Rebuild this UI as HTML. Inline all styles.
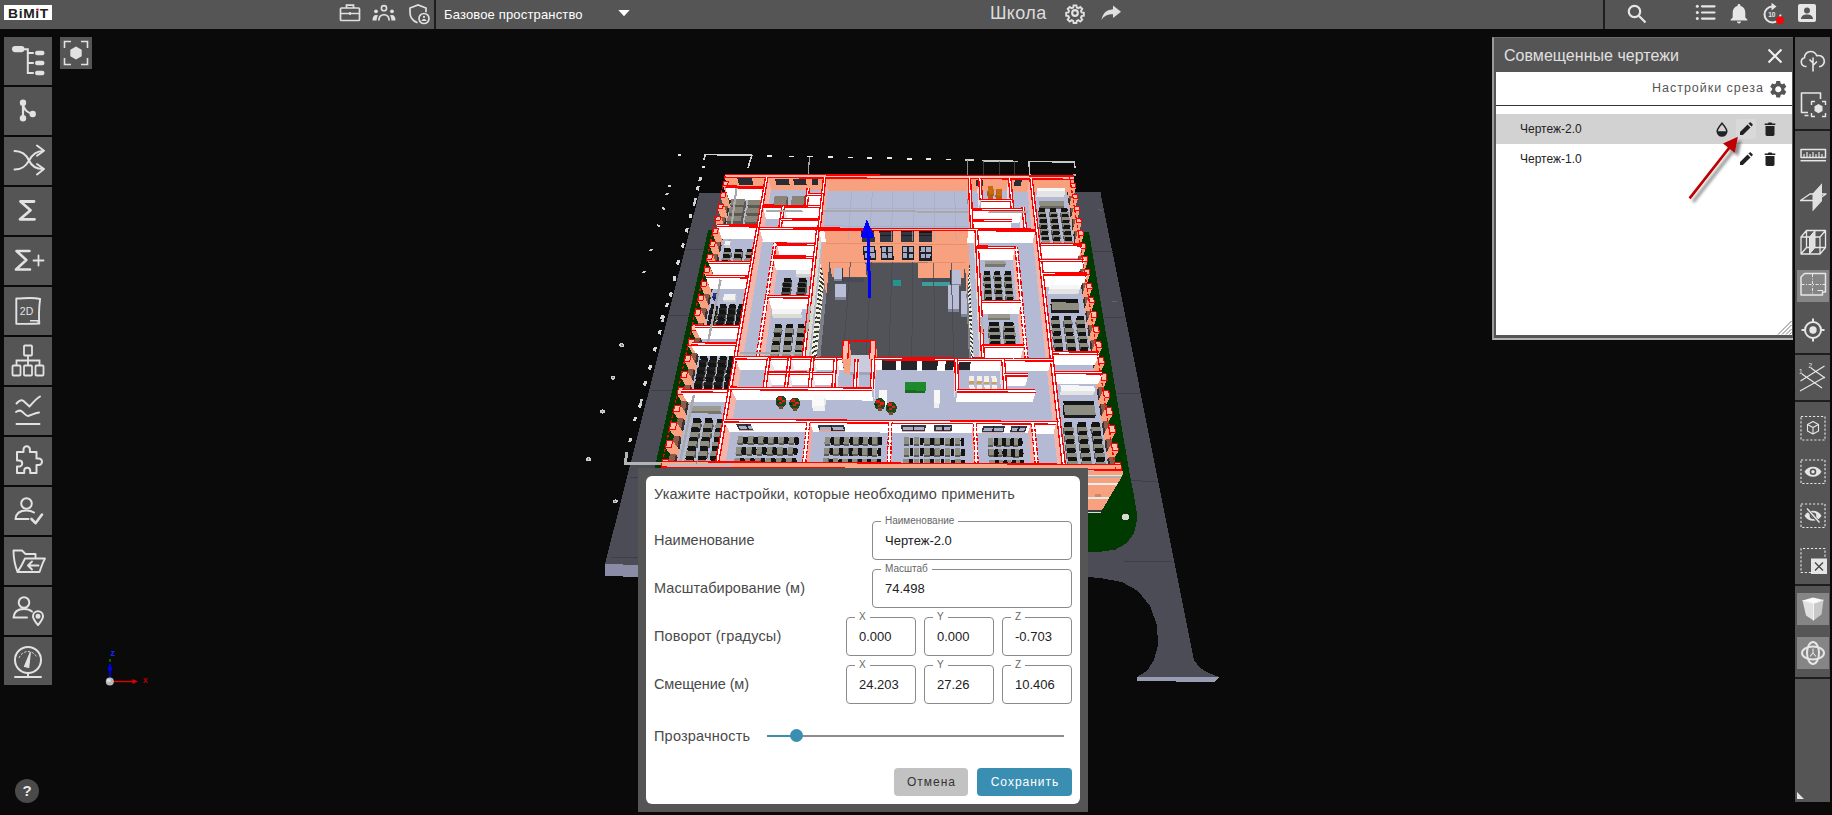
<!DOCTYPE html>
<html lang="ru">
<head>
<meta charset="utf-8">
<title>BIMIT - Школа</title>
<style>
*{box-sizing:border-box;margin:0;padding:0}
html,body{width:1832px;height:815px;overflow:hidden;background:#0a0a0a;font-family:"Liberation Sans",sans-serif;}
.abs{position:absolute}
#topbar{position:absolute;left:0;top:0;width:1832px;height:29px;background:#555555;}
#topbar .sep{position:absolute;top:0;width:2px;height:29px;background:#1e1e1e}
#logo{position:absolute;left:4px;top:5px;width:48px;height:15px;background:#fff;color:#222;font-weight:bold;font-size:12px;line-height:15px;text-align:center;letter-spacing:0.6px}
.lb{position:absolute;left:4px;width:48px;height:48px;background:#555555}
.lb svg{position:absolute;left:0;top:0;width:48px;height:48px}
#fit{position:absolute;left:60px;top:37px;width:32px;height:32px;background:#555555}
#space{position:absolute;left:444px;top:0;height:29px;line-height:29px;color:#fff;font-size:13px;letter-spacing:0.16px;white-space:nowrap}
#title{position:absolute;left:990px;top:0;height:27px;line-height:27px;color:#dcdcdc;font-size:18px;letter-spacing:0.36px;white-space:nowrap}
#rbar{position:absolute;left:1795px;top:37px;width:35px;height:765px;background:#555555}
#rbar .hs{position:absolute;left:0;width:35px;height:2px;background:#1e1e1e}
#rbar .hl{position:absolute;left:2px;width:32px;height:32px;background:#858585}
#panel{position:absolute;left:1492px;top:37px;width:301px;height:303px;background:#555555;border-left:2px solid #9a9a9a;border-top:1px solid #6a6a6a;border-bottom:2px solid #b2b2b2}
#panel .body{position:absolute;left:2px;top:34px;width:296px;height:263px;background:#fff}
#panel .ttl{position:absolute;left:10px;top:0;height:34px;line-height:35px;font-size:16px;letter-spacing:0.03px;color:#e0e0e0;white-space:nowrap}
#panel .set{position:absolute;right:28px;top:0;height:33px;line-height:33px;font-size:12.5px;letter-spacing:0.97px;color:#555;white-space:nowrap}
#panel .line{position:absolute;left:0;top:33px;width:296px;height:1px;background:#333}
.row{position:absolute;left:0;width:296px;height:30px;font-size:12px;line-height:30px;color:#222;padding-left:24px;white-space:nowrap}
.row.sel{background:#d2d2d2}
#dlg{position:absolute;left:638px;top:468px;width:450px;height:344px;background:#555555}
#dlg .in{position:absolute;left:8px;top:8px;width:434px;height:328px;background:#fff;border-radius:6px}
.dl{position:absolute;left:654px;font-size:14.5px;color:#4a4a4a;white-space:nowrap;height:20px;line-height:20px}
.fld{position:absolute;height:39px;border:1px solid #8a8a8a;border-radius:4px;background:#fff}
.fld .lab{position:absolute;left:8px;top:-6px;height:10px;line-height:10px;font-size:10px;color:#666;background:#fff;padding:0 4px;white-space:nowrap}
.fld .val{position:absolute;left:12px;top:0;height:37px;line-height:38px;font-size:13px;color:#222;white-space:nowrap}
.btn{position:absolute;top:768px;height:28px;line-height:28px;border-radius:4px;font-size:12px;letter-spacing:1px;text-indent:1px;text-align:center;white-space:nowrap}
</style>
</head>
<body>
<svg class="abs" style="left:0;top:0" width="1832" height="815" viewBox="0 0 1832 815" shape-rendering="crispEdges">
<polygon points="699.2,193.1 1100.4,191.9 1194,660 1200,668 1209,673 1219,677 1214,682 1137,680 1137,677 1147,671 1154,660 1158,645 1157,625 1150,606 1138,591 1122,582 1100,578 1088,577 1088,577 640,577 605,576 605,564" fill="#4c4c56" />
<polygon points="605,564 640,565 640,577 605,576" fill="#8a8ca6" />
<polygon points="1137,677 1219,677 1214,682 1137,681" fill="#9a9cb4" />
<path d="M685.6 249.1L723.8 249.3" stroke="#3e3e48" stroke-width="1"/>
<path d="M1076.5 251.2L1113.2 251.4" stroke="#3e3e48" stroke-width="1"/>
<path d="M669.5 315.1L710.3 315.3" stroke="#3e3e48" stroke-width="1"/>
<path d="M1086.6 317.5L1125.8 317.7" stroke="#3e3e48" stroke-width="1"/>
<path d="M651.2 390.5L694.9 390.7" stroke="#3e3e48" stroke-width="1"/>
<path d="M1098.1 393.3L1140.1 393.6" stroke="#3e3e48" stroke-width="1"/>
<path d="M630.1 477.5L677.1 477.8" stroke="#3e3e48" stroke-width="1"/>
<path d="M1111.5 480.8L1156.7 481.1" stroke="#3e3e48" stroke-width="1"/>
<path d="M610.6 557.4L660.7 557.8" stroke="#3e3e48" stroke-width="1"/>
<path d="M1123.7 561.1L1171.9 561.5" stroke="#3e3e48" stroke-width="1"/>
<polygon points="708.2,229.8 1088.9,231.8 1136.0,511.8 645.6,508.4" fill="#003a00" />
<polygon points="935.1,498.7 1129.7,473.4 1134,495.5 1137,514 1136.4,523.7 1134,533.5 1126.6,543.3 1115.6,549.5 1098.4,552 1088,552 1000,552" fill="#003a00" />
<ellipse cx="1125.500" cy="517" rx="3.800" ry="3.200" fill="#d8d8d0"/>
<polygon points="690.9,368.1 1099.1,370.6 1070.7,188.7 729.4,186.9" fill="#b4b9d4" />
<polygon points="817.6,386.3 970.0,387.2 965.1,262.7 829.5,262.0" fill="#515359" />
<polygon points="824.1,229.5 968.2,230.3 965.1,262.7 829.5,262.0" fill="#f8a17e" />
<polygon points="824.1,229.5 810.6,358.3 817.6,386.3 829.5,262.0" fill="#c9c6b4" />
<polygon points="968.2,230.3 973.8,359.3 970.0,387.2 965.1,262.7" fill="#c9c6b4" />
<polygon points="824.1,229.5 820.6,263.0 826.4,294.4 829.5,262.0" fill="#f8a17e" />
<polygon points="968.2,230.3 969.7,263.8 966.4,295.2 965.1,262.7" fill="#f8a17e" />
<polygon points="829.5,262.0 865.3,262.2 866.8,277.5 832.1,277.4" fill="#f8a17e" />
<polygon points="918.5,262.5 965.1,262.7 963.7,278.1 918.4,277.8" fill="#f8a17e" />
<polygon points="833,277.5 864,277.5 864,281.5 834,281.5" fill="#484a58" />
<polygon points="922,277.5 959,277.5 958.5,282 922,282" fill="#484a58" />
<polygon points="922,281.5 950,282 950,286 922,285.5" fill="#3f9d98" />
<polygon points="893,279.5 901,279.5 901,285.5 893,285.5" fill="#22968c" />
<polygon points="893.5,263 900.5,263 900.5,280 893.5,280" fill="#50525e" />
<polygon points="833.5,268 842,268 842,279 833.5,279" fill="#b9bdd6" />
<polygon points="833.5,279 842,279 842,281 833.5,281" fill="#7f8398" />
<polygon points="951.2,269.8 960.6,269.8 960.6,283.5 951.2,283.5" fill="#b9bdd6" />
<polygon points="951.2,283.5 960.6,283.5 960.6,285.5 951.2,285.5" fill="#7f8398" />
<polygon points="835.4,283.5 845.8,283.5 845.8,297 835.4,297" fill="#b9bdd6" />
<polygon points="835.4,297 845.8,297 845.8,300 835.4,300" fill="#7f8398" />
<polygon points="947.9,285 959,285 959,309 947.9,309" fill="#b9bdd6" />
<polygon points="947.9,309 959,309 959,312 947.9,312" fill="#7f8398" />
<polygon points="961.4,290.7 970.2,290.7 970.2,314 961.4,314" fill="#b9bdd6" />
<polygon points="961.4,314 970.2,314 970.2,317 961.4,317" fill="#7f8398" />
<polygon points="842,268 843.3,268 843.3,281 842,281" fill="#33343c" />
<polygon points="950,270 951.2,270 951.2,284 950,284" fill="#33343c" />
<polygon points="861.2,231.1 874.1,231.2 874.9,242.2 862.3,242.1" fill="#34363f" />
<polygon points="861.5,234.6 874.3,234.7 874.4,236.1 861.7,236.0" fill="#1c1c22" />
<polygon points="861.2,231.1 874.1,231.2 874.1,232.3 861.3,232.2" fill="#15151a" />
<polygon points="862.6,245.6 875.2,245.7 876.3,260.3 864.1,260.2" fill="#1f2027" />
<polygon points="864.0,247.1 868.3,247.1 868.7,251.5 864.4,251.4" fill="#a4a9c4" />
<polygon points="864.6,253.2 868.8,253.2 869.2,257.7 865.1,257.7" fill="#a4a9c4" />
<polygon points="869.8,247.1 874.0,247.1 874.4,251.5 870.2,251.5" fill="#a4a9c4" />
<polygon points="870.3,253.2 874.5,253.3 874.9,257.8 870.7,257.8" fill="#a4a9c4" />
<polygon points="879.4,231.2 892.5,231.3 893.0,242.3 880.1,242.2" fill="#34363f" />
<polygon points="879.6,234.7 892.6,234.8 892.7,236.2 879.7,236.1" fill="#1c1c22" />
<polygon points="879.4,231.2 892.5,231.3 892.5,232.4 879.5,232.3" fill="#15151a" />
<polygon points="880.4,245.7 893.1,245.8 893.7,260.4 881.3,260.3" fill="#1f2027" />
<polygon points="881.7,247.2 886.1,247.2 886.3,251.6 882.0,251.5" fill="#a4a9c4" />
<polygon points="882.1,253.3 886.4,253.3 886.7,257.8 882.4,257.8" fill="#a4a9c4" />
<polygon points="887.6,247.2 891.9,247.2 892.1,251.6 887.8,251.6" fill="#a4a9c4" />
<polygon points="887.9,253.3 892.2,253.4 892.4,257.9 888.1,257.9" fill="#a4a9c4" />
<polygon points="901.1,231.3 914.2,231.4 914.3,242.4 901.4,242.3" fill="#34363f" />
<polygon points="901.2,234.9 914.2,234.9 914.2,236.3 901.3,236.2" fill="#1c1c22" />
<polygon points="901.1,231.3 914.2,231.4 914.2,232.5 901.2,232.4" fill="#15151a" />
<polygon points="901.5,245.9 914.3,245.9 914.3,260.5 901.9,260.4" fill="#1f2027" />
<polygon points="902.8,247.3 907.2,247.3 907.2,251.7 903.0,251.7" fill="#a4a9c4" />
<polygon points="903.0,253.4 907.3,253.5 907.3,258.0 903.1,257.9" fill="#a4a9c4" />
<polygon points="908.7,247.3 913.0,247.4 913.0,251.7 908.8,251.7" fill="#a4a9c4" />
<polygon points="908.8,253.5 913.0,253.5 913.1,258.0 908.8,258.0" fill="#a4a9c4" />
<polygon points="919.4,231.4 932.5,231.5 932.1,242.5 919.3,242.4" fill="#34363f" />
<polygon points="919.4,235.0 932.4,235.0 932.3,236.4 919.4,236.3" fill="#1c1c22" />
<polygon points="919.4,231.4 932.5,231.5 932.4,232.6 919.4,232.5" fill="#15151a" />
<polygon points="919.3,246.0 932.0,246.0 931.6,260.6 919.2,260.5" fill="#1f2027" />
<polygon points="920.6,247.4 924.9,247.4 924.8,251.8 920.5,251.8" fill="#a4a9c4" />
<polygon points="920.5,253.5 924.8,253.5 924.7,258.1 920.5,258.0" fill="#a4a9c4" />
<polygon points="926.4,247.4 930.7,247.4 930.6,251.8 926.3,251.8" fill="#a4a9c4" />
<polygon points="926.3,253.6 930.6,253.6 930.4,258.1 926.2,258.1" fill="#a4a9c4" />
<path d="M826.4 243.5L966.9 244.3" stroke="#d98a68" stroke-width="0.700"/>
<path d="M829.5 262.0L965.1 262.7" stroke="#d98a68" stroke-width="0.700"/>
<path d="M842.9 360.5L850.4 262.1" stroke="#484a50" stroke-width="0.800"/>
<path d="M865.8 360.7L871.2 262.2" stroke="#484a50" stroke-width="0.800"/>
<path d="M888.8 360.8L892.1 262.3" stroke="#484a50" stroke-width="0.800"/>
<path d="M911.7 360.9L912.9 262.4" stroke="#484a50" stroke-width="0.800"/>
<path d="M934.6 361.1L933.8 262.5" stroke="#484a50" stroke-width="0.800"/>
<path d="M953.7 361.2L951.2 262.6" stroke="#484a50" stroke-width="0.800"/>
<polygon points="810.6,358.3 810.8,356.4 815.1,373.7 814.9,375.5" fill="#f2f2e2" />
<polygon points="811.1,357.9 811.3,356.3 814.9,371.1 814.8,372.6" fill="#3c3c38" />
<polygon points="810.9,354.9 811.1,353.0 815.4,370.3 815.2,372.2" fill="#f2f2e2" />
<polygon points="811.5,354.4 811.7,352.9 815.3,367.7 815.1,369.2" fill="#3c3c38" />
<polygon points="811.3,351.4 811.5,349.5 815.7,367.0 815.5,368.8" fill="#f2f2e2" />
<polygon points="811.8,351.0 812.0,349.4 815.6,364.3 815.5,365.8" fill="#3c3c38" />
<polygon points="811.7,348.0 811.9,346.1 816.1,363.6 815.9,365.5" fill="#f2f2e2" />
<polygon points="812.2,347.6 812.4,346.0 815.9,361.0 815.8,362.5" fill="#3c3c38" />
<polygon points="812.0,344.6 812.2,342.7 816.4,360.3 816.2,362.1" fill="#f2f2e2" />
<polygon points="812.6,344.2 812.7,342.7 816.3,357.7 816.1,359.2" fill="#3c3c38" />
<polygon points="812.4,341.2 812.6,339.3 816.7,357.0 816.5,358.8" fill="#f2f2e2" />
<polygon points="812.9,340.8 813.1,339.3 816.6,354.4 816.5,355.9" fill="#3c3c38" />
<polygon points="812.7,337.8 812.9,336.0 817.0,353.8 816.9,355.6" fill="#f2f2e2" />
<polygon points="813.3,337.5 813.4,336.0 816.9,351.2 816.8,352.6" fill="#3c3c38" />
<polygon points="813.1,334.5 813.3,332.7 817.4,350.5 817.2,352.3" fill="#f2f2e2" />
<polygon points="813.6,334.1 813.8,332.7 817.3,347.9 817.1,349.4" fill="#3c3c38" />
<polygon points="813.4,331.2 813.6,329.4 817.7,347.3 817.5,349.1" fill="#f2f2e2" />
<polygon points="814.0,330.8 814.1,329.4 817.6,344.7 817.4,346.1" fill="#3c3c38" />
<polygon points="813.8,327.9 814.0,326.1 818.0,344.1 817.8,345.8" fill="#f2f2e2" />
<polygon points="814.3,327.6 814.5,326.1 817.9,341.5 817.8,342.9" fill="#3c3c38" />
<polygon points="814.1,324.6 814.3,322.8 818.3,340.9 818.2,342.6" fill="#f2f2e2" />
<polygon points="814.6,324.3 814.8,322.8 818.2,338.3 818.1,339.7" fill="#3c3c38" />
<polygon points="814.5,321.3 814.6,319.5 818.6,337.7 818.5,339.4" fill="#f2f2e2" />
<polygon points="815.0,321.1 815.1,319.6 818.5,335.1 818.4,336.5" fill="#3c3c38" />
<polygon points="814.8,318.1 815.0,316.3 819.0,334.5 818.8,336.3" fill="#f2f2e2" />
<polygon points="815.3,317.8 815.5,316.4 818.8,332.0 818.7,333.4" fill="#3c3c38" />
<polygon points="815.1,314.9 815.3,313.1 819.3,331.4 819.1,333.1" fill="#f2f2e2" />
<polygon points="815.7,314.6 815.8,313.2 819.2,328.8 819.0,330.2" fill="#3c3c38" />
<polygon points="815.5,311.7 815.7,309.9 819.6,328.3 819.4,330.0" fill="#f2f2e2" />
<polygon points="816.0,311.4 816.1,310.0 819.5,325.7 819.3,327.1" fill="#3c3c38" />
<polygon points="815.8,308.5 816.0,306.7 819.9,325.2 819.7,326.9" fill="#f2f2e2" />
<polygon points="816.3,308.3 816.5,306.9 819.8,322.6 819.6,324.0" fill="#3c3c38" />
<polygon points="816.1,305.3 816.3,303.6 820.2,322.1 820.0,323.8" fill="#f2f2e2" />
<polygon points="816.6,305.1 816.8,303.7 820.1,319.5 819.9,320.9" fill="#3c3c38" />
<polygon points="816.5,302.2 816.7,300.5 820.5,319.0 820.3,320.7" fill="#f2f2e2" />
<polygon points="817.0,302.0 817.1,300.6 820.4,316.5 820.3,317.8" fill="#3c3c38" />
<polygon points="816.8,299.1 817.0,297.3 820.8,316.0 820.6,317.7" fill="#f2f2e2" />
<polygon points="817.3,298.9 817.4,297.5 820.7,313.4 820.6,314.8" fill="#3c3c38" />
<polygon points="817.1,296.0 817.3,294.3 821.1,313.0 820.9,314.6" fill="#f2f2e2" />
<polygon points="817.6,295.8 817.8,294.4 821.0,310.4 820.9,311.8" fill="#3c3c38" />
<polygon points="817.4,292.9 817.6,291.2 821.4,310.0 821.2,311.6" fill="#f2f2e2" />
<polygon points="817.9,292.7 818.1,291.4 821.3,307.4 821.2,308.7" fill="#3c3c38" />
<polygon points="817.8,289.8 817.9,288.1 821.7,307.0 821.5,308.6" fill="#f2f2e2" />
<polygon points="818.3,289.7 818.4,288.3 821.6,304.4 821.5,305.7" fill="#3c3c38" />
<polygon points="818.1,286.7 818.3,285.1 822.0,304.0 821.8,305.6" fill="#f2f2e2" />
<polygon points="818.6,286.6 818.7,285.3 821.9,301.4 821.8,302.8" fill="#3c3c38" />
<polygon points="818.4,283.7 818.6,282.0 822.3,301.0 822.1,302.6" fill="#f2f2e2" />
<polygon points="818.9,283.6 819.0,282.3 822.2,298.5 822.1,299.8" fill="#3c3c38" />
<polygon points="818.7,280.7 818.9,279.0 822.6,298.1 822.4,299.7" fill="#f2f2e2" />
<polygon points="819.2,280.6 819.3,279.3 822.5,295.5 822.4,296.8" fill="#3c3c38" />
<polygon points="819.0,277.7 819.2,276.1 822.9,295.1 822.7,296.8" fill="#f2f2e2" />
<polygon points="819.5,277.6 819.7,276.3 822.8,292.6 822.6,293.9" fill="#3c3c38" />
<polygon points="819.4,274.7 819.5,273.1 823.2,292.2 823.0,293.8" fill="#f2f2e2" />
<polygon points="819.8,274.7 820.0,273.3 823.1,289.7 822.9,291.0" fill="#3c3c38" />
<polygon points="819.7,271.8 819.8,270.1 823.5,289.3 823.3,290.9" fill="#f2f2e2" />
<polygon points="820.1,271.7 820.3,270.4 823.4,286.8 823.2,288.1" fill="#3c3c38" />
<polygon points="820.0,268.8 820.1,267.2 823.7,286.5 823.6,288.0" fill="#f2f2e2" />
<polygon points="820.4,268.8 820.6,267.5 823.6,283.9 823.5,285.2" fill="#3c3c38" />
<polygon points="820.3,265.9 820.5,264.3 824.0,283.6 823.9,285.2" fill="#f2f2e2" />
<polygon points="820.7,265.9 820.9,264.6 823.9,281.1 823.8,282.3" fill="#3c3c38" />
<polygon points="814.9,375.5 824.2,282.3 826.4,294.4 817.6,386.3" fill="#7c7e88" />
<polygon points="973.8,359.3 973.7,357.4 971.4,374.7 971.5,376.5" fill="#f2f2e2" />
<polygon points="973.6,358.9 973.5,357.3 971.5,372.0 971.5,373.6" fill="#3c3c38" />
<polygon points="973.7,355.9 973.6,354.0 971.3,371.3 971.3,373.1" fill="#f2f2e2" />
<polygon points="973.4,355.4 973.3,353.9 971.3,368.7 971.4,370.2" fill="#3c3c38" />
<polygon points="973.5,352.4 973.4,350.5 971.1,367.9 971.2,369.8" fill="#f2f2e2" />
<polygon points="973.3,352.0 973.2,350.4 971.2,365.3 971.3,366.8" fill="#3c3c38" />
<polygon points="973.4,349.0 973.3,347.1 971.0,364.6 971.1,366.4" fill="#f2f2e2" />
<polygon points="973.1,348.5 973.0,347.0 971.1,362.0 971.1,363.5" fill="#3c3c38" />
<polygon points="973.2,345.6 973.1,343.7 970.8,361.3 970.9,363.1" fill="#f2f2e2" />
<polygon points="973.0,345.2 972.9,343.6 970.9,358.7 971.0,360.1" fill="#3c3c38" />
<polygon points="973.1,342.2 973.0,340.3 970.7,358.0 970.8,359.8" fill="#f2f2e2" />
<polygon points="972.8,341.8 972.7,340.3 970.8,355.4 970.9,356.8" fill="#3c3c38" />
<polygon points="972.9,338.8 972.9,337.0 970.6,354.7 970.7,356.5" fill="#f2f2e2" />
<polygon points="972.7,338.4 972.6,336.9 970.7,352.1 970.7,353.6" fill="#3c3c38" />
<polygon points="972.8,335.5 972.7,333.6 970.4,351.4 970.5,353.2" fill="#f2f2e2" />
<polygon points="972.5,335.1 972.5,333.6 970.5,348.8 970.6,350.3" fill="#3c3c38" />
<polygon points="972.6,332.1 972.6,330.3 970.3,348.2 970.4,350.0" fill="#f2f2e2" />
<polygon points="972.4,331.8 972.3,330.3 970.4,345.6 970.5,347.1" fill="#3c3c38" />
<polygon points="972.5,328.8 972.4,327.0 970.2,345.0 970.3,346.8" fill="#f2f2e2" />
<polygon points="972.2,328.5 972.2,327.0 970.3,342.4 970.3,343.8" fill="#3c3c38" />
<polygon points="972.4,325.5 972.3,323.7 970.0,341.8 970.1,343.6" fill="#f2f2e2" />
<polygon points="972.1,325.2 972.0,323.8 970.1,339.2 970.2,340.6" fill="#3c3c38" />
<polygon points="972.2,322.3 972.1,320.5 969.9,338.6 970.0,340.4" fill="#f2f2e2" />
<polygon points="972.0,322.0 971.9,320.5 970.0,336.0 970.1,337.5" fill="#3c3c38" />
<polygon points="972.1,319.0 972.0,317.2 969.8,335.5 969.9,337.2" fill="#f2f2e2" />
<polygon points="971.8,318.8 971.7,317.3 969.9,332.9 969.9,334.3" fill="#3c3c38" />
<polygon points="971.9,315.8 971.9,314.0 969.7,332.3 969.7,334.0" fill="#f2f2e2" />
<polygon points="971.7,315.5 971.6,314.1 969.7,329.7 969.8,331.1" fill="#3c3c38" />
<polygon points="971.8,312.6 971.7,310.8 969.5,329.2 969.6,330.9" fill="#f2f2e2" />
<polygon points="971.5,312.4 971.5,310.9 969.6,326.6 969.7,328.0" fill="#3c3c38" />
<polygon points="971.7,309.4 971.6,307.7 969.4,326.1 969.5,327.8" fill="#f2f2e2" />
<polygon points="971.4,309.2 971.3,307.8 969.5,323.5 969.5,324.9" fill="#3c3c38" />
<polygon points="971.5,306.2 971.4,304.5 969.3,323.0 969.4,324.7" fill="#f2f2e2" />
<polygon points="971.3,306.0 971.2,304.6 969.4,320.4 969.4,321.8" fill="#3c3c38" />
<polygon points="971.4,303.1 971.3,301.4 969.2,319.9 969.2,321.6" fill="#f2f2e2" />
<polygon points="971.1,302.9 971.1,301.5 969.2,317.4 969.3,318.7" fill="#3c3c38" />
<polygon points="971.2,300.0 971.2,298.2 969.0,316.9 969.1,318.5" fill="#f2f2e2" />
<polygon points="971.0,299.8 970.9,298.4 969.1,314.3 969.2,315.7" fill="#3c3c38" />
<polygon points="971.1,296.8 971.0,295.1 968.9,313.8 969.0,315.5" fill="#f2f2e2" />
<polygon points="970.9,296.7 970.8,295.3 969.0,311.3 969.0,312.6" fill="#3c3c38" />
<polygon points="971.0,293.7 970.9,292.1 968.8,310.8 968.9,312.5" fill="#f2f2e2" />
<polygon points="970.7,293.6 970.7,292.2 968.9,308.3 968.9,309.6" fill="#3c3c38" />
<polygon points="970.8,290.7 970.8,289.0 968.7,307.8 968.7,309.5" fill="#f2f2e2" />
<polygon points="970.6,290.6 970.5,289.2 968.7,305.3 968.8,306.6" fill="#3c3c38" />
<polygon points="970.7,287.6 970.6,285.9 968.5,304.8 968.6,306.5" fill="#f2f2e2" />
<polygon points="970.5,287.5 970.4,286.1 968.6,302.3 968.7,303.6" fill="#3c3c38" />
<polygon points="970.6,284.6 970.5,282.9 968.4,301.9 968.5,303.5" fill="#f2f2e2" />
<polygon points="970.3,284.5 970.3,283.1 968.5,299.3 968.6,300.6" fill="#3c3c38" />
<polygon points="970.4,281.6 970.4,279.9 968.3,298.9 968.4,300.5" fill="#f2f2e2" />
<polygon points="970.2,281.5 970.1,280.1 968.4,296.4 968.4,297.7" fill="#3c3c38" />
<polygon points="970.3,278.6 970.2,276.9 968.2,296.0 968.2,297.6" fill="#f2f2e2" />
<polygon points="970.1,278.5 970.0,277.2 968.3,293.4 968.3,294.8" fill="#3c3c38" />
<polygon points="970.2,275.6 970.1,273.9 968.1,293.1 968.1,294.7" fill="#f2f2e2" />
<polygon points="969.9,275.5 969.9,274.2 968.1,290.5 968.2,291.8" fill="#3c3c38" />
<polygon points="970.0,272.6 970.0,271.0 967.9,290.2 968.0,291.8" fill="#f2f2e2" />
<polygon points="969.8,272.6 969.7,271.2 968.0,287.6 968.1,288.9" fill="#3c3c38" />
<polygon points="969.9,269.7 969.8,268.0 967.8,287.3 967.9,288.9" fill="#f2f2e2" />
<polygon points="969.7,269.6 969.6,268.3 967.9,284.8 968.0,286.0" fill="#3c3c38" />
<polygon points="969.8,266.7 969.7,265.1 967.7,284.4 967.8,286.0" fill="#f2f2e2" />
<polygon points="969.6,266.7 969.5,265.4 967.8,281.9 967.8,283.2" fill="#3c3c38" />
<polygon points="971.5,376.5 967.7,283.1 966.4,295.2 970.0,387.2" fill="#7c7e88" />
<polygon points="668.2,475.5 1116.0,478.5 1099.0,369.6 691.2,367.1" fill="#b4b9d4" />
<path d="M847.9 240.7L852.0 188.8" stroke="#a6abc6" stroke-width="0.700"/>
<path d="M869.5 240.8L872.5 188.9" stroke="#a6abc6" stroke-width="0.700"/>
<path d="M891.2 240.9L893.0 189.0" stroke="#a6abc6" stroke-width="0.700"/>
<path d="M912.8 241.1L913.5 189.1" stroke="#a6abc6" stroke-width="0.700"/>
<path d="M934.5 241.2L934.0 189.2" stroke="#a6abc6" stroke-width="0.700"/>
<path d="M956.2 241.3L954.6 189.3" stroke="#a6abc6" stroke-width="0.700"/>
<path d="M824.2 225.9L969.9 226.7" stroke="#a6abc6" stroke-width="0.700"/>
<path d="M826.0 208.1L969.1 208.9" stroke="#a6abc6" stroke-width="0.700"/>
<rect x="766.5" y="155.0" width="5" height="1.6" fill="#e8e8e8" transform="rotate(0 769.0 155.8)"/>
<rect x="788.5" y="155.5" width="5" height="1.6" fill="#e8e8e8" transform="rotate(0 791.0 156.3)"/>
<rect x="827.9" y="156.2" width="5" height="1.6" fill="#e8e8e8" transform="rotate(0 830.4 157.0)"/>
<rect x="847.5" y="156.7" width="5" height="1.6" fill="#e8e8e8" transform="rotate(0 850.0 157.5)"/>
<rect x="867.1" y="156.9" width="5" height="1.6" fill="#e8e8e8" transform="rotate(0 869.6 157.7)"/>
<rect x="886.8" y="157.4" width="5" height="1.6" fill="#e8e8e8" transform="rotate(0 889.3 158.2)"/>
<rect x="906.5" y="157.9" width="5" height="1.6" fill="#e8e8e8" transform="rotate(0 909.0 158.7)"/>
<rect x="925.5" y="158.2" width="5" height="1.6" fill="#e8e8e8" transform="rotate(0 928.0 159.0)"/>
<rect x="945.5" y="158.7" width="5" height="1.6" fill="#e8e8e8" transform="rotate(0 948.0 159.5)"/>
<rect x="677.9" y="153.5" width="3" height="2" fill="#e8e8e8" transform="rotate(0 679.4 154.5)"/>
<path d="M704 160L705.2 154.5L751.8 155.3L748 168" stroke="#d0d0d0" stroke-width="1.6" fill="none"/>
<rect x="701.5" y="166.1" width="3" height="1.5" fill="#e8e8e8" transform="rotate(0 703.0 166.8)"/>
<path d="M809.5 156.5L808.3 174" stroke="#a0a0a0" stroke-width="1.2" fill="none"/>
<rect x="806.5" y="155.7" width="6" height="1.6" fill="#e8e8e8" transform="rotate(0 809.5 156.5)"/>
<path d="M965 160.2L973.6 160.3" stroke="#d0d0d0" stroke-width="1.6" fill="none"/>
<path d="M967.5 160L967.8 204" stroke="#8a8a8a" stroke-width="1.1" fill="none"/>
<path d="M982 160.7L1017.8 161.4" stroke="#c8c8c8" stroke-width="1.6" fill="none"/>
<path d="M983.5 161L984.0 176" stroke="#555555" stroke-width="0.7" fill="none"/>
<path d="M999.4 161L999.9 176" stroke="#555555" stroke-width="0.7" fill="none"/>
<path d="M1014 161L1014.5 176" stroke="#555555" stroke-width="0.7" fill="none"/>
<path d="M1030.3 185L1029 161.4L1074.3 162L1075 168" stroke="#c8c8c8" stroke-width="1.6" fill="none"/>
<rect x="1073.3" y="174.4" width="3" height="2" fill="#b0b0b0" transform="rotate(0 1074.8 175.4)"/>
<path d="M1098 209L1102 211" stroke="#6a6a72" stroke-width="0.8" fill="none"/>
<path d="M1112 301L1117 302" stroke="#6a6a72" stroke-width="0.8" fill="none"/>
<rect x="698.8" y="176.8" width="3" height="4.5" fill="#d8d8d8" transform="rotate(14 700.3 179.0)"/>
<rect x="696.3" y="185.8" width="3" height="4.5" fill="#d8d8d8" transform="rotate(14 697.8 188.0)"/>
<rect x="689.0" y="213.8" width="3" height="4.5" fill="#d8d8d8" transform="rotate(14 690.5 216.0)"/>
<rect x="685.3" y="227.8" width="3" height="4.5" fill="#d8d8d8" transform="rotate(14 686.8 230.0)"/>
<rect x="681.5" y="243.2" width="3" height="4.5" fill="#d8d8d8" transform="rotate(14 683.0 245.4)"/>
<rect x="676.5" y="260.2" width="3" height="4.5" fill="#d8d8d8" transform="rotate(14 678.0 262.5)"/>
<rect x="673.0" y="276.2" width="3" height="4.5" fill="#d8d8d8" transform="rotate(14 674.5 278.5)"/>
<rect x="669.3" y="292.2" width="3" height="4.5" fill="#d8d8d8" transform="rotate(14 670.8 294.5)"/>
<rect x="665.5" y="302.8" width="3" height="4.5" fill="#d8d8d8" transform="rotate(14 667.0 305.0)"/>
<rect x="660.5" y="314.8" width="3" height="4.5" fill="#d8d8d8" transform="rotate(14 662.0 317.0)"/>
<rect x="658.3" y="329.8" width="3" height="4.5" fill="#d8d8d8" transform="rotate(14 659.8 332.0)"/>
<rect x="653.4" y="346.8" width="3" height="4.5" fill="#d8d8d8" transform="rotate(14 654.9 349.0)"/>
<rect x="648.5" y="365.2" width="3" height="4.5" fill="#d8d8d8" transform="rotate(14 650.0 367.5)"/>
<rect x="643.5" y="381.2" width="3" height="4.5" fill="#d8d8d8" transform="rotate(14 645.0 383.5)"/>
<rect x="638.5" y="403.2" width="3" height="4.5" fill="#d8d8d8" transform="rotate(14 640.0 405.5)"/>
<rect x="633.5" y="416.8" width="3" height="4.5" fill="#d8d8d8" transform="rotate(14 635.0 419.0)"/>
<rect x="628.8" y="437.8" width="3" height="4.5" fill="#d8d8d8" transform="rotate(14 630.3 440.0)"/>
<rect x="693.5" y="198.0" width="2.5" height="8" fill="#d0d0d0" transform="rotate(14 694.7 202.0)"/>
<rect x="661.8" y="315.5" width="2.5" height="7" fill="#d0d0d0" transform="rotate(14 663.0 319.0)"/>
<rect x="639.8" y="398.5" width="2.5" height="7" fill="#d0d0d0" transform="rotate(14 641.0 402.0)"/>
<rect x="668.1" y="185.0" width="3" height="2" fill="#d0d0d0" transform="rotate(14 669.6 186.0)"/>
<rect x="665.5" y="193.0" width="3" height="2" fill="#d0d0d0" transform="rotate(14 667.0 194.0)"/>
<rect x="662.0" y="207.5" width="3" height="2" fill="#d0d0d0" transform="rotate(14 663.5 208.5)"/>
<rect x="657.0" y="224.7" width="3" height="2" fill="#d0d0d0" transform="rotate(14 658.5 225.7)"/>
<rect x="649.5" y="249.0" width="3" height="2" fill="#d0d0d0" transform="rotate(14 651.0 250.0)"/>
<rect x="642.5" y="271.0" width="3" height="2" fill="#d0d0d0" transform="rotate(14 644.0 272.0)"/>
<ellipse cx="621.7" cy="345.2" rx="2.600" ry="2.100" fill="#cfcfcf"/><ellipse cx="621.7" cy="345.2" rx="1" ry="0.800" fill="#777"/>
<ellipse cx="613" cy="377.8" rx="2.600" ry="2.100" fill="#cfcfcf"/><ellipse cx="613" cy="377.8" rx="1" ry="0.800" fill="#777"/>
<ellipse cx="602.5" cy="411.5" rx="2.600" ry="2.100" fill="#cfcfcf"/><ellipse cx="602.5" cy="411.5" rx="1" ry="0.800" fill="#777"/>
<ellipse cx="588.5" cy="459.2" rx="2.600" ry="2.100" fill="#cfcfcf"/><ellipse cx="588.5" cy="459.2" rx="1" ry="0.800" fill="#777"/>
<ellipse cx="615.3" cy="501.4" rx="2.600" ry="2.100" fill="#cfcfcf"/><ellipse cx="615.3" cy="501.4" rx="1" ry="0.800" fill="#777"/>
<path d="M626.5 452L625.5 463.5L740 464.5" stroke="#b4b4b4" stroke-width="3" fill="none"/>
<polygon points="731.2,190.0 732.6,183.1 733.8,187.0 732.4,193.8" fill="#3a3030"/>
<polygon points="726.7,190.0 731.2,190.0 732.6,183.1 728.1,183.1" fill="#8b5a48"/>
<polygon points="724.7,177.5 751.6,177.6 755.0,190.2 728.7,190.0" fill="#f8a17e"/>
<polygon points="724.7,177.5 751.6,177.6 752.2,174.5 725.4,174.3" fill="#f7c0b0"/>
<path d="M724.7 177.5L751.6 177.6" stroke="#ff0000" stroke-width="1.3" fill="none"/>
<path d="M725.4 174.3L752.2 174.5" stroke="#ff0000" stroke-width="1.3" fill="none"/>
<polygon points="737.2,178.4 754.6,178.5 756.4,184.9 739.1,184.9" fill="#2a2b33"/>
<polygon points="727.5,185.6 728.4,181.3 732.4,193.8 731.5,198.1" fill="#f8a17e"/>
<polygon points="722.9,185.5 727.5,185.6 731.5,198.1 727.0,198.1" fill="#f8a17e"/>
<polygon points="722.9,185.5 727.5,185.6 728.4,181.3 723.9,181.3" fill="#f7c0b0"/>
<polygon points="722.9,185.5 727.5,185.6 728.4,181.3 723.9,181.3" fill="none" stroke="#ff0000" stroke-width="1"/>
<polygon points="751.6,177.6 778.4,177.7 781.3,190.3 755.0,190.2" fill="#f8a17e"/>
<polygon points="751.6,177.6 778.4,177.7 778.9,174.6 752.2,174.5" fill="#f7c0b0"/>
<path d="M751.6 177.6L778.4 177.7" stroke="#ff0000" stroke-width="1.3" fill="none"/>
<path d="M752.2 174.5L778.9 174.6" stroke="#ff0000" stroke-width="1.3" fill="none"/>
<polygon points="1068.3,191.7 1067.3,184.8 1066.3,188.7 1067.3,195.6" fill="#3a3030"/>
<polygon points="1068.3,191.7 1072.8,191.8 1071.7,184.8 1067.3,184.8" fill="#8b5a48"/>
<polygon points="1047.6,179.1 1074.5,179.2 1071.2,191.8 1044.8,191.7" fill="#f8a17e"/>
<polygon points="1047.6,179.1 1074.5,179.2 1074.0,176.1 1047.2,176.0" fill="#f7c0b0"/>
<path d="M1047.6 179.1L1074.5 179.2" stroke="#ff0000" stroke-width="1.3" fill="none"/>
<path d="M1047.2 176.0L1074.0 176.1" stroke="#ff0000" stroke-width="1.3" fill="none"/>
<polygon points="728.8,201.3 730.3,194.3 731.5,198.1 730.0,205.1" fill="#3a3030"/>
<polygon points="724.2,201.3 728.8,201.3 730.3,194.3 725.8,194.2" fill="#8b5a48"/>
<polygon points="725.3,187.8 745.0,187.9 748.6,200.4 729.3,200.3" fill="#ffffff"/>
<polygon points="725.3,187.8 745.0,187.9 745.4,186.2 725.6,186.1" fill="#ffffff"/>
<path d="M725.3 187.8L745.0 187.9" stroke="#ff0000" stroke-width="1.3" fill="none"/>
<path d="M725.6 186.1L745.4 186.2" stroke="#ff0000" stroke-width="1.3" fill="none"/>
<polygon points="778.4,177.7 805.3,177.9 807.6,190.4 781.3,190.3" fill="#f8a17e"/>
<polygon points="778.4,177.7 805.3,177.9 805.7,174.7 778.9,174.6" fill="#f7c0b0"/>
<path d="M778.4 177.7L805.3 177.9" stroke="#ff0000" stroke-width="1.3" fill="none"/>
<path d="M778.9 174.6L805.7 174.7" stroke="#ff0000" stroke-width="1.3" fill="none"/>
<polygon points="766.3,186.6 768.0,177.0 771.1,189.5 769.5,199.2" fill="#f3b5aa"/>
<polygon points="763.8,186.6 766.3,186.6 768.0,177.0 765.5,176.9" fill="#ffffff"/>
<path d="M763.8 186.6L765.5 176.9" stroke="#ff0000" stroke-width="1.3" fill="none"/>
<path d="M766.3 186.6L768.0 177.0" stroke="#ff0000" stroke-width="1.3" fill="none"/>
<polygon points="774.9,178.6 788.5,178.6 789.8,185.1 776.4,185.0" fill="#2a2b33"/>
<polygon points="1020.6,179.0 1047.6,179.1 1044.8,191.7 1018.4,191.5" fill="#f8a17e"/>
<polygon points="1020.6,179.0 1047.6,179.1 1047.2,176.0 1020.3,175.8" fill="#f7c0b0"/>
<path d="M1020.6 179.0L1047.6 179.1" stroke="#ff0000" stroke-width="1.3" fill="none"/>
<path d="M1020.3 175.8L1047.2 176.0" stroke="#ff0000" stroke-width="1.3" fill="none"/>
<polygon points="1071.3,187.3 1070.6,183.0 1067.3,195.6 1068.0,199.9" fill="#f8a17e"/>
<polygon points="1071.3,187.3 1075.9,187.4 1072.5,199.9 1068.0,199.9" fill="#f8a17e"/>
<polygon points="1071.3,187.3 1075.9,187.4 1075.2,183.1 1070.6,183.0" fill="#f7c0b0"/>
<polygon points="1071.3,187.3 1075.9,187.4 1075.2,183.1 1070.6,183.0" fill="none" stroke="#ff0000" stroke-width="1"/>
<polygon points="793.0,178.7 806.3,178.7 807.4,185.2 794.3,185.1" fill="#2a2b33"/>
<polygon points="805.3,177.9 832.2,178.0 834.0,190.6 807.6,190.4" fill="#f8a17e"/>
<polygon points="805.3,177.9 832.2,178.0 832.5,174.9 805.7,174.7" fill="#f7c0b0"/>
<path d="M805.3 177.9L832.2 178.0" stroke="#ff0000" stroke-width="1.3" fill="none"/>
<path d="M805.7 174.7L832.5 174.9" stroke="#ff0000" stroke-width="1.3" fill="none"/>
<polygon points="745.0,187.9 764.8,188.0 768.0,200.5 748.6,200.4" fill="#ffffff"/>
<polygon points="745.0,187.9 764.8,188.0 765.1,186.3 745.4,186.2" fill="#ffffff"/>
<path d="M745.0 187.9L764.8 188.0" stroke="#ff0000" stroke-width="1.3" fill="none"/>
<path d="M745.4 186.2L765.1 186.3" stroke="#ff0000" stroke-width="1.3" fill="none"/>
<polygon points="725.0,197.1 726.0,192.7 730.0,205.1 729.1,209.5" fill="#f8a17e"/>
<polygon points="720.4,197.0 725.0,197.1 729.1,209.5 724.6,209.5" fill="#f8a17e"/>
<polygon points="720.4,197.0 725.0,197.1 726.0,192.7 721.4,192.6" fill="#f7c0b0"/>
<polygon points="720.4,197.0 725.0,197.1 726.0,192.7 721.4,192.6" fill="none" stroke="#ff0000" stroke-width="1"/>
<polygon points="1037.4,191.3 1065.4,191.4 1063.9,196.9 1036.2,196.8" fill="#e4e4e4"/>
<polygon points="1037.4,191.3 1065.4,191.4 1064.8,187.8 1036.9,187.6" fill="#f6f6f6"/>
<polygon points="993.7,178.8 1020.6,179.0 1018.4,191.5 992.1,191.4" fill="#f8a17e"/>
<polygon points="993.7,178.8 1020.6,179.0 1020.3,175.8 993.5,175.7" fill="#f7c0b0"/>
<path d="M993.7 178.8L1020.6 179.0" stroke="#ff0000" stroke-width="1.3" fill="none"/>
<path d="M993.5 175.7L1020.3 175.8" stroke="#ff0000" stroke-width="1.3" fill="none"/>
<polygon points="811.5,178.8 817.4,178.8 818.5,185.3 812.6,185.2" fill="#2a2b33"/>
<polygon points="743.9,205.2 745.0,199.5 746.3,203.9 745.2,209.6" fill="#5a5a52"/>
<polygon points="730.2,205.2 743.9,205.2 745.2,209.6 731.6,209.5" fill="#5a5a52"/>
<polygon points="730.2,205.2 743.9,205.2 745.0,199.5 731.3,199.4" fill="#8a8378"/>
<polygon points="832.2,178.0 859.1,178.1 860.3,190.7 834.0,190.6" fill="#f8a17e"/>
<polygon points="832.2,178.0 859.1,178.1 859.3,175.0 832.5,174.9" fill="#f7c0b0"/>
<path d="M832.2 178.0L859.1 178.1" stroke="#ff0000" stroke-width="1.3" fill="none"/>
<path d="M832.5 174.9L859.3 175.0" stroke="#ff0000" stroke-width="1.3" fill="none"/>
<polygon points="1014.8,179.8 1021.8,179.8 1020.7,186.3 1013.8,186.3" fill="#2a2b33"/>
<polygon points="1030.9,188.0 1029.8,178.3 1027.4,190.9 1028.5,200.5" fill="#f3b5aa"/>
<polygon points="1030.9,188.0 1033.4,188.0 1032.2,178.3 1029.8,178.3" fill="#ffffff"/>
<path d="M1030.9 188.0L1029.8 178.3" stroke="#ff0000" stroke-width="1.3" fill="none"/>
<path d="M1033.4 188.0L1032.2 178.3" stroke="#ff0000" stroke-width="1.3" fill="none"/>
<polygon points="966.8,178.7 993.7,178.8 992.1,191.4 965.7,191.3" fill="#f8a17e"/>
<polygon points="966.8,178.7 993.7,178.8 993.5,175.7 966.6,175.6" fill="#f7c0b0"/>
<path d="M966.8 178.7L993.7 178.8" stroke="#ff0000" stroke-width="1.3" fill="none"/>
<path d="M966.6 175.6L993.5 175.7" stroke="#ff0000" stroke-width="1.3" fill="none"/>
<polygon points="1070.1,203.1 1069.0,196.0 1068.0,199.9 1069.0,206.9" fill="#3a3030"/>
<polygon points="1070.1,203.1 1074.6,203.1 1073.5,196.0 1069.0,196.0" fill="#8b5a48"/>
<polygon points="859.1,178.1 886.0,178.3 886.6,190.9 860.3,190.7" fill="#f8a17e"/>
<polygon points="859.1,178.1 886.0,178.3 886.1,175.2 859.3,175.0" fill="#f7c0b0"/>
<path d="M859.1 178.1L886.0 178.3" stroke="#ff0000" stroke-width="1.3" fill="none"/>
<path d="M859.3 175.0L886.1 175.2" stroke="#ff0000" stroke-width="1.3" fill="none"/>
<polygon points="825.0,185.4 825.9,177.2 827.8,189.8 826.9,197.9" fill="#e8b0a4"/>
<polygon points="822.6,185.4 825.0,185.4 825.9,177.2 823.5,177.2" fill="#ffffff"/>
<path d="M822.6 185.4L823.5 177.2" stroke="#ff0000" stroke-width="1.3" fill="none"/>
<path d="M825.0 185.4L825.9 177.2" stroke="#ff0000" stroke-width="1.3" fill="none"/>
<polygon points="726.4,212.9 727.9,205.7 729.1,209.5 727.6,216.7" fill="#3a3030"/>
<polygon points="721.8,212.9 726.4,212.9 727.9,205.7 723.3,205.7" fill="#8b5a48"/>
<polygon points="939.8,178.6 966.8,178.7 965.7,191.3 939.3,191.1" fill="#f8a17e"/>
<polygon points="939.8,178.6 966.8,178.7 966.6,175.6 939.8,175.4" fill="#f7c0b0"/>
<path d="M939.8 178.6L966.8 178.7" stroke="#ff0000" stroke-width="1.3" fill="none"/>
<path d="M939.8 175.4L966.6 175.6" stroke="#ff0000" stroke-width="1.3" fill="none"/>
<polygon points="1009.1,185.8 1008.4,178.2 1006.5,190.8 1007.1,198.3" fill="#e0e0e8"/>
<polygon points="1009.1,185.8 1011.6,185.8 1010.9,178.2 1008.4,178.2" fill="#ffffff"/>
<path d="M1009.1 185.8L1008.4 178.2" stroke="#ff0000" stroke-width="1.3" fill="none"/>
<path d="M1011.6 185.8L1010.9 178.2" stroke="#ff0000" stroke-width="1.3" fill="none"/>
<polygon points="764.6,196.5 766.3,186.6 769.5,199.2 767.8,209.0" fill="#f3b5aa"/>
<polygon points="762.1,196.5 764.6,196.5 766.3,186.6 763.8,186.6" fill="#ffffff"/>
<path d="M762.1 196.5L763.8 186.6" stroke="#ff0000" stroke-width="1.3" fill="none"/>
<path d="M764.6 196.5L766.3 186.6" stroke="#ff0000" stroke-width="1.3" fill="none"/>
<polygon points="886.0,178.3 912.9,178.4 913.0,191.0 886.6,190.9" fill="#f8a17e"/>
<polygon points="886.0,178.3 912.9,178.4 913.0,175.3 886.1,175.2" fill="#f7c0b0"/>
<path d="M886.0 178.3L912.9 178.4" stroke="#ff0000" stroke-width="1.3" fill="none"/>
<path d="M886.1 175.2L913.0 175.3" stroke="#ff0000" stroke-width="1.3" fill="none"/>
<polygon points="761.1,205.3 762.1,199.6 763.3,204.0 762.3,209.7" fill="#5a5a52"/>
<polygon points="747.4,205.2 761.1,205.3 762.3,209.7 748.7,209.6" fill="#5a5a52"/>
<polygon points="747.4,205.2 761.1,205.3 762.1,199.6 748.5,199.5" fill="#8a8378"/>
<polygon points="912.9,178.4 939.8,178.6 939.3,191.1 913.0,191.0" fill="#f8a17e"/>
<polygon points="912.9,178.4 939.8,178.6 939.8,175.4 913.0,175.3" fill="#f7c0b0"/>
<path d="M912.9 178.4L939.8 178.6" stroke="#ff0000" stroke-width="1.3" fill="none"/>
<path d="M913.0 175.3L939.8 175.4" stroke="#ff0000" stroke-width="1.3" fill="none"/>
<polygon points="976.4,179.6 983.4,179.6 982.6,186.1 975.7,186.1" fill="#2a2b33"/>
<polygon points="979.1,185.3 978.7,178.0 977.4,190.6 977.8,197.9" fill="#e0e0e8"/>
<polygon points="979.1,185.3 981.6,185.3 981.1,178.0 978.7,178.0" fill="#ffffff"/>
<path d="M979.1 185.3L978.7 178.0" stroke="#ff0000" stroke-width="1.3" fill="none"/>
<path d="M981.6 185.3L981.1 178.0" stroke="#ff0000" stroke-width="1.3" fill="none"/>
<polygon points="1073.1,198.9 1072.4,194.5 1069.0,206.9 1069.7,211.3" fill="#f8a17e"/>
<polygon points="1073.1,198.9 1077.7,198.9 1074.3,211.3 1069.7,211.3" fill="#f8a17e"/>
<polygon points="1073.1,198.9 1077.7,198.9 1077.0,194.5 1072.4,194.5" fill="#f7c0b0"/>
<polygon points="1073.1,198.9 1077.7,198.9 1077.0,194.5 1072.4,194.5" fill="none" stroke="#ff0000" stroke-width="1"/>
<polygon points="968.6,186.1 968.2,178.0 967.1,190.6 967.5,198.7" fill="#e8b0a4"/>
<polygon points="968.6,186.1 971.0,186.2 970.6,178.0 968.2,178.0" fill="#ffffff"/>
<polygon points="742.3,213.3 743.4,207.5 744.7,211.8 743.6,217.6" fill="#5a5a52"/>
<polygon points="728.5,213.2 742.3,213.3 743.6,217.6 729.9,217.6" fill="#5a5a52"/>
<polygon points="728.5,213.2 742.3,213.3 743.4,207.5 729.7,207.4" fill="#8a8378"/>
<path d="M968.6 186.1L968.2 178.0" stroke="#ff0000" stroke-width="1.3" fill="none"/>
<path d="M971.0 186.2L970.6 178.0" stroke="#ff0000" stroke-width="1.3" fill="none"/>
<polygon points="988.6,193.5 988.1,186.2 987.3,193.1 987.8,200.4" fill="#b45c0a"/>
<polygon points="988.6,193.5 993.9,193.5 993.0,200.4 987.8,200.4" fill="#b45c0a"/>
<polygon points="988.6,193.5 993.9,193.5 993.3,186.2 988.1,186.2" fill="#c96a10"/>
<polygon points="785.4,208.0 787.2,195.5 788.2,199.9 786.4,212.3" fill="#5a5a52"/>
<polygon points="772.7,207.9 785.4,208.0 786.4,212.3 773.8,212.2" fill="#5a5a52"/>
<polygon points="772.7,207.9 785.4,208.0 787.2,195.5 774.7,195.5" fill="#8a8378"/>
<polygon points="722.5,208.9 723.5,204.3 727.6,216.7 726.7,221.2" fill="#f8a17e"/>
<polygon points="717.8,208.8 722.5,208.9 726.7,221.2 722.1,221.2" fill="#f8a17e"/>
<polygon points="717.8,208.8 722.5,208.9 723.5,204.3 718.8,204.3" fill="#f7c0b0"/>
<polygon points="717.8,208.8 722.5,208.9 723.5,204.3 718.8,204.3" fill="none" stroke="#ff0000" stroke-width="1"/>
<polygon points="1039.7,206.0 1064.3,206.1 1063.5,209.4 1039.0,209.3" fill="#66665e"/>
<polygon points="1039.7,206.0 1064.3,206.1 1063.6,201.2 1039.1,201.0" fill="#8d8d82"/>
<polygon points="996.9,196.0 996.3,188.6 995.4,195.5 995.9,202.8" fill="#b45c0a"/>
<polygon points="996.9,196.0 1002.1,196.0 1001.1,202.9 995.9,202.8" fill="#b45c0a"/>
<polygon points="996.9,196.0 1002.1,196.0 1001.5,188.6 996.3,188.6" fill="#c96a10"/>
<polygon points="1009.8,193.5 1009.1,185.8 1007.1,198.3 1007.8,206.0" fill="#e0e0e8"/>
<polygon points="1009.8,193.5 1012.3,193.6 1011.6,185.8 1009.1,185.8" fill="#ffffff"/>
<path d="M1009.8 193.5L1009.1 185.8" stroke="#ff0000" stroke-width="1.3" fill="none"/>
<path d="M1012.3 193.6L1011.6 185.8" stroke="#ff0000" stroke-width="1.3" fill="none"/>
<polygon points="824.1,193.7 825.0,185.4 826.9,197.9 826.1,206.2" fill="#e8b0a4"/>
<polygon points="821.6,193.7 824.1,193.7 825.0,185.4 822.6,185.4" fill="#ffffff"/>
<path d="M821.6 193.7L822.6 185.4" stroke="#ff0000" stroke-width="1.3" fill="none"/>
<path d="M824.1 193.7L825.0 185.4" stroke="#ff0000" stroke-width="1.3" fill="none"/>
<polygon points="1032.0,197.9 1030.9,188.0 1028.5,200.5 1029.5,210.4" fill="#f3b5aa"/>
<polygon points="1032.0,197.9 1034.5,197.9 1033.4,188.0 1030.9,188.0" fill="#ffffff"/>
<path d="M1032.0 197.9L1030.9 188.0" stroke="#ff0000" stroke-width="1.3" fill="none"/>
<path d="M1034.5 197.9L1033.4 188.0" stroke="#ff0000" stroke-width="1.3" fill="none"/>
<polygon points="803.0,208.0 804.6,195.6 805.5,200.0 803.9,212.4" fill="#5a5a52"/>
<polygon points="790.3,208.0 803.0,208.0 803.9,212.4 791.3,212.3" fill="#5a5a52"/>
<polygon points="790.3,208.0 803.0,208.0 804.6,195.6 792.1,195.6" fill="#8a8378"/>
<polygon points="759.7,213.4 760.7,207.6 761.9,211.9 760.9,217.7" fill="#5a5a52"/>
<polygon points="745.9,213.3 759.7,213.4 760.9,217.7 747.2,217.7" fill="#5a5a52"/>
<polygon points="745.9,213.3 759.7,213.4 760.7,207.6 747.0,207.5" fill="#8a8378"/>
<polygon points="808.4,197.1 809.5,188.2 811.8,200.7 810.7,209.6" fill="#e0e0e8"/>
<polygon points="805.9,197.1 808.4,197.1 809.5,188.2 807.1,188.1" fill="#ffffff"/>
<path d="M805.9 197.1L807.1 188.1" stroke="#ff0000" stroke-width="1.3" fill="none"/>
<path d="M808.4 197.1L809.5 188.2" stroke="#ff0000" stroke-width="1.3" fill="none"/>
<polygon points="1061.8,210.5 1061.5,208.2 1060.6,211.8 1060.9,214.0" fill="#141414"/>
<polygon points="1061.8,210.5 1067.7,210.5 1066.8,214.1 1060.9,214.0" fill="#141414"/>
<polygon points="1061.8,210.5 1067.7,210.5 1067.4,208.3 1061.5,208.2" fill="#141414"/>
<polygon points="1071.9,214.8 1070.7,207.5 1069.7,211.3 1070.8,218.5" fill="#3a3030"/>
<polygon points="1071.9,214.8 1076.5,214.8 1075.3,207.5 1070.7,207.5" fill="#8b5a48"/>
<polygon points="762.8,206.6 764.6,196.5 767.8,209.0 766.1,219.0" fill="#f3b5aa"/>
<polygon points="760.3,206.6 762.8,206.6 764.6,196.5 762.1,196.5" fill="#ffffff"/>
<path d="M760.3 206.6L762.1 196.5" stroke="#ff0000" stroke-width="1.3" fill="none"/>
<path d="M762.8 206.6L764.6 196.5" stroke="#ff0000" stroke-width="1.3" fill="none"/>
<polygon points="979.5,192.8 979.1,185.3 977.8,197.9 978.2,205.2" fill="#e0e0e8"/>
<polygon points="979.5,192.8 982.0,192.8 981.6,185.3 979.1,185.3" fill="#ffffff"/>
<path d="M979.5 192.8L979.1 185.3" stroke="#ff0000" stroke-width="1.3" fill="none"/>
<path d="M982.0 192.8L981.6 185.3" stroke="#ff0000" stroke-width="1.3" fill="none"/>
<polygon points="723.9,224.8 725.4,217.4 726.7,221.2 725.2,228.6" fill="#3a3030"/>
<polygon points="719.2,224.8 723.9,224.8 725.4,217.4 720.8,217.4" fill="#8b5a48"/>
<polygon points="1050.6,210.5 1050.3,208.2 1049.5,211.7 1049.8,214.0" fill="#141414"/>
<polygon points="1050.6,210.5 1056.5,210.5 1055.7,214.0 1049.8,214.0" fill="#141414"/>
<polygon points="1050.6,210.5 1056.5,210.5 1056.2,208.2 1050.3,208.2" fill="#141414"/>
<polygon points="740.7,221.5 741.9,215.6 743.2,219.9 742.1,225.8" fill="#5a5a52"/>
<polygon points="726.8,221.4 740.7,221.5 742.1,225.8 728.2,225.8" fill="#5a5a52"/>
<polygon points="726.8,221.4 740.7,221.5 741.9,215.6 728.0,215.5" fill="#8a8378"/>
<polygon points="807.4,195.2 822.7,195.3 824.7,207.8 809.7,207.7" fill="#ffffff"/>
<polygon points="807.4,195.2 822.7,195.3 822.9,193.6 807.6,193.5" fill="#ffffff"/>
<path d="M807.4 195.2L822.7 195.3" stroke="#ff0000" stroke-width="1.3" fill="none"/>
<path d="M807.6 193.5L822.9 193.6" stroke="#ff0000" stroke-width="1.3" fill="none"/>
<polygon points="1061.2,214.7 1060.7,211.7 1060.1,214.4 1060.5,217.4" fill="#5a5a52"/>
<polygon points="1061.2,214.7 1069.0,214.8 1068.2,217.5 1060.5,217.4" fill="#5a5a52"/>
<polygon points="1061.2,214.7 1069.0,214.8 1068.5,211.7 1060.7,211.7" fill="#8d8d82"/>
<polygon points="968.9,194.5 968.6,186.1 967.5,198.7 967.8,206.9" fill="#e8b0a4"/>
<polygon points="968.9,194.5 971.4,194.5 971.0,186.2 968.6,186.1" fill="#ffffff"/>
<path d="M968.9 194.5L968.6 186.1" stroke="#ff0000" stroke-width="1.3" fill="none"/>
<path d="M971.4 194.5L971.0 186.2" stroke="#ff0000" stroke-width="1.3" fill="none"/>
<polygon points="1039.4,210.4 1039.2,208.1 1038.4,211.7 1038.7,213.9" fill="#141414"/>
<polygon points="1039.4,210.4 1045.4,210.4 1044.6,213.9 1038.7,213.9" fill="#141414"/>
<polygon points="1039.4,210.4 1045.4,210.4 1045.1,208.2 1039.2,208.1" fill="#141414"/>
<polygon points="1050.0,214.7 1049.6,211.6 1048.9,214.4 1049.3,217.4" fill="#5a5a52"/>
<polygon points="1050.0,214.7 1057.8,214.7 1057.1,217.4 1049.3,217.4" fill="#5a5a52"/>
<polygon points="1050.0,214.7 1057.8,214.7 1057.3,211.7 1049.6,211.6" fill="#8d8d82"/>
<polygon points="1062.6,216.1 1062.3,213.8 1061.4,217.4 1061.7,219.6" fill="#141414"/>
<polygon points="1062.6,216.1 1068.6,216.2 1067.6,219.7 1061.7,219.6" fill="#141414"/>
<polygon points="1062.6,216.1 1068.6,216.2 1068.2,213.9 1062.3,213.8" fill="#141414"/>
<polygon points="1074.9,210.7 1074.2,206.2 1070.8,218.5 1071.5,223.0" fill="#f8a17e"/>
<polygon points="1074.9,210.7 1079.6,210.7 1076.1,223.1 1071.5,223.0" fill="#f8a17e"/>
<polygon points="1074.9,210.7 1079.6,210.7 1078.9,206.2 1074.2,206.2" fill="#f7c0b0"/>
<polygon points="1074.9,210.7 1079.6,210.7 1078.9,206.2 1074.2,206.2" fill="none" stroke="#ff0000" stroke-width="1"/>
<polygon points="1010.5,201.4 1009.8,193.5 1007.8,206.0 1008.5,213.8" fill="#e0e0e8"/>
<polygon points="1010.5,201.4 1013.0,201.4 1012.3,193.6 1009.8,193.5" fill="#ffffff"/>
<path d="M1010.5 201.4L1009.8 193.5" stroke="#ff0000" stroke-width="1.3" fill="none"/>
<path d="M1013.0 201.4L1012.3 193.6" stroke="#ff0000" stroke-width="1.3" fill="none"/>
<polygon points="758.3,221.6 759.3,215.7 760.5,220.0 759.5,225.9" fill="#5a5a52"/>
<polygon points="744.3,221.5 758.3,221.6 759.5,225.9 745.6,225.8" fill="#5a5a52"/>
<polygon points="744.3,221.5 758.3,221.6 759.3,215.7 745.4,215.6" fill="#8a8378"/>
<polygon points="719.9,220.9 720.9,216.3 725.2,228.6 724.2,233.2" fill="#f8a17e"/>
<polygon points="715.2,220.9 719.9,220.9 724.2,233.2 719.6,233.1" fill="#f8a17e"/>
<polygon points="715.2,220.9 719.9,220.9 720.9,216.3 716.2,216.3" fill="#f7c0b0"/>
<polygon points="715.2,220.9 719.9,220.9 720.9,216.3 716.2,216.3" fill="none" stroke="#ff0000" stroke-width="1"/>
<polygon points="823.2,202.1 824.1,193.7 826.1,206.2 825.2,214.5" fill="#e8b0a4"/>
<polygon points="820.7,202.1 823.2,202.1 824.1,193.7 821.6,193.7" fill="#ffffff"/>
<path d="M820.7 202.1L821.6 193.7" stroke="#ff0000" stroke-width="1.3" fill="none"/>
<path d="M823.2 202.1L824.1 193.7" stroke="#ff0000" stroke-width="1.3" fill="none"/>
<polygon points="762.6,206.9 782.2,207.0 785.1,219.4 765.9,219.3" fill="#ffffff"/>
<polygon points="762.6,206.9 782.2,207.0 782.5,205.2 762.9,205.1" fill="#ffffff"/>
<path d="M762.6 206.9L782.2 207.0" stroke="#ff0000" stroke-width="1.3" fill="none"/>
<path d="M762.9 205.1L782.5 205.2" stroke="#ff0000" stroke-width="1.3" fill="none"/>
<polygon points="1038.7,214.6 1038.4,211.6 1037.8,214.3 1038.2,217.3" fill="#5a5a52"/>
<polygon points="1038.7,214.6 1046.5,214.7 1045.9,217.4 1038.2,217.3" fill="#5a5a52"/>
<polygon points="1038.7,214.6 1046.5,214.7 1046.1,211.6 1038.4,211.6" fill="#8d8d82"/>
<polygon points="1051.4,216.1 1051.1,213.8 1050.2,217.3 1050.5,219.6" fill="#141414"/>
<polygon points="1051.4,216.1 1057.3,216.1 1056.4,219.6 1050.5,219.6" fill="#141414"/>
<polygon points="1051.4,216.1 1057.3,216.1 1057.0,213.8 1051.1,213.8" fill="#141414"/>
<polygon points="1062.0,220.4 1061.5,217.3 1060.8,220.0 1061.3,223.1" fill="#5a5a52"/>
<polygon points="1062.0,220.4 1069.8,220.5 1069.1,223.1 1061.3,223.1" fill="#5a5a52"/>
<polygon points="1062.0,220.4 1069.8,220.5 1069.4,217.4 1061.5,217.3" fill="#8d8d82"/>
<polygon points="1033.1,208.1 1032.0,197.9 1029.5,210.4 1030.6,220.4" fill="#f3b5aa"/>
<polygon points="807.3,206.3 808.4,197.1 810.7,209.6 809.6,218.6" fill="#e0e0e8"/>
<polygon points="1033.1,208.1 1035.7,208.1 1034.5,197.9 1032.0,197.9" fill="#ffffff"/>
<polygon points="804.7,206.3 807.3,206.3 808.4,197.1 805.9,197.1" fill="#ffffff"/>
<path d="M1033.1 208.1L1032.0 197.9" stroke="#ff0000" stroke-width="1.3" fill="none"/>
<path d="M1035.7 208.1L1034.5 197.9" stroke="#ff0000" stroke-width="1.3" fill="none"/>
<path d="M804.7 206.3L805.9 197.1" stroke="#ff0000" stroke-width="1.3" fill="none"/>
<path d="M807.3 206.3L808.4 197.1" stroke="#ff0000" stroke-width="1.3" fill="none"/>
<polygon points="980.0,200.3 979.5,192.8 978.2,205.2 978.6,212.7" fill="#e0e0e8"/>
<polygon points="980.0,200.3 982.5,200.3 982.0,192.8 979.5,192.8" fill="#ffffff"/>
<path d="M980.0 200.3L979.5 192.8" stroke="#ff0000" stroke-width="1.3" fill="none"/>
<path d="M982.5 200.3L982.0 192.8" stroke="#ff0000" stroke-width="1.3" fill="none"/>
<polygon points="1040.1,216.0 1039.8,213.7 1039.1,217.2 1039.3,219.5" fill="#141414"/>
<polygon points="1040.1,216.0 1046.1,216.1 1045.3,219.6 1039.3,219.5" fill="#141414"/>
<polygon points="1040.1,216.0 1046.1,216.1 1045.8,213.8 1039.8,213.7" fill="#141414"/>
<polygon points="739.1,229.9 740.3,223.9 741.6,228.2 740.5,234.2" fill="#5a5a52"/>
<polygon points="725.0,229.8 739.1,229.9 740.5,234.2 726.5,234.1" fill="#5a5a52"/>
<polygon points="725.0,229.8 739.1,229.9 740.3,223.9 726.3,223.8" fill="#8a8378"/>
<polygon points="996.5,201.3 1011.8,201.4 1009.7,213.7 994.8,213.7" fill="#ffffff"/>
<polygon points="996.5,201.3 1011.8,201.4 1011.6,199.6 996.4,199.5" fill="#ffffff"/>
<polygon points="761.1,217.0 762.8,206.6 766.1,219.0 764.4,229.2" fill="#f3b5aa"/>
<polygon points="758.5,217.0 761.1,217.0 762.8,206.6 760.3,206.6" fill="#ffffff"/>
<path d="M996.5 201.3L1011.8 201.4" stroke="#ff0000" stroke-width="1.3" fill="none"/>
<path d="M996.4 199.5L1011.6 199.6" stroke="#ff0000" stroke-width="1.3" fill="none"/>
<path d="M758.5 217.0L760.3 206.6" stroke="#ff0000" stroke-width="1.3" fill="none"/>
<path d="M761.1 217.0L762.8 206.6" stroke="#ff0000" stroke-width="1.3" fill="none"/>
<polygon points="1050.7,220.3 1050.3,217.3 1049.7,220.0 1050.0,223.0" fill="#5a5a52"/>
<polygon points="1050.7,220.3 1058.5,220.4 1057.8,223.1 1050.0,223.0" fill="#5a5a52"/>
<polygon points="1050.7,220.3 1058.5,220.4 1058.1,217.3 1050.3,217.3" fill="#8d8d82"/>
<polygon points="782.2,207.0 801.8,207.1 804.3,219.5 785.1,219.4" fill="#ffffff"/>
<polygon points="782.2,207.0 801.8,207.1 802.0,205.4 782.5,205.2" fill="#ffffff"/>
<path d="M782.2 207.0L801.8 207.1" stroke="#ff0000" stroke-width="1.3" fill="none"/>
<path d="M782.5 205.2L802.0 205.4" stroke="#ff0000" stroke-width="1.3" fill="none"/>
<polygon points="1063.5,221.8 1063.1,219.5 1062.2,223.0 1062.5,225.3" fill="#141414"/>
<polygon points="1063.5,221.8 1069.4,221.9 1068.5,225.4 1062.5,225.3" fill="#141414"/>
<polygon points="1063.5,221.8 1069.4,221.9 1069.1,219.5 1063.1,219.5" fill="#141414"/>
<polygon points="1073.7,226.7 1072.5,219.3 1071.5,223.0 1072.6,230.5" fill="#3a3030"/>
<polygon points="1073.7,226.7 1078.4,226.7 1077.2,219.3 1072.5,219.3" fill="#8b5a48"/>
<polygon points="969.3,202.9 968.9,194.5 967.8,206.9 968.2,215.3" fill="#e8b0a4"/>
<polygon points="969.3,202.9 971.9,202.9 971.4,194.5 968.9,194.5" fill="#ffffff"/>
<path d="M969.3 202.9L968.9 194.5" stroke="#ff0000" stroke-width="1.3" fill="none"/>
<path d="M971.9 202.9L971.4 194.5" stroke="#ff0000" stroke-width="1.3" fill="none"/>
<polygon points="981.3,201.2 996.5,201.3 994.8,213.7 979.9,213.6" fill="#ffffff"/>
<polygon points="981.3,201.2 996.5,201.3 996.4,199.5 981.2,199.4" fill="#ffffff"/>
<path d="M981.3 201.2L996.5 201.3" stroke="#ff0000" stroke-width="1.3" fill="none"/>
<path d="M981.2 199.4L996.4 199.5" stroke="#ff0000" stroke-width="1.3" fill="none"/>
<polygon points="721.3,237.0 722.9,229.4 724.2,233.2 722.6,240.7" fill="#3a3030"/>
<polygon points="716.6,237.0 721.3,237.0 722.9,229.4 718.2,229.4" fill="#8b5a48"/>
<polygon points="783.5,213.4 784.6,206.2 787.4,218.5 786.4,225.7" fill="#e0e0e8"/>
<polygon points="780.9,213.4 783.5,213.4 784.6,206.2 782.0,206.1" fill="#ffffff"/>
<path d="M780.9 213.4L782.0 206.1" stroke="#ff0000" stroke-width="1.3" fill="none"/>
<path d="M783.5 213.4L784.6 206.2" stroke="#ff0000" stroke-width="1.3" fill="none"/>
<polygon points="1039.4,220.3 1039.0,217.2 1038.5,219.9 1038.8,223.0" fill="#5a5a52"/>
<polygon points="1039.4,220.3 1047.2,220.3 1046.6,223.0 1038.8,223.0" fill="#5a5a52"/>
<polygon points="1039.4,220.3 1047.2,220.3 1046.9,217.3 1039.0,217.2" fill="#8d8d82"/>
<polygon points="1052.1,221.8 1051.8,219.4 1051.0,223.0 1051.3,225.3" fill="#141414"/>
<polygon points="1052.1,221.8 1058.1,221.8 1057.2,225.3 1051.3,225.3" fill="#141414"/>
<polygon points="1052.1,221.8 1058.1,221.8 1057.8,219.5 1051.8,219.4" fill="#141414"/>
<path d="M726.7 262.2L736.5 188.1" stroke="#a9a9a9" stroke-width="2.2" fill="none"/>
<path d="M766.0 210.7L823.3 211.0" stroke="#a9a9a9" stroke-width="2.2" fill="none"/>
<polygon points="1062.8,226.1 1062.4,223.0 1061.6,225.7 1062.1,228.8" fill="#5a5a52"/>
<polygon points="1062.8,226.1 1070.7,226.2 1069.9,228.9 1062.1,228.8" fill="#5a5a52"/>
<polygon points="1062.8,226.1 1070.7,226.2 1070.2,223.1 1062.4,223.0" fill="#8d8d82"/>
<polygon points="801.8,207.1 821.4,207.3 823.4,219.6 804.3,219.5" fill="#ffffff"/>
<polygon points="801.8,207.1 821.4,207.3 821.6,205.5 802.0,205.4" fill="#ffffff"/>
<path d="M801.8 207.1L821.4 207.3" stroke="#ff0000" stroke-width="1.3" fill="none"/>
<path d="M802.0 205.4L821.6 205.5" stroke="#ff0000" stroke-width="1.3" fill="none"/>
<polygon points="1011.2,209.4 1010.5,201.4 1008.5,213.8 1009.2,221.7" fill="#e0e0e8"/>
<polygon points="1011.2,209.4 1013.8,209.4 1013.0,201.4 1010.5,201.4" fill="#ffffff"/>
<path d="M1011.2 209.4L1010.5 201.4" stroke="#ff0000" stroke-width="1.3" fill="none"/>
<path d="M1013.8 209.4L1013.0 201.4" stroke="#ff0000" stroke-width="1.3" fill="none"/>
<polygon points="756.8,230.0 757.9,224.0 759.1,228.3 758.0,234.3" fill="#5a5a52"/>
<polygon points="742.7,229.9 756.8,230.0 758.0,234.3 744.1,234.2" fill="#5a5a52"/>
<polygon points="742.7,229.9 756.8,230.0 757.9,224.0 743.9,223.9" fill="#8a8378"/>
<polygon points="1040.8,221.7 1040.5,219.4 1039.7,222.9 1040.0,225.2" fill="#141414"/>
<polygon points="1040.8,221.7 1046.8,221.7 1046.0,225.2 1040.0,225.2" fill="#141414"/>
<polygon points="1040.8,221.7 1046.8,221.7 1046.5,219.4 1040.5,219.4" fill="#141414"/>
<polygon points="822.3,210.7 823.2,202.1 825.2,214.5 824.3,223.1" fill="#e8b0a4"/>
<polygon points="819.7,210.7 822.3,210.7 823.2,202.1 820.7,202.1" fill="#ffffff"/>
<path d="M819.7 210.7L820.7 202.1" stroke="#ff0000" stroke-width="1.3" fill="none"/>
<path d="M822.3 210.7L823.2 202.1" stroke="#ff0000" stroke-width="1.3" fill="none"/>
<polygon points="716.9,226.7 737.5,226.8 741.4,238.9 721.2,238.8" fill="#ffffff"/>
<polygon points="716.9,226.7 737.5,226.8 737.8,224.9 717.3,224.8" fill="#ffffff"/>
<path d="M716.9 226.7L737.5 226.8" stroke="#ff0000" stroke-width="1.3" fill="none"/>
<path d="M717.3 224.8L737.8 224.9" stroke="#ff0000" stroke-width="1.3" fill="none"/>
<polygon points="1051.4,226.1 1051.0,223.0 1050.4,225.6 1050.8,228.8" fill="#5a5a52"/>
<polygon points="1051.4,226.1 1059.3,226.1 1058.6,228.8 1050.8,228.8" fill="#5a5a52"/>
<polygon points="1051.4,226.1 1059.3,226.1 1058.9,223.0 1051.0,223.0" fill="#8d8d82"/>
<polygon points="1064.3,227.6 1063.9,225.2 1063.0,228.7 1063.3,231.1" fill="#141414"/>
<polygon points="1064.3,227.6 1070.3,227.6 1069.3,231.1 1063.3,231.1" fill="#141414"/>
<polygon points="1064.3,227.6 1070.3,227.6 1069.9,225.3 1063.9,225.2" fill="#141414"/>
<polygon points="1076.8,222.9 1076.1,218.2 1072.6,230.5 1073.3,235.1" fill="#f8a17e"/>
<polygon points="1076.8,222.9 1081.6,222.9 1078.0,235.1 1073.3,235.1" fill="#f8a17e"/>
<polygon points="1076.8,222.9 1081.6,222.9 1080.8,218.2 1076.1,218.2" fill="#f7c0b0"/>
<polygon points="1076.8,222.9 1081.6,222.9 1080.8,218.2 1076.1,218.2" fill="none" stroke="#ff0000" stroke-width="1"/>
<polygon points="717.3,233.3 718.3,228.6 722.6,240.7 721.7,245.4" fill="#f8a17e"/>
<polygon points="712.5,233.3 717.3,233.3 721.7,245.4 717.0,245.4" fill="#f8a17e"/>
<polygon points="712.5,233.3 717.3,233.3 718.3,228.6 713.5,228.6" fill="#f7c0b0"/>
<polygon points="712.5,233.3 717.3,233.3 718.3,228.6 713.5,228.6" fill="none" stroke="#ff0000" stroke-width="1"/>
<polygon points="1022.6,214.3 1021.8,206.9 1019.6,219.2 1020.3,226.6" fill="#e0e0e8"/>
<polygon points="1022.6,214.3 1025.1,214.3 1024.4,206.9 1021.8,206.9" fill="#ffffff"/>
<path d="M1022.6 214.3L1021.8 206.9" stroke="#ff0000" stroke-width="1.3" fill="none"/>
<path d="M1025.1 214.3L1024.4 206.9" stroke="#ff0000" stroke-width="1.3" fill="none"/>
<polygon points="1005.2,210.3 1021.6,210.4 1019.4,222.7 1003.3,222.6" fill="#ffffff"/>
<polygon points="1005.2,210.3 1021.6,210.4 1021.5,208.6 1005.1,208.5" fill="#ffffff"/>
<path d="M1005.2 210.3L1021.6 210.4" stroke="#ff0000" stroke-width="1.3" fill="none"/>
<path d="M1005.1 208.5L1021.5 208.6" stroke="#ff0000" stroke-width="1.3" fill="none"/>
<polygon points="1040.1,226.0 1039.7,222.9 1039.1,225.6 1039.5,228.7" fill="#5a5a52"/>
<polygon points="1040.1,226.0 1048.0,226.1 1047.3,228.7 1039.5,228.7" fill="#5a5a52"/>
<polygon points="1040.1,226.0 1048.0,226.1 1047.6,222.9 1039.7,222.9" fill="#8d8d82"/>
<polygon points="1034.3,218.4 1033.1,208.1 1030.6,220.4 1031.7,230.7" fill="#f3b5aa"/>
<polygon points="1034.3,218.4 1036.9,218.5 1035.7,208.1 1033.1,208.1" fill="#ffffff"/>
<path d="M1034.3 218.4L1033.1 208.1" stroke="#ff0000" stroke-width="1.3" fill="none"/>
<path d="M1036.9 218.5L1035.7 208.1" stroke="#ff0000" stroke-width="1.3" fill="none"/>
<polygon points="1052.9,227.5 1052.6,225.2 1051.7,228.7 1052.0,231.0" fill="#141414"/>
<polygon points="1052.9,227.5 1058.9,227.6 1058.0,231.0 1052.0,231.0" fill="#141414"/>
<polygon points="1052.9,227.5 1058.9,227.6 1058.6,225.2 1052.6,225.2" fill="#141414"/>
<polygon points="1063.6,231.9 1063.2,228.8 1062.5,231.5 1062.9,234.6" fill="#5a5a52"/>
<polygon points="1063.6,231.9 1071.5,232.0 1070.8,234.6 1062.9,234.6" fill="#5a5a52"/>
<polygon points="1063.6,231.9 1071.5,232.0 1071.1,228.8 1063.2,228.8" fill="#8d8d82"/>
<polygon points="782.4,220.7 783.5,213.4 786.4,225.7 785.3,233.0" fill="#e0e0e8"/>
<polygon points="779.8,220.7 782.4,220.7 783.5,213.4 780.9,213.4" fill="#ffffff"/>
<path d="M779.8 220.7L780.9 213.4" stroke="#ff0000" stroke-width="1.3" fill="none"/>
<path d="M782.4 220.7L783.5 213.4" stroke="#ff0000" stroke-width="1.3" fill="none"/>
<polygon points="759.2,227.5 761.1,217.0 764.4,229.2 762.7,239.7" fill="#f3b5aa"/>
<polygon points="756.7,227.5 759.2,227.5 761.1,217.0 758.5,217.0" fill="#ffffff"/>
<path d="M756.7 227.5L758.5 217.0" stroke="#ff0000" stroke-width="1.3" fill="none"/>
<path d="M759.2 227.5L761.1 217.0" stroke="#ff0000" stroke-width="1.3" fill="none"/>
<polygon points="988.8,210.2 1005.2,210.3 1003.3,222.6 987.2,222.5" fill="#ffffff"/>
<polygon points="988.8,210.2 1005.2,210.3 1005.1,208.5 988.7,208.4" fill="#ffffff"/>
<path d="M988.8 210.2L1005.2 210.3" stroke="#ff0000" stroke-width="1.3" fill="none"/>
<path d="M988.7 208.4L1005.1 208.5" stroke="#ff0000" stroke-width="1.3" fill="none"/>
<path d="M970.5 211.8L1028.0 212.1" stroke="#a9a9a9" stroke-width="2.2" fill="none"/>
<polygon points="969.7,211.5 969.3,202.9 968.2,215.3 968.6,223.8" fill="#e8b0a4"/>
<polygon points="969.7,211.5 972.3,211.5 971.9,202.9 969.3,202.9" fill="#ffffff"/>
<path d="M969.7 211.5L969.3 202.9" stroke="#ff0000" stroke-width="1.3" fill="none"/>
<path d="M972.3 211.5L971.9 202.9" stroke="#ff0000" stroke-width="1.3" fill="none"/>
<polygon points="1041.5,227.5 1041.2,225.1 1040.4,228.6 1040.7,231.0" fill="#141414"/>
<polygon points="1041.5,227.5 1047.5,227.5 1046.7,231.0 1040.7,231.0" fill="#141414"/>
<polygon points="1041.5,227.5 1047.5,227.5 1047.2,225.2 1041.2,225.1" fill="#141414"/>
<polygon points="737.5,226.8 758.1,226.9 761.5,239.0 741.4,238.9" fill="#ffffff"/>
<polygon points="737.5,226.8 758.1,226.9 758.4,225.0 737.8,224.9" fill="#ffffff"/>
<path d="M737.5 226.8L758.1 226.9" stroke="#ff0000" stroke-width="1.3" fill="none"/>
<path d="M737.8 224.9L758.4 225.0" stroke="#ff0000" stroke-width="1.3" fill="none"/>
<polygon points="972.4,210.1 988.8,210.2 987.2,222.5 971.2,222.4" fill="#ffffff"/>
<polygon points="972.4,210.1 988.8,210.2 988.7,208.4 972.3,208.3" fill="#ffffff"/>
<polygon points="1052.2,231.9 1051.8,228.7 1051.1,231.4 1051.5,234.5" fill="#5a5a52"/>
<polygon points="1052.2,231.9 1060.1,231.9 1059.4,234.6 1051.5,234.5" fill="#5a5a52"/>
<polygon points="1052.2,231.9 1060.1,231.9 1059.7,228.8 1051.8,228.7" fill="#8d8d82"/>
<path d="M972.4 210.1L988.8 210.2" stroke="#ff0000" stroke-width="1.3" fill="none"/>
<path d="M972.3 208.3L988.7 208.4" stroke="#ff0000" stroke-width="1.3" fill="none"/>
<polygon points="1065.1,233.4 1064.8,231.0 1063.8,234.5 1064.2,236.9" fill="#141414"/>
<polygon points="1065.1,233.4 1071.2,233.5 1070.2,236.9 1064.2,236.9" fill="#141414"/>
<polygon points="1065.1,233.4 1071.2,233.5 1070.8,231.1 1064.8,231.0" fill="#141414"/>
<polygon points="724.4,244.7 729.9,244.7 731.0,247.8 725.5,247.8" fill="#ccc"/>
<polygon points="724.4,244.7 729.9,244.7 730.7,240.6 725.2,240.6" fill="#f4f4f4"/>
<polygon points="1075.6,238.9 1074.4,231.3 1073.3,235.1 1074.5,242.7" fill="#3a3030"/>
<polygon points="1075.6,238.9 1080.3,239.0 1079.1,231.3 1074.4,231.3" fill="#8b5a48"/>
<polygon points="718.7,249.5 720.3,241.7 721.7,245.4 720.1,253.2" fill="#3a3030"/>
<polygon points="713.9,249.5 718.7,249.5 720.3,241.7 715.6,241.7" fill="#8b5a48"/>
<polygon points="1040.8,231.8 1040.4,228.7 1039.8,231.3 1040.2,234.5" fill="#5a5a52"/>
<polygon points="1040.8,231.8 1048.7,231.9 1048.1,234.5 1040.2,234.5" fill="#5a5a52"/>
<polygon points="1040.8,231.8 1048.7,231.9 1048.3,228.7 1040.4,228.7" fill="#8d8d82"/>
<polygon points="781.1,220.6 800.5,220.7 803.0,232.9 784.1,232.8" fill="#ffffff"/>
<polygon points="781.1,220.6 800.5,220.7 800.7,218.9 781.4,218.8" fill="#ffffff"/>
<path d="M781.1 220.6L800.5 220.7" stroke="#ff0000" stroke-width="1.3" fill="none"/>
<path d="M781.4 218.8L800.7 218.9" stroke="#ff0000" stroke-width="1.3" fill="none"/>
<polygon points="821.3,219.5 822.3,210.7 824.3,223.1 823.4,231.7" fill="#e8b0a4"/>
<polygon points="818.8,219.5 821.3,219.5 822.3,210.7 819.7,210.7" fill="#ffffff"/>
<path d="M818.8 219.5L819.7 210.7" stroke="#ff0000" stroke-width="1.3" fill="none"/>
<path d="M821.3 219.5L822.3 210.7" stroke="#ff0000" stroke-width="1.3" fill="none"/>
<polygon points="1053.6,233.4 1053.3,231.0 1052.5,234.5 1052.8,236.8" fill="#141414"/>
<polygon points="1053.6,233.4 1059.7,233.4 1058.8,236.9 1052.8,236.8" fill="#141414"/>
<polygon points="1053.6,233.4 1059.7,233.4 1059.4,231.0 1053.3,231.0" fill="#141414"/>
<path d="M823.3 211.0L970.5 211.8" stroke="#a9a9a9" stroke-width="2" fill="none"/>
<polygon points="1064.4,237.8 1064.0,234.6 1063.3,237.3 1063.7,240.5" fill="#5a5a52"/>
<polygon points="1064.4,237.8 1072.4,237.9 1071.7,240.5 1063.7,240.5" fill="#5a5a52"/>
<polygon points="1064.4,237.8 1072.4,237.9 1072.0,234.7 1064.0,234.6" fill="#8d8d82"/>
<polygon points="1023.4,221.9 1022.6,214.3 1020.3,226.6 1021.0,234.1" fill="#e0e0e8"/>
<polygon points="1023.4,221.9 1025.9,221.9 1025.1,214.3 1022.6,214.3" fill="#ffffff"/>
<path d="M1023.4 221.9L1022.6 214.3" stroke="#ff0000" stroke-width="1.3" fill="none"/>
<path d="M1025.9 221.9L1025.1 214.3" stroke="#ff0000" stroke-width="1.3" fill="none"/>
<polygon points="1042.2,233.3 1041.9,230.9 1041.1,234.4 1041.4,236.8" fill="#141414"/>
<polygon points="1042.2,233.3 1048.2,233.3 1047.4,236.8 1041.4,236.8" fill="#141414"/>
<polygon points="1042.2,233.3 1048.2,233.3 1047.9,231.0 1041.9,230.9" fill="#141414"/>
<polygon points="781.3,228.2 782.4,220.7 785.3,233.0 784.2,240.4" fill="#e0e0e8"/>
<polygon points="778.7,228.2 781.3,228.2 782.4,220.7 779.8,220.7" fill="#ffffff"/>
<path d="M778.7 228.2L779.8 220.7" stroke="#ff0000" stroke-width="1.3" fill="none"/>
<path d="M781.3 228.2L782.4 220.7" stroke="#ff0000" stroke-width="1.3" fill="none"/>
<polygon points="800.5,220.7 819.9,220.8 822.0,233.0 803.0,232.9" fill="#ffffff"/>
<polygon points="800.5,220.7 819.9,220.8 820.1,219.0 800.7,218.9" fill="#ffffff"/>
<path d="M800.5 220.7L819.9 220.8" stroke="#ff0000" stroke-width="1.3" fill="none"/>
<path d="M800.7 218.9L820.1 219.0" stroke="#ff0000" stroke-width="1.3" fill="none"/>
<polygon points="1053.0,237.7 1052.5,234.6 1051.9,237.2 1052.3,240.4" fill="#5a5a52"/>
<polygon points="1053.0,237.7 1060.9,237.8 1060.2,240.4 1052.3,240.4" fill="#5a5a52"/>
<polygon points="1053.0,237.7 1060.9,237.8 1060.5,234.6 1052.5,234.6" fill="#8d8d82"/>
<polygon points="1066.0,239.3 1065.6,236.9 1064.7,240.4 1065.0,242.8" fill="#141414"/>
<polygon points="1066.0,239.3 1072.0,239.4 1071.1,242.8 1065.0,242.8" fill="#141414"/>
<polygon points="1066.0,239.3 1072.0,239.4 1071.7,237.0 1065.6,236.9" fill="#141414"/>
<polygon points="757.6,229.6 779.7,229.7 782.8,241.8 761.1,241.7" fill="#ffffff"/>
<polygon points="757.6,229.6 779.7,229.7 780.0,227.8 757.9,227.7" fill="#ffffff"/>
<path d="M757.6 229.6L779.7 229.7" stroke="#ff0000" stroke-width="1.3" fill="none"/>
<path d="M757.9 227.7L780.0 227.8" stroke="#ff0000" stroke-width="1.3" fill="none"/>
<polygon points="1078.8,235.3 1078.0,230.5 1074.5,242.7 1075.2,247.4" fill="#f8a17e"/>
<polygon points="1078.8,235.3 1083.6,235.3 1079.9,247.4 1075.2,247.4" fill="#f8a17e"/>
<polygon points="1078.8,235.3 1083.6,235.3 1082.8,230.6 1078.0,230.5" fill="#f7c0b0"/>
<polygon points="1078.8,235.3 1083.6,235.3 1082.8,230.6 1078.0,230.5" fill="none" stroke="#ff0000" stroke-width="1"/>
<polygon points="1035.5,229.0 1034.3,218.4 1031.7,230.7 1032.9,241.2" fill="#f3b5aa"/>
<polygon points="1035.5,229.0 1038.1,229.0 1036.9,218.5 1034.3,218.4" fill="#ffffff"/>
<path d="M1035.5 229.0L1034.3 218.4" stroke="#ff0000" stroke-width="1.3" fill="none"/>
<path d="M1038.1 229.0L1036.9 218.5" stroke="#ff0000" stroke-width="1.3" fill="none"/>
<polygon points="714.5,246.1 715.6,241.2 720.1,253.2 719.1,258.0" fill="#f8a17e"/>
<polygon points="709.7,246.0 714.5,246.1 719.1,258.0 714.3,258.0" fill="#f8a17e"/>
<polygon points="709.7,246.0 714.5,246.1 715.6,241.2 710.7,241.2" fill="#f7c0b0"/>
<polygon points="709.7,246.0 714.5,246.1 715.6,241.2 710.7,241.2" fill="none" stroke="#ff0000" stroke-width="1"/>
<polygon points="970.1,220.3 969.7,211.5 968.6,223.8 969.0,232.5" fill="#e8b0a4"/>
<polygon points="970.1,220.3 972.7,220.3 972.3,211.5 969.7,211.5" fill="#ffffff"/>
<path d="M970.1 220.3L969.7 211.5" stroke="#ff0000" stroke-width="1.3" fill="none"/>
<path d="M972.7 220.3L972.3 211.5" stroke="#ff0000" stroke-width="1.3" fill="none"/>
<polygon points="1041.5,237.7 1041.1,234.5 1040.5,237.2 1040.9,240.3" fill="#5a5a52"/>
<polygon points="1041.5,237.7 1049.5,237.7 1048.8,240.4 1040.9,240.3" fill="#5a5a52"/>
<polygon points="1041.5,237.7 1049.5,237.7 1049.0,234.5 1041.1,234.5" fill="#8d8d82"/>
<polygon points="729.9,250.9 730.4,248.5 731.6,251.9 731.1,254.3" fill="#141414"/>
<polygon points="723.8,250.9 729.9,250.9 731.1,254.3 725.0,254.3" fill="#141414"/>
<polygon points="723.8,250.9 729.9,250.9 730.4,248.5 724.3,248.4" fill="#141414"/>
<polygon points="1054.4,239.3 1054.1,236.9 1053.2,240.3 1053.5,242.7" fill="#141414"/>
<polygon points="1054.4,239.3 1060.5,239.3 1059.6,242.7 1053.5,242.7" fill="#141414"/>
<polygon points="1054.4,239.3 1060.5,239.3 1060.2,236.9 1054.1,236.9" fill="#141414"/>
<polygon points="757.4,238.3 759.2,227.5 762.7,239.7 760.9,250.4" fill="#f3b5aa"/>
<polygon points="754.8,238.3 757.4,238.3 759.2,227.5 756.7,227.5" fill="#ffffff"/>
<path d="M754.8 238.3L756.7 227.5" stroke="#ff0000" stroke-width="1.3" fill="none"/>
<path d="M757.4 238.3L759.2 227.5" stroke="#ff0000" stroke-width="1.3" fill="none"/>
<polygon points="1065.3,243.8 1064.8,240.5 1064.1,243.2 1064.6,246.4" fill="#5a5a52"/>
<polygon points="1065.3,243.8 1073.3,243.8 1072.5,246.4 1064.6,246.4" fill="#5a5a52"/>
<polygon points="1065.3,243.8 1073.3,243.8 1072.8,240.6 1064.8,240.5" fill="#8d8d82"/>
<polygon points="992.3,221.2 1011.8,221.3 1009.7,233.5 990.7,233.4" fill="#ffffff"/>
<polygon points="992.3,221.2 1011.8,221.3 1011.6,219.5 992.2,219.4" fill="#ffffff"/>
<path d="M992.3 221.2L1011.8 221.3" stroke="#ff0000" stroke-width="1.3" fill="none"/>
<path d="M992.2 219.4L1011.6 219.5" stroke="#ff0000" stroke-width="1.3" fill="none"/>
<polygon points="1042.9,239.2 1042.6,236.8 1041.8,240.2 1042.1,242.6" fill="#141414"/>
<polygon points="1042.9,239.2 1049.0,239.2 1048.1,242.7 1042.1,242.6" fill="#141414"/>
<polygon points="1042.9,239.2 1049.0,239.2 1048.7,236.8 1042.6,236.8" fill="#141414"/>
<polygon points="730.5,255.2 731.1,252.1 732.0,254.8 731.4,257.8" fill="#5a5a52"/>
<polygon points="722.4,255.1 730.5,255.2 731.4,257.8 723.3,257.7" fill="#5a5a52"/>
<polygon points="722.4,255.1 730.5,255.2 731.1,252.1 723.0,252.1" fill="#8d8d82"/>
<polygon points="1024.1,229.5 1023.4,221.9 1021.0,234.1 1021.7,241.7" fill="#e0e0e8"/>
<polygon points="1024.1,229.5 1026.7,229.5 1025.9,221.9 1023.4,221.9" fill="#ffffff"/>
<polygon points="972.9,221.1 992.3,221.2 990.7,233.4 971.7,233.3" fill="#ffffff"/>
<path d="M1024.1 229.5L1023.4 221.9" stroke="#ff0000" stroke-width="1.3" fill="none"/>
<path d="M1026.7 229.5L1025.9 221.9" stroke="#ff0000" stroke-width="1.3" fill="none"/>
<polygon points="972.9,221.1 992.3,221.2 992.2,219.4 972.8,219.3" fill="#ffffff"/>
<path d="M972.9 221.1L992.3 221.2" stroke="#ff0000" stroke-width="1.3" fill="none"/>
<path d="M972.8 219.3L992.2 219.4" stroke="#ff0000" stroke-width="1.3" fill="none"/>
<polygon points="741.3,251.0 741.8,248.5 742.9,251.9 742.4,254.4" fill="#141414"/>
<polygon points="820.3,228.4 821.3,219.5 823.4,231.7 822.4,240.6" fill="#e8b0a4"/>
<polygon points="735.2,251.0 741.3,251.0 742.4,254.4 736.3,254.4" fill="#141414"/>
<polygon points="735.2,251.0 741.3,251.0 741.8,248.5 735.6,248.5" fill="#141414"/>
<polygon points="817.8,228.4 820.3,228.4 821.3,219.5 818.8,219.5" fill="#ffffff"/>
<path d="M817.8 228.4L818.8 219.5" stroke="#ff0000" stroke-width="1.3" fill="none"/>
<path d="M820.3 228.4L821.3 219.5" stroke="#ff0000" stroke-width="1.3" fill="none"/>
<polygon points="779.7,229.7 801.9,229.8 804.4,241.9 782.8,241.8" fill="#ffffff"/>
<polygon points="779.7,229.7 801.9,229.8 802.1,227.9 780.0,227.8" fill="#ffffff"/>
<path d="M779.7 229.7L801.9 229.8" stroke="#ff0000" stroke-width="1.3" fill="none"/>
<path d="M780.0 227.8L802.1 227.9" stroke="#ff0000" stroke-width="1.3" fill="none"/>
<polygon points="1053.7,243.7 1053.3,240.5 1052.6,243.1 1053.1,246.3" fill="#5a5a52"/>
<polygon points="1053.7,243.7 1061.8,243.7 1061.0,246.4 1053.1,246.3" fill="#5a5a52"/>
<polygon points="1053.7,243.7 1061.8,243.7 1061.3,240.5 1053.3,240.5" fill="#8d8d82"/>
<polygon points="1066.8,245.3 1066.5,242.9 1065.5,246.3 1065.8,248.7" fill="#141414"/>
<polygon points="1066.8,245.3 1072.9,245.3 1071.9,248.8 1065.8,248.7" fill="#141414"/>
<polygon points="1066.8,245.3 1072.9,245.3 1072.6,242.9 1066.5,242.9" fill="#141414"/>
<polygon points="716.0,262.4 717.7,254.4 719.1,258.0 717.4,266.0" fill="#3a3030"/>
<polygon points="1077.5,251.5 1076.3,243.7 1075.2,247.4 1076.4,255.2" fill="#3a3030"/>
<polygon points="711.2,262.3 716.0,262.4 717.7,254.4 712.9,254.3" fill="#8b5a48"/>
<polygon points="1077.5,251.5 1082.3,251.5 1081.0,243.7 1076.3,243.7" fill="#8b5a48"/>
<polygon points="728.7,256.9 729.2,254.4 730.4,257.8 729.9,260.3" fill="#141414"/>
<polygon points="722.5,256.9 728.7,256.9 729.9,260.3 723.8,260.3" fill="#141414"/>
<polygon points="722.5,256.9 728.7,256.9 729.2,254.4 723.0,254.4" fill="#141414"/>
<polygon points="1042.2,243.6 1041.8,240.4 1041.2,243.0 1041.6,246.3" fill="#5a5a52"/>
<polygon points="1042.2,243.6 1050.2,243.7 1049.5,246.3 1041.6,246.3" fill="#5a5a52"/>
<polygon points="1042.2,243.6 1050.2,243.7 1049.8,240.4 1041.8,240.4" fill="#8d8d82"/>
<polygon points="1055.2,245.2 1054.9,242.8 1054.0,246.2 1054.3,248.7" fill="#141414"/>
<polygon points="1055.2,245.2 1061.3,245.3 1060.4,248.7 1054.3,248.7" fill="#141414"/>
<polygon points="741.9,255.2 742.5,252.2 743.3,254.8 742.8,257.8" fill="#5a5a52"/>
<polygon points="1055.2,245.2 1061.3,245.3 1061.0,242.8 1054.9,242.8" fill="#141414"/>
<polygon points="733.8,255.2 741.9,255.2 742.8,257.8 734.7,257.8" fill="#5a5a52"/>
<polygon points="733.8,255.2 741.9,255.2 742.5,252.2 734.4,252.2" fill="#8d8d82"/>
<polygon points="752.7,251.1 753.2,248.6 754.2,252.0 753.8,254.5" fill="#141414"/>
<polygon points="746.6,251.0 752.7,251.1 753.8,254.5 747.7,254.4" fill="#141414"/>
<polygon points="746.6,251.0 752.7,251.1 753.2,248.6 747.0,248.6" fill="#141414"/>
<polygon points="1066.1,249.8 1065.7,246.5 1064.9,249.1 1065.4,252.4" fill="#5a5a52"/>
<polygon points="1066.1,249.8 1074.2,249.8 1073.4,252.4 1065.4,252.4" fill="#5a5a52"/>
<polygon points="1066.1,249.8 1074.2,249.8 1073.7,246.5 1065.7,246.5" fill="#8d8d82"/>
<polygon points="1020.9,231.0 1038.5,231.1 1035.8,243.2 1018.6,243.1" fill="#ffffff"/>
<polygon points="1020.9,231.0 1038.5,231.1 1038.3,229.2 1020.8,229.1" fill="#ffffff"/>
<path d="M1020.9 231.0L1038.5 231.1" stroke="#ff0000" stroke-width="1.3" fill="none"/>
<path d="M1020.8 229.1L1038.3 229.2" stroke="#ff0000" stroke-width="1.3" fill="none"/>
<polygon points="801.9,229.8 824.1,229.9 826.1,242.1 804.4,241.9" fill="#ffffff"/>
<polygon points="801.9,229.8 824.1,229.9 824.3,228.0 802.1,227.9" fill="#ffffff"/>
<path d="M801.9 229.8L824.1 229.9" stroke="#ff0000" stroke-width="1.3" fill="none"/>
<path d="M802.1 227.9L824.3 228.0" stroke="#ff0000" stroke-width="1.3" fill="none"/>
<polygon points="729.3,261.2 729.9,258.1 730.8,260.7 730.2,263.8" fill="#5a5a52"/>
<polygon points="721.1,261.1 729.3,261.2 730.2,263.8 722.1,263.7" fill="#5a5a52"/>
<polygon points="721.1,261.1 729.3,261.2 729.9,258.1 721.8,258.1" fill="#8d8d82"/>
<polygon points="1043.6,245.2 1043.3,242.7 1042.5,246.2 1042.8,248.6" fill="#141414"/>
<polygon points="1043.6,245.2 1049.7,245.2 1048.9,248.6 1042.8,248.6" fill="#141414"/>
<polygon points="1043.6,245.2 1049.7,245.2 1049.4,242.8 1043.3,242.7" fill="#141414"/>
<polygon points="740.2,257.0 740.7,254.5 741.8,257.9 741.3,260.4" fill="#141414"/>
<polygon points="734.0,256.9 740.2,257.0 741.3,260.4 735.2,260.3" fill="#141414"/>
<polygon points="734.0,256.9 740.2,257.0 740.7,254.5 734.5,254.4" fill="#141414"/>
<polygon points="970.6,229.2 970.1,220.3 969.0,232.5 969.3,241.4" fill="#e8b0a4"/>
<polygon points="970.6,229.2 973.1,229.3 972.7,220.3 970.1,220.3" fill="#ffffff"/>
<path d="M970.6 229.2L970.1 220.3" stroke="#ff0000" stroke-width="1.3" fill="none"/>
<path d="M973.1 229.3L972.7 220.3" stroke="#ff0000" stroke-width="1.3" fill="none"/>
<polygon points="753.3,255.3 753.9,252.3 754.7,254.9 754.2,257.9" fill="#5a5a52"/>
<polygon points="745.2,255.2 753.3,255.3 754.2,257.9 746.1,257.9" fill="#5a5a52"/>
<polygon points="745.2,255.2 753.3,255.3 753.9,252.3 745.8,252.2" fill="#8d8d82"/>
<polygon points="1054.5,249.7 1054.1,246.4 1053.4,249.1 1053.8,252.3" fill="#5a5a52"/>
<polygon points="1054.5,249.7 1062.6,249.7 1061.9,252.4 1053.8,252.3" fill="#5a5a52"/>
<polygon points="1054.5,249.7 1062.6,249.7 1062.1,246.5 1054.1,246.4" fill="#8d8d82"/>
<polygon points="1003.4,230.9 1020.9,231.0 1018.6,243.1 1001.4,243.0" fill="#ffffff"/>
<polygon points="1003.4,230.9 1020.9,231.0 1020.8,229.1 1003.2,229.0" fill="#ffffff"/>
<path d="M1003.4 230.9L1020.9 231.0" stroke="#ff0000" stroke-width="1.3" fill="none"/>
<path d="M1003.2 229.0L1020.8 229.1" stroke="#ff0000" stroke-width="1.3" fill="none"/>
<polygon points="1036.7,239.9 1035.5,229.0 1032.9,241.2 1034.1,251.9" fill="#f3b5aa"/>
<polygon points="1036.7,239.9 1039.4,239.9 1038.1,229.0 1035.5,229.0" fill="#ffffff"/>
<path d="M1036.7 239.9L1035.5 229.0" stroke="#ff0000" stroke-width="1.3" fill="none"/>
<path d="M1039.4 239.9L1038.1 229.0" stroke="#ff0000" stroke-width="1.3" fill="none"/>
<polygon points="824.1,229.9 844.6,230.0 844.8,228.2 824.3,228.0" fill="#f7c0b0"/>
<path d="M824.1 229.9L844.6 230.0" stroke="#ff0000" stroke-width="1.3" fill="none"/>
<path d="M824.3 228.0L844.8 228.2" stroke="#ff0000" stroke-width="1.3" fill="none"/>
<polygon points="755.5,249.4 757.4,238.3 760.9,250.4 759.1,261.3" fill="#f3b5aa"/>
<polygon points="752.8,249.4 755.5,249.4 757.4,238.3 754.8,238.3" fill="#ffffff"/>
<path d="M752.8 249.4L754.8 238.3" stroke="#ff0000" stroke-width="1.3" fill="none"/>
<path d="M755.5 249.4L757.4 238.3" stroke="#ff0000" stroke-width="1.3" fill="none"/>
<polygon points="711.7,259.1 712.8,254.1 717.4,266.0 716.4,270.9" fill="#f8a17e"/>
<polygon points="706.8,259.1 711.7,259.1 716.4,270.9 711.5,270.9" fill="#f8a17e"/>
<polygon points="706.8,259.1 711.7,259.1 712.8,254.1 707.9,254.1" fill="#f7c0b0"/>
<polygon points="706.8,259.1 711.7,259.1 712.8,254.1 707.9,254.1" fill="none" stroke="#ff0000" stroke-width="1"/>
<polygon points="727.5,263.0 728.0,260.4 729.3,263.8 728.8,266.3" fill="#141414"/>
<polygon points="721.3,262.9 727.5,263.0 728.8,266.3 722.6,266.3" fill="#141414"/>
<polygon points="721.3,262.9 727.5,263.0 728.0,260.4 721.8,260.4" fill="#141414"/>
<polygon points="1080.8,248.1 1080.0,243.2 1076.4,255.2 1077.1,260.0" fill="#f8a17e"/>
<polygon points="1080.8,248.1 1085.7,248.1 1081.9,260.1 1077.1,260.0" fill="#f8a17e"/>
<polygon points="1080.8,248.1 1085.7,248.1 1084.9,243.2 1080.0,243.2" fill="#f7c0b0"/>
<polygon points="1080.8,248.1 1085.7,248.1 1084.9,243.2 1080.0,243.2" fill="none" stroke="#ff0000" stroke-width="1"/>
<polygon points="740.8,261.3 741.4,258.2 742.2,260.8 741.7,263.8" fill="#5a5a52"/>
<polygon points="732.6,261.2 740.8,261.3 741.7,263.8 733.6,263.8" fill="#5a5a52"/>
<polygon points="732.6,261.2 740.8,261.3 741.4,258.2 733.2,258.1" fill="#8d8d82"/>
<polygon points="985.8,230.8 1003.4,230.9 1001.4,243.0 984.2,242.9" fill="#ffffff"/>
<polygon points="985.8,230.8 1003.4,230.9 1003.2,229.0 985.7,228.9" fill="#ffffff"/>
<polygon points="1042.9,249.6 1042.5,246.4 1041.9,249.0 1042.3,252.3" fill="#5a5a52"/>
<polygon points="1042.9,249.6 1051.0,249.7 1050.3,252.3 1042.3,252.3" fill="#5a5a52"/>
<polygon points="1042.9,249.6 1051.0,249.7 1050.5,246.4 1042.5,246.4" fill="#8d8d82"/>
<path d="M985.8 230.8L1003.4 230.9" stroke="#ff0000" stroke-width="1.3" fill="none"/>
<path d="M985.7 228.9L1003.2 229.0" stroke="#ff0000" stroke-width="1.3" fill="none"/>
<polygon points="751.7,257.0 752.1,254.5 753.2,257.9 752.7,260.4" fill="#141414"/>
<polygon points="745.5,257.0 751.7,257.0 752.7,260.4 746.6,260.4" fill="#141414"/>
<polygon points="745.5,257.0 751.7,257.0 752.1,254.5 745.9,254.5" fill="#141414"/>
<polygon points="844.6,230.0 865.2,230.1 865.3,228.3 844.8,228.2" fill="#f7c0b0"/>
<path d="M844.6 230.0L865.2 230.1" stroke="#ff0000" stroke-width="1.3" fill="none"/>
<path d="M844.8 228.2L865.3 228.3" stroke="#ff0000" stroke-width="1.3" fill="none"/>
<polygon points="1060.5,245.7 1082.3,245.9 1078.6,257.8 1057.3,257.7" fill="#ffffff"/>
<polygon points="1060.5,245.7 1082.3,245.9 1082.0,243.9 1060.2,243.8" fill="#ffffff"/>
<path d="M1060.5 245.7L1082.3 245.9" stroke="#ff0000" stroke-width="1.3" fill="none"/>
<path d="M1060.2 243.8L1082.0 243.9" stroke="#ff0000" stroke-width="1.3" fill="none"/>
<polygon points="968.2,230.7 985.8,230.8 984.2,242.9 967.1,242.8" fill="#ffffff"/>
<polygon points="968.2,230.7 985.8,230.8 985.7,228.9 968.1,228.8" fill="#ffffff"/>
<path d="M968.2 230.7L985.8 230.8" stroke="#ff0000" stroke-width="1.3" fill="none"/>
<path d="M968.1 228.8L985.7 228.9" stroke="#ff0000" stroke-width="1.3" fill="none"/>
<polygon points="818.0,239.9 819.1,229.5 821.3,241.6 820.2,251.9" fill="#d9d9cc"/>
<polygon points="815.4,239.9 818.0,239.9 819.1,229.5 816.5,229.5" fill="#ffffff"/>
<path d="M815.4 239.9L816.5 229.5" stroke="#ff0000" stroke-width="1.3" fill="none"/>
<path d="M818.0 239.9L819.1 229.5" stroke="#ff0000" stroke-width="1.3" fill="none"/>
<polygon points="728.1,267.3 728.7,264.2 729.7,266.8 729.1,269.9" fill="#5a5a52"/>
<polygon points="719.9,267.2 728.1,267.3 729.1,269.9 720.9,269.8" fill="#5a5a52"/>
<polygon points="719.9,267.2 728.1,267.3 728.7,264.2 720.5,264.1" fill="#8d8d82"/>
<polygon points="739.1,263.0 739.5,260.5 740.7,263.9 740.2,266.4" fill="#141414"/>
<polygon points="732.8,263.0 739.1,263.0 740.2,266.4 734.0,266.4" fill="#141414"/>
<polygon points="732.8,263.0 739.1,263.0 739.5,260.5 733.3,260.5" fill="#141414"/>
<polygon points="865.2,230.1 885.8,230.3 885.9,228.4 865.3,228.3" fill="#f7c0b0"/>
<path d="M865.2 230.1L885.8 230.3" stroke="#ff0000" stroke-width="1.3" fill="none"/>
<path d="M865.3 228.3L885.9 228.4" stroke="#ff0000" stroke-width="1.3" fill="none"/>
<polygon points="752.3,261.3 752.8,258.2 753.6,260.9 753.1,263.9" fill="#5a5a52"/>
<polygon points="744.1,261.3 752.3,261.3 753.1,263.9 745.0,263.9" fill="#5a5a52"/>
<polygon points="744.1,261.3 752.3,261.3 752.8,258.2 744.7,258.2" fill="#8d8d82"/>
<polygon points="947.6,230.6 968.2,230.7 968.1,228.8 947.6,228.7" fill="#f7c0b0"/>
<path d="M947.6 230.6L968.2 230.7" stroke="#ff0000" stroke-width="1.3" fill="none"/>
<path d="M947.6 228.7L968.1 228.8" stroke="#ff0000" stroke-width="1.3" fill="none"/>
<polygon points="885.8,230.3 906.4,230.4 906.4,228.5 885.9,228.4" fill="#f7c0b0"/>
<path d="M885.8 230.3L906.4 230.4" stroke="#ff0000" stroke-width="1.3" fill="none"/>
<path d="M885.9 228.4L906.4 228.5" stroke="#ff0000" stroke-width="1.3" fill="none"/>
<polygon points="927.0,230.5 947.6,230.6 947.6,228.7 927.0,228.6" fill="#f7c0b0"/>
<path d="M927.0 230.5L947.6 230.6" stroke="#ff0000" stroke-width="1.3" fill="none"/>
<path d="M927.0 228.6L947.6 228.7" stroke="#ff0000" stroke-width="1.3" fill="none"/>
<polygon points="906.4,230.4 927.0,230.5 927.0,228.6 906.4,228.5" fill="#f7c0b0"/>
<path d="M906.4 230.4L927.0 230.5" stroke="#ff0000" stroke-width="1.3" fill="none"/>
<path d="M906.4 228.5L927.0 228.6" stroke="#ff0000" stroke-width="1.3" fill="none"/>
<polygon points="713.2,275.5 715.0,267.3 716.4,270.9 714.7,279.1" fill="#3a3030"/>
<polygon points="708.3,275.5 713.2,275.5 715.0,267.3 710.1,267.3" fill="#8b5a48"/>
<polygon points="1079.4,264.4 1078.2,256.4 1077.1,260.0 1078.3,268.0" fill="#3a3030"/>
<polygon points="1079.4,264.4 1084.3,264.4 1083.0,256.4 1078.2,256.4" fill="#8b5a48"/>
<polygon points="739.7,267.3 740.2,264.2 741.1,266.8 740.6,269.9" fill="#5a5a52"/>
<polygon points="731.5,267.3 739.7,267.3 740.6,269.9 732.4,269.9" fill="#5a5a52"/>
<polygon points="731.5,267.3 739.7,267.3 740.2,264.2 732.1,264.2" fill="#8d8d82"/>
<polygon points="750.6,263.1 751.1,260.6 752.1,264.0 751.7,266.5" fill="#141414"/>
<polygon points="744.4,263.1 750.6,263.1 751.7,266.5 745.5,266.4" fill="#141414"/>
<polygon points="744.4,263.1 750.6,263.1 751.1,260.6 744.8,260.5" fill="#141414"/>
<polygon points="774.8,245.0 795.4,245.1 798.1,257.1 778.0,257.0" fill="#ffffff"/>
<polygon points="774.8,245.0 795.4,245.1 795.7,243.2 775.1,243.1" fill="#ffffff"/>
<path d="M774.8 245.0L795.4 245.1" stroke="#ff0000" stroke-width="1.3" fill="none"/>
<path d="M775.1 243.1L795.7 243.2" stroke="#ff0000" stroke-width="1.3" fill="none"/>
<polygon points="1038.7,245.6 1060.5,245.7 1057.3,257.7 1036.0,257.6" fill="#ffffff"/>
<polygon points="1038.7,245.6 1060.5,245.7 1060.2,243.8 1038.5,243.7" fill="#ffffff"/>
<path d="M1038.7 245.6L1060.5 245.7" stroke="#ff0000" stroke-width="1.3" fill="none"/>
<path d="M1038.5 243.7L1060.2 243.8" stroke="#ff0000" stroke-width="1.3" fill="none"/>
<polygon points="708.9,263.4 730.3,263.5 734.5,275.2 713.6,275.1" fill="#ffffff"/>
<polygon points="708.9,263.4 730.3,263.5 730.7,261.5 709.4,261.3" fill="#ffffff"/>
<polygon points="774.9,253.3 776.4,242.9 779.6,254.9 778.1,265.2" fill="#f3b5aa"/>
<polygon points="772.2,253.3 774.9,253.3 776.4,242.9 773.8,242.9" fill="#ffffff"/>
<path d="M708.9 263.4L730.3 263.5" stroke="#ff0000" stroke-width="1.3" fill="none"/>
<path d="M709.4 261.3L730.7 261.5" stroke="#ff0000" stroke-width="1.3" fill="none"/>
<path d="M772.2 253.3L773.8 242.9" stroke="#ff0000" stroke-width="1.3" fill="none" stroke-dasharray="3 1.5"/>
<path d="M774.9 253.3L776.4 242.9" stroke="#ff0000" stroke-width="1.3" fill="none" stroke-dasharray="3 1.5"/>
<polygon points="975.6,240.8 975.0,230.3 973.7,242.5 974.2,252.8" fill="#d9d9cc"/>
<polygon points="975.6,240.8 978.2,240.8 977.6,230.4 975.0,230.3" fill="#ffffff"/>
<path d="M975.6 240.8L975.0 230.3" stroke="#ff0000" stroke-width="1.3" fill="none"/>
<path d="M978.2 240.8L977.6 230.4" stroke="#ff0000" stroke-width="1.3" fill="none"/>
<polygon points="751.2,267.4 751.8,264.3 752.6,266.9 752.1,270.0" fill="#5a5a52"/>
<polygon points="1038.0,250.9 1036.7,239.9 1034.1,251.9 1035.3,262.8" fill="#f3b5aa"/>
<polygon points="743.0,267.4 751.2,267.4 752.1,270.0 743.9,269.9" fill="#5a5a52"/>
<polygon points="743.0,267.4 751.2,267.4 751.8,264.3 743.6,264.3" fill="#8d8d82"/>
<polygon points="1038.0,250.9 1040.6,250.9 1039.4,239.9 1036.7,239.9" fill="#ffffff"/>
<path d="M1038.0 250.9L1036.7 239.9" stroke="#ff0000" stroke-width="1.3" fill="none"/>
<path d="M1040.6 250.9L1039.4 239.9" stroke="#ff0000" stroke-width="1.3" fill="none"/>
<polygon points="753.5,260.7 755.5,249.4 759.1,261.3 757.2,272.5" fill="#f3b5aa"/>
<polygon points="750.9,260.6 753.5,260.7 755.5,249.4 752.8,249.4" fill="#ffffff"/>
<path d="M750.9 260.6L752.8 249.4" stroke="#ff0000" stroke-width="1.3" fill="none"/>
<path d="M753.5 260.7L755.5 249.4" stroke="#ff0000" stroke-width="1.3" fill="none"/>
<polygon points="795.4,245.1 816.1,245.2 818.3,257.2 798.1,257.1" fill="#ffffff"/>
<polygon points="795.4,245.1 816.1,245.2 816.3,243.3 795.7,243.2" fill="#ffffff"/>
<path d="M795.4 245.1L816.1 245.2" stroke="#ff0000" stroke-width="1.3" fill="none"/>
<path d="M795.7 243.2L816.3 243.3" stroke="#ff0000" stroke-width="1.3" fill="none"/>
<polygon points="708.9,272.5 710.0,267.4 714.7,279.1 713.6,284.2" fill="#f8a17e"/>
<polygon points="703.9,272.5 708.9,272.5 713.6,284.2 708.7,284.2" fill="#f8a17e"/>
<polygon points="703.9,272.5 708.9,272.5 710.0,267.4 705.0,267.4" fill="#f7c0b0"/>
<polygon points="703.9,272.5 708.9,272.5 710.0,267.4 705.0,267.4" fill="none" stroke="#ff0000" stroke-width="1"/>
<polygon points="1082.8,261.2 1082.1,256.2 1078.3,268.0 1079.0,273.0" fill="#f8a17e"/>
<polygon points="1082.8,261.2 1087.8,261.2 1083.9,273.0 1079.0,273.0" fill="#f8a17e"/>
<polygon points="1082.8,261.2 1087.8,261.2 1087.0,256.2 1082.1,256.2" fill="#f7c0b0"/>
<polygon points="1082.8,261.2 1087.8,261.2 1087.0,256.2 1082.1,256.2" fill="none" stroke="#ff0000" stroke-width="1"/>
<polygon points="816.8,250.5 818.0,239.9 820.2,251.9 819.0,262.4" fill="#d9d9cc"/>
<polygon points="814.2,250.5 816.8,250.5 818.0,239.9 815.4,239.9" fill="#ffffff"/>
<path d="M814.2 250.5L815.4 239.9" stroke="#ff0000" stroke-width="1.3" fill="none"/>
<path d="M816.8 250.5L818.0 239.9" stroke="#ff0000" stroke-width="1.3" fill="none"/>
<polygon points="730.3,263.5 751.7,263.6 755.4,275.4 734.5,275.2" fill="#ffffff"/>
<polygon points="730.3,263.5 751.7,263.6 752.0,261.6 730.7,261.5" fill="#ffffff"/>
<path d="M730.3 263.5L751.7 263.6" stroke="#ff0000" stroke-width="1.3" fill="none"/>
<path d="M730.7 261.5L752.0 261.6" stroke="#ff0000" stroke-width="1.3" fill="none"/>
<polygon points="1062.6,261.3 1084.8,261.4 1080.9,273.2 1059.3,273.1" fill="#ffffff"/>
<polygon points="1062.6,261.3 1084.8,261.4 1084.5,259.4 1062.4,259.3" fill="#ffffff"/>
<path d="M1062.6 261.3L1084.8 261.4" stroke="#ff0000" stroke-width="1.3" fill="none"/>
<path d="M1062.4 259.3L1084.5 259.4" stroke="#ff0000" stroke-width="1.3" fill="none"/>
<polygon points="996.8,248.2 1016.4,248.3 1014.2,260.2 995.0,260.1" fill="#ffffff"/>
<polygon points="996.8,248.2 1016.4,248.3 1016.2,246.3 996.7,246.2" fill="#ffffff"/>
<path d="M996.8 248.2L1016.4 248.3" stroke="#ff0000" stroke-width="1.3" fill="none"/>
<path d="M996.7 246.2L1016.2 246.3" stroke="#ff0000" stroke-width="1.3" fill="none"/>
<polygon points="710.4,289.1 712.2,280.6 713.6,284.2 711.9,292.6" fill="#3a3030"/>
<polygon points="705.4,289.0 710.4,289.1 712.2,280.6 707.2,280.6" fill="#8b5a48"/>
<polygon points="773.3,263.9 774.9,253.3 778.1,265.2 776.5,275.6" fill="#f3b5aa"/>
<polygon points="770.6,263.8 773.3,263.9 774.9,253.3 772.2,253.3" fill="#ffffff"/>
<path d="M770.6 263.8L772.2 253.3" stroke="#ff0000" stroke-width="1.3" fill="none" stroke-dasharray="3 1.5"/>
<path d="M773.3 263.9L774.9 253.3" stroke="#ff0000" stroke-width="1.3" fill="none" stroke-dasharray="3 1.5"/>
<polygon points="1081.5,277.6 1080.2,269.4 1079.0,273.0 1080.3,281.2" fill="#3a3030"/>
<polygon points="1081.5,277.6 1086.4,277.7 1085.1,269.4 1080.2,269.4" fill="#8b5a48"/>
<polygon points="772.8,258.0 793.7,258.1 796.5,269.9 776.1,269.8" fill="#ffffff"/>
<polygon points="772.8,258.0 793.7,258.1 794.0,256.1 773.1,256.0" fill="#ffffff"/>
<polygon points="976.1,251.4 975.6,240.8 974.2,252.8 974.8,263.3" fill="#d9d9cc"/>
<polygon points="976.1,251.4 978.8,251.4 978.2,240.8 975.6,240.8" fill="#ffffff"/>
<path d="M772.8 258.0L793.7 258.1" stroke="#ff0000" stroke-width="1.3" fill="none"/>
<path d="M773.1 256.0L794.0 256.1" stroke="#ff0000" stroke-width="1.3" fill="none"/>
<path d="M976.1 251.4L975.6 240.8" stroke="#ff0000" stroke-width="1.3" fill="none"/>
<path d="M978.8 251.4L978.2 240.8" stroke="#ff0000" stroke-width="1.3" fill="none"/>
<polygon points="977.3,248.1 996.8,248.2 995.0,260.1 975.9,260.0" fill="#ffffff"/>
<polygon points="977.3,248.1 996.8,248.2 996.7,246.2 977.2,246.1" fill="#ffffff"/>
<path d="M977.3 248.1L996.8 248.2" stroke="#ff0000" stroke-width="1.3" fill="none"/>
<path d="M977.2 246.1L996.7 246.2" stroke="#ff0000" stroke-width="1.3" fill="none"/>
<polygon points="1039.3,262.3 1038.0,250.9 1035.3,262.8 1036.5,274.0" fill="#f3b5aa"/>
<polygon points="1039.3,262.3 1042.0,262.3 1040.6,250.9 1038.0,250.9" fill="#ffffff"/>
<path d="M1039.3 262.3L1038.0 250.9" stroke="#ff0000" stroke-width="1.3" fill="none"/>
<path d="M1042.0 262.3L1040.6 250.9" stroke="#ff0000" stroke-width="1.3" fill="none"/>
<polygon points="1016.0,258.3 1015.0,247.0 1012.8,259.0 1013.7,270.2" fill="#f3b5aa"/>
<polygon points="1016.0,258.3 1018.7,258.3 1017.6,247.0 1015.0,247.0" fill="#ffffff"/>
<path d="M1016.0 258.3L1015.0 247.0" stroke="#ff0000" stroke-width="1.3" fill="none" stroke-dasharray="3 1.5"/>
<path d="M1018.7 258.3L1017.6 247.0" stroke="#ff0000" stroke-width="1.3" fill="none" stroke-dasharray="3 1.5"/>
<polygon points="751.5,272.2 753.5,260.7 757.2,272.5 755.3,283.9" fill="#f3b5aa"/>
<polygon points="748.9,272.2 751.5,272.2 753.5,260.7 750.9,260.6" fill="#ffffff"/>
<path d="M748.9 272.2L750.9 260.6" stroke="#ff0000" stroke-width="1.3" fill="none"/>
<path d="M751.5 272.2L753.5 260.7" stroke="#ff0000" stroke-width="1.3" fill="none"/>
<polygon points="705.8,277.7 727.5,277.8 731.9,289.4 710.7,289.3" fill="#ffffff"/>
<polygon points="705.8,277.7 727.5,277.8 727.9,275.7 706.3,275.6" fill="#ffffff"/>
<path d="M705.8 277.7L727.5 277.8" stroke="#ff0000" stroke-width="1.3" fill="none"/>
<path d="M706.3 275.6L727.9 275.7" stroke="#ff0000" stroke-width="1.3" fill="none"/>
<polygon points="1040.5,261.2 1062.6,261.3 1059.3,273.1 1037.7,273.0" fill="#ffffff"/>
<polygon points="1040.5,261.2 1062.6,261.3 1062.4,259.3 1040.3,259.2" fill="#ffffff"/>
<path d="M1040.5 261.2L1062.6 261.3" stroke="#ff0000" stroke-width="1.3" fill="none"/>
<path d="M1040.3 259.2L1062.4 259.3" stroke="#ff0000" stroke-width="1.3" fill="none"/>
<polygon points="793.7,258.1 814.6,258.2 816.9,270.0 796.5,269.9" fill="#ffffff"/>
<polygon points="793.7,258.1 814.6,258.2 814.8,256.2 794.0,256.1" fill="#ffffff"/>
<path d="M793.7 258.1L814.6 258.2" stroke="#ff0000" stroke-width="1.3" fill="none"/>
<path d="M794.0 256.1L814.8 256.2" stroke="#ff0000" stroke-width="1.3" fill="none"/>
<polygon points="705.9,286.3 707.0,281.0 711.9,292.6 710.8,297.8" fill="#f8a17e"/>
<polygon points="700.8,286.3 705.9,286.3 710.8,297.8 705.8,297.8" fill="#f8a17e"/>
<polygon points="700.8,286.3 705.9,286.3 707.0,281.0 702.0,281.0" fill="#f7c0b0"/>
<polygon points="700.8,286.3 705.9,286.3 707.0,281.0 702.0,281.0" fill="none" stroke="#ff0000" stroke-width="1"/>
<polygon points="815.6,261.4 816.8,250.5 819.0,262.4 817.9,273.2" fill="#d9d9cc"/>
<polygon points="812.9,261.4 815.6,261.4 816.8,250.5 814.2,250.5" fill="#ffffff"/>
<path d="M812.9 261.4L814.2 250.5" stroke="#ff0000" stroke-width="1.3" fill="none"/>
<path d="M815.6 261.4L816.8 250.5" stroke="#ff0000" stroke-width="1.3" fill="none"/>
<polygon points="1085.0,274.7 1084.1,269.5 1080.3,281.2 1081.1,286.3" fill="#f8a17e"/>
<polygon points="1085.0,274.7 1090.0,274.7 1086.0,286.3 1081.1,286.3" fill="#f8a17e"/>
<polygon points="1085.0,274.7 1090.0,274.7 1089.2,269.5 1084.1,269.5" fill="#f7c0b0"/>
<polygon points="985.2,264.1 1005.7,264.2 1005.2,267.3 984.8,267.2" fill="#77776e"/>
<polygon points="985.2,264.1 1005.7,264.2 1005.4,260.8 985.0,260.7" fill="#9a9a90"/>
<polygon points="1085.0,274.7 1090.0,274.7 1089.2,269.5 1084.1,269.5" fill="none" stroke="#ff0000" stroke-width="1"/>
<polygon points="727.5,277.8 749.2,277.9 753.1,289.5 731.9,289.4" fill="#ffffff"/>
<polygon points="727.5,277.8 749.2,277.9 749.6,275.9 727.9,275.7" fill="#ffffff"/>
<path d="M727.5 277.8L749.2 277.9" stroke="#ff0000" stroke-width="1.3" fill="none"/>
<path d="M727.9 275.7L749.6 275.9" stroke="#ff0000" stroke-width="1.3" fill="none"/>
<polygon points="771.6,274.7 773.3,263.9 776.5,275.6 774.9,286.3" fill="#f3b5aa"/>
<polygon points="768.9,274.6 771.6,274.7 773.3,263.9 770.6,263.8" fill="#ffffff"/>
<path d="M768.9 274.6L770.6 263.8" stroke="#ff0000" stroke-width="1.3" fill="none" stroke-dasharray="3 1.5"/>
<path d="M771.6 274.7L773.3 263.9" stroke="#ff0000" stroke-width="1.3" fill="none" stroke-dasharray="3 1.5"/>
<polygon points="795.8,274.0 810.8,274.1 811.3,276.7 796.4,276.6" fill="#d0d0d0"/>
<polygon points="795.8,274.0 810.8,274.1 811.2,270.4 796.3,270.3" fill="#f0f0f0"/>
<polygon points="716.5,297.0 717.2,293.4 718.6,296.9 717.9,300.5" fill="#1b2466"/>
<polygon points="712.2,296.9 716.5,297.0 717.9,300.5 713.7,300.5" fill="#1b2466"/>
<polygon points="712.2,296.9 716.5,297.0 717.2,293.4 713.0,293.3" fill="#27348a"/>
<polygon points="707.5,303.0 709.3,294.3 710.8,297.8 709.0,306.4" fill="#3a3030"/>
<polygon points="702.5,302.9 707.5,303.0 709.3,294.3 704.3,294.3" fill="#8b5a48"/>
<polygon points="1064.5,275.0 1087.0,275.1 1083.0,286.8 1061.1,286.6" fill="#ffffff"/>
<polygon points="1064.5,275.0 1087.0,275.1 1086.6,273.1 1064.2,272.9" fill="#ffffff"/>
<path d="M1064.5 275.0L1087.0 275.1" stroke="#ff0000" stroke-width="1.3" fill="none"/>
<path d="M1064.2 272.9L1086.6 273.1" stroke="#ff0000" stroke-width="1.3" fill="none"/>
<polygon points="976.7,262.3 976.1,251.4 974.8,263.3 975.3,274.1" fill="#d9d9cc"/>
<polygon points="976.7,262.3 979.3,262.3 978.8,251.4 976.1,251.4" fill="#ffffff"/>
<path d="M976.7 262.3L976.1 251.4" stroke="#ff0000" stroke-width="1.3" fill="none"/>
<path d="M979.3 262.3L978.8 251.4" stroke="#ff0000" stroke-width="1.3" fill="none"/>
<polygon points="1083.5,291.2 1082.3,282.7 1081.1,286.3 1082.3,294.7" fill="#3a3030"/>
<polygon points="1083.5,291.2 1088.5,291.2 1087.2,282.8 1082.3,282.7" fill="#8b5a48"/>
<polygon points="749.5,284.0 751.5,272.2 755.3,283.9 753.4,295.6" fill="#f3b5aa"/>
<polygon points="746.8,284.0 749.5,284.0 751.5,272.2 748.9,272.2" fill="#ffffff"/>
<polygon points="1040.6,273.8 1039.3,262.3 1036.5,274.0 1037.7,285.5" fill="#f3b5aa"/>
<polygon points="1040.6,273.8 1043.3,273.9 1042.0,262.3 1039.3,262.3" fill="#ffffff"/>
<path d="M746.8 284.0L748.9 272.2" stroke="#ff0000" stroke-width="1.3" fill="none"/>
<path d="M749.5 284.0L751.5 272.2" stroke="#ff0000" stroke-width="1.3" fill="none"/>
<path d="M1040.6 273.8L1039.3 262.3" stroke="#ff0000" stroke-width="1.3" fill="none"/>
<path d="M1043.3 273.9L1042.0 262.3" stroke="#ff0000" stroke-width="1.3" fill="none"/>
<polygon points="1017.1,269.9 1016.0,258.3 1013.7,270.2 1014.7,281.6" fill="#f3b5aa"/>
<polygon points="1017.1,269.9 1019.8,269.9 1018.7,258.3 1016.0,258.3" fill="#ffffff"/>
<path d="M1017.1 269.9L1016.0 258.3" stroke="#ff0000" stroke-width="1.3" fill="none" stroke-dasharray="3 1.5"/>
<path d="M1019.8 269.9L1018.7 258.3" stroke="#ff0000" stroke-width="1.3" fill="none" stroke-dasharray="3 1.5"/>
<polygon points="1005.2,273.5 1005.0,270.9 1004.4,274.3 1004.6,276.8" fill="#141414"/>
<polygon points="1005.2,273.5 1010.9,273.5 1010.3,276.9 1004.6,276.8" fill="#141414"/>
<polygon points="1005.2,273.5 1010.9,273.5 1010.7,271.0 1005.0,270.9" fill="#141414"/>
<polygon points="790.5,280.5 790.9,277.9 791.7,281.2 791.4,283.8" fill="#141414"/>
<polygon points="783.6,280.4 790.5,280.5 791.4,283.8 784.5,283.7" fill="#141414"/>
<polygon points="783.6,280.4 790.5,280.5 790.9,277.9 784.0,277.8" fill="#141414"/>
<polygon points="734.7,299.6 735.8,293.6 736.7,296.1 735.6,302.1" fill="#cfcfcf"/>
<polygon points="723.1,299.5 734.7,299.6 735.6,302.1 724.1,302.0" fill="#cfcfcf"/>
<polygon points="723.1,299.5 734.7,299.6 735.8,293.6 724.3,293.5" fill="#f2f2f2"/>
<polygon points="994.8,273.4 994.6,270.9 994.1,274.2 994.3,276.8" fill="#141414"/>
<polygon points="994.8,273.4 1000.5,273.5 1000.0,276.8 994.3,276.8" fill="#141414"/>
<polygon points="994.8,273.4 1000.5,273.5 1000.3,270.9 994.6,270.9" fill="#141414"/>
<polygon points="814.4,272.5 815.6,261.4 817.9,273.2 816.7,284.1" fill="#d9d9cc"/>
<polygon points="811.7,272.5 814.4,272.5 815.6,261.4 812.9,261.4" fill="#ffffff"/>
<path d="M811.7 272.5L812.9 261.4" stroke="#ff0000" stroke-width="1.3" fill="none"/>
<path d="M814.4 272.5L815.6 261.4" stroke="#ff0000" stroke-width="1.3" fill="none"/>
<polygon points="1042.1,274.9 1064.5,275.0 1061.1,286.6 1039.2,286.5" fill="#ffffff"/>
<polygon points="1042.1,274.9 1064.5,275.0 1064.2,272.9 1041.8,272.8" fill="#ffffff"/>
<path d="M1042.1 274.9L1064.5 275.0" stroke="#ff0000" stroke-width="1.3" fill="none"/>
<path d="M1041.8 272.8L1064.2 272.9" stroke="#ff0000" stroke-width="1.3" fill="none"/>
<polygon points="702.9,300.5 704.0,295.0 709.0,306.4 707.9,311.8" fill="#f8a17e"/>
<polygon points="697.7,300.4 702.9,300.5 707.9,311.8 702.9,311.8" fill="#f8a17e"/>
<polygon points="697.7,300.4 702.9,300.5 704.0,295.0 698.9,295.0" fill="#f7c0b0"/>
<polygon points="697.7,300.4 702.9,300.5 704.0,295.0 698.9,295.0" fill="none" stroke="#ff0000" stroke-width="1"/>
<polygon points="984.4,273.4 984.2,270.8 983.8,274.2 983.9,276.7" fill="#141414"/>
<polygon points="984.4,273.4 990.1,273.4 989.6,276.8 983.9,276.7" fill="#141414"/>
<polygon points="984.4,273.4 990.1,273.4 989.9,270.8 984.2,270.8" fill="#141414"/>
<polygon points="805.7,280.6 806.0,277.9 806.7,281.3 806.4,283.9" fill="#141414"/>
<polygon points="798.8,280.5 805.7,280.6 806.4,283.9 799.6,283.8" fill="#141414"/>
<polygon points="798.8,280.5 805.7,280.6 806.0,277.9 799.1,277.9" fill="#141414"/>
<polygon points="791.3,284.9 791.8,281.7 792.4,284.2 792.0,287.4" fill="#5a5a52"/>
<polygon points="782.2,284.8 791.3,284.9 792.0,287.4 782.9,287.4" fill="#5a5a52"/>
<polygon points="782.2,284.8 791.3,284.9 791.8,281.7 782.7,281.6" fill="#55554e"/>
<polygon points="1004.5,278.2 1004.2,274.7 1003.8,277.3 1004.0,280.7" fill="#5a5a52"/>
<polygon points="1004.5,278.2 1012.0,278.2 1011.5,280.8 1004.0,280.7" fill="#5a5a52"/>
<polygon points="1004.5,278.2 1012.0,278.2 1011.7,274.7 1004.2,274.7" fill="#8d8d82"/>
<polygon points="1087.1,288.5 1086.3,283.2 1082.3,294.7 1083.1,300.0" fill="#f8a17e"/>
<polygon points="1087.1,288.5 1092.2,288.5 1088.1,300.0 1083.1,300.0" fill="#f8a17e"/>
<polygon points="1087.1,288.5 1092.2,288.5 1091.4,283.2 1086.3,283.2" fill="#f7c0b0"/>
<polygon points="1087.1,288.5 1092.2,288.5 1091.4,283.2 1086.3,283.2" fill="none" stroke="#ff0000" stroke-width="1"/>
<polygon points="994.0,278.1 993.8,274.6 993.4,277.2 993.6,280.7" fill="#5a5a52"/>
<polygon points="994.0,278.1 1001.6,278.1 1001.1,280.7 993.6,280.7" fill="#5a5a52"/>
<polygon points="994.0,278.1 1001.6,278.1 1001.3,274.7 993.8,274.6" fill="#8d8d82"/>
<polygon points="789.8,285.7 790.2,283.1 791.0,286.4 790.7,289.0" fill="#141414"/>
<polygon points="782.9,285.7 789.8,285.7 790.7,289.0 783.8,289.0" fill="#141414"/>
<polygon points="782.9,285.7 789.8,285.7 790.2,283.1 783.3,283.1" fill="#141414"/>
<polygon points="716.2,306.9 716.7,304.2 718.1,307.4 717.6,310.2" fill="#141414"/>
<polygon points="710.6,306.9 716.2,306.9 717.6,310.2 712.0,310.1" fill="#141414"/>
<polygon points="710.6,306.9 716.2,306.9 716.7,304.2 711.1,304.2" fill="#141414"/>
<polygon points="769.9,285.7 771.6,274.7 774.9,286.3 773.3,297.2" fill="#f3b5aa"/>
<polygon points="767.2,285.7 769.9,285.7 771.6,274.7 768.9,274.6" fill="#ffffff"/>
<path d="M767.2 285.7L768.9 274.6" stroke="#ff0000" stroke-width="1.3" fill="none" stroke-dasharray="3 1.5"/>
<path d="M769.9 285.7L771.6 274.7" stroke="#ff0000" stroke-width="1.3" fill="none" stroke-dasharray="3 1.5"/>
<polygon points="1048.9,289.1 1079.8,289.3 1078.2,293.9 1047.7,293.7" fill="#e4e4e4"/>
<polygon points="1048.9,289.1 1079.8,289.3 1079.2,285.4 1048.4,285.2" fill="#f6f6f6"/>
<polygon points="983.6,278.0 983.4,274.6 983.0,277.1 983.2,280.6" fill="#5a5a52"/>
<polygon points="983.6,278.0 991.1,278.1 990.7,280.6 983.2,280.6" fill="#5a5a52"/>
<polygon points="983.6,278.0 991.1,278.1 990.9,274.6 983.4,274.6" fill="#8d8d82"/>
<polygon points="1005.7,280.0 1005.5,277.4 1004.9,280.7 1005.1,283.3" fill="#141414"/>
<polygon points="1005.7,280.0 1011.5,280.0 1010.9,283.3 1005.1,283.3" fill="#141414"/>
<polygon points="1005.7,280.0 1011.5,280.0 1011.3,277.4 1005.5,277.4" fill="#141414"/>
<polygon points="806.5,285.0 806.9,281.8 807.5,284.3 807.1,287.5" fill="#5a5a52"/>
<polygon points="797.4,284.9 806.5,285.0 807.1,287.5 798.0,287.5" fill="#5a5a52"/>
<polygon points="797.4,284.9 806.5,285.0 806.9,281.8 797.8,281.7" fill="#55554e"/>
<polygon points="995.2,279.9 995.1,277.3 994.5,280.6 994.7,283.2" fill="#141414"/>
<polygon points="995.2,279.9 1001.0,279.9 1000.4,283.3 994.7,283.2" fill="#141414"/>
<polygon points="995.2,279.9 1001.0,279.9 1000.8,277.3 995.1,277.3" fill="#141414"/>
<polygon points="977.2,273.4 976.7,262.3 975.3,274.1 975.8,285.0" fill="#d9d9cc"/>
<polygon points="977.2,273.4 979.9,273.4 979.3,262.3 976.7,262.3" fill="#ffffff"/>
<path d="M977.2 273.4L976.7 262.3" stroke="#ff0000" stroke-width="1.3" fill="none"/>
<path d="M979.9 273.4L979.3 262.3" stroke="#ff0000" stroke-width="1.3" fill="none"/>
<polygon points="725.4,307.0 726.0,304.3 727.2,307.5 726.7,310.2" fill="#141414"/>
<polygon points="719.8,307.0 725.4,307.0 726.7,310.2 721.1,310.2" fill="#141414"/>
<polygon points="719.8,307.0 725.4,307.0 726.0,304.3 720.4,304.2" fill="#141414"/>
<polygon points="790.6,290.2 791.1,286.9 791.7,289.5 791.3,292.7" fill="#5a5a52"/>
<polygon points="781.5,290.1 790.6,290.2 791.3,292.7 782.2,292.7" fill="#5a5a52"/>
<polygon points="781.5,290.1 790.6,290.2 791.1,286.9 781.9,286.9" fill="#55554e"/>
<polygon points="704.5,317.2 706.4,308.3 707.9,311.8 706.1,320.7" fill="#3a3030"/>
<polygon points="699.4,317.2 704.5,317.2 706.4,308.3 701.3,308.3" fill="#8b5a48"/>
<polygon points="805.1,285.8 805.4,283.2 806.1,286.5 805.8,289.1" fill="#141414"/>
<polygon points="798.1,285.8 805.1,285.8 805.8,289.1 798.9,289.1" fill="#141414"/>
<polygon points="798.1,285.8 805.1,285.8 805.4,283.2 798.5,283.1" fill="#141414"/>
<polygon points="716.5,312.2 717.3,308.2 718.3,310.6 717.6,314.6" fill="#5a5a52"/>
<polygon points="709.1,312.1 716.5,312.2 717.6,314.6 710.2,314.6" fill="#5a5a52"/>
<polygon points="709.1,312.1 716.5,312.2 717.3,308.2 709.9,308.1" fill="#222222"/>
<polygon points="984.7,279.9 984.6,277.2 984.1,280.6 984.3,283.2" fill="#141414"/>
<polygon points="984.7,279.9 990.5,279.9 990.0,283.2 984.3,283.2" fill="#141414"/>
<polygon points="984.7,279.9 990.5,279.9 990.3,277.3 984.6,277.2" fill="#141414"/>
<polygon points="747.4,296.1 749.5,284.0 753.4,295.6 751.4,307.5" fill="#f3b5aa"/>
<polygon points="744.7,296.1 747.4,296.1 749.5,284.0 746.8,284.0" fill="#ffffff"/>
<path d="M744.7 296.1L746.8 284.0" stroke="#ff0000" stroke-width="1.3" fill="none"/>
<path d="M747.4 296.1L749.5 284.0" stroke="#ff0000" stroke-width="1.3" fill="none"/>
<polygon points="1041.9,285.7 1040.6,273.8 1037.7,285.5 1039.0,297.2" fill="#f3b5aa"/>
<polygon points="1041.9,285.7 1044.7,285.7 1043.3,273.9 1040.6,273.8" fill="#ffffff"/>
<path d="M1041.9 285.7L1040.6 273.8" stroke="#ff0000" stroke-width="1.3" fill="none"/>
<path d="M1044.7 285.7L1043.3 273.9" stroke="#ff0000" stroke-width="1.3" fill="none"/>
<polygon points="1005.0,284.7 1004.7,281.2 1004.3,283.7 1004.5,287.2" fill="#5a5a52"/>
<polygon points="1005.0,284.7 1012.6,284.7 1012.1,287.3 1004.5,287.2" fill="#5a5a52"/>
<polygon points="1005.0,284.7 1012.6,284.7 1012.3,281.2 1004.7,281.2" fill="#8d8d82"/>
<polygon points="789.1,291.1 789.5,288.4 790.3,291.7 790.0,294.3" fill="#141414"/>
<polygon points="782.1,291.0 789.1,291.1 790.0,294.3 783.0,294.3" fill="#141414"/>
<polygon points="782.1,291.0 789.1,291.1 789.5,288.4 782.5,288.3" fill="#141414"/>
<polygon points="715.0,313.1 715.5,310.3 716.9,313.5 716.3,316.3" fill="#141414"/>
<polygon points="709.3,313.1 715.0,313.1 716.3,316.3 710.7,316.3" fill="#141414"/>
<polygon points="709.3,313.1 715.0,313.1 715.5,310.3 709.9,310.3" fill="#141414"/>
<polygon points="1018.1,281.7 1017.1,269.9 1014.7,281.6 1015.8,293.3" fill="#f3b5aa"/>
<polygon points="1018.1,281.7 1020.9,281.7 1019.8,269.9 1017.1,269.9" fill="#ffffff"/>
<path d="M1018.1 281.7L1017.1 269.9" stroke="#ff0000" stroke-width="1.3" fill="none" stroke-dasharray="3 1.5"/>
<path d="M1020.9 281.7L1019.8 269.9" stroke="#ff0000" stroke-width="1.3" fill="none" stroke-dasharray="3 1.5"/>
<polygon points="1085.7,305.2 1084.4,296.5 1083.1,300.0 1084.4,308.6" fill="#3a3030"/>
<polygon points="1085.7,305.2 1090.7,305.2 1089.4,296.5 1084.4,296.5" fill="#8b5a48"/>
<polygon points="734.7,307.1 735.2,304.3 736.4,307.5 735.9,310.3" fill="#141414"/>
<polygon points="729.0,307.0 734.7,307.1 735.9,310.3 730.3,310.2" fill="#141414"/>
<polygon points="729.0,307.0 734.7,307.1 735.2,304.3 729.6,304.3" fill="#141414"/>
<polygon points="994.5,284.6 994.2,281.1 993.8,283.7 994.1,287.2" fill="#5a5a52"/>
<polygon points="994.5,284.6 1002.1,284.7 1001.6,287.2 994.1,287.2" fill="#5a5a52"/>
<polygon points="994.5,284.6 1002.1,284.7 1001.8,281.2 994.2,281.1" fill="#8d8d82"/>
<polygon points="725.8,312.2 726.5,308.2 727.5,310.7 726.8,314.7" fill="#5a5a52"/>
<polygon points="718.4,312.2 725.8,312.2 726.8,314.7 719.4,314.6" fill="#5a5a52"/>
<polygon points="718.4,312.2 725.8,312.2 726.5,308.2 719.1,308.2" fill="#222222"/>
<polygon points="805.9,290.3 806.3,287.0 806.9,289.6 806.5,292.8" fill="#5a5a52"/>
<polygon points="796.8,290.2 805.9,290.3 806.5,292.8 797.4,292.8" fill="#5a5a52"/>
<polygon points="796.8,290.2 805.9,290.3 806.3,287.0 797.2,287.0" fill="#55554e"/>
<polygon points="813.1,283.8 814.4,272.5 816.7,284.1 815.5,295.3" fill="#d9d9cc"/>
<polygon points="810.4,283.8 813.1,283.8 814.4,272.5 811.7,272.5" fill="#ffffff"/>
<path d="M810.4 283.8L811.7 272.5" stroke="#ff0000" stroke-width="1.3" fill="none"/>
<path d="M813.1 283.8L814.4 272.5" stroke="#ff0000" stroke-width="1.3" fill="none"/>
<polygon points="983.9,284.6 983.7,281.1 983.4,283.6 983.6,287.1" fill="#5a5a52"/>
<polygon points="983.9,284.6 991.5,284.6 991.2,287.1 983.6,287.1" fill="#5a5a52"/>
<polygon points="983.9,284.6 991.5,284.6 991.3,281.1 983.7,281.1" fill="#8d8d82"/>
<polygon points="1006.2,286.5 1006.0,283.9 1005.4,287.2 1005.6,289.8" fill="#141414"/>
<polygon points="1006.2,286.5 1012.0,286.6 1011.4,289.9 1005.6,289.8" fill="#141414"/>
<polygon points="1006.2,286.5 1012.0,286.6 1011.8,283.9 1006.0,283.9" fill="#141414"/>
<polygon points="789.9,295.5 790.4,292.3 791.0,294.8 790.6,298.1" fill="#5a5a52"/>
<polygon points="780.7,295.5 789.9,295.5 790.6,298.1 781.4,298.0" fill="#5a5a52"/>
<polygon points="780.7,295.5 789.9,295.5 790.4,292.3 781.2,292.2" fill="#55554e"/>
<polygon points="804.5,291.1 804.8,288.5 805.5,291.8 805.2,294.4" fill="#141414"/>
<polygon points="797.5,291.1 804.5,291.1 805.2,294.4 798.3,294.4" fill="#141414"/>
<polygon points="797.5,291.1 804.5,291.1 804.8,288.5 797.8,288.4" fill="#141414"/>
<polygon points="724.2,313.2 724.8,310.4 726.1,313.6 725.6,316.4" fill="#141414"/>
<polygon points="718.6,313.1 724.2,313.2 725.6,316.4 720.0,316.3" fill="#141414"/>
<polygon points="718.6,313.1 724.2,313.2 724.8,310.4 719.1,310.4" fill="#141414"/>
<polygon points="715.3,318.4 716.1,314.3 717.1,316.8 716.3,320.8" fill="#5a5a52"/>
<polygon points="707.8,318.3 715.3,318.4 716.3,320.8 708.9,320.8" fill="#5a5a52"/>
<polygon points="707.8,318.3 715.3,318.4 716.1,314.3 708.7,314.3" fill="#222222"/>
<polygon points="743.9,307.1 744.4,304.4 745.5,307.6 745.1,310.3" fill="#141414"/>
<polygon points="738.3,307.1 743.9,307.1 745.1,310.3 739.5,310.3" fill="#141414"/>
<polygon points="738.3,307.1 743.9,307.1 744.4,304.4 738.8,304.3" fill="#141414"/>
<polygon points="699.8,315.0 700.9,309.4 706.1,320.7 704.9,326.2" fill="#f8a17e"/>
<polygon points="694.5,315.0 699.8,315.0 704.9,326.2 699.8,326.1" fill="#f8a17e"/>
<polygon points="694.5,315.0 699.8,315.0 700.9,309.4 695.8,309.4" fill="#f7c0b0"/>
<polygon points="694.5,315.0 699.8,315.0 700.9,309.4 695.8,309.4" fill="none" stroke="#ff0000" stroke-width="1"/>
<polygon points="735.0,312.3 735.7,308.3 736.7,310.7 736.0,314.7" fill="#5a5a52"/>
<polygon points="727.6,312.2 735.0,312.3 736.0,314.7 728.6,314.7" fill="#5a5a52"/>
<polygon points="995.7,286.5 995.5,283.8 995.0,287.1 995.1,289.8" fill="#141414"/>
<polygon points="727.6,312.2 735.0,312.3 735.7,308.3 728.4,308.2" fill="#222222"/>
<polygon points="995.7,286.5 1001.5,286.5 1000.9,289.8 995.1,289.8" fill="#141414"/>
<polygon points="995.7,286.5 1001.5,286.5 1001.3,283.9 995.5,283.8" fill="#141414"/>
<polygon points="788.4,296.4 788.8,293.7 789.6,297.0 789.3,299.7" fill="#141414"/>
<polygon points="781.4,296.4 788.4,296.4 789.3,299.7 782.3,299.7" fill="#141414"/>
<polygon points="781.4,296.4 788.4,296.4 788.8,293.7 781.8,293.7" fill="#141414"/>
<polygon points="713.7,319.4 714.3,316.5 715.7,319.7 715.1,322.5" fill="#141414"/>
<polygon points="708.0,319.3 713.7,319.4 715.1,322.5 709.5,322.5" fill="#141414"/>
<polygon points="708.0,319.3 713.7,319.4 714.3,316.5 708.6,316.5" fill="#141414"/>
<polygon points="985.1,286.4 985.0,283.8 984.5,287.1 984.7,289.7" fill="#141414"/>
<polygon points="985.1,286.4 990.9,286.4 990.4,289.7 984.7,289.7" fill="#141414"/>
<polygon points="985.1,286.4 990.9,286.4 990.7,283.8 985.0,283.8" fill="#141414"/>
<polygon points="768.2,297.0 769.9,285.7 773.3,297.2 771.7,308.4" fill="#f3b5aa"/>
<polygon points="765.5,297.0 768.2,297.0 769.9,285.7 767.2,285.7" fill="#ffffff"/>
<path d="M765.5 297.0L767.2 285.7" stroke="#ff0000" stroke-width="1.3" fill="none" stroke-dasharray="3 1.5"/>
<path d="M768.2 297.0L769.9 285.7" stroke="#ff0000" stroke-width="1.3" fill="none" stroke-dasharray="3 1.5"/>
<polygon points="1051.3,301.6 1078.5,301.7 1077.3,305.0 1050.4,304.8" fill="#141414"/>
<polygon points="1051.3,301.6 1078.5,301.7 1078.1,299.3 1051.0,299.2" fill="#141414"/>
<polygon points="1005.5,291.3 1005.2,287.7 1004.8,290.3 1005.0,293.8" fill="#5a5a52"/>
<polygon points="1005.5,291.3 1013.1,291.3 1012.6,293.8 1005.0,293.8" fill="#5a5a52"/>
<polygon points="1005.5,291.3 1013.1,291.3 1012.8,287.8 1005.2,287.7" fill="#8d8d82"/>
<polygon points="733.5,313.2 734.0,310.4 735.3,313.6 734.8,316.4" fill="#141414"/>
<polygon points="727.9,313.2 733.5,313.2 734.8,316.4 729.2,316.4" fill="#141414"/>
<polygon points="727.9,313.2 733.5,313.2 734.0,310.4 728.4,310.4" fill="#141414"/>
<polygon points="805.3,295.6 805.7,292.4 806.2,294.9 805.9,298.1" fill="#5a5a52"/>
<polygon points="796.1,295.6 805.3,295.6 805.9,298.1 796.7,298.1" fill="#5a5a52"/>
<polygon points="796.1,295.6 805.3,295.6 805.7,292.4 796.5,292.3" fill="#55554e"/>
<polygon points="724.6,318.4 725.4,314.4 726.4,316.8 725.6,320.9" fill="#5a5a52"/>
<polygon points="717.1,318.4 724.6,318.4 725.6,320.9 718.2,320.8" fill="#5a5a52"/>
<polygon points="717.1,318.4 724.6,318.4 725.4,314.4 717.9,314.3" fill="#222222"/>
<polygon points="1089.4,302.7 1088.5,297.3 1084.4,308.6 1085.3,314.0" fill="#f8a17e"/>
<polygon points="1089.4,302.7 1094.5,302.8 1090.3,314.0 1085.3,314.0" fill="#f8a17e"/>
<polygon points="1089.4,302.7 1094.5,302.8 1093.6,297.3 1088.5,297.3" fill="#f7c0b0"/>
<polygon points="1089.4,302.7 1094.5,302.8 1093.6,297.3 1088.5,297.3" fill="none" stroke="#ff0000" stroke-width="1"/>
<polygon points="744.3,312.3 745.0,308.3 745.9,310.8 745.2,314.8" fill="#5a5a52"/>
<polygon points="736.9,312.3 744.3,312.3 745.2,314.8 737.8,314.7" fill="#5a5a52"/>
<polygon points="736.9,312.3 744.3,312.3 745.0,308.3 737.6,308.3" fill="#222222"/>
<polygon points="994.9,291.2 994.7,287.7 994.3,290.2 994.5,293.7" fill="#5a5a52"/>
<polygon points="994.9,291.2 1002.6,291.3 1002.1,293.8 994.5,293.7" fill="#5a5a52"/>
<polygon points="994.9,291.2 1002.6,291.3 1002.3,287.7 994.7,287.7" fill="#8d8d82"/>
<polygon points="789.2,301.0 789.7,297.6 790.3,300.2 789.9,303.5" fill="#5a5a52"/>
<polygon points="780.0,300.9 789.2,301.0 789.9,303.5 780.7,303.4" fill="#5a5a52"/>
<polygon points="780.0,300.9 789.2,301.0 789.7,297.6 780.4,297.6" fill="#55554e"/>
<polygon points="803.8,296.5 804.1,293.8 804.9,297.1 804.6,299.8" fill="#141414"/>
<polygon points="796.8,296.5 803.8,296.5 804.6,299.8 797.6,299.7" fill="#141414"/>
<polygon points="796.8,296.5 803.8,296.5 804.1,293.8 797.1,293.8" fill="#141414"/>
<polygon points="723.0,319.4 723.6,316.6 724.9,319.8 724.4,322.6" fill="#141414"/>
<polygon points="717.4,319.4 723.0,319.4 724.4,322.6 718.7,322.5" fill="#141414"/>
<polygon points="717.4,319.4 723.0,319.4 723.6,316.6 717.9,316.6" fill="#141414"/>
<polygon points="714.0,324.7 714.8,320.6 715.9,323.0 715.1,327.1" fill="#5a5a52"/>
<polygon points="706.5,324.6 714.0,324.7 715.1,327.1 707.6,327.0" fill="#5a5a52"/>
<polygon points="706.5,324.6 714.0,324.7 714.8,320.6 707.4,320.5" fill="#222222"/>
<polygon points="977.8,284.8 977.2,273.4 975.8,285.0 976.4,296.3" fill="#d9d9cc"/>
<polygon points="977.8,284.8 980.5,284.8 979.9,273.4 977.2,273.4" fill="#ffffff"/>
<path d="M977.8 284.8L977.2 273.4" stroke="#ff0000" stroke-width="1.3" fill="none"/>
<path d="M980.5 284.8L979.9 273.4" stroke="#ff0000" stroke-width="1.3" fill="none"/>
<polygon points="984.3,291.2 984.1,287.6 983.8,290.1 984.0,293.7" fill="#5a5a52"/>
<polygon points="984.3,291.2 992.0,291.2 991.6,293.7 984.0,293.7" fill="#5a5a52"/>
<polygon points="984.3,291.2 992.0,291.2 991.7,287.7 984.1,287.6" fill="#8d8d82"/>
<polygon points="742.8,313.3 743.3,310.5 744.5,313.7 744.0,316.5" fill="#141414"/>
<polygon points="737.2,313.2 742.8,313.3 744.0,316.5 738.4,316.4" fill="#141414"/>
<polygon points="737.2,313.2 742.8,313.3 743.3,310.5 737.7,310.5" fill="#141414"/>
<polygon points="1006.8,293.2 1006.5,290.5 1005.9,293.8 1006.1,296.4" fill="#141414"/>
<polygon points="1006.8,293.2 1012.6,293.2 1011.9,296.5 1006.1,296.4" fill="#141414"/>
<polygon points="1006.8,293.2 1012.6,293.2 1012.4,290.5 1006.5,290.5" fill="#141414"/>
<polygon points="733.9,318.5 734.6,314.4 735.6,316.9 734.9,320.9" fill="#5a5a52"/>
<polygon points="726.4,318.4 733.9,318.5 734.9,320.9 727.4,320.9" fill="#5a5a52"/>
<polygon points="726.4,318.4 733.9,318.5 734.6,314.4 727.2,314.4" fill="#222222"/>
<polygon points="745.3,308.5 747.4,296.1 751.4,307.5 749.4,319.7" fill="#f3b5aa"/>
<polygon points="742.5,308.5 745.3,308.5 747.4,296.1 744.7,296.1" fill="#ffffff"/>
<path d="M742.5 308.5L744.7 296.1" stroke="#ff0000" stroke-width="1.3" fill="none"/>
<path d="M745.3 308.5L747.4 296.1" stroke="#ff0000" stroke-width="1.3" fill="none"/>
<polygon points="701.4,331.9 703.3,322.8 704.9,326.2 703.0,335.3" fill="#3a3030"/>
<polygon points="696.3,331.9 701.4,331.9 703.3,322.8 698.2,322.7" fill="#8b5a48"/>
<polygon points="712.4,325.7 713.0,322.8 714.4,326.0 713.9,328.8" fill="#141414"/>
<polygon points="706.7,325.6 712.4,325.7 713.9,328.8 708.2,328.8" fill="#141414"/>
<polygon points="706.7,325.6 712.4,325.7 713.0,322.8 707.3,322.8" fill="#141414"/>
<polygon points="996.1,293.1 995.9,290.4 995.4,293.7 995.6,296.4" fill="#141414"/>
<polygon points="996.1,293.1 1002.0,293.1 1001.4,296.4 995.6,296.4" fill="#141414"/>
<polygon points="996.1,293.1 1002.0,293.1 1001.8,290.5 995.9,290.4" fill="#141414"/>
<polygon points="1043.3,297.8 1041.9,285.7 1039.0,297.2 1040.3,309.2" fill="#f3b5aa"/>
<polygon points="1043.3,297.8 1046.1,297.9 1044.7,285.7 1041.9,285.7" fill="#ffffff"/>
<path d="M1043.3 297.8L1041.9 285.7" stroke="#ff0000" stroke-width="1.3" fill="none"/>
<path d="M1046.1 297.9L1044.7 285.7" stroke="#ff0000" stroke-width="1.3" fill="none"/>
<polygon points="1052.3,310.1 1051.3,302.4 1050.5,305.4 1051.4,313.0" fill="#1a1a1a"/>
<polygon points="1052.3,310.1 1079.6,310.2 1078.5,313.2 1051.4,313.0" fill="#1a1a1a"/>
<polygon points="1052.3,310.1 1079.6,310.2 1078.5,302.6 1051.3,302.4" fill="#8d8d82"/>
<polygon points="732.4,319.5 732.9,316.6 734.2,319.8 733.7,322.6" fill="#141414"/>
<polygon points="726.7,319.4 732.4,319.5 733.7,322.6 728.0,322.6" fill="#141414"/>
<polygon points="726.7,319.4 732.4,319.5 732.9,316.6 727.2,316.6" fill="#141414"/>
<polygon points="804.7,301.1 805.0,297.7 805.6,300.2 805.2,303.5" fill="#5a5a52"/>
<polygon points="795.4,301.0 804.7,301.1 805.2,303.5 796.0,303.5" fill="#5a5a52"/>
<polygon points="795.4,301.0 804.7,301.1 805.0,297.7 795.8,297.7" fill="#55554e"/>
<polygon points="1019.2,293.8 1018.1,281.7 1015.8,293.3 1016.8,305.2" fill="#f3b5aa"/>
<polygon points="1019.2,293.8 1022.0,293.8 1020.9,281.7 1018.1,281.7" fill="#ffffff"/>
<path d="M1019.2 293.8L1018.1 281.7" stroke="#ff0000" stroke-width="1.3" fill="none" stroke-dasharray="3 1.5"/>
<path d="M1022.0 293.8L1020.9 281.7" stroke="#ff0000" stroke-width="1.3" fill="none" stroke-dasharray="3 1.5"/>
<polygon points="723.4,324.7 724.2,320.6 725.2,323.1 724.4,327.1" fill="#5a5a52"/>
<polygon points="715.9,324.7 723.4,324.7 724.4,327.1 717.0,327.1" fill="#5a5a52"/>
<polygon points="715.9,324.7 723.4,324.7 724.2,320.6 716.7,320.6" fill="#222222"/>
<polygon points="985.5,293.1 985.3,290.4 984.9,293.7 985.0,296.3" fill="#141414"/>
<polygon points="985.5,293.1 991.3,293.1 990.8,296.4 985.0,296.3" fill="#141414"/>
<polygon points="985.5,293.1 991.3,293.1 991.2,290.4 985.3,290.4" fill="#141414"/>
<polygon points="743.2,318.5 743.9,314.5 744.8,316.9 744.1,321.0" fill="#5a5a52"/>
<polygon points="735.8,318.5 743.2,318.5 744.1,321.0 736.7,320.9" fill="#5a5a52"/>
<polygon points="735.8,318.5 743.2,318.5 743.9,314.5 736.5,314.4" fill="#222222"/>
<polygon points="1006.0,298.0 1005.7,294.4 1005.3,296.9 1005.5,300.5" fill="#5a5a52"/>
<polygon points="1006.0,298.0 1013.7,298.0 1013.2,300.5 1005.5,300.5" fill="#5a5a52"/>
<polygon points="1006.0,298.0 1013.7,298.0 1013.4,294.4 1005.7,294.4" fill="#8d8d82"/>
<polygon points="1087.9,319.5 1086.5,310.6 1085.3,314.0 1086.6,322.9" fill="#3a3030"/>
<polygon points="1087.9,319.5 1093.0,319.5 1091.6,310.6 1086.5,310.6" fill="#8b5a48"/>
<polygon points="766.7,297.7 788.5,297.9 791.5,309.2 770.2,309.1" fill="#ffffff"/>
<polygon points="766.7,297.7 788.5,297.9 788.7,295.7 767.1,295.6" fill="#ffffff"/>
<path d="M766.7 297.7L788.5 297.9" stroke="#ff0000" stroke-width="1.3" fill="none"/>
<path d="M767.1 295.6L788.7 295.7" stroke="#ff0000" stroke-width="1.3" fill="none"/>
<polygon points="811.9,295.4 813.1,283.8 815.5,295.3 814.3,306.8" fill="#d9d9cc"/>
<polygon points="809.1,295.4 811.9,295.4 813.1,283.8 810.4,283.8" fill="#ffffff"/>
<path d="M809.1 295.4L810.4 283.8" stroke="#ff0000" stroke-width="1.3" fill="none"/>
<path d="M811.9 295.4L813.1 283.8" stroke="#ff0000" stroke-width="1.3" fill="none"/>
<polygon points="721.8,325.7 722.4,322.9 723.7,326.0 723.2,328.9" fill="#141414"/>
<polygon points="716.1,325.7 721.8,325.7 723.2,328.9 717.5,328.8" fill="#141414"/>
<polygon points="716.1,325.7 721.8,325.7 722.4,322.9 716.7,322.8" fill="#141414"/>
<polygon points="712.8,331.0 713.6,326.9 714.7,329.3 713.8,333.4" fill="#5a5a52"/>
<polygon points="705.2,331.0 712.8,331.0 713.8,333.4 706.3,333.4" fill="#5a5a52"/>
<polygon points="705.2,331.0 712.8,331.0 713.6,326.9 706.1,326.8" fill="#222222"/>
<polygon points="995.4,297.9 995.1,294.3 994.7,296.8 994.9,300.4" fill="#5a5a52"/>
<polygon points="995.4,297.9 1003.1,298.0 1002.6,300.5 994.9,300.4" fill="#5a5a52"/>
<polygon points="995.4,297.9 1003.1,298.0 1002.8,294.4 995.1,294.3" fill="#8d8d82"/>
<polygon points="741.7,319.5 742.2,316.7 743.4,319.9 742.9,322.7" fill="#141414"/>
<polygon points="736.1,319.5 741.7,319.5 742.9,322.7 737.3,322.7" fill="#141414"/>
<polygon points="736.1,319.5 741.7,319.5 742.2,316.7 736.6,316.7" fill="#141414"/>
<polygon points="732.8,324.8 733.5,320.7 734.5,323.1 733.7,327.2" fill="#5a5a52"/>
<polygon points="725.3,324.7 732.8,324.8 733.7,327.2 726.3,327.2" fill="#5a5a52"/>
<polygon points="725.3,324.7 732.8,324.8 733.5,320.7 726.0,320.6" fill="#222222"/>
<polygon points="1007.3,299.9 1007.1,297.2 1006.5,300.4 1006.7,303.2" fill="#141414"/>
<polygon points="1007.3,299.9 1013.2,299.9 1012.5,303.2 1006.7,303.2" fill="#141414"/>
<polygon points="1007.3,299.9 1013.2,299.9 1012.9,297.2 1007.1,297.2" fill="#141414"/>
<polygon points="984.7,297.8 984.5,294.3 984.1,296.8 984.3,300.3" fill="#5a5a52"/>
<polygon points="984.7,297.8 992.4,297.9 992.0,300.4 984.3,300.3" fill="#5a5a52"/>
<polygon points="984.7,297.8 992.4,297.9 992.2,294.3 984.5,294.3" fill="#8d8d82"/>
<polygon points="766.5,308.5 768.2,297.0 771.7,308.4 770.0,319.7" fill="#f3b5aa"/>
<polygon points="763.7,308.5 766.5,308.5 768.2,297.0 765.5,297.0" fill="#ffffff"/>
<path d="M763.7 308.5L765.5 297.0" stroke="#ff0000" stroke-width="1.3" fill="none" stroke-dasharray="3 1.5"/>
<path d="M766.5 308.5L768.2 297.0" stroke="#ff0000" stroke-width="1.3" fill="none" stroke-dasharray="3 1.5"/>
<polygon points="696.5,330.0 697.8,324.3 703.0,335.3 701.9,340.9" fill="#f8a17e"/>
<polygon points="691.2,330.0 696.5,330.0 701.9,340.9 696.7,340.9" fill="#f8a17e"/>
<polygon points="691.2,330.0 696.5,330.0 697.8,324.3 692.5,324.2" fill="#f7c0b0"/>
<polygon points="691.2,330.0 696.5,330.0 697.8,324.3 692.5,324.2" fill="none" stroke="#ff0000" stroke-width="1"/>
<polygon points="731.2,325.8 731.8,322.9 733.0,326.1 732.5,328.9" fill="#141414"/>
<polygon points="725.5,325.7 731.2,325.8 732.5,328.9 726.8,328.9" fill="#141414"/>
<polygon points="725.5,325.7 731.2,325.8 731.8,322.9 726.1,322.9" fill="#141414"/>
<polygon points="722.2,331.1 723.0,326.9 724.0,329.4 723.2,333.5" fill="#5a5a52"/>
<polygon points="714.6,331.0 722.2,331.1 723.2,333.5 715.7,333.4" fill="#5a5a52"/>
<polygon points="714.6,331.0 722.2,331.1 723.0,326.9 715.5,326.9" fill="#222222"/>
<polygon points="996.6,299.8 996.4,297.1 995.9,300.4 996.0,303.1" fill="#141414"/>
<polygon points="996.6,299.8 1002.5,299.9 1001.9,303.1 996.0,303.1" fill="#141414"/>
<polygon points="996.6,299.8 1002.5,299.9 1002.3,297.2 996.4,297.1" fill="#141414"/>
<polygon points="1077.4,319.2 1077.0,316.3 1075.9,319.5 1076.3,322.3" fill="#141414"/>
<polygon points="1077.4,319.2 1084.0,319.2 1082.8,322.4 1076.3,322.3" fill="#141414"/>
<polygon points="1077.4,319.2 1084.0,319.2 1083.6,316.4 1077.0,316.3" fill="#141414"/>
<polygon points="742.1,324.8 742.8,320.7 743.7,323.2 743.0,327.3" fill="#5a5a52"/>
<polygon points="734.6,324.8 742.1,324.8 743.0,327.3 735.6,327.2" fill="#5a5a52"/>
<polygon points="734.6,324.8 742.1,324.8 742.8,320.7 735.4,320.7" fill="#222222"/>
<polygon points="788.5,297.9 810.2,298.0 812.7,309.4 791.5,309.2" fill="#ffffff"/>
<polygon points="788.5,297.9 810.2,298.0 810.4,295.8 788.7,295.7" fill="#ffffff"/>
<path d="M788.5 297.9L810.2 298.0" stroke="#ff0000" stroke-width="1.3" fill="none"/>
<path d="M788.7 295.7L810.4 295.8" stroke="#ff0000" stroke-width="1.3" fill="none"/>
<polygon points="985.9,299.8 985.7,297.1 985.3,300.3 985.4,303.0" fill="#141414"/>
<polygon points="985.9,299.8 991.8,299.8 991.3,303.1 985.4,303.0" fill="#141414"/>
<polygon points="985.9,299.8 991.8,299.8 991.6,297.1 985.7,297.1" fill="#141414"/>
<polygon points="1006.5,304.7 1006.2,301.1 1005.8,303.6 1006.1,307.2" fill="#5a5a52"/>
<polygon points="1006.5,304.7 1014.3,304.8 1013.8,307.3 1006.1,307.2" fill="#5a5a52"/>
<polygon points="1006.5,304.7 1014.3,304.8 1014.0,301.2 1006.2,301.1" fill="#8d8d82"/>
<polygon points="1091.7,317.3 1090.8,311.7 1086.6,322.9 1087.4,328.4" fill="#f8a17e"/>
<polygon points="1091.7,317.3 1096.9,317.4 1092.6,328.5 1087.4,328.4" fill="#f8a17e"/>
<polygon points="1091.7,317.3 1096.9,317.4 1096.0,311.8 1090.8,311.7" fill="#f7c0b0"/>
<polygon points="1091.7,317.3 1096.9,317.4 1096.0,311.8 1090.8,311.7" fill="none" stroke="#ff0000" stroke-width="1"/>
<polygon points="695.0,327.5 717.8,327.7 722.6,338.6 700.4,338.5" fill="#ffffff"/>
<polygon points="695.0,327.5 717.8,327.7 718.2,325.4 695.5,325.2" fill="#ffffff"/>
<path d="M695.0 327.5L717.8 327.7" stroke="#ff0000" stroke-width="1.3" fill="none"/>
<path d="M695.5 325.2L718.2 325.4" stroke="#ff0000" stroke-width="1.3" fill="none"/>
<polygon points="740.6,325.8 741.1,323.0 742.3,326.1 741.9,329.0" fill="#141414"/>
<polygon points="734.9,325.8 740.6,325.8 741.9,329.0 736.2,329.0" fill="#141414"/>
<polygon points="734.9,325.8 740.6,325.8 741.1,323.0 735.4,322.9" fill="#141414"/>
<polygon points="978.4,296.4 977.8,284.8 976.4,296.3 976.9,307.8" fill="#d9d9cc"/>
<polygon points="978.4,296.4 981.2,296.4 980.5,284.8 977.8,284.8" fill="#ffffff"/>
<path d="M978.4 296.4L977.8 284.8" stroke="#ff0000" stroke-width="1.3" fill="none"/>
<path d="M981.2 296.4L980.5 284.8" stroke="#ff0000" stroke-width="1.3" fill="none"/>
<polygon points="731.6,331.1 732.3,327.0 733.3,329.4 732.6,333.5" fill="#5a5a52"/>
<polygon points="724.1,331.1 731.6,331.1 732.6,333.5 725.1,333.5" fill="#5a5a52"/>
<polygon points="724.1,331.1 731.6,331.1 732.3,327.0 724.8,326.9" fill="#222222"/>
<polygon points="995.8,304.7 995.6,301.0 995.1,303.5 995.4,307.2" fill="#5a5a52"/>
<polygon points="995.8,304.7 1003.6,304.7 1003.1,307.2 995.4,307.2" fill="#5a5a52"/>
<polygon points="995.8,304.7 1003.6,304.7 1003.3,301.1 995.6,301.0" fill="#8d8d82"/>
<polygon points="743.1,321.2 745.3,308.5 749.4,319.7 747.3,332.2" fill="#f3b5aa"/>
<polygon points="740.3,321.2 743.1,321.2 745.3,308.5 742.5,308.5" fill="#ffffff"/>
<path d="M740.3 321.2L742.5 308.5" stroke="#ff0000" stroke-width="1.3" fill="none"/>
<path d="M743.1 321.2L745.3 308.5" stroke="#ff0000" stroke-width="1.3" fill="none"/>
<polygon points="1076.7,324.1 1076.2,320.4 1075.3,322.8 1075.8,326.6" fill="#5a5a52"/>
<polygon points="1076.7,324.1 1085.4,324.2 1084.5,326.6 1075.8,326.6" fill="#5a5a52"/>
<polygon points="1076.7,324.1 1085.4,324.2 1084.8,320.4 1076.2,320.4" fill="#8d8d82"/>
<polygon points="1064.9,319.1 1064.5,316.3 1063.5,319.4 1063.9,322.3" fill="#141414"/>
<polygon points="1064.9,319.1 1071.5,319.1 1070.4,322.3 1063.9,322.3" fill="#141414"/>
<polygon points="1064.9,319.1 1071.5,319.1 1071.1,316.3 1064.5,316.3" fill="#141414"/>
<polygon points="698.3,347.0 700.2,337.6 701.9,340.9 699.9,350.3" fill="#3a3030"/>
<polygon points="693.0,346.9 698.3,347.0 700.2,337.6 695.0,337.5" fill="#8b5a48"/>
<polygon points="1044.7,310.3 1043.3,297.8 1040.3,309.2 1041.7,321.5" fill="#f3b5aa"/>
<polygon points="1044.7,310.3 1047.5,310.3 1046.1,297.9 1043.3,297.8" fill="#ffffff"/>
<path d="M1044.7 310.3L1043.3 297.8" stroke="#ff0000" stroke-width="1.3" fill="none"/>
<path d="M1047.5 310.3L1046.1 297.9" stroke="#ff0000" stroke-width="1.3" fill="none"/>
<polygon points="985.1,304.6 984.9,301.0 984.5,303.5 984.7,307.1" fill="#5a5a52"/>
<polygon points="985.1,304.6 992.8,304.7 992.4,307.2 984.7,307.1" fill="#5a5a52"/>
<polygon points="985.1,304.6 992.8,304.7 992.6,301.0 984.9,301.0" fill="#8d8d82"/>
<polygon points="1020.3,306.2 1019.2,293.8 1016.8,305.2 1017.9,317.5" fill="#f3b5aa"/>
<polygon points="1020.3,306.2 1023.1,306.2 1022.0,293.8 1019.2,293.8" fill="#ffffff"/>
<path d="M1020.3 306.2L1019.2 293.8" stroke="#ff0000" stroke-width="1.3" fill="none" stroke-dasharray="3 1.5"/>
<path d="M1023.1 306.2L1022.0 293.8" stroke="#ff0000" stroke-width="1.3" fill="none" stroke-dasharray="3 1.5"/>
<polygon points="771.7,313.7 801.3,313.9 802.3,318.1 773.0,317.9" fill="#dcdcd2"/>
<polygon points="771.7,313.7 801.3,313.9 801.9,309.2 772.4,309.0" fill="#f4f4f4"/>
<polygon points="741.0,331.2 741.7,327.0 742.7,329.5 742.0,333.6" fill="#5a5a52"/>
<polygon points="733.5,331.1 741.0,331.2 742.0,333.6 734.5,333.6" fill="#5a5a52"/>
<polygon points="733.5,331.1 741.0,331.2 741.7,327.0 734.2,327.0" fill="#222222"/>
<polygon points="810.5,307.3 811.9,295.4 814.3,306.8 813.1,318.5" fill="#d9d9cc"/>
<polygon points="807.8,307.3 810.5,307.3 811.9,295.4 809.1,295.4" fill="#ffffff"/>
<path d="M807.8 307.3L809.1 295.4" stroke="#ff0000" stroke-width="1.3" fill="none"/>
<path d="M810.5 307.3L811.9 295.4" stroke="#ff0000" stroke-width="1.3" fill="none"/>
<polygon points="1052.4,319.0 1052.1,316.2 1051.2,319.4 1051.5,322.2" fill="#141414"/>
<polygon points="1052.4,319.0 1059.0,319.0 1058.0,322.2 1051.5,322.2" fill="#141414"/>
<polygon points="1052.4,319.0 1059.0,319.0 1058.7,316.2 1052.1,316.2" fill="#141414"/>
<polygon points="1078.5,326.7 1078.1,323.9 1076.9,327.0 1077.3,329.9" fill="#141414"/>
<polygon points="1078.5,326.7 1085.1,326.8 1083.9,329.9 1077.3,329.9" fill="#141414"/>
<polygon points="1078.5,326.7 1085.1,326.8 1084.7,323.9 1078.1,323.9" fill="#141414"/>
<polygon points="1064.2,324.1 1063.7,320.3 1062.9,322.7 1063.4,326.5" fill="#5a5a52"/>
<polygon points="1064.2,324.1 1072.9,324.1 1072.0,326.5 1063.4,326.5" fill="#5a5a52"/>
<polygon points="1064.2,324.1 1072.9,324.1 1072.3,320.3 1063.7,320.3" fill="#8d8d82"/>
<path d="M698.1 391.2L720.6 279.7" stroke="#a9a9a9" stroke-width="2.4" fill="none"/>
<polygon points="1090.1,334.2 1088.7,325.0 1087.4,328.4 1088.8,337.6" fill="#3a3030"/>
<polygon points="1090.1,334.2 1095.3,334.3 1093.9,325.1 1088.7,325.0" fill="#8b5a48"/>
<polygon points="764.7,320.3 766.5,308.5 770.0,319.7 768.3,331.4" fill="#f3b5aa"/>
<polygon points="761.8,320.3 764.7,320.3 766.5,308.5 763.7,308.5" fill="#ffffff"/>
<path d="M761.8 320.3L763.7 308.5" stroke="#ff0000" stroke-width="1.3" fill="none" stroke-dasharray="3 1.5"/>
<path d="M764.7 320.3L766.5 308.5" stroke="#ff0000" stroke-width="1.3" fill="none" stroke-dasharray="3 1.5"/>
<polygon points="1000.7,302.5 1021.4,302.6 1018.9,313.9 998.7,313.8" fill="#ffffff"/>
<polygon points="1000.7,302.5 1021.4,302.6 1021.2,300.5 1000.6,300.3" fill="#ffffff"/>
<path d="M1000.7 302.5L1021.4 302.6" stroke="#ff0000" stroke-width="1.3" fill="none"/>
<path d="M1000.6 300.3L1021.2 300.5" stroke="#ff0000" stroke-width="1.3" fill="none"/>
<polygon points="717.8,327.7 740.5,327.8 744.8,338.7 722.6,338.6" fill="#ffffff"/>
<polygon points="717.8,327.7 740.5,327.8 740.9,325.5 718.2,325.4" fill="#ffffff"/>
<path d="M717.8 327.7L740.5 327.8" stroke="#ff0000" stroke-width="1.3" fill="none"/>
<path d="M718.2 325.4L740.9 325.5" stroke="#ff0000" stroke-width="1.3" fill="none"/>
<polygon points="1051.7,324.0 1051.2,320.2 1050.5,322.6 1051.0,326.4" fill="#5a5a52"/>
<polygon points="1051.7,324.0 1060.4,324.0 1059.6,326.5 1051.0,326.4" fill="#5a5a52"/>
<polygon points="1051.7,324.0 1060.4,324.0 1059.9,320.3 1051.2,320.2" fill="#8d8d82"/>
<polygon points="1077.8,331.8 1077.2,327.9 1076.4,330.3 1076.9,334.2" fill="#5a5a52"/>
<polygon points="1077.8,331.8 1086.5,331.8 1085.6,334.2 1076.9,334.2" fill="#5a5a52"/>
<polygon points="1077.8,331.8 1086.5,331.8 1085.9,328.0 1077.2,327.9" fill="#8d8d82"/>
<polygon points="1065.9,326.7 1065.5,323.8 1064.5,327.0 1064.9,329.8" fill="#141414"/>
<polygon points="1065.9,326.7 1072.5,326.7 1071.5,329.8 1064.9,329.8" fill="#141414"/>
<polygon points="1065.9,326.7 1072.5,326.7 1072.1,323.8 1065.5,323.8" fill="#141414"/>
<polygon points="693.2,345.4 694.5,339.5 699.9,350.3 698.7,356.1" fill="#f8a17e"/>
<polygon points="687.9,345.4 693.2,345.4 698.7,356.1 693.5,356.1" fill="#f8a17e"/>
<polygon points="687.9,345.4 693.2,345.4 694.5,339.5 689.2,339.5" fill="#f7c0b0"/>
<polygon points="687.9,345.4 693.2,345.4 694.5,339.5 689.2,339.5" fill="none" stroke="#ff0000" stroke-width="1"/>
<polygon points="980.1,302.4 1000.7,302.5 998.7,313.8 978.6,313.7" fill="#ffffff"/>
<polygon points="980.1,302.4 1000.7,302.5 1000.6,300.3 980.0,300.2" fill="#ffffff"/>
<path d="M980.1 302.4L1000.7 302.5" stroke="#ff0000" stroke-width="1.3" fill="none"/>
<path d="M980.0 300.2L1000.6 300.3" stroke="#ff0000" stroke-width="1.3" fill="none"/>
<polygon points="1079.6,334.4 1079.2,331.5 1078.0,334.7 1078.4,337.5" fill="#141414"/>
<polygon points="1079.6,334.4 1086.3,334.5 1085.1,337.6 1078.4,337.5" fill="#141414"/>
<polygon points="1079.6,334.4 1086.3,334.5 1085.8,331.6 1079.2,331.5" fill="#141414"/>
<polygon points="1053.3,326.6 1053.0,323.7 1052.1,326.9 1052.4,329.7" fill="#141414"/>
<polygon points="1053.3,326.6 1060.0,326.6 1059.0,329.8 1052.4,329.7" fill="#141414"/>
<polygon points="1053.3,326.6 1060.0,326.6 1059.6,323.8 1053.0,323.7" fill="#141414"/>
<polygon points="1065.2,331.7 1064.7,327.9 1063.9,330.3 1064.4,334.1" fill="#5a5a52"/>
<polygon points="1065.2,331.7 1073.9,331.7 1073.1,334.1 1064.4,334.1" fill="#5a5a52"/>
<polygon points="1065.2,331.7 1073.9,331.7 1073.4,327.9 1064.7,327.9" fill="#8d8d82"/>
<polygon points="979.0,308.3 978.4,296.4 976.9,307.8 977.5,319.5" fill="#d9d9cc"/>
<polygon points="979.0,308.3 981.8,308.3 981.2,296.4 978.4,296.4" fill="#ffffff"/>
<path d="M979.0 308.3L978.4 296.4" stroke="#ff0000" stroke-width="1.3" fill="none"/>
<path d="M981.8 308.3L981.2 296.4" stroke="#ff0000" stroke-width="1.3" fill="none"/>
<polygon points="740.9,334.2 743.1,321.2 747.3,332.2 745.1,345.1" fill="#f3b5aa"/>
<polygon points="738.0,334.2 740.9,334.2 743.1,321.2 740.3,321.2" fill="#ffffff"/>
<path d="M738.0 334.2L740.3 321.2" stroke="#ff0000" stroke-width="1.3" fill="none"/>
<path d="M740.9 334.2L743.1 321.2" stroke="#ff0000" stroke-width="1.3" fill="none"/>
<polygon points="1094.0,332.4 1093.1,326.6 1088.8,337.6 1089.7,343.3" fill="#f8a17e"/>
<polygon points="1094.0,332.4 1099.3,332.4 1094.9,343.3 1089.7,343.3" fill="#f8a17e"/>
<polygon points="1094.0,332.4 1099.3,332.4 1098.4,326.6 1093.1,326.6" fill="#f7c0b0"/>
<polygon points="1094.0,332.4 1099.3,332.4 1098.4,326.6 1093.1,326.6" fill="none" stroke="#ff0000" stroke-width="1"/>
<polygon points="780.8,327.1 781.2,324.2 782.1,327.4 781.7,330.2" fill="#141414"/>
<polygon points="774.8,327.0 780.8,327.1 781.7,330.2 775.7,330.2" fill="#141414"/>
<polygon points="774.8,327.0 780.8,327.1 781.2,324.2 775.2,324.2" fill="#141414"/>
<polygon points="1046.2,323.0 1044.7,310.3 1041.7,321.5 1043.0,334.0" fill="#f3b5aa"/>
<polygon points="1046.2,323.0 1049.0,323.0 1047.5,310.3 1044.7,310.3" fill="#ffffff"/>
<path d="M1046.2 323.0L1044.7 310.3" stroke="#ff0000" stroke-width="1.3" fill="none"/>
<path d="M1049.0 323.0L1047.5 310.3" stroke="#ff0000" stroke-width="1.3" fill="none"/>
<polygon points="691.2,345.1 714.4,345.3 719.3,356.0 696.8,355.8" fill="#ffffff"/>
<polygon points="691.2,345.1 714.4,345.3 714.8,342.9 691.7,342.8" fill="#ffffff"/>
<path d="M691.2 345.1L714.4 345.3" stroke="#ff0000" stroke-width="1.3" fill="none"/>
<path d="M691.7 342.8L714.8 342.9" stroke="#ff0000" stroke-width="1.3" fill="none"/>
<polygon points="988.3,317.5 1009.9,317.6 1009.4,320.5 987.9,320.4" fill="#77776e"/>
<polygon points="988.3,317.5 1009.9,317.6 1009.7,313.9 988.1,313.7" fill="#9a9a90"/>
<polygon points="695.0,362.5 697.0,352.8 698.7,356.1 696.7,365.7" fill="#3a3030"/>
<polygon points="689.7,362.5 695.0,362.5 697.0,352.8 691.8,352.8" fill="#8b5a48"/>
<polygon points="1078.9,339.5 1078.3,335.6 1077.4,338.0 1078.0,341.9" fill="#5a5a52"/>
<polygon points="1078.9,339.5 1087.7,339.6 1086.8,341.9 1078.0,341.9" fill="#5a5a52"/>
<polygon points="1078.9,339.5 1087.7,339.6 1087.1,335.7 1078.3,335.6" fill="#8d8d82"/>
<polygon points="1052.6,331.6 1052.1,327.8 1051.4,330.2 1051.9,334.0" fill="#5a5a52"/>
<polygon points="1052.6,331.6 1061.3,331.7 1060.6,334.1 1051.9,334.0" fill="#5a5a52"/>
<polygon points="1052.6,331.6 1061.3,331.7 1060.8,327.8 1052.1,327.8" fill="#8d8d82"/>
<polygon points="1066.9,334.3 1066.5,331.5 1065.5,334.6 1065.9,337.5" fill="#141414"/>
<polygon points="1066.9,334.3 1073.6,334.4 1072.5,337.5 1065.9,337.5" fill="#141414"/>
<polygon points="1066.9,334.3 1073.6,334.4 1073.2,331.5 1066.5,331.5" fill="#141414"/>
<polygon points="1021.5,318.9 1020.3,306.2 1017.9,317.5 1019.0,330.0" fill="#f3b5aa"/>
<polygon points="1021.5,318.9 1024.3,318.9 1023.1,306.2 1020.3,306.2" fill="#ffffff"/>
<path d="M1021.5 318.9L1020.3 306.2" stroke="#ff0000" stroke-width="1.3" fill="none" stroke-dasharray="3 1.5"/>
<path d="M1024.3 318.9L1023.1 306.2" stroke="#ff0000" stroke-width="1.3" fill="none" stroke-dasharray="3 1.5"/>
<polygon points="792.3,327.1 792.6,324.3 793.5,327.4 793.1,330.3" fill="#141414"/>
<polygon points="786.2,327.1 792.3,327.1 793.1,330.3 787.1,330.2" fill="#141414"/>
<polygon points="786.2,327.1 792.3,327.1 792.6,324.3 786.6,324.2" fill="#141414"/>
<polygon points="809.2,319.4 810.5,307.3 813.1,318.5 811.8,330.5" fill="#d9d9cc"/>
<polygon points="806.4,319.4 809.2,319.4 810.5,307.3 807.8,307.3" fill="#ffffff"/>
<path d="M806.4 319.4L807.8 307.3" stroke="#ff0000" stroke-width="1.3" fill="none"/>
<path d="M809.2 319.4L810.5 307.3" stroke="#ff0000" stroke-width="1.3" fill="none"/>
<polygon points="781.3,332.4 781.9,328.3 782.6,330.7 782.0,334.8" fill="#5a5a52"/>
<polygon points="773.4,332.4 781.3,332.4 782.0,334.8 774.1,334.8" fill="#5a5a52"/>
<polygon points="773.4,332.4 781.3,332.4 781.9,328.3 774.0,328.2" fill="#8d8d82"/>
<polygon points="762.8,332.4 764.7,320.3 768.3,331.4 766.6,343.3" fill="#f3b5aa"/>
<polygon points="760.0,332.3 762.8,332.4 764.7,320.3 761.8,320.3" fill="#ffffff"/>
<path d="M760.0 332.3L761.8 320.3" stroke="#ff0000" stroke-width="1.3" fill="none" stroke-dasharray="3 1.5"/>
<path d="M762.8 332.4L764.7 320.3" stroke="#ff0000" stroke-width="1.3" fill="none" stroke-dasharray="3 1.5"/>
<polygon points="705.9,358.6 706.5,355.5 708.0,358.6 707.4,361.6" fill="#141414"/>
<polygon points="700.0,358.5 705.9,358.6 707.4,361.6 701.5,361.5" fill="#141414"/>
<polygon points="700.0,358.5 705.9,358.6 706.5,355.5 700.6,355.5" fill="#141414"/>
<polygon points="803.8,327.2 804.1,324.3 804.9,327.5 804.5,330.3" fill="#141414"/>
<polygon points="797.7,327.2 803.8,327.2 804.5,330.3 798.6,330.3" fill="#141414"/>
<polygon points="797.7,327.2 803.8,327.2 804.1,324.3 798.1,324.3" fill="#141414"/>
<polygon points="1080.7,342.2 1080.3,339.3 1079.1,342.4 1079.5,345.3" fill="#141414"/>
<polygon points="1080.7,342.2 1087.4,342.3 1086.2,345.4 1079.5,345.3" fill="#141414"/>
<polygon points="1080.7,342.2 1087.4,342.3 1087.0,339.3 1080.3,339.3" fill="#141414"/>
<polygon points="1054.3,334.3 1053.9,331.4 1053.0,334.5 1053.3,337.4" fill="#141414"/>
<polygon points="1054.3,334.3 1060.9,334.3 1059.9,337.4 1053.3,337.4" fill="#141414"/>
<polygon points="1054.3,334.3 1060.9,334.3 1060.6,331.4 1053.9,331.4" fill="#141414"/>
<polygon points="1066.2,339.4 1065.7,335.6 1064.9,337.9 1065.4,341.8" fill="#5a5a52"/>
<polygon points="1066.2,339.4 1075.0,339.5 1074.1,341.9 1065.4,341.8" fill="#5a5a52"/>
<polygon points="1066.2,339.4 1075.0,339.5 1074.5,335.6 1065.7,335.6" fill="#8d8d82"/>
<polygon points="1092.4,349.4 1091.0,339.9 1089.7,343.3 1091.1,352.7" fill="#3a3030"/>
<polygon points="1092.4,349.4 1097.7,349.4 1096.2,340.0 1091.0,339.9" fill="#8b5a48"/>
<polygon points="792.8,332.5 793.4,328.4 794.0,330.8 793.5,334.9" fill="#5a5a52"/>
<polygon points="784.9,332.5 792.8,332.5 793.5,334.9 785.6,334.9" fill="#5a5a52"/>
<polygon points="784.9,332.5 792.8,332.5 793.4,328.4 785.4,328.3" fill="#8d8d82"/>
<polygon points="1004.6,324.5 1004.4,321.6 1003.8,324.8 1004.0,327.6" fill="#141414"/>
<polygon points="1004.6,324.5 1013.6,324.5 1012.9,327.7 1004.0,327.6" fill="#141414"/>
<polygon points="1004.6,324.5 1013.6,324.5 1013.4,321.7 1004.4,321.6" fill="#141414"/>
<polygon points="779.6,335.5 780.0,332.6 781.0,335.7 780.6,338.6" fill="#141414"/>
<polygon points="773.6,335.5 779.6,335.5 780.6,338.6 774.6,338.6" fill="#141414"/>
<polygon points="773.6,335.5 779.6,335.5 780.0,332.6 774.0,332.6" fill="#141414"/>
<polygon points="689.8,361.2 691.1,355.2 696.7,365.7 695.5,371.7" fill="#f8a17e"/>
<polygon points="684.4,361.2 689.8,361.2 695.5,371.7 690.2,371.7" fill="#f8a17e"/>
<polygon points="684.4,361.2 689.8,361.2 691.1,355.2 685.7,355.1" fill="#f7c0b0"/>
<polygon points="684.4,361.2 689.8,361.2 691.1,355.2 685.7,355.1" fill="none" stroke="#ff0000" stroke-width="1"/>
<polygon points="706.1,364.2 707.0,359.8 708.2,362.1 707.3,366.5" fill="#5a5a52"/>
<polygon points="698.4,364.1 706.1,364.2 707.3,366.5 699.6,366.4" fill="#5a5a52"/>
<polygon points="698.4,364.1 706.1,364.2 707.0,359.8 699.3,359.7" fill="#202020"/>
<polygon points="715.5,358.6 716.1,355.6 717.5,358.6 717.0,361.6" fill="#141414"/>
<polygon points="709.6,358.6 715.5,358.6 717.0,361.6 711.1,361.6" fill="#141414"/>
<polygon points="709.6,358.6 715.5,358.6 716.1,355.6 710.2,355.6" fill="#141414"/>
<polygon points="1080.0,347.4 1079.4,343.4 1078.5,345.8 1079.1,349.7" fill="#5a5a52"/>
<polygon points="1080.0,347.4 1088.9,347.4 1087.9,349.8 1079.1,349.7" fill="#5a5a52"/>
<polygon points="1080.0,347.4 1088.9,347.4 1088.3,343.5 1079.4,343.4" fill="#8d8d82"/>
<polygon points="804.4,332.6 804.8,328.4 805.4,330.8 805.0,335.0" fill="#5a5a52"/>
<polygon points="796.4,332.5 804.4,332.6 805.0,335.0 797.1,334.9" fill="#5a5a52"/>
<polygon points="796.4,332.5 804.4,332.6 804.8,328.4 796.9,328.4" fill="#8d8d82"/>
<polygon points="1053.5,339.4 1053.0,335.5 1052.3,337.9 1052.8,341.7" fill="#5a5a52"/>
<polygon points="1053.5,339.4 1062.3,339.4 1061.5,341.8 1052.8,341.7" fill="#5a5a52"/>
<polygon points="1053.5,339.4 1062.3,339.4 1061.8,335.5 1053.0,335.5" fill="#8d8d82"/>
<polygon points="1067.9,342.2 1067.6,339.2 1066.5,342.3 1066.9,345.2" fill="#141414"/>
<polygon points="1067.9,342.2 1074.7,342.2 1073.6,345.3 1066.9,345.2" fill="#141414"/>
<polygon points="1067.9,342.2 1074.7,342.2 1074.3,339.3 1067.6,339.2" fill="#141414"/>
<polygon points="714.4,345.3 737.5,345.4 741.9,356.1 719.3,356.0" fill="#ffffff"/>
<polygon points="714.4,345.3 737.5,345.4 737.9,343.0 714.8,342.9" fill="#ffffff"/>
<path d="M714.4 345.3L737.5 345.4" stroke="#ff0000" stroke-width="1.3" fill="none"/>
<path d="M714.8 342.9L737.9 343.0" stroke="#ff0000" stroke-width="1.3" fill="none"/>
<polygon points="989.7,324.4 989.6,321.5 989.1,324.7 989.2,327.5" fill="#141414"/>
<polygon points="989.7,324.4 998.8,324.4 998.2,327.6 989.2,327.5" fill="#141414"/>
<polygon points="989.7,324.4 998.8,324.4 998.6,321.6 989.6,321.5" fill="#141414"/>
<polygon points="704.4,365.7 705.0,362.6 706.5,365.6 705.9,368.7" fill="#141414"/>
<polygon points="698.5,365.7 704.4,365.7 705.9,368.7 700.1,368.6" fill="#141414"/>
<polygon points="698.5,365.7 704.4,365.7 705.0,362.6 699.1,362.6" fill="#141414"/>
<polygon points="791.2,335.6 791.6,332.7 792.4,335.8 792.1,338.7" fill="#141414"/>
<polygon points="785.1,335.5 791.2,335.6 792.1,338.7 786.1,338.6" fill="#141414"/>
<polygon points="785.1,335.5 791.2,335.6 791.6,332.7 785.5,332.6" fill="#141414"/>
<polygon points="738.6,347.5 740.9,334.2 745.1,345.1 742.9,358.2" fill="#f3b5aa"/>
<polygon points="735.7,347.5 738.6,347.5 740.9,334.2 738.0,334.2" fill="#ffffff"/>
<path d="M735.7 347.5L738.0 334.2" stroke="#ff0000" stroke-width="1.3" fill="none"/>
<path d="M738.6 347.5L740.9 334.2" stroke="#ff0000" stroke-width="1.3" fill="none"/>
<polygon points="1003.3,329.5 1003.0,325.7 1002.6,328.1 1002.9,331.9" fill="#5a5a52"/>
<polygon points="1003.3,329.5 1015.2,329.6 1014.7,332.0 1002.9,331.9" fill="#5a5a52"/>
<polygon points="1003.3,329.5 1015.2,329.6 1014.9,325.7 1003.0,325.7" fill="#8d8d82"/>
<polygon points="979.6,320.4 979.0,308.3 977.5,319.5 978.1,331.5" fill="#d9d9cc"/>
<polygon points="979.6,320.4 982.4,320.5 981.8,308.3 979.0,308.3" fill="#ffffff"/>
<path d="M979.6 320.4L979.0 308.3" stroke="#ff0000" stroke-width="1.3" fill="none"/>
<path d="M982.4 320.5L981.8 308.3" stroke="#ff0000" stroke-width="1.3" fill="none"/>
<polygon points="780.2,340.9 780.7,336.7 781.5,339.1 780.9,343.3" fill="#5a5a52"/>
<polygon points="772.2,340.9 780.2,340.9 780.9,343.3 772.9,343.3" fill="#5a5a52"/>
<polygon points="772.2,340.9 780.2,340.9 780.7,336.7 772.8,336.7" fill="#8d8d82"/>
<polygon points="715.9,364.2 716.7,359.8 717.8,362.1 717.0,366.5" fill="#5a5a52"/>
<polygon points="708.1,364.2 715.9,364.2 717.0,366.5 709.2,366.5" fill="#5a5a52"/>
<polygon points="708.1,364.2 715.9,364.2 716.7,359.8 709.0,359.8" fill="#202020"/>
<polygon points="725.2,358.7 725.8,355.7 727.1,358.7 726.6,361.7" fill="#141414"/>
<polygon points="719.3,358.7 725.2,358.7 726.6,361.7 720.7,361.7" fill="#141414"/>
<polygon points="719.3,358.7 725.2,358.7 725.8,355.7 719.9,355.6" fill="#141414"/>
<polygon points="1081.8,350.1 1081.4,347.2 1080.2,350.2 1080.6,353.2" fill="#141414"/>
<polygon points="1081.8,350.1 1088.6,350.2 1087.4,353.2 1080.6,353.2" fill="#141414"/>
<polygon points="1081.8,350.1 1088.6,350.2 1088.2,347.2 1081.4,347.2" fill="#141414"/>
<polygon points="1096.4,347.8 1095.5,341.9 1091.1,352.7 1092.0,358.5" fill="#f8a17e"/>
<polygon points="1096.4,347.8 1101.8,347.9 1097.2,358.5 1092.0,358.5" fill="#f8a17e"/>
<polygon points="1096.4,347.8 1101.8,347.9 1100.9,341.9 1095.5,341.9" fill="#f7c0b0"/>
<polygon points="1096.4,347.8 1101.8,347.9 1100.9,341.9 1095.5,341.9" fill="none" stroke="#ff0000" stroke-width="1"/>
<polygon points="1067.2,347.3 1066.7,343.4 1065.9,345.7 1066.4,349.6" fill="#5a5a52"/>
<polygon points="1067.2,347.3 1076.1,347.3 1075.2,349.7 1066.4,349.6" fill="#5a5a52"/>
<polygon points="1067.2,347.3 1076.1,347.3 1075.5,343.4 1066.7,343.4" fill="#8d8d82"/>
<polygon points="1055.2,342.1 1054.8,339.1 1053.9,342.2 1054.2,345.2" fill="#141414"/>
<polygon points="1055.2,342.1 1061.9,342.1 1060.9,345.2 1054.2,345.2" fill="#141414"/>
<polygon points="1055.2,342.1 1061.9,342.1 1061.6,339.2 1054.8,339.1" fill="#141414"/>
<polygon points="1047.6,336.0 1046.2,323.0 1043.0,334.0 1044.4,346.9" fill="#f3b5aa"/>
<polygon points="1047.6,336.0 1050.5,336.1 1049.0,323.0 1046.2,323.0" fill="#ffffff"/>
<path d="M1047.6 336.0L1046.2 323.0" stroke="#ff0000" stroke-width="1.3" fill="none"/>
<path d="M1050.5 336.1L1049.0 323.0" stroke="#ff0000" stroke-width="1.3" fill="none"/>
<polygon points="988.4,329.4 988.2,325.6 987.8,328.0 988.1,331.8" fill="#5a5a52"/>
<polygon points="802.8,335.6 803.1,332.7 803.9,335.8 803.6,338.7" fill="#141414"/>
<polygon points="988.4,329.4 1000.3,329.5 999.9,331.9 988.1,331.8" fill="#5a5a52"/>
<polygon points="796.7,335.6 802.8,335.6 803.6,338.7 797.6,338.7" fill="#141414"/>
<polygon points="988.4,329.4 1000.3,329.5 1000.1,325.7 988.2,325.6" fill="#8d8d82"/>
<polygon points="796.7,335.6 802.8,335.6 803.1,332.7 797.1,332.7" fill="#141414"/>
<polygon points="1005.1,331.0 1004.8,328.1 1004.2,331.3 1004.4,334.1" fill="#141414"/>
<polygon points="1005.1,331.0 1014.1,331.1 1013.5,334.2 1004.4,334.1" fill="#141414"/>
<polygon points="1005.1,331.0 1014.1,331.1 1013.9,328.2 1004.8,328.1" fill="#141414"/>
<polygon points="704.7,371.4 705.6,366.9 706.8,369.2 705.9,373.6" fill="#5a5a52"/>
<polygon points="696.9,371.3 704.7,371.4 705.9,373.6 698.1,373.6" fill="#5a5a52"/>
<polygon points="696.9,371.3 704.7,371.4 705.6,366.9 697.8,366.9" fill="#202020"/>
<polygon points="691.7,378.4 693.8,368.5 695.5,371.7 693.4,381.6" fill="#3a3030"/>
<polygon points="686.3,378.4 691.7,378.4 693.8,368.5 688.4,368.5" fill="#8b5a48"/>
<polygon points="714.2,365.8 714.8,362.7 716.2,365.7 715.6,368.7" fill="#141414"/>
<polygon points="708.2,365.7 714.2,365.8 715.6,368.7 709.7,368.7" fill="#141414"/>
<polygon points="708.2,365.7 714.2,365.8 714.8,362.7 708.8,362.7" fill="#141414"/>
<polygon points="791.8,341.0 792.3,336.8 793.0,339.2 792.5,343.4" fill="#5a5a52"/>
<polygon points="783.8,340.9 791.8,341.0 792.5,343.4 784.5,343.3" fill="#5a5a52"/>
<polygon points="783.8,340.9 791.8,341.0 792.3,336.8 784.3,336.7" fill="#8d8d82"/>
<polygon points="807.8,331.9 809.2,319.4 811.8,330.5 810.5,342.8" fill="#d9d9cc"/>
<polygon points="805.0,331.8 807.8,331.9 809.2,319.4 806.4,319.4" fill="#ffffff"/>
<path d="M805.0 331.8L806.4 319.4" stroke="#ff0000" stroke-width="1.3" fill="none"/>
<path d="M807.8 331.9L809.2 319.4" stroke="#ff0000" stroke-width="1.3" fill="none"/>
<polygon points="1022.7,331.9 1021.5,318.9 1019.0,330.0 1020.1,342.8" fill="#f3b5aa"/>
<polygon points="1022.7,331.9 1025.5,332.0 1024.3,318.9 1021.5,318.9" fill="#ffffff"/>
<path d="M1022.7 331.9L1021.5 318.9" stroke="#ff0000" stroke-width="1.3" fill="none" stroke-dasharray="3 1.5"/>
<path d="M1025.5 332.0L1024.3 318.9" stroke="#ff0000" stroke-width="1.3" fill="none" stroke-dasharray="3 1.5"/>
<polygon points="761.0,344.7 762.8,332.4 766.6,343.3 764.8,355.4" fill="#f3b5aa"/>
<polygon points="758.1,344.7 761.0,344.7 762.8,332.4 760.0,332.3" fill="#ffffff"/>
<path d="M758.1 344.7L760.0 332.3" stroke="#ff0000" stroke-width="1.3" fill="none" stroke-dasharray="3 1.5"/>
<path d="M761.0 344.7L762.8 332.4" stroke="#ff0000" stroke-width="1.3" fill="none" stroke-dasharray="3 1.5"/>
<polygon points="778.5,344.1 778.9,341.1 779.8,344.2 779.4,347.1" fill="#141414"/>
<polygon points="772.3,344.0 778.5,344.1 779.4,347.1 773.4,347.1" fill="#141414"/>
<polygon points="772.3,344.0 778.5,344.1 778.9,341.1 772.8,341.1" fill="#141414"/>
<polygon points="734.9,358.7 735.4,355.7 736.7,358.7 736.2,361.8" fill="#141414"/>
<polygon points="729.0,358.7 734.9,358.7 736.2,361.8 730.4,361.7" fill="#141414"/>
<polygon points="729.0,358.7 734.9,358.7 735.4,355.7 729.6,355.7" fill="#141414"/>
<polygon points="725.6,364.3 726.4,359.9 727.4,362.2 726.6,366.6" fill="#5a5a52"/>
<polygon points="717.8,364.3 725.6,364.3 726.6,366.6 718.9,366.6" fill="#5a5a52"/>
<polygon points="717.8,364.3 725.6,364.3 726.4,359.9 718.6,359.9" fill="#202020"/>
<polygon points="703.0,372.9 703.6,369.8 705.1,372.8 704.5,375.9" fill="#141414"/>
<polygon points="990.1,330.9 989.9,328.0 989.4,331.2 989.6,334.0" fill="#141414"/>
<polygon points="697.0,372.9 703.0,372.9 704.5,375.9 698.6,375.8" fill="#141414"/>
<polygon points="990.1,330.9 999.2,331.0 998.6,334.1 989.6,334.0" fill="#141414"/>
<polygon points="697.0,372.9 703.0,372.9 703.6,369.8 697.6,369.8" fill="#141414"/>
<polygon points="990.1,330.9 999.2,331.0 999.0,328.1 989.9,328.0" fill="#141414"/>
<polygon points="1081.1,355.3 1080.5,351.3 1079.7,353.7 1080.2,357.7" fill="#5a5a52"/>
<polygon points="1081.1,355.3 1090.1,355.4 1089.1,357.7 1080.2,357.7" fill="#5a5a52"/>
<polygon points="1081.1,355.3 1090.1,355.4 1089.5,351.4 1080.5,351.3" fill="#8d8d82"/>
<polygon points="1069.0,350.1 1068.6,347.1 1067.5,350.1 1067.9,353.1" fill="#141414"/>
<polygon points="1069.0,350.1 1075.8,350.1 1074.6,353.2 1067.9,353.1" fill="#141414"/>
<polygon points="1069.0,350.1 1075.8,350.1 1075.3,347.1 1068.6,347.1" fill="#141414"/>
<polygon points="1054.4,347.2 1054.0,343.3 1053.2,345.6 1053.7,349.6" fill="#5a5a52"/>
<polygon points="1054.4,347.2 1063.3,347.3 1062.5,349.6 1053.7,349.6" fill="#5a5a52"/>
<polygon points="1054.4,347.2 1063.3,347.3 1062.8,343.3 1054.0,343.3" fill="#8d8d82"/>
<polygon points="803.4,341.1 803.9,336.8 804.5,339.2 804.0,343.4" fill="#5a5a52"/>
<polygon points="795.4,341.0 803.4,341.1 804.0,343.4 796.0,343.4" fill="#5a5a52"/>
<polygon points="795.4,341.0 803.4,341.1 803.9,336.8 795.9,336.8" fill="#8d8d82"/>
<polygon points="1003.8,336.1 1003.5,332.2 1003.0,334.6 1003.3,338.5" fill="#5a5a52"/>
<polygon points="1003.8,336.1 1015.8,336.1 1015.2,338.5 1003.3,338.5" fill="#5a5a52"/>
<polygon points="1003.8,336.1 1015.8,336.1 1015.4,332.3 1003.5,332.2" fill="#8d8d82"/>
<polygon points="714.5,371.4 715.3,367.0 716.5,369.3 715.6,373.7" fill="#5a5a52"/>
<polygon points="706.7,371.4 714.5,371.4 715.6,373.7 707.8,373.7" fill="#5a5a52"/>
<polygon points="706.7,371.4 714.5,371.4 715.3,367.0 707.6,366.9" fill="#202020"/>
<polygon points="723.9,365.8 724.5,362.8 725.9,365.7 725.3,368.8" fill="#141414"/>
<polygon points="718.0,365.8 723.9,365.8 725.3,368.8 719.4,368.8" fill="#141414"/>
<polygon points="718.0,365.8 723.9,365.8 724.5,362.8 718.6,362.7" fill="#141414"/>
<polygon points="790.1,344.1 790.5,341.2 791.4,344.3 791.0,347.2" fill="#141414"/>
<polygon points="784.0,344.1 790.1,344.1 791.0,347.2 785.0,347.2" fill="#141414"/>
<polygon points="784.0,344.1 790.1,344.1 790.5,341.2 784.4,341.1" fill="#141414"/>
<polygon points="735.3,364.4 736.1,360.0 737.0,362.3 736.3,366.7" fill="#5a5a52"/>
<polygon points="727.5,364.3 735.3,364.4 736.3,366.7 728.6,366.6" fill="#5a5a52"/>
<polygon points="727.5,364.3 735.3,364.4 736.1,360.0 728.3,359.9" fill="#202020"/>
<polygon points="779.0,349.6 779.6,345.3 780.3,347.6 779.8,351.9" fill="#5a5a52"/>
<polygon points="770.9,349.5 779.0,349.6 779.8,351.9 771.7,351.8" fill="#5a5a52"/>
<polygon points="770.9,349.5 779.0,349.6 779.6,345.3 771.5,345.2" fill="#8d8d82"/>
<polygon points="1094.8,364.9 1093.3,355.2 1092.0,358.5 1093.4,368.2" fill="#3a3030"/>
<polygon points="1094.8,364.9 1100.2,365.0 1098.6,355.3 1093.3,355.2" fill="#8b5a48"/>
<polygon points="703.3,378.7 704.2,374.1 705.3,376.4 704.5,380.9" fill="#5a5a52"/>
<polygon points="695.4,378.6 703.3,378.7 704.5,380.9 696.6,380.9" fill="#5a5a52"/>
<polygon points="695.4,378.6 703.3,378.7 704.2,374.1 696.3,374.1" fill="#202020"/>
<polygon points="988.8,336.0 988.6,332.1 988.2,334.5 988.4,338.4" fill="#5a5a52"/>
<polygon points="988.8,336.0 1000.8,336.0 1000.3,338.4 988.4,338.4" fill="#5a5a52"/>
<polygon points="988.8,336.0 1000.8,336.0 1000.5,332.2 988.6,332.1" fill="#8d8d82"/>
<polygon points="712.8,373.0 713.4,369.9 714.8,372.8 714.3,375.9" fill="#141414"/>
<polygon points="706.8,373.0 712.8,373.0 714.3,375.9 708.3,375.9" fill="#141414"/>
<polygon points="1005.5,337.6 1005.3,334.7 1004.7,337.8 1004.9,340.7" fill="#141414"/>
<polygon points="706.8,373.0 712.8,373.0 713.4,369.9 707.4,369.8" fill="#141414"/>
<polygon points="1005.5,337.6 1014.7,337.7 1014.0,340.8 1004.9,340.7" fill="#141414"/>
<polygon points="1005.5,337.6 1014.7,337.7 1014.4,334.8 1005.3,334.7" fill="#141414"/>
<polygon points="1068.2,355.3 1067.7,351.3 1066.9,353.6 1067.4,357.6" fill="#5a5a52"/>
<polygon points="1068.2,355.3 1077.2,355.3 1076.3,357.7 1067.4,357.6" fill="#5a5a52"/>
<polygon points="1068.2,355.3 1077.2,355.3 1076.6,351.3 1067.7,351.3" fill="#8d8d82"/>
<polygon points="686.3,377.6 687.7,371.3 693.4,381.6 692.2,387.7" fill="#f8a17e"/>
<polygon points="680.8,377.5 686.3,377.6 692.2,387.7 686.8,387.7" fill="#f8a17e"/>
<polygon points="680.8,377.5 686.3,377.6 687.7,371.3 682.2,371.3" fill="#f7c0b0"/>
<polygon points="680.8,377.5 686.3,377.6 687.7,371.3 682.2,371.3" fill="none" stroke="#ff0000" stroke-width="1"/>
<polygon points="1056.1,350.0 1055.8,347.0 1054.8,350.1 1055.1,353.0" fill="#141414"/>
<polygon points="1056.1,350.0 1062.9,350.0 1061.9,353.1 1055.1,353.0" fill="#141414"/>
<polygon points="1056.1,350.0 1062.9,350.0 1062.5,347.1 1055.8,347.0" fill="#141414"/>
<path d="M803.9 358.8L809.7 306.3" stroke="#b5b5b5" stroke-width="2.6" fill="none"/>
<polygon points="724.3,371.5 725.1,367.0 726.1,369.3 725.3,373.8" fill="#5a5a52"/>
<polygon points="716.5,371.4 724.3,371.5 725.3,373.8 717.6,373.7" fill="#5a5a52"/>
<polygon points="716.5,371.4 724.3,371.5 725.1,367.0 717.3,367.0" fill="#202020"/>
<polygon points="801.8,344.2 802.2,341.2 803.0,344.3 802.6,347.3" fill="#141414"/>
<polygon points="795.7,344.2 801.8,344.2 802.6,347.3 796.5,347.2" fill="#141414"/>
<polygon points="795.7,344.2 801.8,344.2 802.2,341.2 796.1,341.2" fill="#141414"/>
<polygon points="733.7,365.9 734.2,362.8 735.5,365.8 735.0,368.9" fill="#141414"/>
<polygon points="727.7,365.8 733.7,365.9 735.0,368.9 729.1,368.8" fill="#141414"/>
<polygon points="727.7,365.8 733.7,365.9 734.2,362.8 728.3,362.8" fill="#141414"/>
<polygon points="701.5,380.3 702.1,377.1 703.7,380.0 703.1,383.2" fill="#141414"/>
<polygon points="695.5,380.2 701.5,380.3 703.1,383.2 697.1,383.1" fill="#141414"/>
<polygon points="695.5,380.2 701.5,380.3 702.1,377.1 696.1,377.1" fill="#141414"/>
<polygon points="736.2,361.2 738.6,347.5 742.9,358.2 740.7,371.6" fill="#f3b5aa"/>
<polygon points="733.3,361.2 736.2,361.2 738.6,347.5 735.7,347.5" fill="#ffffff"/>
<path d="M733.3 361.2L735.7 347.5" stroke="#ff0000" stroke-width="1.3" fill="none"/>
<path d="M736.2 361.2L738.6 347.5" stroke="#ff0000" stroke-width="1.3" fill="none"/>
<polygon points="790.7,349.6 791.3,345.3 791.9,347.7 791.4,352.0" fill="#5a5a52"/>
<polygon points="782.6,349.6 790.7,349.6 791.4,352.0 783.4,351.9" fill="#5a5a52"/>
<polygon points="782.6,349.6 790.7,349.6 791.3,345.3 783.2,345.3" fill="#8d8d82"/>
<polygon points="990.5,337.5 990.3,334.6 989.8,337.7 990.0,340.6" fill="#141414"/>
<polygon points="990.5,337.5 999.7,337.6 999.1,340.7 990.0,340.6" fill="#141414"/>
<polygon points="990.5,337.5 999.7,337.6 999.5,334.7 990.3,334.6" fill="#141414"/>
<polygon points="980.2,332.9 979.6,320.4 978.1,331.5 978.7,343.8" fill="#d9d9cc"/>
<polygon points="980.2,332.9 983.1,332.9 982.4,320.5 979.6,320.4" fill="#ffffff"/>
<path d="M980.2 332.9L979.6 320.4" stroke="#ff0000" stroke-width="1.3" fill="none"/>
<path d="M983.1 332.9L982.4 320.5" stroke="#ff0000" stroke-width="1.3" fill="none"/>
<polygon points="777.3,352.7 777.7,349.8 778.7,352.8 778.3,355.8" fill="#141414"/>
<polygon points="771.1,352.7 777.3,352.7 778.3,355.8 772.1,355.7" fill="#141414"/>
<polygon points="771.1,352.7 777.3,352.7 777.7,349.8 771.5,349.7" fill="#141414"/>
<polygon points="713.1,378.7 714.0,374.2 715.1,376.5 714.2,381.0" fill="#5a5a52"/>
<polygon points="705.2,378.7 713.1,378.7 714.2,381.0 706.4,380.9" fill="#5a5a52"/>
<polygon points="705.2,378.7 713.1,378.7 714.0,374.2 706.1,374.1" fill="#202020"/>
<polygon points="1004.3,342.7 1004.0,338.8 1003.5,341.2 1003.8,345.1" fill="#5a5a52"/>
<polygon points="1004.3,342.7 1016.3,342.8 1015.8,345.2 1003.8,345.1" fill="#5a5a52"/>
<polygon points="1004.3,342.7 1016.3,342.8 1016.0,338.9 1004.0,338.8" fill="#8d8d82"/>
<polygon points="722.6,373.1 723.2,369.9 724.6,372.9 724.0,376.0" fill="#141414"/>
<polygon points="716.6,373.0 722.6,373.1 724.0,376.0 718.1,376.0" fill="#141414"/>
<polygon points="716.6,373.0 722.6,373.1 723.2,369.9 717.2,369.9" fill="#141414"/>
<polygon points="1055.4,355.2 1054.9,351.2 1054.1,353.5 1054.6,357.5" fill="#5a5a52"/>
<polygon points="1055.4,355.2 1064.3,355.2 1063.5,357.6 1054.6,357.5" fill="#5a5a52"/>
<polygon points="1055.4,355.2 1064.3,355.2 1063.8,351.2 1054.9,351.2" fill="#8d8d82"/>
<polygon points="1075.3,354.3 1099.6,354.4 1095.0,365.0 1071.4,364.8" fill="#ffffff"/>
<polygon points="1075.3,354.3 1099.6,354.4 1099.2,352.0 1075.0,351.9" fill="#ffffff"/>
<path d="M1075.3 354.3L1099.6 354.4" stroke="#ff0000" stroke-width="1.3" fill="none"/>
<path d="M1075.0 351.9L1099.2 352.0" stroke="#ff0000" stroke-width="1.3" fill="none"/>
<polygon points="734.1,371.6 734.8,367.1 735.8,369.4 735.1,373.8" fill="#5a5a52"/>
<polygon points="726.2,371.5 734.1,371.6 735.1,373.8 727.3,373.8" fill="#5a5a52"/>
<polygon points="726.2,371.5 734.1,371.6 734.8,367.1 727.0,367.0" fill="#202020"/>
<polygon points="701.8,386.0 702.7,381.5 703.9,383.7 703.0,388.3" fill="#5a5a52"/>
<polygon points="693.9,386.0 701.8,386.0 703.0,388.3 695.1,388.2" fill="#5a5a52"/>
<polygon points="1049.2,349.4 1047.6,336.0 1044.4,346.9 1045.9,360.0" fill="#f3b5aa"/>
<polygon points="693.9,386.0 701.8,386.0 702.7,381.5 694.8,381.4" fill="#202020"/>
<polygon points="1049.2,349.4 1052.1,349.4 1050.5,336.1 1047.6,336.0" fill="#ffffff"/>
<path d="M1049.2 349.4L1047.6 336.0" stroke="#ff0000" stroke-width="1.3" fill="none"/>
<path d="M1052.1 349.4L1050.5 336.1" stroke="#ff0000" stroke-width="1.3" fill="none"/>
<polygon points="802.4,349.7 802.9,345.4 803.5,347.8 803.1,352.0" fill="#5a5a52"/>
<polygon points="794.4,349.6 802.4,349.7 803.1,352.0 795.0,352.0" fill="#5a5a52"/>
<polygon points="794.4,349.6 802.4,349.7 802.9,345.4 794.9,345.4" fill="#8d8d82"/>
<polygon points="711.4,380.3 712.0,377.2 713.5,380.1 712.9,383.2" fill="#141414"/>
<polygon points="705.4,380.3 711.4,380.3 712.9,383.2 706.9,383.2" fill="#141414"/>
<polygon points="705.4,380.3 711.4,380.3 712.0,377.2 706.0,377.1" fill="#141414"/>
<polygon points="1098.9,363.8 1098.0,357.7 1093.4,368.2 1094.4,374.2" fill="#f8a17e"/>
<polygon points="1098.9,363.8 1104.4,363.8 1099.7,374.2 1094.4,374.2" fill="#f8a17e"/>
<polygon points="1098.9,363.8 1104.4,363.8 1103.4,357.7 1098.0,357.7" fill="#f7c0b0"/>
<polygon points="1098.9,363.8 1104.4,363.8 1103.4,357.7 1098.0,357.7" fill="none" stroke="#ff0000" stroke-width="1"/>
<polygon points="759.0,357.3 761.0,344.7 764.8,355.4 762.9,367.8" fill="#f3b5aa"/>
<polygon points="756.1,357.3 759.0,357.3 761.0,344.7 758.1,344.7" fill="#ffffff"/>
<path d="M756.1 357.3L758.1 344.7" stroke="#ff0000" stroke-width="1.3" fill="none" stroke-dasharray="3 1.5"/>
<path d="M759.0 357.3L761.0 344.7" stroke="#ff0000" stroke-width="1.3" fill="none" stroke-dasharray="3 1.5"/>
<polygon points="688.2,394.9 690.4,384.6 692.2,387.7 690.0,397.9" fill="#3a3030"/>
<polygon points="682.8,394.8 688.2,394.9 690.4,384.6 684.9,384.6" fill="#8b5a48"/>
<polygon points="989.2,342.6 989.0,338.7 988.6,341.1 988.8,345.0" fill="#5a5a52"/>
<polygon points="989.2,342.6 1001.3,342.7 1000.8,345.1 988.8,345.0" fill="#5a5a52"/>
<polygon points="989.2,342.6 1001.3,342.7 1001.0,338.8 989.0,338.7" fill="#8d8d82"/>
<polygon points="1006.0,344.3 1005.8,341.4 1005.2,344.5 1005.4,347.4" fill="#141414"/>
<polygon points="1006.0,344.3 1015.2,344.4 1014.5,347.4 1005.4,347.4" fill="#141414"/>
<polygon points="1006.0,344.3 1015.2,344.4 1015.0,341.4 1005.8,341.4" fill="#141414"/>
<polygon points="789.1,352.8 789.4,349.8 790.3,352.9 790.0,355.9" fill="#141414"/>
<polygon points="782.9,352.8 789.1,352.8 790.0,355.9 783.8,355.8" fill="#141414"/>
<polygon points="782.9,352.8 789.1,352.8 789.4,349.8 783.3,349.8" fill="#141414"/>
<polygon points="806.4,344.6 807.8,331.9 810.5,342.8 809.1,355.3" fill="#d9d9cc"/>
<polygon points="803.5,344.6 806.4,344.6 807.8,331.9 805.0,331.8" fill="#ffffff"/>
<path d="M803.5 344.6L805.0 331.8" stroke="#ff0000" stroke-width="1.3" fill="none"/>
<path d="M806.4 344.6L807.8 331.9" stroke="#ff0000" stroke-width="1.3" fill="none"/>
<polygon points="777.8,358.3 778.4,354.0 779.2,356.3 778.6,360.6" fill="#5a5a52"/>
<polygon points="769.7,358.3 777.8,358.3 778.6,360.6 770.5,360.6" fill="#5a5a52"/>
<polygon points="769.7,358.3 777.8,358.3 778.4,354.0 770.3,353.9" fill="#8d8d82"/>
<polygon points="1023.9,345.3 1022.7,331.9 1020.1,342.8 1021.2,356.0" fill="#f3b5aa"/>
<polygon points="1023.9,345.3 1026.8,345.3 1025.5,332.0 1022.7,331.9" fill="#ffffff"/>
<path d="M1023.9 345.3L1022.7 331.9" stroke="#ff0000" stroke-width="1.3" fill="none" stroke-dasharray="3 1.5"/>
<path d="M1026.8 345.3L1025.5 332.0" stroke="#ff0000" stroke-width="1.3" fill="none" stroke-dasharray="3 1.5"/>
<polygon points="723.0,378.8 723.8,374.3 724.8,376.5 724.0,381.0" fill="#5a5a52"/>
<polygon points="715.1,378.7 723.0,378.8 724.0,381.0 716.2,381.0" fill="#5a5a52"/>
<polygon points="715.1,378.7 723.0,378.8 723.8,374.3 715.9,374.2" fill="#202020"/>
<polygon points="732.4,373.1 733.0,370.0 734.3,373.0 733.7,376.1" fill="#141414"/>
<polygon points="726.4,373.1 732.4,373.1 733.7,376.1 727.8,376.0" fill="#141414"/>
<polygon points="726.4,373.1 732.4,373.1 733.0,370.0 727.0,370.0" fill="#141414"/>
<polygon points="700.0,387.7 700.7,384.5 702.2,387.4 701.6,390.5" fill="#141414"/>
<polygon points="694.0,387.6 700.0,387.7 701.6,390.5 695.6,390.5" fill="#141414"/>
<polygon points="694.0,387.6 700.0,387.7 700.7,384.5 694.6,384.4" fill="#141414"/>
<polygon points="735.1,359.1 756.5,359.2 760.4,369.7 739.6,369.6" fill="#ffffff"/>
<polygon points="735.1,359.1 756.5,359.2 756.8,356.8 735.5,356.7" fill="#ffffff"/>
<path d="M735.1 359.1L756.5 359.2" stroke="#ff0000" stroke-width="1.3" fill="none"/>
<path d="M735.5 356.7L756.8 356.8" stroke="#ff0000" stroke-width="1.3" fill="none"/>
<polygon points="990.9,344.2 990.7,341.3 990.2,344.4 990.4,347.3" fill="#141414"/>
<polygon points="990.9,344.2 1000.1,344.3 999.5,347.4 990.4,347.3" fill="#141414"/>
<polygon points="990.9,344.2 1000.1,344.3 999.9,341.3 990.7,341.3" fill="#141414"/>
<polygon points="711.7,386.1 712.6,381.5 713.7,383.8 712.9,388.3" fill="#5a5a52"/>
<polygon points="703.8,386.1 711.7,386.1 712.9,388.3 705.0,388.3" fill="#5a5a52"/>
<polygon points="703.8,386.1 711.7,386.1 712.6,381.5 704.7,381.5" fill="#202020"/>
<polygon points="800.8,352.9 801.2,349.9 802.0,352.9 801.6,355.9" fill="#141414"/>
<polygon points="794.7,352.9 800.8,352.9 801.6,355.9 795.5,355.9" fill="#141414"/>
<polygon points="794.7,352.9 800.8,352.9 801.2,349.9 795.0,349.9" fill="#141414"/>
<polygon points="721.3,380.4 721.8,377.2 723.2,380.2 722.7,383.3" fill="#141414"/>
<polygon points="715.3,380.3 721.3,380.4 722.7,383.3 716.7,383.2" fill="#141414"/>
<polygon points="715.3,380.3 721.3,380.4 721.8,377.2 715.8,377.2" fill="#141414"/>
<polygon points="1004.8,349.5 1004.5,345.5 1004.0,347.9 1004.3,351.8" fill="#5a5a52"/>
<polygon points="1004.8,349.5 1016.9,349.6 1016.3,351.9 1004.3,351.8" fill="#5a5a52"/>
<polygon points="1004.8,349.5 1016.9,349.6 1016.6,345.6 1004.5,345.5" fill="#8d8d82"/>
<polygon points="789.6,358.4 790.2,354.0 790.9,356.4 790.3,360.7" fill="#5a5a52"/>
<polygon points="781.5,358.3 789.6,358.4 790.3,360.7 782.2,360.7" fill="#5a5a52"/>
<polygon points="781.5,358.3 789.6,358.4 790.2,354.0 782.1,354.0" fill="#8d8d82"/>
<polygon points="700.3,393.5 701.2,388.9 702.4,391.1 701.5,395.7" fill="#5a5a52"/>
<polygon points="692.3,393.5 700.3,393.5 701.5,395.7 693.6,395.7" fill="#5a5a52"/>
<polygon points="692.3,393.5 700.3,393.5 701.2,388.9 693.3,388.8" fill="#202020"/>
<polygon points="732.8,378.8 733.6,374.3 734.6,376.6 733.8,381.1" fill="#5a5a52"/>
<polygon points="724.9,378.8 732.8,378.8 733.8,381.1 726.0,381.0" fill="#5a5a52"/>
<polygon points="724.9,378.8 732.8,378.8 733.6,374.3 725.7,374.3" fill="#202020"/>
<path d="M739.7 352.7L803.7 353.1" stroke="#a9a9a9" stroke-width="2.2" fill="none"/>
<polygon points="1051.1,354.1 1075.3,354.3 1071.4,364.8 1047.8,364.7" fill="#ffffff"/>
<polygon points="1051.1,354.1 1075.3,354.3 1075.0,351.9 1050.9,351.7" fill="#ffffff"/>
<path d="M1051.1 354.1L1075.3 354.3" stroke="#ff0000" stroke-width="1.3" fill="none"/>
<path d="M1050.9 351.7L1075.0 351.9" stroke="#ff0000" stroke-width="1.3" fill="none"/>
<polygon points="710.0,387.7 710.6,384.5 712.1,387.4 711.5,390.6" fill="#141414"/>
<polygon points="703.9,387.7 710.0,387.7 711.5,390.6 705.5,390.6" fill="#141414"/>
<polygon points="703.9,387.7 710.0,387.7 710.6,384.5 704.5,384.5" fill="#141414"/>
<polygon points="682.7,394.4 684.1,387.9 690.0,397.9 688.7,404.3" fill="#f8a17e"/>
<polygon points="677.1,394.3 682.7,394.4 688.7,404.3 683.3,404.2" fill="#f8a17e"/>
<polygon points="677.1,394.3 682.7,394.4 684.1,387.9 678.5,387.9" fill="#f7c0b0"/>
<polygon points="677.1,394.3 682.7,394.4 684.1,387.9 678.5,387.9" fill="none" stroke="#ff0000" stroke-width="1"/>
<polygon points="1097.3,381.0 1095.8,371.0 1094.4,374.2 1095.9,384.1" fill="#3a3030"/>
<polygon points="1097.3,381.0 1102.7,381.0 1101.1,371.0 1095.8,371.0" fill="#8b5a48"/>
<polygon points="989.6,349.4 989.4,345.4 989.0,347.8 989.2,351.7" fill="#5a5a52"/>
<polygon points="989.6,349.4 1001.7,349.5 1001.3,351.8 989.2,351.7" fill="#5a5a52"/>
<polygon points="989.6,349.4 1001.7,349.5 1001.5,345.5 989.4,345.4" fill="#8d8d82"/>
<polygon points="721.6,386.2 722.4,381.6 723.5,383.8 722.7,388.4" fill="#5a5a52"/>
<polygon points="713.7,386.1 721.6,386.2 722.7,388.4 714.8,388.3" fill="#5a5a52"/>
<polygon points="713.7,386.1 721.6,386.2 722.4,381.6 714.5,381.5" fill="#202020"/>
<polygon points="801.4,358.5 801.9,354.1 802.6,356.4 802.1,360.8" fill="#5a5a52"/>
<polygon points="793.3,358.4 801.4,358.5 802.1,360.8 794.0,360.7" fill="#5a5a52"/>
<polygon points="793.3,358.4 801.4,358.5 801.9,354.1 793.8,354.1" fill="#8d8d82"/>
<polygon points="731.1,380.4 731.7,377.3 733.0,380.2 732.5,383.3" fill="#141414"/>
<polygon points="725.1,380.4 731.1,380.4 732.5,383.3 726.5,383.3" fill="#141414"/>
<polygon points="725.1,380.4 731.1,380.4 731.7,377.3 725.7,377.2" fill="#141414"/>
<polygon points="733.8,375.2 736.2,361.2 740.7,371.6 738.4,385.4" fill="#f3b5aa"/>
<polygon points="730.8,375.2 733.8,375.2 736.2,361.2 733.3,361.2" fill="#ffffff"/>
<path d="M730.8 375.2L733.3 361.2" stroke="#ff0000" stroke-width="1.3" fill="none"/>
<path d="M733.8 375.2L736.2 361.2" stroke="#ff0000" stroke-width="1.3" fill="none"/>
<path d="M983.7 359.9L981.4 316.8" stroke="#b5b5b5" stroke-width="2.6" fill="none"/>
<polygon points="710.3,393.6 711.2,388.9 712.3,391.1 711.4,395.8" fill="#5a5a52"/>
<polygon points="702.3,393.5 710.3,393.6 711.4,395.8 703.5,395.7" fill="#5a5a52"/>
<polygon points="702.3,393.5 710.3,393.6 711.2,388.9 703.2,388.9" fill="#202020"/>
<polygon points="980.9,345.6 980.2,332.9 978.7,343.8 979.3,356.3" fill="#d9d9cc"/>
<polygon points="980.9,345.6 983.8,345.7 983.1,332.9 980.2,332.9" fill="#ffffff"/>
<path d="M980.9 345.6L980.2 332.9" stroke="#ff0000" stroke-width="1.3" fill="none"/>
<path d="M983.8 345.7L983.1 332.9" stroke="#ff0000" stroke-width="1.3" fill="none"/>
<polygon points="756.5,359.2 777.8,359.3 781.2,369.8 760.4,369.7" fill="#ffffff"/>
<polygon points="756.5,359.2 777.8,359.3 778.1,356.9 756.8,356.8" fill="#ffffff"/>
<path d="M756.5 359.2L777.8 359.3" stroke="#ff0000" stroke-width="1.3" fill="none"/>
<path d="M756.8 356.8L778.1 356.9" stroke="#ff0000" stroke-width="1.3" fill="none"/>
<polygon points="719.9,387.8 720.5,384.6 721.9,387.5 721.3,390.7" fill="#141414"/>
<polygon points="713.9,387.8 719.9,387.8 721.3,390.7 715.3,390.6" fill="#141414"/>
<polygon points="713.9,387.8 719.9,387.8 720.5,384.6 714.5,384.6" fill="#141414"/>
<polygon points="1004.0,347.4 1025.5,347.5 1022.8,358.2 1001.8,358.0" fill="#ffffff"/>
<polygon points="1004.0,347.4 1025.5,347.5 1025.3,345.1 1003.8,345.0" fill="#ffffff"/>
<path d="M1004.0 347.4L1025.5 347.5" stroke="#ff0000" stroke-width="1.3" fill="none"/>
<path d="M1003.8 345.0L1025.3 345.1" stroke="#ff0000" stroke-width="1.3" fill="none"/>
<polygon points="731.5,386.2 732.3,381.6 733.3,383.9 732.6,388.4" fill="#5a5a52"/>
<polygon points="723.6,386.2 731.5,386.2 732.6,388.4 724.7,388.4" fill="#5a5a52"/>
<polygon points="723.6,386.2 731.5,386.2 732.3,381.6 724.4,381.6" fill="#202020"/>
<polygon points="1050.7,363.1 1049.2,349.4 1045.9,360.0 1047.3,373.5" fill="#f3b5aa"/>
<polygon points="1050.7,363.1 1053.7,363.1 1052.1,349.4 1049.2,349.4" fill="#ffffff"/>
<path d="M1050.7 363.1L1049.2 349.4" stroke="#ff0000" stroke-width="1.3" fill="none"/>
<path d="M1053.7 363.1L1052.1 349.4" stroke="#ff0000" stroke-width="1.3" fill="none"/>
<polygon points="681.1,392.0 705.2,392.1 710.6,402.1 687.1,401.9" fill="#ffffff"/>
<polygon points="681.1,392.0 705.2,392.1 705.7,389.5 681.7,389.4" fill="#ffffff"/>
<path d="M681.1 392.0L705.2 392.1" stroke="#ff0000" stroke-width="1.3" fill="none"/>
<path d="M681.7 389.4L705.7 389.5" stroke="#ff0000" stroke-width="1.3" fill="none"/>
<path d="M843.3 340.8L875.8 341.0" stroke="#ff0000" stroke-width="1.3" fill="none"/>
<polygon points="805.0,357.6 806.4,344.6 809.1,355.3 807.8,368.1" fill="#d9d9cc"/>
<polygon points="802.1,357.6 805.0,357.6 806.4,344.6 803.5,344.6" fill="#ffffff"/>
<path d="M802.1 357.6L803.5 344.6" stroke="#ff0000" stroke-width="1.3" fill="none"/>
<path d="M805.0 357.6L806.4 344.6" stroke="#ff0000" stroke-width="1.3" fill="none"/>
<polygon points="684.7,411.8 686.9,401.2 688.7,404.3 686.6,414.8" fill="#3a3030"/>
<polygon points="679.1,411.8 684.7,411.8 686.9,401.2 681.4,401.2" fill="#8b5a48"/>
<polygon points="720.3,393.6 721.1,389.0 722.2,391.2 721.4,395.8" fill="#5a5a52"/>
<polygon points="712.3,393.6 720.3,393.6 721.4,395.8 713.4,395.8" fill="#5a5a52"/>
<polygon points="712.3,393.6 720.3,393.6 721.1,389.0 713.2,389.0" fill="#202020"/>
<polygon points="729.9,387.9 730.4,384.7 731.8,387.6 731.2,390.7" fill="#141414"/>
<polygon points="723.8,387.8 729.9,387.9 731.2,390.7 725.2,390.7" fill="#141414"/>
<polygon points="1101.5,380.2 1100.5,373.9 1095.9,384.1 1096.8,390.3" fill="#f8a17e"/>
<polygon points="723.8,387.8 729.9,387.9 730.4,384.7 724.4,384.6" fill="#141414"/>
<polygon points="1101.5,380.2 1107.1,380.2 1102.2,390.3 1096.8,390.3" fill="#f8a17e"/>
<polygon points="1101.5,380.2 1107.1,380.2 1106.0,373.9 1100.5,373.9" fill="#f7c0b0"/>
<polygon points="1101.5,380.2 1107.1,380.2 1106.0,373.9 1100.5,373.9" fill="none" stroke="#ff0000" stroke-width="1"/>
<polygon points="1025.1,359.0 1023.9,345.3 1021.2,356.0 1022.4,369.4" fill="#f3b5aa"/>
<polygon points="1025.1,359.0 1028.0,359.0 1026.8,345.3 1023.9,345.3" fill="#ffffff"/>
<path d="M1025.1 359.0L1023.9 345.3" stroke="#ff0000" stroke-width="1.3" fill="none" stroke-dasharray="3 1.5"/>
<path d="M1028.0 359.0L1026.8 345.3" stroke="#ff0000" stroke-width="1.3" fill="none" stroke-dasharray="3 1.5"/>
<polygon points="982.4,347.2 1004.0,347.4 1001.8,358.0 980.8,357.9" fill="#ffffff"/>
<polygon points="982.4,347.2 1004.0,347.4 1003.8,345.0 982.3,344.9" fill="#ffffff"/>
<path d="M982.4 347.2L1004.0 347.4" stroke="#ff0000" stroke-width="1.3" fill="none"/>
<path d="M982.3 344.9L1003.8 345.0" stroke="#ff0000" stroke-width="1.3" fill="none"/>
<polygon points="1078.0,373.8 1102.7,374.0 1097.9,384.2 1073.9,384.1" fill="#ffffff"/>
<polygon points="1078.0,373.8 1102.7,374.0 1102.3,371.5 1077.7,371.4" fill="#ffffff"/>
<path d="M1078.0 373.8L1102.7 374.0" stroke="#ff0000" stroke-width="1.3" fill="none"/>
<path d="M1077.7 371.4L1102.3 371.5" stroke="#ff0000" stroke-width="1.3" fill="none"/>
<polygon points="777.8,359.3 799.1,359.5 802.1,370.0 781.2,369.8" fill="#ffffff"/>
<polygon points="777.8,359.3 799.1,359.5 799.4,357.1 778.1,356.9" fill="#ffffff"/>
<path d="M777.8 359.3L799.1 359.5" stroke="#ff0000" stroke-width="1.3" fill="none"/>
<path d="M778.1 356.9L799.4 357.1" stroke="#ff0000" stroke-width="1.3" fill="none"/>
<polygon points="768.1,373.2 770.2,358.1 773.9,368.6 771.8,383.4" fill="#e4e4ec"/>
<polygon points="765.1,373.1 768.1,373.2 770.2,358.1 767.3,358.1" fill="#ffffff"/>
<path d="M765.1 373.1L767.3 358.1" stroke="#ff0000" stroke-width="1.3" fill="none"/>
<path d="M768.1 373.2L770.2 358.1" stroke="#ff0000" stroke-width="1.3" fill="none"/>
<polygon points="1033.7,360.9 1053.6,361.0 1050.2,371.5 1030.7,371.4" fill="#ffffff"/>
<polygon points="1033.7,360.9 1053.6,361.0 1053.3,358.6 1033.4,358.5" fill="#ffffff"/>
<path d="M1033.7 360.9L1053.6 361.0" stroke="#ff0000" stroke-width="1.3" fill="none"/>
<path d="M1033.4 358.5L1053.3 358.6" stroke="#ff0000" stroke-width="1.3" fill="none"/>
<polygon points="730.2,393.7 731.0,389.1 732.1,391.3 731.3,395.9" fill="#5a5a52"/>
<polygon points="722.2,393.7 730.2,393.7 731.3,395.9 723.3,395.8" fill="#5a5a52"/>
<polygon points="722.2,393.7 730.2,393.7 731.0,389.1 723.1,389.0" fill="#202020"/>
<polygon points="679.0,411.7 680.4,405.0 686.6,414.8 685.2,421.3" fill="#f8a17e"/>
<polygon points="847.8,358.6 849.1,340.9 851.4,356.2 850.2,373.6" fill="#f8a17e"/>
<polygon points="673.3,411.7 679.0,411.7 685.2,421.3 679.7,421.3" fill="#f8a17e"/>
<polygon points="841.9,358.5 847.8,358.6 850.2,373.6 844.6,373.5" fill="#f8a17e"/>
<polygon points="673.3,411.7 679.0,411.7 680.4,405.0 674.8,405.0" fill="#f7c0b0"/>
<polygon points="841.9,358.5 847.8,358.6 849.1,340.9 843.3,340.8" fill="#f7c0b0"/>
<polygon points="673.3,411.7 679.0,411.7 680.4,405.0 674.8,405.0" fill="none" stroke="#ff0000" stroke-width="1"/>
<polygon points="731.3,389.6 733.8,375.2 738.4,385.4 736.1,399.5" fill="#f3b5aa"/>
<polygon points="728.3,389.5 731.3,389.6 733.8,375.2 730.8,375.2" fill="#ffffff"/>
<path d="M728.3 389.5L730.8 375.2" stroke="#ff0000" stroke-width="1.3" fill="none"/>
<path d="M731.3 389.6L733.8 375.2" stroke="#ff0000" stroke-width="1.3" fill="none"/>
<path d="M841.9 358.5L843.3 340.8" stroke="#ff0000" stroke-width="1.3" fill="none"/>
<polygon points="1099.8,397.5 1098.2,387.2 1096.8,390.3 1098.3,400.5" fill="#3a3030"/>
<polygon points="1099.8,397.5 1105.3,397.5 1103.7,387.2 1098.2,387.2" fill="#8b5a48"/>
<polygon points="850.1,371.8 871.1,371.9 871.5,375.2 850.6,375.1" fill="#a0a4b8"/>
<polygon points="850.1,371.8 871.1,371.9 871.9,355.2 851.2,355.1" fill="#c9ccdc"/>
<polygon points="799.1,359.5 820.5,359.6 822.9,370.1 802.1,370.0" fill="#ffffff"/>
<polygon points="799.1,359.5 820.5,359.6 820.7,357.2 799.4,357.1" fill="#ffffff"/>
<path d="M799.1 359.5L820.5 359.6" stroke="#ff0000" stroke-width="1.3" fill="none"/>
<path d="M799.4 357.1L820.7 357.2" stroke="#ff0000" stroke-width="1.3" fill="none"/>
<path d="M847.8 358.6L849.1 340.9" stroke="#ff0000" stroke-width="1.3" fill="none"/>
<polygon points="705.2,392.1 729.4,392.3 734.1,402.2 710.6,402.1" fill="#ffffff"/>
<polygon points="705.2,392.1 729.4,392.3 729.8,389.7 705.7,389.5" fill="#ffffff"/>
<polygon points="1013.7,360.8 1033.7,360.9 1030.7,371.4 1011.3,371.3" fill="#ffffff"/>
<polygon points="1013.7,360.8 1033.7,360.9 1033.4,358.5 1013.5,358.4" fill="#ffffff"/>
<path d="M705.2 392.1L729.4 392.3" stroke="#ff0000" stroke-width="1.3" fill="none"/>
<path d="M705.7 389.5L729.8 389.7" stroke="#ff0000" stroke-width="1.3" fill="none"/>
<path d="M1013.7 360.8L1033.7 360.9" stroke="#ff0000" stroke-width="1.3" fill="none"/>
<path d="M1013.5 358.4L1033.4 358.5" stroke="#ff0000" stroke-width="1.3" fill="none"/>
<polygon points="981.5,358.7 980.9,345.6 979.3,356.3 979.9,369.2" fill="#d9d9cc"/>
<polygon points="981.5,358.7 984.5,358.7 983.8,345.7 980.9,345.6" fill="#ffffff"/>
<path d="M981.5 358.7L980.9 345.6" stroke="#ff0000" stroke-width="1.3" fill="none"/>
<path d="M984.5 358.7L983.8 345.7" stroke="#ff0000" stroke-width="1.3" fill="none"/>
<polygon points="875.0,358.7 875.8,341.0 877.2,356.4 876.5,373.7" fill="#f8a17e"/>
<polygon points="869.6,358.7 875.0,358.7 876.5,373.7 871.2,373.7" fill="#f8a17e"/>
<polygon points="869.6,358.7 875.0,358.7 875.8,341.0 870.5,341.0" fill="#f7c0b0"/>
<polygon points="1053.4,373.7 1078.0,373.8 1073.9,384.1 1049.9,383.9" fill="#ffffff"/>
<polygon points="1053.4,373.7 1078.0,373.8 1077.7,371.4 1053.1,371.2" fill="#ffffff"/>
<path d="M1053.4 373.7L1078.0 373.8" stroke="#ff0000" stroke-width="1.3" fill="none"/>
<path d="M1053.1 371.2L1077.7 371.4" stroke="#ff0000" stroke-width="1.3" fill="none"/>
<polygon points="789.3,373.3 791.1,358.2 794.2,368.7 792.5,383.5" fill="#e4e4ec"/>
<polygon points="786.3,373.3 789.3,373.3 791.1,358.2 788.2,358.2" fill="#ffffff"/>
<path d="M786.3 373.3L788.2 358.2" stroke="#ff0000" stroke-width="1.3" fill="none"/>
<path d="M789.3 373.3L791.1 358.2" stroke="#ff0000" stroke-width="1.3" fill="none"/>
<path d="M869.6 358.7L870.5 341.0" stroke="#ff0000" stroke-width="1.3" fill="none"/>
<polygon points="1052.3,377.2 1050.7,363.1 1047.3,373.5 1048.8,387.4" fill="#f3b5aa"/>
<polygon points="1052.3,377.2 1055.3,377.2 1053.7,363.1 1050.7,363.1" fill="#ffffff"/>
<path d="M1052.3 377.2L1050.7 363.1" stroke="#ff0000" stroke-width="1.3" fill="none"/>
<path d="M1055.3 377.2L1053.7 363.1" stroke="#ff0000" stroke-width="1.3" fill="none"/>
<polygon points="690.4,410.9 720.3,411.1 721.6,413.6 691.9,413.4" fill="#77776e"/>
<polygon points="690.4,410.9 720.3,411.1 721.1,406.3 691.3,406.1" fill="#9a9a90"/>
<path d="M875.0 358.7L875.8 341.0" stroke="#ff0000" stroke-width="1.3" fill="none"/>
<polygon points="681.0,429.2 683.3,418.4 685.2,421.3 683.0,432.1" fill="#3a3030"/>
<polygon points="675.4,429.2 681.0,429.2 683.3,418.4 677.7,418.3" fill="#8b5a48"/>
<polygon points="820.5,359.6 841.9,359.7 843.7,370.2 822.9,370.1" fill="#ffffff"/>
<polygon points="820.5,359.6 841.9,359.7 842.0,357.3 820.7,357.2" fill="#ffffff"/>
<path d="M820.5 359.6L841.9 359.7" stroke="#ff0000" stroke-width="1.3" fill="none"/>
<path d="M820.7 357.2L842.0 357.3" stroke="#ff0000" stroke-width="1.3" fill="none"/>
<polygon points="993.8,360.7 1013.7,360.8 1011.3,371.3 991.9,371.1" fill="#ffffff"/>
<polygon points="993.8,360.7 1013.7,360.8 1013.5,358.4 993.7,358.2" fill="#ffffff"/>
<path d="M993.8 360.7L1013.7 360.8" stroke="#ff0000" stroke-width="1.3" fill="none"/>
<path d="M993.7 358.2L1013.5 358.4" stroke="#ff0000" stroke-width="1.3" fill="none"/>
<polygon points="766.4,374.4 789.1,374.5 792.3,384.8 770.2,384.6" fill="#ffffff"/>
<polygon points="766.4,374.4 789.1,374.5 789.4,372.0 766.8,371.9" fill="#ffffff"/>
<path d="M766.4 374.4L789.1 374.5" stroke="#ff0000" stroke-width="1.3" fill="none"/>
<path d="M766.8 371.9L789.4 372.0" stroke="#ff0000" stroke-width="1.3" fill="none"/>
<polygon points="1104.2,397.0 1103.1,390.6 1098.3,400.5 1099.3,406.9" fill="#f8a17e"/>
<polygon points="1104.2,397.0 1109.8,397.1 1104.8,406.9 1099.3,406.9" fill="#f8a17e"/>
<polygon points="1104.2,397.0 1109.8,397.1 1108.7,390.6 1103.1,390.6" fill="#f7c0b0"/>
<polygon points="1104.2,397.0 1109.8,397.1 1108.7,390.6 1103.1,390.6" fill="none" stroke="#ff0000" stroke-width="1"/>
<polygon points="1061.1,390.8 1095.0,391.0 1093.2,395.0 1059.6,394.7" fill="#e4e4e4"/>
<polygon points="1061.1,390.8 1095.0,391.0 1094.2,385.6 1060.4,385.4" fill="#f6f6f6"/>
<polygon points="812.6,373.4 814.1,358.4 816.7,368.9 815.2,383.7" fill="#e4e4ec"/>
<polygon points="809.6,373.4 812.6,373.4 814.1,358.4 811.2,358.3" fill="#ffffff"/>
<path d="M809.6 373.4L811.2 358.3" stroke="#ff0000" stroke-width="1.3" fill="none"/>
<path d="M812.6 373.4L814.1 358.4" stroke="#ff0000" stroke-width="1.3" fill="none"/>
<polygon points="729.8,389.7 753.4,389.8 757.6,399.8 734.6,399.7" fill="#ffffff"/>
<polygon points="729.8,389.7 753.4,389.8 753.8,387.3 730.2,387.1" fill="#ffffff"/>
<path d="M729.8 389.7L753.4 389.8" stroke="#ff0000" stroke-width="1.3" fill="none"/>
<path d="M730.2 387.1L753.8 387.3" stroke="#ff0000" stroke-width="1.3" fill="none"/>
<polygon points="973.9,360.6 993.8,360.7 991.9,371.1 972.4,371.0" fill="#ffffff"/>
<polygon points="973.9,360.6 993.8,360.7 993.7,358.2 973.8,358.1" fill="#ffffff"/>
<path d="M973.9 360.6L993.8 360.7" stroke="#ff0000" stroke-width="1.3" fill="none"/>
<path d="M973.8 358.1L993.7 358.2" stroke="#ff0000" stroke-width="1.3" fill="none"/>
<polygon points="699.4,421.8 700.0,418.4 701.7,421.1 701.0,424.5" fill="#141414"/>
<polygon points="692.8,421.7 699.4,421.8 701.0,424.5 694.5,424.4" fill="#141414"/>
<polygon points="692.8,421.7 699.4,421.8 700.0,418.4 693.5,418.4" fill="#141414"/>
<polygon points="765.9,388.6 768.1,373.2 771.8,383.4 769.7,398.7" fill="#e4e4ec"/>
<polygon points="762.9,388.6 765.9,388.6 768.1,373.2 765.1,373.1" fill="#ffffff"/>
<path d="M762.9 388.6L765.1 373.1" stroke="#ff0000" stroke-width="1.3" fill="none"/>
<path d="M765.9 388.6L768.1 373.2" stroke="#ff0000" stroke-width="1.3" fill="none"/>
<polygon points="970.9,360.4 977.2,360.4 975.7,370.9 969.6,370.8" fill="#ffffff"/>
<polygon points="970.9,360.4 977.2,360.4 977.1,358.3 970.9,358.3" fill="#ffffff"/>
<polygon points="728.8,404.3 731.3,389.6 736.1,399.5 733.6,414.0" fill="#f3b5aa"/>
<polygon points="725.7,404.3 728.8,404.3 731.3,389.6 728.3,389.5" fill="#ffffff"/>
<path d="M725.7 404.3L728.3 389.5" stroke="#ff0000" stroke-width="1.3" fill="none"/>
<path d="M728.8 404.3L731.3 389.6" stroke="#ff0000" stroke-width="1.3" fill="none"/>
<polygon points="959.5,361.1 970.8,361.2 969.6,370.5 958.5,370.4" fill="#25262c"/>
<polygon points="959.6,360.3 970.9,360.4 970.8,361.6 959.5,361.5" fill="#ffffff"/>
<polygon points="959.5,361.1 970.8,361.2 970.7,359.8 959.4,359.8" fill="#33343c"/>
<polygon points="959.6,360.3 970.9,360.4 970.9,358.3 959.6,358.2" fill="#ffffff"/>
<polygon points="675.2,429.5 676.7,422.7 683.0,432.1 681.6,438.8" fill="#f8a17e"/>
<polygon points="669.4,429.5 675.2,429.5 681.6,438.8 675.9,438.8" fill="#f8a17e"/>
<polygon points="669.4,429.5 675.2,429.5 676.7,422.7 670.9,422.7" fill="#f7c0b0"/>
<polygon points="669.4,429.5 675.2,429.5 676.7,422.7 670.9,422.7" fill="none" stroke="#ff0000" stroke-width="1"/>
<polygon points="875.0,359.8 881.7,359.8 882.5,370.3 876.0,370.2" fill="#ffffff"/>
<polygon points="875.0,359.8 881.7,359.8 881.7,357.7 875.1,357.7" fill="#ffffff"/>
<polygon points="954.2,360.3 959.6,360.3 958.5,370.8 953.2,370.7" fill="#ffffff"/>
<polygon points="954.2,360.3 959.6,360.3 959.6,358.2 954.1,358.2" fill="#ffffff"/>
<polygon points="945.7,361.1 954.1,361.1 953.2,370.4 945.0,370.3" fill="#25262c"/>
<polygon points="945.8,360.2 954.2,360.3 954.1,361.4 945.7,361.4" fill="#ffffff"/>
<polygon points="945.7,361.1 954.1,361.1 954.0,359.7 945.7,359.7" fill="#33343c"/>
<polygon points="945.8,360.2 954.2,360.3 954.1,358.2 945.7,358.1" fill="#ffffff"/>
<polygon points="881.8,360.7 896.0,360.7 896.4,370.0 882.5,369.9" fill="#25262c"/>
<polygon points="881.7,359.8 895.9,359.9 896.0,361.1 881.8,361.0" fill="#ffffff"/>
<polygon points="881.8,360.7 896.0,360.7 896.0,359.4 881.8,359.3" fill="#33343c"/>
<polygon points="881.7,359.8 895.9,359.9 896.0,357.8 881.7,357.7" fill="#ffffff"/>
<polygon points="789.1,374.5 811.7,374.7 814.3,384.9 792.3,384.8" fill="#ffffff"/>
<polygon points="789.1,374.5 811.7,374.7 811.9,372.2 789.4,372.0" fill="#ffffff"/>
<path d="M789.1 374.5L811.7 374.7" stroke="#ff0000" stroke-width="1.3" fill="none"/>
<path d="M789.4 372.0L811.9 372.2" stroke="#ff0000" stroke-width="1.3" fill="none"/>
<polygon points="937.8,360.2 945.8,360.2 945.0,370.7 937.3,370.6" fill="#ffffff"/>
<polygon points="937.8,360.2 945.8,360.2 945.7,358.1 937.8,358.1" fill="#ffffff"/>
<polygon points="1002.8,375.0 1001.7,359.5 999.6,370.0 1000.6,385.2" fill="#dfe0ea"/>
<polygon points="1002.8,375.0 1005.7,375.0 1004.6,359.5 1001.7,359.5" fill="#ffffff"/>
<polygon points="895.9,359.9 900.9,359.9 901.3,370.4 896.4,370.4" fill="#ffffff"/>
<polygon points="895.9,359.9 900.9,359.9 901.0,357.9 896.0,357.8" fill="#ffffff"/>
<path d="M1002.8 375.0L1001.7 359.5" stroke="#ff0000" stroke-width="1.3" fill="none"/>
<path d="M1005.7 375.0L1004.6 359.5" stroke="#ff0000" stroke-width="1.3" fill="none"/>
<polygon points="699.8,427.5 700.7,423.0 701.9,425.1 701.1,429.6" fill="#5a5a52"/>
<polygon points="835.9,373.6 837.1,358.5 839.1,369.0 837.9,383.8" fill="#e4e4ec"/>
<polygon points="691.2,427.5 699.8,427.5 701.1,429.6 692.5,429.5" fill="#5a5a52"/>
<polygon points="691.2,427.5 699.8,427.5 700.7,423.0 692.1,422.9" fill="#8d8d82"/>
<polygon points="832.9,373.6 835.9,373.6 837.1,358.5 834.2,358.5" fill="#ffffff"/>
<path d="M832.9 373.6L834.2 358.5" stroke="#ff0000" stroke-width="1.3" fill="none"/>
<path d="M835.9 373.6L837.1 358.5" stroke="#ff0000" stroke-width="1.3" fill="none"/>
<polygon points="921.9,360.9 937.8,361.0 937.3,370.3 921.7,370.2" fill="#25262c"/>
<polygon points="921.9,360.1 937.8,360.2 937.8,361.3 921.9,361.2" fill="#ffffff"/>
<polygon points="921.9,360.9 937.8,361.0 937.7,359.6 921.9,359.5" fill="#33343c"/>
<polygon points="921.9,360.1 937.8,360.2 937.8,358.1 921.9,358.0" fill="#ffffff"/>
<polygon points="901.0,360.8 916.9,360.9 916.8,370.2 901.3,370.1" fill="#25262c"/>
<polygon points="900.9,359.9 916.9,360.0 916.9,361.2 901.0,361.1" fill="#ffffff"/>
<polygon points="901.0,360.8 916.9,360.9 916.9,359.5 901.0,359.4" fill="#33343c"/>
<polygon points="900.9,359.9 916.9,360.0 916.9,358.0 901.0,357.9" fill="#ffffff"/>
<polygon points="916.9,360.0 921.9,360.1 921.7,370.5 916.8,370.5" fill="#ffffff"/>
<polygon points="916.9,360.0 921.9,360.1 921.9,358.0 916.9,358.0" fill="#ffffff"/>
<path d="M875.0 359.8L977.2 360.4" stroke="#ff0000" stroke-width="1.3" fill="none"/>
<path d="M875.1 357.7L977.1 358.3" stroke="#ff0000" stroke-width="1.3" fill="none"/>
<polygon points="1102.4,414.5 1100.8,403.9 1099.3,406.9 1100.9,417.4" fill="#3a3030"/>
<polygon points="1102.4,414.5 1108.0,414.5 1106.3,403.9 1100.8,403.9" fill="#8b5a48"/>
<polygon points="711.3,421.9 711.9,418.5 713.5,421.2 712.9,424.6" fill="#141414"/>
<polygon points="704.8,421.8 711.3,421.9 712.9,424.6 706.3,424.5" fill="#141414"/>
<polygon points="704.8,421.8 711.3,421.9 711.9,418.5 705.4,418.4" fill="#141414"/>
<polygon points="787.4,388.8 789.3,373.3 792.5,383.5 790.7,398.8" fill="#e4e4ec"/>
<polygon points="784.4,388.8 787.4,388.8 789.3,373.3 786.3,373.3" fill="#ffffff"/>
<path d="M784.4 388.8L786.3 373.3" stroke="#ff0000" stroke-width="1.3" fill="none"/>
<path d="M787.4 388.8L789.3 373.3" stroke="#ff0000" stroke-width="1.3" fill="none"/>
<polygon points="697.6,430.9 698.3,427.5 699.9,430.1 699.3,433.6" fill="#141414"/>
<polygon points="691.0,430.9 697.6,430.9 699.3,433.6 692.7,433.5" fill="#141414"/>
<polygon points="691.0,430.9 697.6,430.9 698.3,427.5 691.7,427.4" fill="#141414"/>
<polygon points="857.1,373.7 858.1,358.6 859.5,369.1 858.6,384.0" fill="#e4e4ec"/>
<polygon points="854.2,373.7 857.1,373.7 858.1,358.6 855.1,358.6" fill="#ffffff"/>
<path d="M854.2 373.7L855.1 358.6" stroke="#ff0000" stroke-width="1.3" fill="none"/>
<path d="M857.1 373.7L858.1 358.6" stroke="#ff0000" stroke-width="1.3" fill="none"/>
<polygon points="1053.9,391.6 1052.3,377.2 1048.8,387.4 1050.4,401.5" fill="#f3b5aa"/>
<polygon points="1053.9,391.6 1057.0,391.6 1055.3,377.2 1052.3,377.2" fill="#ffffff"/>
<path d="M1053.9 391.6L1052.3 377.2" stroke="#ff0000" stroke-width="1.3" fill="none"/>
<path d="M1057.0 391.6L1055.3 377.2" stroke="#ff0000" stroke-width="1.3" fill="none"/>
<polygon points="753.4,389.8 777.1,390.0 780.7,400.0 757.6,399.8" fill="#ffffff"/>
<polygon points="753.4,389.8 777.1,390.0 777.4,387.4 753.8,387.3" fill="#ffffff"/>
<path d="M753.4 389.8L777.1 390.0" stroke="#ff0000" stroke-width="1.3" fill="none"/>
<path d="M753.8 387.3L777.4 387.4" stroke="#ff0000" stroke-width="1.3" fill="none"/>
<polygon points="677.3,447.2 679.6,436.0 681.6,438.8 679.3,450.0" fill="#3a3030"/>
<polygon points="671.5,447.2 677.3,447.2 679.6,436.0 673.9,436.0" fill="#8b5a48"/>
<polygon points="1004.3,375.9 1028.1,376.0 1025.3,386.2 1002.1,386.1" fill="#ffffff"/>
<polygon points="1004.3,375.9 1028.1,376.0 1027.9,373.5 1004.1,373.4" fill="#ffffff"/>
<path d="M1004.3 375.9L1028.1 376.0" stroke="#ff0000" stroke-width="1.3" fill="none"/>
<path d="M1004.1 373.4L1027.9 373.5" stroke="#ff0000" stroke-width="1.3" fill="none"/>
<polygon points="811.7,374.7 834.3,374.8 836.4,385.1 814.3,384.9" fill="#ffffff"/>
<polygon points="811.7,374.7 834.3,374.8 834.5,372.3 811.9,372.2" fill="#ffffff"/>
<path d="M811.7 374.7L834.3 374.8" stroke="#ff0000" stroke-width="1.3" fill="none"/>
<path d="M811.9 372.2L834.5 372.3" stroke="#ff0000" stroke-width="1.3" fill="none"/>
<polygon points="1063.7,404.2 1094.4,404.4 1093.0,407.2 1062.6,407.0" fill="#141414"/>
<polygon points="1063.7,404.2 1094.4,404.4 1093.9,401.5 1063.3,401.3" fill="#141414"/>
<polygon points="874.1,373.8 874.8,358.7 875.8,369.2 875.2,384.1" fill="#e4e4ec"/>
<polygon points="871.1,373.8 874.1,373.8 874.8,358.7 871.9,358.7" fill="#ffffff"/>
<polygon points="711.8,427.6 712.6,423.1 713.8,425.1 713.0,429.7" fill="#5a5a52"/>
<polygon points="991.8,381.5 996.8,381.6 996.2,384.5 991.2,384.4" fill="#c9a060"/>
<polygon points="703.1,427.6 711.8,427.6 713.0,429.7 704.4,429.6" fill="#5a5a52"/>
<polygon points="991.8,381.5 996.8,381.6 996.4,376.0 991.4,375.9" fill="#f2f0e8"/>
<polygon points="703.1,427.6 711.8,427.6 712.6,423.1 704.0,423.0" fill="#8d8d82"/>
<path d="M871.1 373.8L871.9 358.7" stroke="#ff0000" stroke-width="1.3" fill="none"/>
<path d="M874.1 373.8L874.8 358.7" stroke="#ff0000" stroke-width="1.3" fill="none"/>
<path d="M679.6 464.8L693.9 394.8" stroke="#a9a9a9" stroke-width="2.4" fill="none"/>
<polygon points="955.2,374.7 954.8,359.2 953.8,369.7 954.2,384.9" fill="#dfe0ea"/>
<polygon points="955.2,374.7 958.2,374.7 957.7,359.2 954.8,359.2" fill="#ffffff"/>
<path d="M955.2 374.7L954.8 359.2" stroke="#ff0000" stroke-width="1.3" fill="none"/>
<path d="M958.2 374.7L957.7 359.2" stroke="#ff0000" stroke-width="1.3" fill="none"/>
<polygon points="698.0,436.7 698.9,432.1 700.2,434.1 699.3,438.7" fill="#5a5a52"/>
<polygon points="689.3,436.7 698.0,436.7 699.3,438.7 690.6,438.7" fill="#5a5a52"/>
<polygon points="689.3,436.7 698.0,436.7 698.9,432.1 690.2,432.1" fill="#8d8d82"/>
<polygon points="984.3,381.5 989.3,381.5 988.7,384.4 983.8,384.4" fill="#c9a060"/>
<polygon points="984.3,381.5 989.3,381.5 988.9,375.9 984.0,375.9" fill="#f2f0e8"/>
<polygon points="723.2,421.9 723.8,418.5 725.3,421.3 724.7,424.6" fill="#141414"/>
<polygon points="716.7,421.9 723.2,421.9 724.7,424.6 718.2,424.6" fill="#141414"/>
<polygon points="716.7,421.9 723.2,421.9 723.8,418.5 717.3,418.5" fill="#141414"/>
<polygon points="976.8,381.4 981.8,381.5 981.3,384.4 976.3,384.4" fill="#c9a060"/>
<polygon points="976.8,381.4 981.8,381.5 981.5,375.9 976.5,375.8" fill="#f2f0e8"/>
<polygon points="1106.9,414.4 1105.8,407.8 1100.9,417.4 1101.9,424.0" fill="#f8a17e"/>
<polygon points="1106.9,414.4 1112.6,414.5 1107.5,424.0 1101.9,424.0" fill="#f8a17e"/>
<polygon points="1106.9,414.4 1112.6,414.5 1111.5,407.8 1105.8,407.8" fill="#f7c0b0"/>
<polygon points="1106.9,414.4 1112.6,414.5 1111.5,407.8 1105.8,407.8" fill="none" stroke="#ff0000" stroke-width="1"/>
<polygon points="969.2,381.4 974.3,381.4 973.8,384.3 968.9,384.3" fill="#c9a060"/>
<polygon points="969.2,381.4 974.3,381.4 974.0,375.8 969.0,375.8" fill="#f2f0e8"/>
<polygon points="709.6,431.0 710.3,427.6 711.8,430.2 711.2,433.6" fill="#141414"/>
<polygon points="703.0,430.9 709.6,431.0 711.2,433.6 704.6,433.6" fill="#141414"/>
<polygon points="703.0,430.9 709.6,431.0 710.3,427.6 703.7,427.5" fill="#141414"/>
<polygon points="811.0,388.9 812.6,373.4 815.2,383.7 813.7,398.9" fill="#e4e4ec"/>
<polygon points="808.0,388.9 811.0,388.9 812.6,373.4 809.6,373.4" fill="#ffffff"/>
<path d="M808.0 388.9L809.6 373.4" stroke="#ff0000" stroke-width="1.3" fill="none"/>
<path d="M811.0 388.9L812.6 373.4" stroke="#ff0000" stroke-width="1.3" fill="none"/>
<polygon points="726.2,419.4 728.8,404.3 733.6,414.0 731.2,428.9" fill="#f3b5aa"/>
<polygon points="723.1,419.4 726.2,419.4 728.8,404.3 725.7,404.3" fill="#ffffff"/>
<path d="M723.1 419.4L725.7 404.3" stroke="#ff0000" stroke-width="1.3" fill="none"/>
<path d="M726.2 419.4L728.8 404.3" stroke="#ff0000" stroke-width="1.3" fill="none"/>
<polygon points="695.8,440.2 696.5,436.7 698.1,439.3 697.5,442.8" fill="#141414"/>
<polygon points="689.1,440.1 695.8,440.2 697.5,442.8 690.9,442.8" fill="#141414"/>
<polygon points="689.1,440.1 695.8,440.2 696.5,436.7 689.8,436.6" fill="#141414"/>
<polygon points="671.2,448.0 672.8,440.9 679.3,450.0 677.8,456.9" fill="#f8a17e"/>
<polygon points="665.4,447.9 671.2,448.0 677.8,456.9 672.1,456.9" fill="#f8a17e"/>
<polygon points="665.4,447.9 671.2,448.0 672.8,440.9 666.9,440.9" fill="#f7c0b0"/>
<polygon points="665.4,447.9 671.2,448.0 672.8,440.9 666.9,440.9" fill="none" stroke="#ff0000" stroke-width="1"/>
<polygon points="723.7,427.7 724.5,423.1 725.6,425.2 724.9,429.7" fill="#5a5a52"/>
<polygon points="715.1,427.6 723.7,427.7 724.9,429.7 716.3,429.7" fill="#5a5a52"/>
<polygon points="715.1,427.6 723.7,427.7 724.5,423.1 715.9,423.1" fill="#8d8d82"/>
<polygon points="777.1,390.0 800.8,390.1 803.7,400.1 780.7,400.0" fill="#ffffff"/>
<polygon points="1064.9,415.2 1063.7,405.2 1062.7,407.8 1063.9,417.7" fill="#1a1a1a"/>
<polygon points="777.1,390.0 800.8,390.1 801.1,387.6 777.4,387.4" fill="#ffffff"/>
<polygon points="1064.9,415.2 1095.8,415.4 1094.6,417.9 1063.9,417.7" fill="#1a1a1a"/>
<polygon points="1064.9,415.2 1095.8,415.4 1094.4,405.4 1063.7,405.2" fill="#8d8d82"/>
<path d="M777.1 390.0L800.8 390.1" stroke="#ff0000" stroke-width="1.3" fill="none"/>
<path d="M777.4 387.4L801.1 387.6" stroke="#ff0000" stroke-width="1.3" fill="none"/>
<polygon points="710.1,436.8 710.9,432.2 712.1,434.2 711.3,438.8" fill="#5a5a52"/>
<polygon points="701.4,436.8 710.1,436.8 711.3,438.8 702.6,438.8" fill="#5a5a52"/>
<polygon points="701.4,436.8 710.1,436.8 710.9,432.2 702.2,432.1" fill="#8d8d82"/>
<polygon points="696.2,446.1 697.1,441.4 698.4,443.4 697.5,448.1" fill="#5a5a52"/>
<polygon points="687.4,446.0 696.2,446.1 697.5,448.1 688.8,448.0" fill="#5a5a52"/>
<polygon points="687.4,446.0 696.2,446.1 697.1,441.4 688.4,441.3" fill="#8d8d82"/>
<ellipse cx="781.0" cy="401.6" rx="5.500" ry="6" fill="#1c4a1c"/><rect x="779.0" y="405.6" width="4" height="3" fill="#7a4a2a"/>
<rect x="777.5" y="397.1" width="4" height="3" fill="#f01010"/><rect x="781.5" y="399.6" width="3.500" height="2.500" fill="#e82010"/><rect x="779.0" y="402.1" width="3" height="2" fill="#d02010"/><rect x="776.5" y="401.1" width="2" height="2" fill="#0a300a"/>
<polygon points="721.6,431.1 722.3,427.6 723.7,430.3 723.1,433.7" fill="#141414"/>
<polygon points="715.0,431.0 721.6,431.1 723.1,433.7 716.6,433.7" fill="#141414"/>
<polygon points="715.0,431.0 721.6,431.1 722.3,427.6 715.7,427.6" fill="#141414"/>
<polygon points="992.3,390.8 997.4,390.8 996.8,393.7 991.7,393.6" fill="#c9a060"/>
<polygon points="992.3,390.8 997.4,390.8 997.0,385.1 992.0,385.1" fill="#f2f0e8"/>
<polygon points="834.7,389.1 835.9,373.6 837.9,383.8 836.7,399.1" fill="#e4e4ec"/>
<polygon points="831.7,389.1 834.7,389.1 835.9,373.6 832.9,373.6" fill="#ffffff"/>
<path d="M831.7 389.1L832.9 373.6" stroke="#ff0000" stroke-width="1.3" fill="none"/>
<path d="M834.7 389.1L835.9 373.6" stroke="#ff0000" stroke-width="1.3" fill="none"/>
<polygon points="1003.9,390.9 1002.8,375.0 1000.6,385.2 1001.6,400.8" fill="#dfe0ea"/>
<polygon points="1003.9,390.9 1006.9,390.9 1005.7,375.0 1002.8,375.0" fill="#ffffff"/>
<path d="M1003.9 390.9L1002.8 375.0" stroke="#ff0000" stroke-width="1.3" fill="none"/>
<path d="M1006.9 390.9L1005.7 375.0" stroke="#ff0000" stroke-width="1.3" fill="none"/>
<polygon points="1105.1,432.0 1103.4,421.1 1101.9,424.0 1103.5,434.9" fill="#3a3030"/>
<polygon points="1105.1,432.0 1110.8,432.0 1109.0,421.1 1103.4,421.1" fill="#8b5a48"/>
<polygon points="984.7,390.7 989.8,390.7 989.2,393.6 984.2,393.6" fill="#c9a060"/>
<polygon points="984.7,390.7 989.8,390.7 989.5,385.1 984.4,385.0" fill="#f2f0e8"/>
<polygon points="707.9,440.3 708.6,436.8 710.1,439.4 709.5,442.9" fill="#141414"/>
<polygon points="701.2,440.2 707.9,440.3 709.5,442.9 702.9,442.8" fill="#141414"/>
<polygon points="701.2,440.2 707.9,440.3 708.6,436.8 701.9,436.7" fill="#141414"/>
<polygon points="1055.6,406.4 1053.9,391.6 1050.4,401.5 1052.0,416.1" fill="#f3b5aa"/>
<polygon points="1055.6,406.4 1058.7,406.4 1057.0,391.6 1053.9,391.6" fill="#ffffff"/>
<path d="M1055.6 406.4L1053.9 391.6" stroke="#ff0000" stroke-width="1.3" fill="none"/>
<path d="M1058.7 406.4L1057.0 391.6" stroke="#ff0000" stroke-width="1.3" fill="none"/>
<polygon points="673.4,465.7 675.8,454.2 677.8,456.9 675.4,468.4" fill="#3a3030"/>
<polygon points="667.6,465.7 673.4,465.7 675.8,454.2 670.0,454.1" fill="#8b5a48"/>
<polygon points="693.9,449.6 694.6,446.1 696.3,448.6 695.7,452.2" fill="#141414"/>
<polygon points="687.2,449.6 693.9,449.6 695.7,452.2 689.0,452.1" fill="#141414"/>
<polygon points="687.2,449.6 693.9,449.6 694.6,446.1 687.9,446.0" fill="#141414"/>
<polygon points="977.2,390.7 982.2,390.7 981.7,393.6 976.7,393.5" fill="#c9a060"/>
<polygon points="977.2,390.7 982.2,390.7 981.9,385.0 976.9,385.0" fill="#f2f0e8"/>
<polygon points="1092.7,425.9 1092.2,422.4 1090.8,425.1 1091.3,428.5" fill="#141414"/>
<polygon points="1092.7,425.9 1099.9,425.9 1098.5,428.6 1091.3,428.5" fill="#141414"/>
<polygon points="1092.7,425.9 1099.9,425.9 1099.4,422.5 1092.2,422.4" fill="#141414"/>
<polygon points="800.8,390.1 824.4,390.3 826.8,400.3 803.7,400.1" fill="#ffffff"/>
<polygon points="800.8,390.1 824.4,390.3 824.7,387.7 801.1,387.6" fill="#ffffff"/>
<path d="M800.8 390.1L824.4 390.3" stroke="#ff0000" stroke-width="1.3" fill="none"/>
<path d="M801.1 387.6L824.7 387.7" stroke="#ff0000" stroke-width="1.3" fill="none"/>
<polygon points="1016.0,392.2 1035.7,392.4 1032.6,402.3 1013.5,402.2" fill="#ffffff"/>
<polygon points="1016.0,392.2 1035.7,392.4 1035.4,389.8 1015.8,389.7" fill="#ffffff"/>
<path d="M1016.0 392.2L1035.7 392.4" stroke="#ff0000" stroke-width="1.3" fill="none"/>
<path d="M1015.8 389.7L1035.4 389.8" stroke="#ff0000" stroke-width="1.3" fill="none"/>
<polygon points="722.1,436.9 722.9,432.3 724.1,434.3 723.3,438.9" fill="#5a5a52"/>
<polygon points="713.4,436.8 722.1,436.9 723.3,438.9 714.6,438.8" fill="#5a5a52"/>
<polygon points="713.4,436.8 722.1,436.9 722.9,432.3 714.3,432.2" fill="#8d8d82"/>
<polygon points="969.6,390.6 974.7,390.7 974.2,393.5 969.2,393.5" fill="#c9a060"/>
<polygon points="969.6,390.6 974.7,390.7 974.4,385.0 969.4,384.9" fill="#f2f0e8"/>
<polygon points="856.2,389.2 857.1,373.7 858.6,384.0 857.7,399.2" fill="#e4e4ec"/>
<polygon points="853.2,389.2 856.2,389.2 857.1,373.7 854.2,373.7" fill="#ffffff"/>
<path d="M853.2 389.2L854.2 373.7" stroke="#ff0000" stroke-width="1.3" fill="none"/>
<path d="M856.2 389.2L857.1 373.7" stroke="#ff0000" stroke-width="1.3" fill="none"/>
<polygon points="708.4,446.2 709.2,441.5 710.4,443.5 709.6,448.1" fill="#5a5a52"/>
<polygon points="699.6,446.1 708.4,446.2 709.6,448.1 700.9,448.1" fill="#5a5a52"/>
<polygon points="699.6,446.1 708.4,446.2 709.2,441.5 700.5,441.4" fill="#8d8d82"/>
<ellipse cx="794.8" cy="403.5" rx="5.500" ry="6" fill="#1c4a1c"/><rect x="792.8" y="407.5" width="4" height="3" fill="#7a4a2a"/>
<rect x="791.3" y="399.0" width="4" height="3" fill="#f01010"/><rect x="795.3" y="401.5" width="3.500" height="2.500" fill="#e82010"/><rect x="792.8" y="404.0" width="3" height="2" fill="#d02010"/><rect x="790.3" y="403.0" width="2" height="2" fill="#0a300a"/>
<polygon points="904.5,390.4 925.5,390.6 925.4,393.2 904.6,393.1" fill="#166a20"/>
<polygon points="904.5,390.4 925.5,390.6 925.5,381.7 904.6,381.6" fill="#1f8a2c"/>
<polygon points="694.4,455.6 695.3,450.8 696.6,452.8 695.7,457.5" fill="#5a5a52"/>
<polygon points="685.5,455.5 694.4,455.6 695.7,457.5 686.9,457.5" fill="#5a5a52"/>
<polygon points="685.5,455.5 694.4,455.6 695.3,450.8 686.5,450.7" fill="#8d8d82"/>
<polygon points="873.4,389.3 874.1,373.8 875.2,384.1 874.5,399.3" fill="#e4e4ec"/>
<polygon points="870.4,389.3 873.4,389.3 874.1,373.8 871.1,373.8" fill="#ffffff"/>
<path d="M870.4 389.3L871.1 373.8" stroke="#ff0000" stroke-width="1.3" fill="none"/>
<path d="M873.4 389.3L874.1 373.8" stroke="#ff0000" stroke-width="1.3" fill="none"/>
<polygon points="1091.9,431.6 1091.3,427.0 1090.3,429.1 1090.9,433.7" fill="#5a5a52"/>
<polygon points="1091.9,431.6 1101.5,431.7 1100.4,433.7 1090.9,433.7" fill="#5a5a52"/>
<polygon points="1091.9,431.6 1101.5,431.7 1100.8,427.1 1091.3,427.0" fill="#8d8d82"/>
<polygon points="720.0,440.3 720.6,436.9 722.1,439.5 721.5,443.0" fill="#141414"/>
<polygon points="713.4,440.3 720.0,440.3 721.5,443.0 714.9,442.9" fill="#141414"/>
<polygon points="713.4,440.3 720.0,440.3 720.6,436.9 714.0,436.8" fill="#141414"/>
<polygon points="723.5,435.0 726.2,419.4 731.2,428.9 728.6,444.1" fill="#f3b5aa"/>
<polygon points="720.4,434.9 723.5,435.0 726.2,419.4 723.1,419.4" fill="#ffffff"/>
<polygon points="955.6,390.6 955.2,374.7 954.2,384.9 954.6,400.5" fill="#dfe0ea"/>
<polygon points="955.6,390.6 958.6,390.6 958.2,374.7 955.2,374.7" fill="#ffffff"/>
<path d="M720.4 434.9L723.1 419.4" stroke="#ff0000" stroke-width="1.3" fill="none"/>
<path d="M723.5 435.0L726.2 419.4" stroke="#ff0000" stroke-width="1.3" fill="none"/>
<path d="M955.6 390.6L955.2 374.7" stroke="#ff0000" stroke-width="1.3" fill="none"/>
<path d="M958.6 390.6L958.2 374.7" stroke="#ff0000" stroke-width="1.3" fill="none"/>
<polygon points="1109.7,432.4 1108.6,425.5 1103.5,434.9 1104.6,441.6" fill="#f8a17e"/>
<polygon points="1109.7,432.4 1115.5,432.4 1110.2,441.6 1104.6,441.6" fill="#f8a17e"/>
<polygon points="1109.7,432.4 1115.5,432.4 1114.4,425.5 1108.6,425.5" fill="#f7c0b0"/>
<polygon points="1109.7,432.4 1115.5,432.4 1114.4,425.5 1108.6,425.5" fill="none" stroke="#ff0000" stroke-width="1"/>
<polygon points="724.2,422.1 749.9,422.2 754.3,431.6 729.2,431.5" fill="#ffffff"/>
<polygon points="724.2,422.1 749.9,422.2 750.3,419.5 724.6,419.4" fill="#ffffff"/>
<path d="M724.2 422.1L749.9 422.2" stroke="#ff0000" stroke-width="1.3" fill="none"/>
<path d="M724.6 419.4L750.3 419.5" stroke="#ff0000" stroke-width="1.3" fill="none"/>
<polygon points="996.4,392.1 1016.0,392.2 1013.5,402.2 994.3,402.1" fill="#ffffff"/>
<polygon points="996.4,392.1 1016.0,392.2 1015.8,389.7 996.2,389.5" fill="#ffffff"/>
<path d="M996.4 392.1L1016.0 392.2" stroke="#ff0000" stroke-width="1.3" fill="none"/>
<path d="M996.2 389.5L1015.8 389.7" stroke="#ff0000" stroke-width="1.3" fill="none"/>
<polygon points="824.4,390.3 848.1,390.4 849.9,400.4 826.8,400.3" fill="#ffffff"/>
<polygon points="824.4,390.3 848.1,390.4 848.3,387.9 824.7,387.7" fill="#ffffff"/>
<path d="M824.4 390.3L848.1 390.4" stroke="#ff0000" stroke-width="1.3" fill="none"/>
<path d="M824.7 387.7L848.3 387.9" stroke="#ff0000" stroke-width="1.3" fill="none"/>
<polygon points="1078.9,425.8 1078.5,422.4 1077.2,425.1 1077.7,428.4" fill="#141414"/>
<polygon points="1078.9,425.8 1086.2,425.8 1084.9,428.5 1077.7,428.4" fill="#141414"/>
<polygon points="1078.9,425.8 1086.2,425.8 1085.7,422.4 1078.5,422.4" fill="#141414"/>
<polygon points="706.2,449.7 706.8,446.1 708.4,448.7 707.8,452.2" fill="#141414"/>
<polygon points="699.5,449.6 706.2,449.7 707.8,452.2 701.1,452.2" fill="#141414"/>
<polygon points="699.5,449.6 706.2,449.7 706.8,446.1 700.1,446.1" fill="#141414"/>
<polygon points="667.2,467.0 668.7,459.7 675.4,468.4 674.0,475.5" fill="#f8a17e"/>
<polygon points="661.2,466.9 667.2,467.0 674.0,475.5 668.2,475.5" fill="#f8a17e"/>
<polygon points="661.2,466.9 667.2,467.0 668.7,459.7 662.8,459.6" fill="#f7c0b0"/>
<polygon points="661.2,466.9 667.2,467.0 668.7,459.7 662.8,459.6" fill="none" stroke="#ff0000" stroke-width="1"/>
<polygon points="692.1,459.2 692.8,455.6 694.5,458.1 693.8,461.7" fill="#141414"/>
<polygon points="685.3,459.1 692.1,459.2 693.8,461.7 687.1,461.6" fill="#141414"/>
<polygon points="685.3,459.1 692.1,459.2 692.8,455.6 686.0,455.5" fill="#141414"/>
<polygon points="1093.9,434.3 1093.4,430.8 1092.0,433.5 1092.5,436.9" fill="#141414"/>
<polygon points="1093.9,434.3 1101.2,434.3 1099.8,437.0 1092.5,436.9" fill="#141414"/>
<polygon points="1093.9,434.3 1101.2,434.3 1100.7,430.9 1093.4,430.8" fill="#141414"/>
<polygon points="823.9,405.9 824.9,394.9 826.0,399.7 825.0,410.6" fill="#e8e8e8"/>
<polygon points="811.9,405.8 823.9,405.9 825.0,410.6 813.2,410.5" fill="#f2f2f2"/>
<polygon points="811.9,405.8 823.9,405.9 824.9,394.9 813.0,394.8" fill="#fafafa"/>
<polygon points="720.5,446.2 721.3,441.5 722.5,443.5 721.7,448.2" fill="#5a5a52"/>
<polygon points="711.7,446.2 720.5,446.2 721.7,448.2 712.9,448.2" fill="#5a5a52"/>
<polygon points="711.7,446.2 720.5,446.2 721.3,441.5 712.6,441.5" fill="#8d8d82"/>
<polygon points="976.8,392.0 996.4,392.1 994.3,402.1 975.2,401.9" fill="#ffffff"/>
<polygon points="976.8,392.0 996.4,392.1 996.2,389.5 976.7,389.4" fill="#ffffff"/>
<path d="M976.8 392.0L996.4 392.1" stroke="#ff0000" stroke-width="1.3" fill="none"/>
<path d="M976.7 389.4L996.2 389.5" stroke="#ff0000" stroke-width="1.3" fill="none"/>
<polygon points="706.6,455.7 707.5,450.9 708.7,452.8 707.9,457.6" fill="#5a5a52"/>
<polygon points="697.8,455.6 706.6,455.7 707.9,457.6 699.1,457.5" fill="#5a5a52"/>
<polygon points="697.8,455.6 706.6,455.7 707.5,450.9 698.7,450.8" fill="#8d8d82"/>
<polygon points="1078.2,431.5 1077.6,427.0 1076.6,429.0 1077.2,433.6" fill="#5a5a52"/>
<polygon points="1078.2,431.5 1087.7,431.6 1086.7,433.6 1077.2,433.6" fill="#5a5a52"/>
<polygon points="1078.2,431.5 1087.7,431.6 1087.1,427.0 1077.6,427.0" fill="#8d8d82"/>
<polygon points="848.1,390.4 871.8,390.6 872.9,400.6 849.9,400.4" fill="#ffffff"/>
<polygon points="848.1,390.4 871.8,390.6 871.9,388.0 848.3,387.9" fill="#ffffff"/>
<path d="M848.1 390.4L871.8 390.6" stroke="#ff0000" stroke-width="1.3" fill="none"/>
<path d="M848.3 387.9L871.9 388.0" stroke="#ff0000" stroke-width="1.3" fill="none"/>
<polygon points="692.5,465.2 693.4,460.4 694.8,462.3 693.8,467.1" fill="#5a5a52"/>
<polygon points="683.6,465.2 692.5,465.2 693.8,467.1 685.0,467.1" fill="#5a5a52"/>
<polygon points="683.6,465.2 692.5,465.2 693.4,460.4 684.5,460.3" fill="#8d8d82"/>
<polygon points="736.1,424.0 755.9,424.2 758.5,430.0 739.0,429.9" fill="#34353f"/>
<polygon points="738.3,426.0 755.4,426.1 756.8,429.2 739.9,429.1" fill="#a9aec8"/>
<polygon points="739.0,429.9 758.5,430.0 759.1,431.3 739.7,431.1" fill="#e0a79c"/>
<polygon points="1093.1,440.1 1092.5,435.5 1091.4,437.5 1092.1,442.1" fill="#5a5a52"/>
<polygon points="1093.1,440.1 1102.8,440.2 1101.7,442.2 1092.1,442.1" fill="#5a5a52"/>
<polygon points="1093.1,440.1 1102.8,440.2 1102.1,435.5 1092.5,435.5" fill="#8d8d82"/>
<polygon points="1065.2,425.7 1064.8,422.3 1063.7,425.0 1064.1,428.4" fill="#141414"/>
<polygon points="1065.2,425.7 1072.4,425.7 1071.3,428.4 1064.1,428.4" fill="#141414"/>
<polygon points="1065.2,425.7 1072.4,425.7 1072.0,422.3 1064.8,422.3" fill="#141414"/>
<polygon points="745.1,424.1 746.9,424.1 749.6,430.0 747.9,430.0" fill="#22232a"/>
<polygon points="718.4,449.8 719.0,446.2 720.5,448.8 719.9,452.3" fill="#141414"/>
<polygon points="711.7,449.7 718.4,449.8 719.9,452.3 713.3,452.3" fill="#141414"/>
<polygon points="711.7,449.7 718.4,449.8 719.0,446.2 712.3,446.2" fill="#141414"/>
<polygon points="957.1,391.9 976.8,392.0 975.2,401.9 956.1,401.8" fill="#ffffff"/>
<polygon points="957.1,391.9 976.8,392.0 976.7,389.4 957.1,389.3" fill="#ffffff"/>
<path d="M957.1 391.9L976.8 392.0" stroke="#ff0000" stroke-width="1.3" fill="none"/>
<path d="M957.1 389.3L976.7 389.4" stroke="#ff0000" stroke-width="1.3" fill="none"/>
<polygon points="1107.9,450.1 1106.1,438.8 1104.6,441.6 1106.3,452.8" fill="#3a3030"/>
<polygon points="1107.9,450.1 1113.6,450.1 1111.8,438.8 1106.1,438.8" fill="#8b5a48"/>
<polygon points="1057.3,421.6 1055.6,406.4 1052.0,416.1 1053.6,431.0" fill="#f3b5aa"/>
<polygon points="704.4,459.3 705.1,455.7 706.7,458.2 706.0,461.8" fill="#141414"/>
<polygon points="1057.3,421.6 1060.4,421.6 1058.7,406.4 1055.6,406.4" fill="#ffffff"/>
<polygon points="697.6,459.2 704.4,459.3 706.0,461.8 699.3,461.7" fill="#141414"/>
<polygon points="697.6,459.2 704.4,459.3 705.1,455.7 698.3,455.6" fill="#141414"/>
<path d="M1057.3 421.6L1055.6 406.4" stroke="#ff0000" stroke-width="1.3" fill="none"/>
<path d="M1060.4 421.6L1058.7 406.4" stroke="#ff0000" stroke-width="1.3" fill="none"/>
<polygon points="1080.0,434.2 1079.6,430.7 1078.3,433.4 1078.8,436.8" fill="#141414"/>
<polygon points="1080.0,434.2 1087.3,434.2 1086.0,436.9 1078.8,436.8" fill="#141414"/>
<polygon points="1080.0,434.2 1087.3,434.2 1086.9,430.8 1079.6,430.7" fill="#141414"/>
<polygon points="878.5,402.6 887.0,402.6 887.4,407.4 879.0,407.3" fill="#f0f0f0"/>
<polygon points="878.5,402.6 887.0,402.6 887.5,389.9 879.0,389.8" fill="#f8f8f8"/>
<polygon points="1095.1,442.8 1094.6,439.3 1093.2,441.9 1093.7,445.4" fill="#141414"/>
<polygon points="1095.1,442.8 1102.4,442.9 1101.0,445.5 1093.7,445.4" fill="#141414"/>
<polygon points="1095.1,442.8 1102.4,442.9 1101.9,439.4 1094.6,439.3" fill="#141414"/>
<polygon points="661.2,466.9 696.5,467.2 697.6,461.8 662.4,461.5" fill="#f9a88a"/>
<path d="M661.2 466.9L696.5 467.2" stroke="#ff0000" stroke-width="1.3" fill="none"/>
<path d="M662.4 461.5L697.6 461.8" stroke="#ff0000" stroke-width="1.3" fill="none"/>
<polygon points="1064.4,431.4 1063.9,426.9 1063.0,428.9 1063.5,433.5" fill="#5a5a52"/>
<polygon points="1064.4,431.4 1074.0,431.5 1073.0,433.5 1063.5,433.5" fill="#5a5a52"/>
<polygon points="1064.4,431.4 1074.0,431.5 1073.4,426.9 1063.9,426.9" fill="#8d8d82"/>
<polygon points="742.4,442.9 743.4,436.3 744.4,438.3 743.4,444.9" fill="#5a5a52"/>
<polygon points="737.1,442.9 742.4,442.9 743.4,444.9 738.2,444.9" fill="#5a5a52"/>
<polygon points="737.1,442.9 742.4,442.9 743.4,436.3 738.2,436.3" fill="#8d8d82"/>
<polygon points="934.1,402.9 939.6,402.9 939.3,407.7 933.9,407.7" fill="#f0f0f0"/>
<polygon points="934.1,402.9 939.6,402.9 939.5,390.2 934.0,390.2" fill="#f8f8f8"/>
<polygon points="749.9,422.2 775.6,422.4 779.3,431.8 754.3,431.6" fill="#ffffff"/>
<polygon points="749.9,422.2 775.6,422.4 776.0,419.7 750.3,419.5" fill="#ffffff"/>
<polygon points="718.9,455.7 719.7,451.0 720.9,452.9 720.0,457.7" fill="#5a5a52"/>
<polygon points="710.0,455.7 718.9,455.7 720.0,457.7 711.2,457.6" fill="#5a5a52"/>
<polygon points="710.0,455.7 718.9,455.7 719.7,451.0 710.9,450.9" fill="#8d8d82"/>
<path d="M749.9 422.2L775.6 422.4" stroke="#ff0000" stroke-width="1.3" fill="none"/>
<path d="M750.3 419.5L776.0 419.7" stroke="#ff0000" stroke-width="1.3" fill="none"/>
<polygon points="704.8,465.3 705.7,460.5 707.0,462.4 706.1,467.2" fill="#5a5a52"/>
<polygon points="695.9,465.2 704.8,465.3 706.1,467.2 697.2,467.1" fill="#5a5a52"/>
<polygon points="695.9,465.2 704.8,465.3 705.7,460.5 696.8,460.4" fill="#8d8d82"/>
<polygon points="1079.3,440.0 1078.7,435.4 1077.7,437.4 1078.3,442.0" fill="#5a5a52"/>
<polygon points="1079.3,440.0 1088.9,440.1 1087.9,442.1 1078.3,442.0" fill="#5a5a52"/>
<polygon points="1079.3,440.0 1088.9,440.1 1088.3,435.4 1078.7,435.4" fill="#8d8d82"/>
<polygon points="720.8,450.9 723.5,435.0 728.6,444.1 726.0,459.8" fill="#f3b5aa"/>
<polygon points="717.6,450.9 720.8,450.9 723.5,435.0 720.4,434.9" fill="#ffffff"/>
<path d="M717.6 450.9L720.4 434.9" stroke="#ff0000" stroke-width="1.3" fill="none"/>
<path d="M720.8 450.9L723.5 435.0" stroke="#ff0000" stroke-width="1.3" fill="none"/>
<polygon points="746.3,441.5 747.1,436.5 748.4,439.2 747.7,444.1" fill="#141414"/>
<polygon points="742.8,441.5 746.3,441.5 747.7,444.1 744.2,444.1" fill="#141414"/>
<polygon points="742.8,441.5 746.3,441.5 747.1,436.5 743.6,436.5" fill="#141414"/>
<polygon points="1094.4,448.7 1093.7,444.0 1092.6,446.0 1093.3,450.7" fill="#5a5a52"/>
<polygon points="1094.4,448.7 1104.1,448.8 1102.9,450.7 1093.3,450.7" fill="#5a5a52"/>
<polygon points="1094.4,448.7 1104.1,448.8 1103.4,444.1 1093.7,444.0" fill="#8d8d82"/>
<polygon points="1066.2,434.1 1065.8,430.6 1064.6,433.3 1065.1,436.7" fill="#141414"/>
<polygon points="1066.2,434.1 1073.5,434.1 1072.3,436.8 1065.1,436.7" fill="#141414"/>
<polygon points="1066.2,434.1 1073.5,434.1 1073.1,430.7 1065.8,430.6" fill="#141414"/>
<polygon points="716.7,459.4 717.3,455.7 718.9,458.3 718.3,461.9" fill="#141414"/>
<polygon points="709.9,459.3 716.7,459.4 718.3,461.9 711.6,461.8" fill="#141414"/>
<polygon points="709.9,459.3 716.7,459.4 717.3,455.7 710.6,455.7" fill="#141414"/>
<polygon points="1112.6,450.9 1111.5,443.8 1106.3,452.8 1107.3,459.8" fill="#f8a17e"/>
<polygon points="1112.6,450.9 1118.5,450.9 1113.1,459.8 1107.3,459.8" fill="#f8a17e"/>
<polygon points="1112.6,450.9 1118.5,450.9 1117.4,443.8 1111.5,443.8" fill="#f7c0b0"/>
<polygon points="1112.6,450.9 1118.5,450.9 1117.4,443.8 1111.5,443.8" fill="none" stroke="#ff0000" stroke-width="1"/>
<polygon points="752.6,443.0 753.6,436.4 754.5,438.4 753.6,445.0" fill="#5a5a52"/>
<polygon points="747.3,443.0 752.6,443.0 753.6,445.0 748.3,444.9" fill="#5a5a52"/>
<polygon points="747.3,443.0 752.6,443.0 753.6,436.4 748.3,436.4" fill="#8d8d82"/>
<polygon points="1081.2,442.7 1080.7,439.2 1079.4,441.8 1079.9,445.3" fill="#141414"/>
<polygon points="1081.2,442.7 1088.5,442.8 1087.2,445.4 1079.9,445.3" fill="#141414"/>
<polygon points="1081.2,442.7 1088.5,442.8 1088.0,439.3 1080.7,439.2" fill="#141414"/>
<ellipse cx="879.9" cy="404.1" rx="5.500" ry="6" fill="#1c4a1c"/><rect x="877.9" y="408.1" width="4" height="3" fill="#7a4a2a"/>
<rect x="876.4" y="399.6" width="4" height="3" fill="#f01010"/><rect x="880.4" y="402.1" width="3.500" height="2.500" fill="#e82010"/><rect x="877.9" y="404.6" width="3" height="2" fill="#d02010"/><rect x="875.4" y="403.6" width="2" height="2" fill="#0a300a"/>
<polygon points="1096.3,451.5 1095.8,447.9 1094.4,450.5 1094.9,454.0" fill="#141414"/>
<polygon points="1096.3,451.5 1103.7,451.5 1102.3,454.1 1094.9,454.0" fill="#141414"/>
<polygon points="1096.3,451.5 1103.7,451.5 1103.2,448.0 1095.8,447.9" fill="#141414"/>
<polygon points="756.6,441.6 757.3,436.6 758.5,439.2 757.8,444.2" fill="#141414"/>
<polygon points="753.1,441.6 756.6,441.6 757.8,444.2 754.3,444.2" fill="#141414"/>
<polygon points="753.1,441.6 756.6,441.6 757.3,436.6 753.8,436.6" fill="#141414"/>
<polygon points="1065.4,439.9 1064.8,435.3 1064.0,437.3 1064.5,441.9" fill="#5a5a52"/>
<polygon points="1065.4,439.9 1075.0,440.0 1074.1,442.0 1064.5,441.9" fill="#5a5a52"/>
<polygon points="1065.4,439.9 1075.0,440.0 1074.4,435.3 1064.8,435.3" fill="#8d8d82"/>
<polygon points="717.2,465.4 718.0,460.5 719.2,462.5 718.4,467.3" fill="#5a5a52"/>
<polygon points="708.3,465.3 717.2,465.4 718.4,467.3 709.5,467.2" fill="#5a5a52"/>
<polygon points="708.3,465.3 717.2,465.4 718.0,460.5 709.1,460.5" fill="#8d8d82"/>
<polygon points="762.8,443.1 763.7,436.5 764.6,438.5 763.7,445.0" fill="#5a5a52"/>
<polygon points="757.6,443.0 762.8,443.1 763.7,445.0 758.5,445.0" fill="#5a5a52"/>
<polygon points="757.6,443.0 762.8,443.1 763.7,436.5 758.5,436.4" fill="#8d8d82"/>
<polygon points="740.7,453.7 741.7,447.0 742.8,448.9 741.7,455.6" fill="#5a5a52"/>
<polygon points="735.4,453.7 740.7,453.7 741.7,455.6 736.5,455.6" fill="#5a5a52"/>
<polygon points="735.4,453.7 740.7,453.7 741.7,447.0 736.5,446.9" fill="#8d8d82"/>
<polygon points="1080.4,448.6 1079.8,443.9 1078.8,445.9 1079.4,450.6" fill="#5a5a52"/>
<polygon points="1080.4,448.6 1090.1,448.7 1089.1,450.7 1079.4,450.6" fill="#5a5a52"/>
<polygon points="1080.4,448.6 1090.1,448.7 1089.4,444.0 1079.8,443.9" fill="#8d8d82"/>
<polygon points="775.6,422.4 801.4,422.6 804.4,432.0 779.3,431.8" fill="#ffffff"/>
<polygon points="775.6,422.4 801.4,422.6 801.7,419.9 776.0,419.7" fill="#ffffff"/>
<path d="M775.6 422.4L801.4 422.6" stroke="#ff0000" stroke-width="1.3" fill="none"/>
<path d="M776.0 419.7L801.7 419.9" stroke="#ff0000" stroke-width="1.3" fill="none"/>
<polygon points="1095.6,457.5 1094.9,452.7 1093.9,454.6 1094.5,459.4" fill="#5a5a52"/>
<polygon points="1095.6,457.5 1105.4,457.5 1104.2,459.4 1094.5,459.4" fill="#5a5a52"/>
<polygon points="1095.6,457.5 1105.4,457.5 1104.7,452.7 1094.9,452.7" fill="#8d8d82"/>
<ellipse cx="891.3" cy="407.8" rx="5.500" ry="6" fill="#1c4a1c"/><rect x="889.3" y="411.8" width="4" height="3" fill="#7a4a2a"/>
<polygon points="1033.4,424.1 1059.2,424.2 1055.4,433.6 1030.3,433.5" fill="#ffffff"/>
<polygon points="1033.4,424.1 1059.2,424.2 1058.9,421.5 1033.1,421.4" fill="#ffffff"/>
<rect x="887.8" y="403.3" width="4" height="3" fill="#f01010"/><rect x="891.8" y="405.8" width="3.500" height="2.500" fill="#e82010"/><rect x="889.3" y="408.3" width="3" height="2" fill="#d02010"/><rect x="886.8" y="407.3" width="2" height="2" fill="#0a300a"/>
<path d="M1033.4 424.1L1059.2 424.2" stroke="#ff0000" stroke-width="1.3" fill="none"/>
<path d="M1033.1 421.4L1058.9 421.5" stroke="#ff0000" stroke-width="1.3" fill="none"/>
<polygon points="1067.2,442.6 1066.8,439.1 1065.6,441.7 1066.1,445.2" fill="#141414"/>
<polygon points="1067.2,442.6 1074.6,442.7 1073.4,445.3 1066.1,445.2" fill="#141414"/>
<polygon points="1067.2,442.6 1074.6,442.7 1074.1,439.2 1066.8,439.1" fill="#141414"/>
<polygon points="766.8,441.7 767.5,436.7 768.6,439.3 768.0,444.3" fill="#141414"/>
<polygon points="763.3,441.7 766.8,441.7 768.0,444.3 764.5,444.3" fill="#141414"/>
<polygon points="763.3,441.7 766.8,441.7 767.5,436.7 764.0,436.6" fill="#141414"/>
<polygon points="744.7,452.3 745.5,447.2 746.8,449.8 746.0,454.9" fill="#141414"/>
<polygon points="741.2,452.3 744.7,452.3 746.0,454.9 742.5,454.8" fill="#141414"/>
<polygon points="741.2,452.3 744.7,452.3 745.5,447.2 742.0,447.2" fill="#141414"/>
<polygon points="1059.1,437.2 1057.3,421.6 1053.6,431.0 1055.3,446.3" fill="#f3b5aa"/>
<polygon points="1059.1,437.2 1062.2,437.2 1060.4,421.6 1057.3,421.6" fill="#ffffff"/>
<path d="M1059.1 437.2L1057.3 421.6" stroke="#ff0000" stroke-width="1.3" fill="none"/>
<path d="M1062.2 437.2L1060.4 421.6" stroke="#ff0000" stroke-width="1.3" fill="none"/>
<polygon points="1110.7,468.7 1108.9,457.1 1107.3,459.8 1109.1,471.3" fill="#3a3030"/>
<polygon points="1110.7,468.7 1116.6,468.7 1114.7,457.1 1108.9,457.1" fill="#8b5a48"/>
<polygon points="1082.3,451.4 1081.8,447.8 1080.5,450.4 1081.0,453.9" fill="#141414"/>
<polygon points="1082.3,451.4 1089.7,451.5 1088.4,454.0 1081.0,453.9" fill="#141414"/>
<polygon points="1082.3,451.4 1089.7,451.5 1089.2,447.9 1081.8,447.8" fill="#141414"/>
<polygon points="773.0,443.1 773.9,436.5 774.7,438.5 773.9,445.1" fill="#5a5a52"/>
<polygon points="767.8,443.1 773.0,443.1 773.9,445.1 768.7,445.1" fill="#5a5a52"/>
<polygon points="767.8,443.1 773.0,443.1 773.9,436.5 768.7,436.5" fill="#8d8d82"/>
<polygon points="1097.6,460.3 1097.1,456.7 1095.7,459.2 1096.2,462.8" fill="#141414"/>
<polygon points="1097.6,460.3 1105.1,460.3 1103.6,462.8 1096.2,462.8" fill="#141414"/>
<polygon points="1097.6,460.3 1105.1,460.3 1104.5,456.7 1097.1,456.7" fill="#141414"/>
<polygon points="751.0,453.8 752.0,447.0 753.0,449.0 752.0,455.7" fill="#5a5a52"/>
<polygon points="745.7,453.7 751.0,453.8 752.0,455.7 746.7,455.7" fill="#5a5a52"/>
<polygon points="745.7,453.7 751.0,453.8 752.0,447.0 746.7,447.0" fill="#8d8d82"/>
<polygon points="717.9,467.3 720.8,450.9 726.0,459.8 723.3,475.9" fill="#f3b5aa"/>
<polygon points="714.7,467.3 717.9,467.3 720.8,450.9 717.6,450.9" fill="#ffffff"/>
<path d="M714.7 467.3L717.6 450.9" stroke="#ff0000" stroke-width="1.3" fill="none"/>
<path d="M717.9 467.3L720.8 450.9" stroke="#ff0000" stroke-width="1.3" fill="none"/>
<polygon points="777.1,441.8 777.7,436.7 778.8,439.4 778.1,444.3" fill="#141414"/>
<polygon points="773.6,441.7 777.1,441.8 778.1,444.3 774.6,444.3" fill="#141414"/>
<polygon points="773.6,441.7 777.1,441.8 777.7,436.7 774.2,436.7" fill="#141414"/>
<polygon points="1066.4,448.5 1065.9,443.8 1065.0,445.8 1065.5,450.5" fill="#5a5a52"/>
<polygon points="1066.4,448.5 1076.1,448.6 1075.2,450.6 1065.5,450.5" fill="#5a5a52"/>
<polygon points="1066.4,448.5 1076.1,448.6 1075.5,443.9 1065.9,443.8" fill="#8d8d82"/>
<polygon points="755.0,452.4 755.8,447.3 757.0,449.8 756.3,454.9" fill="#141414"/>
<polygon points="751.5,452.4 755.0,452.4 756.3,454.9 752.8,454.9" fill="#141414"/>
<polygon points="751.5,452.4 755.0,452.4 755.8,447.3 752.2,447.2" fill="#141414"/>
<polygon points="1081.5,457.4 1080.9,452.6 1079.9,454.5 1080.5,459.3" fill="#5a5a52"/>
<polygon points="1081.5,457.4 1091.3,457.4 1090.3,459.4 1080.5,459.3" fill="#5a5a52"/>
<polygon points="1081.5,457.4 1091.3,457.4 1090.6,452.6 1080.9,452.6" fill="#8d8d82"/>
<polygon points="783.3,443.2 784.1,436.6 784.9,438.6 784.1,445.2" fill="#5a5a52"/>
<polygon points="778.0,443.2 783.3,443.2 784.1,445.2 778.8,445.1" fill="#5a5a52"/>
<polygon points="778.0,443.2 783.3,443.2 784.1,436.6 778.8,436.6" fill="#8d8d82"/>
<polygon points="1096.9,466.3 1096.2,461.5 1095.1,463.4 1095.8,468.2" fill="#5a5a52"/>
<polygon points="1096.9,466.3 1106.7,466.4 1105.6,468.3 1095.8,468.2" fill="#5a5a52"/>
<polygon points="1096.9,466.3 1106.7,466.4 1106.0,461.5 1096.2,461.5" fill="#8d8d82"/>
<polygon points="801.4,422.6 827.1,422.7 829.5,432.1 804.4,432.0" fill="#ffffff"/>
<polygon points="801.4,422.6 827.1,422.7 827.4,420.0 801.7,419.9" fill="#ffffff"/>
<path d="M801.4 422.6L827.1 422.7" stroke="#ff0000" stroke-width="1.3" fill="none"/>
<path d="M801.7 419.9L827.4 420.0" stroke="#ff0000" stroke-width="1.3" fill="none"/>
<polygon points="696.5,467.2 731.9,467.4 732.7,462.0 697.6,461.8" fill="#f9a88a"/>
<polygon points="739.0,464.7 740.1,457.8 741.1,459.7 740.1,466.6" fill="#5a5a52"/>
<path d="M696.5 467.2L731.9 467.4" stroke="#ff0000" stroke-width="1.3" fill="none"/>
<path d="M697.6 461.8L732.7 462.0" stroke="#ff0000" stroke-width="1.3" fill="none"/>
<polygon points="733.6,464.6 739.0,464.7 740.1,466.6 734.7,466.5" fill="#5a5a52"/>
<polygon points="733.6,464.6 739.0,464.7 740.1,457.8 734.7,457.8" fill="#8d8d82"/>
<polygon points="1007.6,423.9 1033.4,424.1 1030.3,433.5 1005.1,433.3" fill="#ffffff"/>
<polygon points="1007.6,423.9 1033.4,424.1 1033.1,421.4 1007.4,421.2" fill="#ffffff"/>
<path d="M1007.6 423.9L1033.4 424.1" stroke="#ff0000" stroke-width="1.3" fill="none"/>
<path d="M1007.4 421.2L1033.1 421.4" stroke="#ff0000" stroke-width="1.3" fill="none"/>
<polygon points="761.3,453.8 762.3,447.1 763.2,449.1 762.3,455.8" fill="#5a5a52"/>
<polygon points="756.0,453.8 761.3,453.8 762.3,455.8 757.0,455.7" fill="#5a5a52"/>
<polygon points="756.0,453.8 761.3,453.8 762.3,447.1 757.0,447.1" fill="#8d8d82"/>
<polygon points="1068.3,451.3 1067.8,447.7 1066.7,450.3 1067.1,453.9" fill="#141414"/>
<polygon points="1068.3,451.3 1075.7,451.4 1074.4,453.9 1067.1,453.9" fill="#141414"/>
<polygon points="1068.3,451.3 1075.7,451.4 1075.2,447.8 1067.8,447.7" fill="#141414"/>
<polygon points="787.3,441.8 787.9,436.8 788.9,439.4 788.3,444.4" fill="#141414"/>
<polygon points="783.8,441.8 787.3,441.8 788.3,444.4 784.8,444.4" fill="#141414"/>
<polygon points="783.8,441.8 787.3,441.8 787.9,436.8 784.4,436.8" fill="#141414"/>
<polygon points="1115.6,470.0 1114.5,462.7 1109.1,471.3 1110.1,478.5" fill="#f8a17e"/>
<polygon points="1115.6,470.0 1121.6,470.1 1116.0,478.5 1110.1,478.5" fill="#f8a17e"/>
<polygon points="1115.6,470.0 1121.6,470.1 1120.4,462.7 1114.5,462.7" fill="#f7c0b0"/>
<polygon points="1115.6,470.0 1121.6,470.1 1120.4,462.7 1114.5,462.7" fill="none" stroke="#ff0000" stroke-width="1"/>
<polygon points="1083.4,460.2 1083.0,456.6 1081.7,459.1 1082.1,462.7" fill="#141414"/>
<polygon points="1083.4,460.2 1090.9,460.2 1089.5,462.7 1082.1,462.7" fill="#141414"/>
<polygon points="1083.4,460.2 1090.9,460.2 1090.4,456.6 1083.0,456.6" fill="#141414"/>
<polygon points="765.4,452.5 766.1,447.3 767.2,449.9 766.5,455.0" fill="#141414"/>
<polygon points="761.8,452.4 765.4,452.5 766.5,455.0 763.0,455.0" fill="#141414"/>
<polygon points="761.8,452.4 765.4,452.5 766.1,447.3 762.5,447.3" fill="#141414"/>
<polygon points="743.0,463.3 743.8,458.1 745.2,460.6 744.4,465.8" fill="#141414"/>
<polygon points="739.5,463.3 743.0,463.3 744.4,465.8 740.9,465.7" fill="#141414"/>
<polygon points="739.5,463.3 743.0,463.3 743.8,458.1 740.3,458.1" fill="#141414"/>
<polygon points="793.5,443.3 794.2,436.7 795.0,438.7 794.2,445.2" fill="#5a5a52"/>
<polygon points="788.2,443.2 793.5,443.3 794.2,445.2 789.0,445.2" fill="#5a5a52"/>
<polygon points="788.2,443.2 793.5,443.3 794.2,436.7 789.0,436.6" fill="#8d8d82"/>
<polygon points="1032.5,436.2 1031.3,422.7 1028.3,432.1 1029.4,445.3" fill="#f0a9a0"/>
<polygon points="1032.5,436.2 1035.7,436.2 1034.4,422.7 1031.3,422.7" fill="#ffffff"/>
<path d="M1032.5 436.2L1031.3 422.7" stroke="#ff0000" stroke-width="1.3" fill="none" stroke-dasharray="3 1.5"/>
<path d="M1035.7 436.2L1034.4 422.7" stroke="#ff0000" stroke-width="1.3" fill="none" stroke-dasharray="3 1.5"/>
<polygon points="1011.7,425.8 1027.1,425.9 1025.3,431.8 1010.1,431.7" fill="#34353f"/>
<polygon points="1012.5,427.7 1025.2,427.8 1024.3,430.9 1011.6,430.9" fill="#a9aec8"/>
<polygon points="1010.1,431.7 1025.3,431.8 1024.9,433.0 1009.8,432.9" fill="#e0a79c"/>
<polygon points="1018.5,425.9 1020.3,425.9 1018.6,431.7 1016.8,431.7" fill="#22232a"/>
<polygon points="808.6,434.7 809.9,421.3 812.7,430.7 811.5,443.9" fill="#f0a9a0"/>
<polygon points="805.5,434.7 808.6,434.7 809.9,421.3 806.8,421.2" fill="#ffffff"/>
<path d="M805.5 434.7L806.8 421.2" stroke="#ff0000" stroke-width="1.3" fill="none" stroke-dasharray="3 1.5"/>
<path d="M808.6 434.7L809.9 421.3" stroke="#ff0000" stroke-width="1.3" fill="none" stroke-dasharray="3 1.5"/>
<polygon points="797.6,441.9 798.1,436.9 799.0,439.5 798.5,444.5" fill="#141414"/>
<polygon points="794.0,441.9 797.6,441.9 798.5,444.5 795.0,444.5" fill="#141414"/>
<polygon points="794.0,441.9 797.6,441.9 798.1,436.9 794.6,436.8" fill="#141414"/>
<polygon points="771.7,453.9 772.5,447.2 773.4,449.1 772.5,455.8" fill="#5a5a52"/>
<polygon points="766.3,453.9 771.7,453.9 772.5,455.8 767.2,455.8" fill="#5a5a52"/>
<polygon points="766.3,453.9 771.7,453.9 772.5,447.2 767.2,447.1" fill="#8d8d82"/>
<polygon points="1067.5,457.3 1066.9,452.5 1066.0,454.4 1066.5,459.2" fill="#5a5a52"/>
<polygon points="1067.5,457.3 1077.2,457.3 1076.3,459.3 1066.5,459.2" fill="#5a5a52"/>
<polygon points="1067.5,457.3 1077.2,457.3 1076.6,452.6 1066.9,452.5" fill="#8d8d82"/>
<polygon points="749.4,464.7 750.4,457.9 751.4,459.8 750.4,466.6" fill="#5a5a52"/>
<polygon points="744.1,464.7 749.4,464.7 750.4,466.6 745.1,466.6" fill="#5a5a52"/>
<polygon points="744.1,464.7 749.4,464.7 750.4,457.9 745.1,457.8" fill="#8d8d82"/>
<polygon points="827.1,422.7 852.9,422.9 854.5,432.3 829.5,432.1" fill="#ffffff"/>
<polygon points="827.1,422.7 852.9,422.9 853.0,420.2 827.4,420.0" fill="#ffffff"/>
<path d="M827.1 422.7L852.9 422.9" stroke="#ff0000" stroke-width="1.3" fill="none"/>
<path d="M827.4 420.0L853.0 420.2" stroke="#ff0000" stroke-width="1.3" fill="none"/>
<polygon points="1082.7,466.2 1082.0,461.4 1081.0,463.3 1081.7,468.1" fill="#5a5a52"/>
<polygon points="1082.7,466.2 1092.5,466.3 1091.5,468.2 1081.7,468.1" fill="#5a5a52"/>
<polygon points="1082.7,466.2 1092.5,466.3 1091.9,461.4 1082.0,461.4" fill="#8d8d82"/>
<polygon points="981.8,423.7 1007.6,423.9 1005.1,433.3 980.0,433.1" fill="#ffffff"/>
<polygon points="981.8,423.7 1007.6,423.9 1007.4,421.2 981.6,421.0" fill="#ffffff"/>
<path d="M981.8 423.7L1007.6 423.9" stroke="#ff0000" stroke-width="1.3" fill="none"/>
<path d="M981.6 421.0L1007.4 421.2" stroke="#ff0000" stroke-width="1.3" fill="none"/>
<polygon points="817.6,424.6 844.0,424.7 845.2,430.6 819.2,430.4" fill="#34353f"/>
<polygon points="819.4,426.5 843.1,426.6 843.7,429.8 820.3,429.6" fill="#a9aec8"/>
<polygon points="819.2,430.4 845.2,430.6 845.4,431.8 819.5,431.7" fill="#e0a79c"/>
<polygon points="829.9,424.7 831.7,424.7 833.1,430.5 831.3,430.5" fill="#22232a"/>
<polygon points="775.7,452.5 776.4,447.4 777.4,450.0 776.8,455.1" fill="#141414"/>
<polygon points="772.2,452.5 775.7,452.5 776.8,455.1 773.3,455.0" fill="#141414"/>
<polygon points="772.2,452.5 775.7,452.5 776.4,447.4 772.8,447.4" fill="#141414"/>
<polygon points="753.5,463.4 754.2,458.1 755.5,460.7 754.7,465.8" fill="#141414"/>
<polygon points="749.9,463.3 753.5,463.4 754.7,465.8 751.2,465.8" fill="#141414"/>
<polygon points="749.9,463.3 753.5,463.4 754.2,458.1 750.7,458.1" fill="#141414"/>
<polygon points="1060.9,453.2 1059.1,437.2 1055.3,446.3 1057.0,462.0" fill="#f3b5aa"/>
<polygon points="1060.9,453.2 1064.1,453.2 1062.2,437.2 1059.1,437.2" fill="#ffffff"/>
<path d="M1060.9 453.2L1059.1 437.2" stroke="#ff0000" stroke-width="1.3" fill="none"/>
<path d="M1064.1 453.2L1062.2 437.2" stroke="#ff0000" stroke-width="1.3" fill="none"/>
<polygon points="1069.3,460.1 1068.9,456.5 1067.7,459.0 1068.1,462.6" fill="#141414"/>
<polygon points="1069.3,460.1 1076.8,460.2 1075.5,462.6 1068.1,462.6" fill="#141414"/>
<polygon points="1069.3,460.1 1076.8,460.2 1076.3,456.5 1068.9,456.5" fill="#141414"/>
<polygon points="782.0,454.0 782.8,447.2 783.6,449.2 782.8,455.9" fill="#5a5a52"/>
<polygon points="776.7,453.9 782.0,454.0 782.8,455.9 777.5,455.9" fill="#5a5a52"/>
<polygon points="776.7,453.9 782.0,454.0 782.8,447.2 777.5,447.2" fill="#8d8d82"/>
<polygon points="1086.1,469.8 1121.6,470.1 1120.7,464.6 1085.4,464.4" fill="#f9a88a"/>
<path d="M1086.1 469.8L1121.6 470.1" stroke="#ff0000" stroke-width="1.3" fill="none"/>
<path d="M1085.4 464.4L1120.7 464.6" stroke="#ff0000" stroke-width="1.3" fill="none"/>
<polygon points="983.0,425.6 1005.1,425.8 1003.6,431.6 981.9,431.5" fill="#34353f"/>
<polygon points="983.9,427.6 1003.3,427.7 1002.5,430.8 983.3,430.7" fill="#a9aec8"/>
<polygon points="981.9,431.5 1003.6,431.6 1003.3,432.9 981.6,432.7" fill="#e0a79c"/>
<polygon points="993.1,425.7 994.9,425.7 993.6,431.6 991.9,431.6" fill="#22232a"/>
<polygon points="759.8,464.8 760.8,458.0 761.7,459.9 760.8,466.7" fill="#5a5a52"/>
<polygon points="754.5,464.8 759.8,464.8 760.8,466.7 755.4,466.7" fill="#5a5a52"/>
<polygon points="754.5,464.8 759.8,464.8 760.8,458.0 755.4,457.9" fill="#8d8d82"/>
<polygon points="852.9,422.9 878.6,423.1 879.6,432.5 854.5,432.3" fill="#ffffff"/>
<polygon points="852.9,422.9 878.6,423.1 878.7,420.4 853.0,420.2" fill="#ffffff"/>
<path d="M852.9 422.9L878.6 423.1" stroke="#ff0000" stroke-width="1.3" fill="none"/>
<path d="M853.0 420.2L878.7 420.4" stroke="#ff0000" stroke-width="1.3" fill="none"/>
<polygon points="786.0,452.6 786.6,447.5 787.6,450.0 787.1,455.1" fill="#141414"/>
<polygon points="782.5,452.6 786.0,452.6 787.1,455.1 783.5,455.1" fill="#141414"/>
<polygon points="782.5,452.6 786.0,452.6 786.6,447.5 783.1,447.5" fill="#141414"/>
<polygon points="1019.2,443.3 1018.8,438.3 1018.0,440.9 1018.4,445.9" fill="#141414"/>
<polygon points="1019.2,443.3 1022.7,443.4 1021.9,446.0 1018.4,445.9" fill="#141414"/>
<polygon points="1019.2,443.3 1022.7,443.4 1022.3,438.3 1018.8,438.3" fill="#141414"/>
<polygon points="956.0,423.6 981.8,423.7 980.0,433.1 954.9,433.0" fill="#ffffff"/>
<polygon points="956.0,423.6 981.8,423.7 981.6,421.0 955.9,420.9" fill="#ffffff"/>
<path d="M956.0 423.6L981.8 423.7" stroke="#ff0000" stroke-width="1.3" fill="none"/>
<path d="M955.9 420.9L981.6 421.0" stroke="#ff0000" stroke-width="1.3" fill="none"/>
<path d="M666.7 465.5L799.5 466.4" stroke="#bdbdbd" stroke-width="3" fill="none"/>
<polygon points="763.9,463.4 764.6,458.2 765.8,460.7 765.1,465.9" fill="#141414"/>
<polygon points="760.3,463.4 763.9,463.4 765.1,465.9 761.5,465.9" fill="#141414"/>
<polygon points="760.3,463.4 763.9,463.4 764.6,458.2 761.0,458.2" fill="#141414"/>
<polygon points="1013.2,444.7 1012.7,438.1 1012.1,440.1 1012.6,446.7" fill="#5a5a52"/>
<polygon points="1013.2,444.7 1018.4,444.7 1017.8,446.7 1012.6,446.7" fill="#5a5a52"/>
<polygon points="1013.2,444.7 1018.4,444.7 1017.9,438.1 1012.7,438.1" fill="#8d8d82"/>
<polygon points="1068.5,466.1 1067.9,461.3 1067.0,463.2 1067.6,468.0" fill="#5a5a52"/>
<polygon points="1068.5,466.1 1078.3,466.2 1077.4,468.1 1067.6,468.0" fill="#5a5a52"/>
<polygon points="1068.5,466.1 1078.3,466.2 1077.7,461.3 1067.9,461.3" fill="#8d8d82"/>
<polygon points="792.3,454.0 793.1,447.3 793.8,449.3 793.0,456.0" fill="#5a5a52"/>
<polygon points="787.0,454.0 792.3,454.0 793.0,456.0 787.8,455.9" fill="#5a5a52"/>
<polygon points="787.0,454.0 792.3,454.0 793.1,447.3 787.8,447.3" fill="#8d8d82"/>
<polygon points="1011.0,443.3 1010.6,438.3 1009.9,440.9 1010.2,445.9" fill="#141414"/>
<polygon points="1011.0,443.3 1014.5,443.3 1013.7,445.9 1010.2,445.9" fill="#141414"/>
<polygon points="1011.0,443.3 1014.5,443.3 1014.1,438.3 1010.6,438.3" fill="#141414"/>
<polygon points="878.6,423.1 904.4,423.2 904.7,432.6 879.6,432.5" fill="#ffffff"/>
<polygon points="878.6,423.1 904.4,423.2 904.5,420.5 878.7,420.4" fill="#ffffff"/>
<path d="M878.6 423.1L904.4 423.2" stroke="#ff0000" stroke-width="1.3" fill="none"/>
<path d="M878.7 420.4L904.5 420.5" stroke="#ff0000" stroke-width="1.3" fill="none"/>
<polygon points="930.2,423.4 956.0,423.6 954.9,433.0 929.8,432.8" fill="#ffffff"/>
<polygon points="930.2,423.4 956.0,423.6 955.9,420.9 930.2,420.7" fill="#ffffff"/>
<path d="M930.2 423.4L956.0 423.6" stroke="#ff0000" stroke-width="1.3" fill="none"/>
<path d="M930.2 420.7L955.9 420.9" stroke="#ff0000" stroke-width="1.3" fill="none"/>
<polygon points="829.7,443.5 830.2,436.9 830.7,438.9 830.2,445.5" fill="#5a5a52"/>
<polygon points="824.4,443.5 829.7,443.5 830.2,445.5 825.0,445.5" fill="#5a5a52"/>
<polygon points="824.4,443.5 829.7,443.5 830.2,436.9 825.0,436.9" fill="#8d8d82"/>
<polygon points="770.2,464.9 771.1,458.0 772.0,459.9 771.1,466.8" fill="#5a5a52"/>
<polygon points="764.9,464.8 770.2,464.9 771.1,466.8 765.8,466.7" fill="#5a5a52"/>
<polygon points="764.9,464.8 770.2,464.9 771.1,458.0 765.8,458.0" fill="#8d8d82"/>
<polygon points="1004.9,444.7 1004.5,438.0 1003.9,440.0 1004.4,446.6" fill="#5a5a52"/>
<polygon points="1004.9,444.7 1010.2,444.7 1009.6,446.7 1004.4,446.6" fill="#5a5a52"/>
<polygon points="796.4,452.7 796.9,447.5 797.9,450.1 797.3,455.2" fill="#141414"/>
<polygon points="1004.9,444.7 1010.2,444.7 1009.7,438.1 1004.5,438.0" fill="#8d8d82"/>
<polygon points="792.8,452.6 796.4,452.7 797.3,455.2 793.8,455.2" fill="#141414"/>
<polygon points="792.8,452.6 796.4,452.7 796.9,447.5 793.4,447.5" fill="#141414"/>
<polygon points="904.4,423.2 930.2,423.4 929.8,432.8 904.7,432.6" fill="#ffffff"/>
<polygon points="904.4,423.2 930.2,423.4 930.2,420.7 904.5,420.5" fill="#ffffff"/>
<path d="M904.4 423.2L930.2 423.4" stroke="#ff0000" stroke-width="1.3" fill="none"/>
<path d="M904.5 420.5L930.2 420.7" stroke="#ff0000" stroke-width="1.3" fill="none"/>
<polygon points="1002.7,443.2 1002.4,438.2 1001.7,440.8 1002.0,445.8" fill="#141414"/>
<polygon points="1002.7,443.2 1006.2,443.3 1005.5,445.9 1002.0,445.8" fill="#141414"/>
<polygon points="833.8,442.1 834.2,437.1 834.8,439.7 834.4,444.7" fill="#141414"/>
<polygon points="1002.7,443.2 1006.2,443.3 1005.9,438.2 1002.4,438.2" fill="#141414"/>
<polygon points="830.3,442.1 833.8,442.1 834.4,444.7 830.9,444.7" fill="#141414"/>
<polygon points="830.3,442.1 833.8,442.1 834.2,437.1 830.7,437.1" fill="#141414"/>
<polygon points="1033.8,449.9 1032.5,436.2 1029.4,445.3 1030.6,458.8" fill="#f0a9a0"/>
<polygon points="1033.8,449.9 1037.0,450.0 1035.7,436.2 1032.5,436.2" fill="#ffffff"/>
<path d="M1033.8 449.9L1032.5 436.2" stroke="#ff0000" stroke-width="1.3" fill="none" stroke-dasharray="3 1.5"/>
<path d="M1037.0 450.0L1035.7 436.2" stroke="#ff0000" stroke-width="1.3" fill="none" stroke-dasharray="3 1.5"/>
<polygon points="774.3,463.5 775.0,458.3 776.1,460.8 775.4,466.0" fill="#141414"/>
<polygon points="770.8,463.5 774.3,463.5 775.4,466.0 771.9,465.9" fill="#141414"/>
<polygon points="770.8,463.5 774.3,463.5 775.0,458.3 771.4,458.3" fill="#141414"/>
<polygon points="839.2,443.6 839.7,437.0 840.1,439.0 839.7,445.5" fill="#5a5a52"/>
<polygon points="833.9,443.5 839.2,443.6 839.7,445.5 834.4,445.5" fill="#5a5a52"/>
<polygon points="833.9,443.5 839.2,443.6 839.7,437.0 834.4,436.9" fill="#8d8d82"/>
<polygon points="934.4,425.3 952.1,425.4 951.5,431.3 934.1,431.2" fill="#34353f"/>
<polygon points="935.6,427.2 950.6,427.3 950.3,430.5 935.5,430.4" fill="#a9aec8"/>
<polygon points="934.1,431.2 951.5,431.3 951.4,432.5 934.1,432.4" fill="#e0a79c"/>
<polygon points="942.4,425.4 944.1,425.4 943.7,431.2 941.9,431.2" fill="#22232a"/>
<polygon points="996.7,444.6 996.3,438.0 995.8,440.0 996.2,446.6" fill="#5a5a52"/>
<polygon points="996.7,444.6 1001.9,444.6 1001.4,446.6 996.2,446.6" fill="#5a5a52"/>
<polygon points="996.7,444.6 1001.9,444.6 1001.5,438.0 996.3,438.0" fill="#8d8d82"/>
<polygon points="973.8,435.8 973.3,422.3 971.8,431.7 972.3,444.9" fill="#f0a9a0"/>
<polygon points="973.8,435.8 976.9,435.8 976.4,422.3 973.3,422.3" fill="#ffffff"/>
<path d="M973.8 435.8L973.3 422.3" stroke="#ff0000" stroke-width="1.3" fill="none" stroke-dasharray="3 1.5"/>
<path d="M976.9 435.8L976.4 422.3" stroke="#ff0000" stroke-width="1.3" fill="none" stroke-dasharray="3 1.5"/>
<polygon points="807.2,448.4 808.6,434.7 811.5,443.9 810.1,457.3" fill="#f0a9a0"/>
<polygon points="804.1,448.4 807.2,448.4 808.6,434.7 805.5,434.7" fill="#ffffff"/>
<path d="M804.1 448.4L805.5 434.7" stroke="#ff0000" stroke-width="1.3" fill="none" stroke-dasharray="3 1.5"/>
<path d="M807.2 448.4L808.6 434.7" stroke="#ff0000" stroke-width="1.3" fill="none" stroke-dasharray="3 1.5"/>
<polygon points="731.9,467.4 767.2,467.7 767.9,462.2 732.7,462.0" fill="#f9a88a"/>
<path d="M731.9 467.4L767.2 467.7" stroke="#ff0000" stroke-width="1.3" fill="none"/>
<path d="M732.7 462.0L767.9 462.2" stroke="#ff0000" stroke-width="1.3" fill="none"/>
<polygon points="994.5,443.2 994.2,438.1 993.6,440.8 993.9,445.8" fill="#141414"/>
<polygon points="994.5,443.2 998.0,443.2 997.3,445.8 993.9,445.8" fill="#141414"/>
<polygon points="994.5,443.2 998.0,443.2 997.7,438.2 994.2,438.1" fill="#141414"/>
<polygon points="901.3,425.1 925.6,425.3 925.4,431.1 901.6,431.0" fill="#34353f"/>
<polygon points="902.7,427.0 924.2,427.2 924.2,430.3 902.8,430.1" fill="#a9aec8"/>
<polygon points="901.6,431.0 925.4,431.1 925.4,432.3 901.6,432.2" fill="#e0a79c"/>
<polygon points="912.6,425.2 914.4,425.2 914.4,431.0 912.6,431.0" fill="#22232a"/>
<polygon points="843.3,442.2 843.6,437.2 844.2,439.8 843.8,444.8" fill="#141414"/>
<polygon points="839.8,442.2 843.3,442.2 843.8,444.8 840.4,444.8" fill="#141414"/>
<polygon points="839.8,442.2 843.3,442.2 843.6,437.2 840.1,437.1" fill="#141414"/>
<polygon points="988.4,444.5 988.1,437.9 987.7,439.9 988.0,446.5" fill="#5a5a52"/>
<polygon points="988.4,444.5 993.7,444.6 993.2,446.6 988.0,446.5" fill="#5a5a52"/>
<polygon points="988.4,444.5 993.7,444.6 993.3,438.0 988.1,437.9" fill="#8d8d82"/>
<polygon points="780.7,464.9 781.5,458.1 782.3,460.0 781.5,466.8" fill="#5a5a52"/>
<polygon points="775.3,464.9 780.7,464.9 781.5,466.8 776.1,466.8" fill="#5a5a52"/>
<polygon points="775.3,464.9 780.7,464.9 781.5,458.1 776.2,458.1" fill="#8d8d82"/>
<polygon points="848.7,443.6 849.1,437.0 849.5,439.0 849.1,445.6" fill="#5a5a52"/>
<polygon points="843.4,443.6 848.7,443.6 849.1,445.6 843.9,445.6" fill="#5a5a52"/>
<polygon points="843.4,443.6 848.7,443.6 849.1,437.0 843.9,437.0" fill="#8d8d82"/>
<polygon points="852.8,442.3 853.1,437.2 853.6,439.8 853.3,444.8" fill="#141414"/>
<polygon points="849.3,442.2 852.8,442.3 853.3,444.8 849.8,444.8" fill="#141414"/>
<polygon points="849.3,442.2 852.8,442.3 853.1,437.2 849.6,437.2" fill="#141414"/>
<polygon points="891.4,435.2 891.8,421.8 892.4,431.2 892.0,444.4" fill="#f0a9a0"/>
<polygon points="888.3,435.2 891.4,435.2 891.8,421.8 888.7,421.8" fill="#ffffff"/>
<path d="M888.3 435.2L888.7 421.8" stroke="#ff0000" stroke-width="1.3" fill="none" stroke-dasharray="3 1.5"/>
<path d="M891.4 435.2L891.8 421.8" stroke="#ff0000" stroke-width="1.3" fill="none" stroke-dasharray="3 1.5"/>
<polygon points="858.2,443.7 858.6,437.1 858.9,439.1 858.6,445.7" fill="#5a5a52"/>
<polygon points="852.9,443.7 858.2,443.7 858.6,445.7 853.3,445.6" fill="#5a5a52"/>
<polygon points="852.9,443.7 858.2,443.7 858.6,437.1 853.4,437.0" fill="#8d8d82"/>
<polygon points="784.8,463.6 785.4,458.4 786.4,460.9 785.8,466.0" fill="#141414"/>
<polygon points="781.2,463.5 784.8,463.6 785.8,466.0 782.2,466.0" fill="#141414"/>
<polygon points="781.2,463.5 784.8,463.6 785.4,458.4 781.8,458.3" fill="#141414"/>
<polygon points="1020.1,454.2 1019.7,449.0 1018.9,451.6 1019.3,456.7" fill="#141414"/>
<polygon points="1020.1,454.2 1023.6,454.2 1022.8,456.7 1019.3,456.7" fill="#141414"/>
<polygon points="1020.1,454.2 1023.6,454.2 1023.2,449.0 1019.7,449.0" fill="#141414"/>
<polygon points="862.3,442.3 862.6,437.3 863.0,439.9 862.7,444.9" fill="#141414"/>
<polygon points="858.8,442.3 862.3,442.3 862.7,444.9 859.3,444.9" fill="#141414"/>
<polygon points="858.8,442.3 862.3,442.3 862.6,437.3 859.1,437.3" fill="#141414"/>
<polygon points="1062.8,469.7 1060.9,453.2 1057.0,462.0 1058.8,478.1" fill="#f3b5aa"/>
<polygon points="1062.8,469.7 1066.0,469.7 1064.1,453.2 1060.9,453.2" fill="#ffffff"/>
<path d="M1062.8 469.7L1060.9 453.2" stroke="#ff0000" stroke-width="1.3" fill="none"/>
<path d="M1066.0 469.7L1064.1 453.2" stroke="#ff0000" stroke-width="1.3" fill="none"/>
<polygon points="867.7,443.7 868.0,437.1 868.3,439.2 868.0,445.7" fill="#5a5a52"/>
<polygon points="862.5,443.7 867.7,443.7 868.0,445.7 862.8,445.7" fill="#5a5a52"/>
<polygon points="862.5,443.7 867.7,443.7 868.0,437.1 862.8,437.1" fill="#8d8d82"/>
<polygon points="791.1,465.0 791.8,458.2 792.6,460.1 791.8,466.9" fill="#5a5a52"/>
<polygon points="785.7,465.0 791.1,465.0 791.8,466.9 786.5,466.9" fill="#5a5a52"/>
<polygon points="785.7,465.0 791.1,465.0 791.8,458.2 786.5,458.1" fill="#8d8d82"/>
<polygon points="1013.9,455.5 1013.5,448.8 1012.9,450.7 1013.4,457.5" fill="#5a5a52"/>
<polygon points="1013.9,455.5 1019.3,455.5 1018.7,457.5 1013.4,457.5" fill="#5a5a52"/>
<polygon points="1013.9,455.5 1019.3,455.5 1018.7,448.8 1013.5,448.8" fill="#8d8d82"/>
<polygon points="871.8,442.4 872.1,437.3 872.4,440.0 872.2,445.0" fill="#141414"/>
<polygon points="868.3,442.4 871.8,442.4 872.2,445.0 868.7,444.9" fill="#141414"/>
<polygon points="868.3,442.4 871.8,442.4 872.1,437.3 868.6,437.3" fill="#141414"/>
<polygon points="961.0,443.0 960.9,437.9 960.5,440.5 960.7,445.6" fill="#141414"/>
<polygon points="961.0,443.0 964.5,443.0 964.2,445.6 960.7,445.6" fill="#141414"/>
<polygon points="961.0,443.0 964.5,443.0 964.4,438.0 960.9,437.9" fill="#141414"/>
<polygon points="1011.7,454.1 1011.4,449.0 1010.6,451.5 1011.0,456.6" fill="#141414"/>
<polygon points="1011.7,454.1 1015.3,454.1 1014.5,456.6 1011.0,456.6" fill="#141414"/>
<polygon points="1011.7,454.1 1015.3,454.1 1014.9,449.0 1011.4,449.0" fill="#141414"/>
<polygon points="877.2,443.8 877.5,437.2 877.7,439.2 877.5,445.8" fill="#5a5a52"/>
<polygon points="872.0,443.8 877.2,443.8 877.5,445.8 872.2,445.8" fill="#5a5a52"/>
<polygon points="872.0,443.8 877.2,443.8 877.5,437.2 872.3,437.2" fill="#8d8d82"/>
<polygon points="955.0,444.3 954.9,437.7 954.6,439.7 954.8,446.3" fill="#5a5a52"/>
<polygon points="955.0,444.3 960.3,444.4 960.0,446.3 954.8,446.3" fill="#5a5a52"/>
<polygon points="955.0,444.3 960.3,444.4 960.1,437.7 954.9,437.7" fill="#8d8d82"/>
<polygon points="881.4,442.4 881.6,437.4 881.8,440.0 881.6,445.0" fill="#141414"/>
<polygon points="877.8,442.4 881.4,442.4 881.6,445.0 878.1,445.0" fill="#141414"/>
<polygon points="877.8,442.4 881.4,442.4 881.6,437.4 878.1,437.4" fill="#141414"/>
<polygon points="828.8,454.3 829.4,447.5 829.9,449.5 829.3,456.2" fill="#5a5a52"/>
<polygon points="823.5,454.2 828.8,454.3 829.3,456.2 824.1,456.2" fill="#5a5a52"/>
<polygon points="823.5,454.2 828.8,454.3 829.4,447.5 824.1,447.5" fill="#8d8d82"/>
<polygon points="795.2,463.6 795.8,458.4 796.7,460.9 796.1,466.1" fill="#141414"/>
<polygon points="791.6,463.6 795.2,463.6 796.1,466.1 792.6,466.1" fill="#141414"/>
<polygon points="791.6,463.6 795.2,463.6 795.8,458.4 792.2,458.4" fill="#141414"/>
<polygon points="950.7,442.9 950.6,437.9 950.4,440.5 950.5,445.5" fill="#141414"/>
<polygon points="950.7,442.9 954.3,442.9 954.0,445.5 950.5,445.5" fill="#141414"/>
<polygon points="950.7,442.9 954.3,442.9 954.1,437.9 950.6,437.9" fill="#141414"/>
<polygon points="1005.6,455.5 1005.2,448.7 1004.7,450.7 1005.1,457.4" fill="#5a5a52"/>
<polygon points="1005.6,455.5 1011.0,455.5 1010.4,457.4 1005.1,457.4" fill="#5a5a52"/>
<polygon points="1005.6,455.5 1011.0,455.5 1010.5,448.8 1005.2,448.7" fill="#8d8d82"/>
<polygon points="1050.6,469.6 1086.1,469.8 1085.4,464.4 1050.1,464.1" fill="#f9a88a"/>
<path d="M1050.6 469.6L1086.1 469.8" stroke="#ff0000" stroke-width="1.3" fill="none"/>
<path d="M1050.1 464.1L1085.4 464.4" stroke="#ff0000" stroke-width="1.3" fill="none"/>
<polygon points="944.8,444.3 944.7,437.6 944.5,439.7 944.6,446.2" fill="#5a5a52"/>
<polygon points="944.8,444.3 950.0,444.3 949.8,446.3 944.6,446.2" fill="#5a5a52"/>
<polygon points="944.8,444.3 950.0,444.3 949.9,437.7 944.7,437.6" fill="#8d8d82"/>
<polygon points="940.5,442.8 940.4,437.8 940.2,440.4 940.3,445.4" fill="#141414"/>
<polygon points="940.5,442.8 944.0,442.9 943.8,445.4 940.3,445.4" fill="#141414"/>
<polygon points="940.5,442.8 944.0,442.9 943.9,437.8 940.4,437.8" fill="#141414"/>
<polygon points="1003.4,454.0 1003.1,448.9 1002.4,451.5 1002.7,456.6" fill="#141414"/>
<polygon points="1003.4,454.0 1007.0,454.1 1006.3,456.6 1002.7,456.6" fill="#141414"/>
<polygon points="832.9,452.9 833.3,447.8 834.0,450.3 833.6,455.4" fill="#141414"/>
<polygon points="1003.4,454.0 1007.0,454.1 1006.6,448.9 1003.1,448.9" fill="#141414"/>
<polygon points="829.4,452.9 832.9,452.9 833.6,455.4 830.1,455.4" fill="#141414"/>
<polygon points="829.4,452.9 832.9,452.9 833.3,447.8 829.8,447.8" fill="#141414"/>
<polygon points="934.5,444.2 934.5,437.6 934.4,439.6 934.4,446.2" fill="#5a5a52"/>
<polygon points="934.5,444.2 939.8,444.2 939.7,446.2 934.4,446.2" fill="#5a5a52"/>
<polygon points="934.5,444.2 939.8,444.2 939.7,437.6 934.5,437.6" fill="#8d8d82"/>
<polygon points="930.2,442.8 930.2,437.7 930.1,440.3 930.1,445.4" fill="#141414"/>
<polygon points="930.2,442.8 933.7,442.8 933.6,445.4 930.1,445.4" fill="#141414"/>
<polygon points="930.2,442.8 933.7,442.8 933.7,437.8 930.2,437.7" fill="#141414"/>
<polygon points="909.1,444.0 909.1,437.4 909.2,439.4 909.1,446.0" fill="#5a5a52"/>
<polygon points="903.8,444.0 909.1,444.0 909.1,446.0 903.9,446.0" fill="#5a5a52"/>
<polygon points="903.8,444.0 909.1,444.0 909.1,437.4 903.9,437.4" fill="#8d8d82"/>
<polygon points="924.3,444.1 924.3,437.5 924.2,439.5 924.2,446.1" fill="#5a5a52"/>
<polygon points="924.3,444.1 929.5,444.2 929.5,446.1 924.2,446.1" fill="#5a5a52"/>
<polygon points="924.3,444.1 929.5,444.2 929.5,437.5 924.3,437.5" fill="#8d8d82"/>
<polygon points="913.2,442.6 913.3,437.6 913.3,440.2 913.2,445.2" fill="#141414"/>
<polygon points="909.7,442.6 913.2,442.6 913.2,445.2 909.8,445.2" fill="#141414"/>
<polygon points="909.7,442.6 913.2,442.6 913.3,437.6 909.8,437.6" fill="#141414"/>
<polygon points="920.0,442.7 920.0,437.7 920.0,440.3 919.9,445.3" fill="#141414"/>
<polygon points="920.0,442.7 923.5,442.7 923.4,445.3 919.9,445.3" fill="#141414"/>
<polygon points="920.0,442.7 923.5,442.7 923.5,437.7 920.0,437.7" fill="#141414"/>
<polygon points="914.0,444.1 919.3,444.1 919.3,446.1 914.0,446.0" fill="#5a5a52"/>
<polygon points="914.0,444.1 919.3,444.1 919.3,437.5 914.1,437.4" fill="#8d8d82"/>
<polygon points="838.4,454.3 838.9,447.6 839.4,449.6 838.9,456.3" fill="#5a5a52"/>
<polygon points="833.1,454.3 838.4,454.3 838.9,456.3 833.6,456.2" fill="#5a5a52"/>
<polygon points="833.1,454.3 838.4,454.3 838.9,447.6 833.6,447.6" fill="#8d8d82"/>
<polygon points="997.3,455.4 996.9,448.7 996.4,450.6 996.8,457.3" fill="#5a5a52"/>
<polygon points="997.3,455.4 1002.6,455.4 1002.1,457.4 996.8,457.3" fill="#5a5a52"/>
<polygon points="997.3,455.4 1002.6,455.4 1002.2,448.7 996.9,448.7" fill="#8d8d82"/>
<polygon points="995.1,454.0 994.8,448.9 994.2,451.4 994.5,456.5" fill="#141414"/>
<polygon points="995.1,454.0 998.6,454.0 998.0,456.5 994.5,456.5" fill="#141414"/>
<polygon points="995.1,454.0 998.6,454.0 998.3,448.9 994.8,448.9" fill="#141414"/>
<polygon points="842.5,453.0 842.9,447.8 843.5,450.4 843.1,455.5" fill="#141414"/>
<polygon points="839.0,452.9 842.5,453.0 843.1,455.5 839.6,455.5" fill="#141414"/>
<polygon points="839.0,452.9 842.5,453.0 842.9,447.8 839.4,447.8" fill="#141414"/>
<polygon points="1035.1,464.0 1033.8,449.9 1030.6,458.8 1031.8,472.6" fill="#f0a9a0"/>
<polygon points="1035.1,464.0 1038.3,464.1 1037.0,450.0 1033.8,449.9" fill="#ffffff"/>
<path d="M1035.1 464.0L1033.8 449.9" stroke="#ff0000" stroke-width="1.3" fill="none" stroke-dasharray="3 1.5"/>
<path d="M1038.3 464.1L1037.0 450.0" stroke="#ff0000" stroke-width="1.3" fill="none" stroke-dasharray="3 1.5"/>
<polygon points="989.0,455.3 988.6,448.6 988.2,450.6 988.6,457.3" fill="#5a5a52"/>
<polygon points="989.0,455.3 994.3,455.4 993.9,457.3 988.6,457.3" fill="#5a5a52"/>
<polygon points="989.0,455.3 994.3,455.4 993.9,448.6 988.6,448.6" fill="#8d8d82"/>
<polygon points="848.0,454.4 848.4,447.7 848.8,449.6 848.4,456.3" fill="#5a5a52"/>
<polygon points="842.7,454.4 848.0,454.4 848.4,456.3 843.1,456.3" fill="#5a5a52"/>
<polygon points="842.7,454.4 848.0,454.4 848.4,447.7 843.2,447.6" fill="#8d8d82"/>
<polygon points="805.8,462.5 807.2,448.4 810.1,457.3 808.8,471.1" fill="#f0a9a0"/>
<polygon points="802.6,462.5 805.8,462.5 807.2,448.4 804.1,448.4" fill="#ffffff"/>
<path d="M802.6 462.5L804.1 448.4" stroke="#ff0000" stroke-width="1.3" fill="none" stroke-dasharray="3 1.5"/>
<path d="M805.8 462.5L807.2 448.4" stroke="#ff0000" stroke-width="1.3" fill="none" stroke-dasharray="3 1.5"/>
<polygon points="974.4,449.5 973.8,435.8 972.3,444.9 972.8,458.4" fill="#f0a9a0"/>
<polygon points="974.4,449.5 977.5,449.6 976.9,435.8 973.8,435.8" fill="#ffffff"/>
<polygon points="852.1,453.0 852.5,447.9 852.9,450.5 852.6,455.6" fill="#141414"/>
<polygon points="848.6,453.0 852.1,453.0 852.6,455.6 849.1,455.5" fill="#141414"/>
<polygon points="848.6,453.0 852.1,453.0 852.5,447.9 848.9,447.9" fill="#141414"/>
<path d="M974.4 449.5L973.8 435.8" stroke="#ff0000" stroke-width="1.3" fill="none" stroke-dasharray="3 1.5"/>
<path d="M977.5 449.6L976.9 435.8" stroke="#ff0000" stroke-width="1.3" fill="none" stroke-dasharray="3 1.5"/>
<polygon points="857.6,454.5 858.0,447.7 858.3,449.7 857.9,456.4" fill="#5a5a52"/>
<polygon points="852.3,454.4 857.6,454.5 857.9,456.4 852.7,456.4" fill="#5a5a52"/>
<polygon points="852.3,454.4 857.6,454.5 858.0,447.7 852.7,447.7" fill="#8d8d82"/>
<polygon points="1020.9,465.2 1020.5,459.9 1019.7,462.4 1020.1,467.6" fill="#141414"/>
<polygon points="1020.9,465.2 1024.5,465.2 1023.7,467.6 1020.1,467.6" fill="#141414"/>
<polygon points="1020.9,465.2 1024.5,465.2 1024.1,460.0 1020.5,459.9" fill="#141414"/>
<polygon points="767.2,467.7 802.6,467.9 803.2,462.5 767.9,462.2" fill="#f9a88a"/>
<path d="M767.2 467.7L802.6 467.9" stroke="#ff0000" stroke-width="1.3" fill="none"/>
<path d="M767.9 462.2L803.2 462.5" stroke="#ff0000" stroke-width="1.3" fill="none"/>
<polygon points="861.7,453.1 862.0,448.0 862.4,450.5 862.2,455.6" fill="#141414"/>
<polygon points="858.2,453.1 861.7,453.1 862.2,455.6 858.6,455.6" fill="#141414"/>
<polygon points="858.2,453.1 861.7,453.1 862.0,448.0 858.5,448.0" fill="#141414"/>
<polygon points="867.2,454.5 867.5,447.8 867.8,449.8 867.5,456.5" fill="#5a5a52"/>
<polygon points="861.9,454.5 867.2,454.5 867.5,456.5 862.2,456.4" fill="#5a5a52"/>
<polygon points="861.9,454.5 867.2,454.5 867.5,447.8 862.2,447.8" fill="#8d8d82"/>
<polygon points="1014.8,466.5 1014.3,459.6 1013.7,461.6 1014.2,468.4" fill="#5a5a52"/>
<polygon points="1014.8,466.5 1020.1,466.5 1019.5,468.4 1014.2,468.4" fill="#5a5a52"/>
<polygon points="1014.8,466.5 1020.1,466.5 1019.6,459.7 1014.3,459.6" fill="#8d8d82"/>
<polygon points="871.4,453.2 871.6,448.0 871.9,450.6 871.7,455.7" fill="#141414"/>
<polygon points="867.8,453.1 871.4,453.2 871.7,455.7 868.2,455.7" fill="#141414"/>
<polygon points="867.8,453.1 871.4,453.2 871.6,448.0 868.1,448.0" fill="#141414"/>
<polygon points="1012.5,465.1 1012.1,459.9 1011.4,462.4 1011.8,467.6" fill="#141414"/>
<polygon points="1012.5,465.1 1016.1,465.1 1015.3,467.6 1011.8,467.6" fill="#141414"/>
<polygon points="1012.5,465.1 1016.1,465.1 1015.7,459.9 1012.1,459.9" fill="#141414"/>
<polygon points="891.0,449.0 891.4,435.2 892.0,444.4 891.7,457.9" fill="#f0a9a0"/>
<polygon points="887.8,449.0 891.0,449.0 891.4,435.2 888.3,435.2" fill="#ffffff"/>
<path d="M887.8 449.0L888.3 435.2" stroke="#ff0000" stroke-width="1.3" fill="none" stroke-dasharray="3 1.5"/>
<path d="M891.0 449.0L891.4 435.2" stroke="#ff0000" stroke-width="1.3" fill="none" stroke-dasharray="3 1.5"/>
<polygon points="961.3,453.8 961.2,448.6 960.8,451.2 961.0,456.3" fill="#141414"/>
<polygon points="961.3,453.8 964.9,453.8 964.5,456.3 961.0,456.3" fill="#141414"/>
<polygon points="961.3,453.8 964.9,453.8 964.7,448.7 961.2,448.6" fill="#141414"/>
<polygon points="876.8,454.6 877.1,447.9 877.3,449.8 877.0,456.5" fill="#5a5a52"/>
<polygon points="871.5,454.6 876.8,454.6 877.0,456.5 871.7,456.5" fill="#5a5a52"/>
<polygon points="871.5,454.6 876.8,454.6 877.1,447.9 871.8,447.8" fill="#8d8d82"/>
<polygon points="827.9,465.3 828.5,458.4 829.0,460.3 828.5,467.2" fill="#5a5a52"/>
<polygon points="822.6,465.2 827.9,465.3 828.5,467.2 823.1,467.1" fill="#5a5a52"/>
<polygon points="822.6,465.2 827.9,465.3 828.5,458.4 823.2,458.4" fill="#8d8d82"/>
<polygon points="955.3,455.1 955.1,448.4 954.9,450.4 955.1,457.1" fill="#5a5a52"/>
<polygon points="955.3,455.1 960.6,455.2 960.3,457.1 955.1,457.1" fill="#5a5a52"/>
<polygon points="955.3,455.1 960.6,455.2 960.4,448.4 955.1,448.4" fill="#8d8d82"/>
<polygon points="881.0,453.2 881.2,448.1 881.4,450.7 881.2,455.8" fill="#141414"/>
<polygon points="877.4,453.2 881.0,453.2 881.2,455.8 877.7,455.7" fill="#141414"/>
<polygon points="877.4,453.2 881.0,453.2 881.2,448.1 877.6,448.1" fill="#141414"/>
<polygon points="1006.4,466.5 1005.9,459.6 1005.4,461.5 1005.8,468.3" fill="#5a5a52"/>
<polygon points="1006.4,466.5 1011.7,466.5 1011.2,468.4 1005.8,468.3" fill="#5a5a52"/>
<polygon points="1006.4,466.5 1011.7,466.5 1011.2,459.6 1005.9,459.6" fill="#8d8d82"/>
<polygon points="951.0,453.7 950.9,448.6 950.6,451.1 950.7,456.2" fill="#141414"/>
<polygon points="951.0,453.7 954.5,453.7 954.2,456.2 950.7,456.2" fill="#141414"/>
<polygon points="951.0,453.7 954.5,453.7 954.4,448.6 950.9,448.6" fill="#141414"/>
<polygon points="944.9,455.1 944.8,448.3 944.7,450.3 944.8,457.0" fill="#5a5a52"/>
<polygon points="944.9,455.1 950.3,455.1 950.1,457.0 944.8,457.0" fill="#5a5a52"/>
<polygon points="944.9,455.1 950.3,455.1 950.1,448.4 944.8,448.3" fill="#8d8d82"/>
<polygon points="1004.1,465.0 1003.8,459.8 1003.1,462.3 1003.4,467.5" fill="#141414"/>
<polygon points="1004.1,465.0 1007.7,465.1 1007.0,467.5 1003.4,467.5" fill="#141414"/>
<polygon points="832.1,463.9 832.5,458.7 833.1,461.2 832.7,466.4" fill="#141414"/>
<polygon points="1004.1,465.0 1007.7,465.1 1007.4,459.8 1003.8,459.8" fill="#141414"/>
<polygon points="828.5,463.9 832.1,463.9 832.7,466.4 829.2,466.3" fill="#141414"/>
<polygon points="828.5,463.9 832.1,463.9 832.5,458.7 828.9,458.6" fill="#141414"/>
<polygon points="940.6,453.6 940.6,448.5 940.4,451.1 940.4,456.2" fill="#141414"/>
<polygon points="940.6,453.6 944.2,453.6 943.9,456.2 940.4,456.2" fill="#141414"/>
<polygon points="940.6,453.6 944.2,453.6 944.1,448.5 940.6,448.5" fill="#141414"/>
<polygon points="934.6,455.0 934.6,448.2 934.4,450.2 934.5,456.9" fill="#5a5a52"/>
<polygon points="934.6,455.0 939.9,455.0 939.8,457.0 934.5,456.9" fill="#5a5a52"/>
<polygon points="934.6,455.0 939.9,455.0 939.8,448.3 934.6,448.2" fill="#8d8d82"/>
<polygon points="930.3,453.6 930.2,448.4 930.1,451.0 930.2,456.1" fill="#141414"/>
<polygon points="930.3,453.6 933.8,453.6 933.7,456.1 930.2,456.1" fill="#141414"/>
<polygon points="930.3,453.6 933.8,453.6 933.8,448.5 930.2,448.4" fill="#141414"/>
<polygon points="908.9,454.8 909.0,448.1 909.0,450.0 908.9,456.8" fill="#5a5a52"/>
<polygon points="903.6,454.8 908.9,454.8 908.9,456.8 903.7,456.7" fill="#5a5a52"/>
<polygon points="903.6,454.8 908.9,454.8 909.0,448.1 903.7,448.0" fill="#8d8d82"/>
<polygon points="924.3,454.9 924.3,448.2 924.2,450.1 924.2,456.9" fill="#5a5a52"/>
<polygon points="924.3,454.9 929.6,454.9 929.5,456.9 924.2,456.9" fill="#5a5a52"/>
<polygon points="924.3,454.9 929.6,454.9 929.6,448.2 924.3,448.2" fill="#8d8d82"/>
<polygon points="913.1,453.4 913.2,448.3 913.2,450.9 913.1,456.0" fill="#141414"/>
<polygon points="909.6,453.4 913.1,453.4 913.1,456.0 909.6,455.9" fill="#141414"/>
<polygon points="909.6,453.4 913.1,453.4 913.2,448.3 909.6,448.3" fill="#141414"/>
<polygon points="919.9,453.5 919.9,448.4 919.9,450.9 919.9,456.0" fill="#141414"/>
<polygon points="919.9,453.5 923.5,453.5 923.4,456.0 919.9,456.0" fill="#141414"/>
<polygon points="919.9,453.5 923.5,453.5 923.5,448.4 919.9,448.4" fill="#141414"/>
<polygon points="913.9,454.8 919.2,454.9 919.2,456.8 913.9,456.8" fill="#5a5a52"/>
<polygon points="913.9,454.8 919.2,454.9 919.3,448.1 914.0,448.1" fill="#8d8d82"/>
<polygon points="837.6,465.3 838.1,458.5 838.6,460.4 838.1,467.2" fill="#5a5a52"/>
<polygon points="832.2,465.3 837.6,465.3 838.1,467.2 832.7,467.2" fill="#5a5a52"/>
<polygon points="832.2,465.3 837.6,465.3 838.1,458.5 832.8,458.4" fill="#8d8d82"/>
<polygon points="998.0,466.4 997.6,459.5 997.1,461.5 997.5,468.3" fill="#5a5a52"/>
<polygon points="998.0,466.4 1003.3,466.4 1002.8,468.3 997.5,468.3" fill="#5a5a52"/>
<polygon points="998.0,466.4 1003.3,466.4 1002.9,459.6 997.6,459.5" fill="#8d8d82"/>
<polygon points="995.7,465.0 995.4,459.8 994.8,462.3 995.1,467.5" fill="#141414"/>
<polygon points="995.7,465.0 999.3,465.0 998.7,467.5 995.1,467.5" fill="#141414"/>
<polygon points="995.7,465.0 999.3,465.0 999.0,459.8 995.4,459.8" fill="#141414"/>
<polygon points="1015.1,469.3 1050.6,469.6 1050.1,464.1 1014.7,463.9" fill="#f9a88a"/>
<path d="M1015.1 469.3L1050.6 469.6" stroke="#ff0000" stroke-width="1.3" fill="none"/>
<path d="M1014.7 463.9L1050.1 464.1" stroke="#ff0000" stroke-width="1.3" fill="none"/>
<polygon points="841.8,463.9 842.1,458.7 842.7,461.2 842.4,466.4" fill="#141414"/>
<polygon points="838.2,463.9 841.8,463.9 842.4,466.4 838.8,466.4" fill="#141414"/>
<polygon points="838.2,463.9 841.8,463.9 842.1,458.7 838.6,458.7" fill="#141414"/>
<polygon points="989.6,466.3 989.2,459.5 988.8,461.4 989.1,468.2" fill="#5a5a52"/>
<polygon points="989.6,466.3 995.0,466.4 994.5,468.3 989.1,468.2" fill="#5a5a52"/>
<polygon points="989.6,466.3 995.0,466.4 994.6,459.5 989.2,459.5" fill="#8d8d82"/>
<polygon points="847.3,465.4 847.7,458.5 848.1,460.5 847.7,467.3" fill="#5a5a52"/>
<polygon points="841.9,465.3 847.3,465.4 847.7,467.3 842.4,467.2" fill="#5a5a52"/>
<polygon points="841.9,465.3 847.3,465.4 847.7,458.5 842.4,458.5" fill="#8d8d82"/>
<polygon points="851.5,464.0 851.8,458.8 852.3,461.3 852.0,466.5" fill="#141414"/>
<polygon points="847.9,464.0 851.5,464.0 852.0,466.5 848.4,466.5" fill="#141414"/>
<polygon points="847.9,464.0 851.5,464.0 851.8,458.8 848.2,458.8" fill="#141414"/>
<polygon points="857.0,465.5 857.4,458.6 857.7,460.5 857.3,467.3" fill="#5a5a52"/>
<polygon points="851.6,465.4 857.0,465.5 857.3,467.3 852.0,467.3" fill="#5a5a52"/>
<polygon points="851.6,465.4 857.0,465.5 857.4,458.6 852.0,458.6" fill="#8d8d82"/>
<polygon points="861.2,464.1 861.4,458.9 861.9,461.4 861.6,466.6" fill="#141414"/>
<polygon points="857.6,464.1 861.2,464.1 861.6,466.6 858.0,466.5" fill="#141414"/>
<polygon points="857.6,464.1 861.2,464.1 861.4,458.9 857.9,458.8" fill="#141414"/>
<polygon points="866.6,465.5 867.0,458.7 867.3,460.6 866.9,467.4" fill="#5a5a52"/>
<polygon points="861.3,465.5 866.6,465.5 866.9,467.4 861.6,467.4" fill="#5a5a52"/>
<polygon points="861.3,465.5 866.6,465.5 867.0,458.7 861.7,458.6" fill="#8d8d82"/>
<polygon points="974.9,463.6 974.4,449.5 972.8,458.4 973.3,472.2" fill="#f0a9a0"/>
<polygon points="974.9,463.6 978.2,463.7 977.5,449.6 974.4,449.5" fill="#ffffff"/>
<polygon points="802.6,467.9 838.0,468.1 838.4,462.7 803.2,462.5" fill="#f9a88a"/>
<path d="M974.9 463.6L974.4 449.5" stroke="#ff0000" stroke-width="1.3" fill="none" stroke-dasharray="3 1.5"/>
<path d="M978.2 463.7L977.5 449.6" stroke="#ff0000" stroke-width="1.3" fill="none" stroke-dasharray="3 1.5"/>
<path d="M802.6 467.9L838.0 468.1" stroke="#ff0000" stroke-width="1.3" fill="none"/>
<path d="M803.2 462.5L838.4 462.7" stroke="#ff0000" stroke-width="1.3" fill="none"/>
<polygon points="870.8,464.1 871.1,458.9 871.4,461.4 871.2,466.6" fill="#141414"/>
<polygon points="867.3,464.1 870.8,464.1 871.2,466.6 867.7,466.6" fill="#141414"/>
<polygon points="867.3,464.1 870.8,464.1 871.1,458.9 867.5,458.9" fill="#141414"/>
<polygon points="961.7,464.8 961.5,459.5 961.1,462.0 961.3,467.2" fill="#141414"/>
<polygon points="961.7,464.8 965.2,464.8 964.9,467.2 961.3,467.2" fill="#141414"/>
<polygon points="961.7,464.8 965.2,464.8 965.1,459.6 961.5,459.5" fill="#141414"/>
<polygon points="876.3,465.6 876.6,458.7 876.8,460.7 876.6,467.5" fill="#5a5a52"/>
<polygon points="871.0,465.5 876.3,465.6 876.6,467.5 871.2,467.4" fill="#5a5a52"/>
<polygon points="871.0,465.5 876.3,465.6 876.6,458.7 871.3,458.7" fill="#8d8d82"/>
<polygon points="955.6,466.1 955.4,459.3 955.2,461.2 955.3,468.0" fill="#5a5a52"/>
<polygon points="955.6,466.1 960.9,466.2 960.7,468.0 955.3,468.0" fill="#5a5a52"/>
<polygon points="955.6,466.1 960.9,466.2 960.7,459.3 955.4,459.3" fill="#8d8d82"/>
<polygon points="880.5,464.2 880.7,459.0 881.0,461.5 880.8,466.7" fill="#141414"/>
<polygon points="877.0,464.2 880.5,464.2 880.8,466.7 877.3,466.7" fill="#141414"/>
<polygon points="877.0,464.2 880.5,464.2 880.7,459.0 877.2,459.0" fill="#141414"/>
<polygon points="951.2,464.7 951.1,459.5 950.8,462.0 950.9,467.2" fill="#141414"/>
<polygon points="951.2,464.7 954.8,464.7 954.5,467.2 950.9,467.2" fill="#141414"/>
<polygon points="951.2,464.7 954.8,464.7 954.7,459.5 951.1,459.5" fill="#141414"/>
<polygon points="945.1,466.0 945.0,459.2 944.8,461.1 944.9,467.9" fill="#5a5a52"/>
<polygon points="945.1,466.0 950.5,466.1 950.3,468.0 944.9,467.9" fill="#5a5a52"/>
<polygon points="945.1,466.0 950.5,466.1 950.3,459.2 945.0,459.2" fill="#8d8d82"/>
<polygon points="940.8,464.6 940.7,459.4 940.5,461.9 940.6,467.1" fill="#141414"/>
<polygon points="940.8,464.6 944.3,464.6 944.1,467.1 940.6,467.1" fill="#141414"/>
<polygon points="940.8,464.6 944.3,464.6 944.3,459.4 940.7,459.4" fill="#141414"/>
<polygon points="890.6,463.1 891.0,449.0 891.7,457.9 891.3,471.7" fill="#f0a9a0"/>
<polygon points="887.4,463.1 890.6,463.1 891.0,449.0 887.8,449.0" fill="#ffffff"/>
<path d="M887.4 463.1L887.8 449.0" stroke="#ff0000" stroke-width="1.3" fill="none" stroke-dasharray="3 1.5"/>
<path d="M890.6 463.1L891.0 449.0" stroke="#ff0000" stroke-width="1.3" fill="none" stroke-dasharray="3 1.5"/>
<polygon points="934.7,466.0 934.6,459.1 934.5,461.0 934.6,467.9" fill="#5a5a52"/>
<polygon points="934.7,466.0 940.0,466.0 939.9,467.9 934.6,467.9" fill="#5a5a52"/>
<polygon points="934.7,466.0 940.0,466.0 940.0,459.1 934.6,459.1" fill="#8d8d82"/>
<polygon points="930.3,464.5 930.3,459.3 930.2,461.8 930.2,467.0" fill="#141414"/>
<polygon points="930.3,464.5 933.9,464.6 933.7,467.0 930.2,467.0" fill="#141414"/>
<polygon points="930.3,464.5 933.9,464.6 933.9,459.3 930.3,459.3" fill="#141414"/>
<polygon points="908.7,465.8 908.8,458.9 908.9,460.9 908.8,467.7" fill="#5a5a52"/>
<polygon points="903.4,465.8 908.7,465.8 908.8,467.7 903.5,467.7" fill="#5a5a52"/>
<polygon points="903.4,465.8 908.7,465.8 908.8,458.9 903.5,458.9" fill="#8d8d82"/>
<polygon points="924.2,465.9 924.3,459.0 924.2,461.0 924.2,467.8" fill="#5a5a52"/>
<polygon points="924.2,465.9 929.6,465.9 929.5,467.8 924.2,467.8" fill="#5a5a52"/>
<polygon points="924.2,465.9 929.6,465.9 929.6,459.1 924.3,459.0" fill="#8d8d82"/>
<polygon points="913.0,464.4 913.1,459.2 913.1,461.7 913.0,466.9" fill="#141414"/>
<polygon points="909.4,464.4 913.0,464.4 913.0,466.9 909.5,466.9" fill="#141414"/>
<polygon points="909.4,464.4 913.0,464.4 913.1,459.2 909.5,459.2" fill="#141414"/>
<polygon points="919.9,464.5 919.9,459.3 919.9,461.8 919.8,466.9" fill="#141414"/>
<polygon points="919.9,464.5 923.4,464.5 923.4,467.0 919.8,466.9" fill="#141414"/>
<polygon points="919.9,464.5 923.4,464.5 923.5,459.3 919.9,459.3" fill="#141414"/>
<polygon points="913.8,465.8 919.2,465.9 919.2,467.8 913.8,467.7" fill="#5a5a52"/>
<polygon points="913.8,465.8 919.2,465.9 919.2,459.0 913.9,459.0" fill="#8d8d82"/>
<polygon points="979.7,469.1 1015.1,469.3 1014.7,463.9 979.4,463.7" fill="#f9a88a"/>
<path d="M979.7 469.1L1015.1 469.3" stroke="#ff0000" stroke-width="1.3" fill="none"/>
<path d="M979.4 463.7L1014.7 463.9" stroke="#ff0000" stroke-width="1.3" fill="none"/>
<polygon points="838.0,468.1 873.4,468.4 873.6,463.0 838.4,462.7" fill="#f9a88a"/>
<path d="M838.0 468.1L873.4 468.4" stroke="#ff0000" stroke-width="1.3" fill="none"/>
<path d="M838.4 462.7L873.6 463.0" stroke="#ff0000" stroke-width="1.3" fill="none"/>
<polygon points="944.2,468.9 979.7,469.1 979.4,463.7 944.2,463.4" fill="#f9a88a"/>
<path d="M944.2 468.9L979.7 469.1" stroke="#ff0000" stroke-width="1.3" fill="none"/>
<path d="M944.2 463.4L979.4 463.7" stroke="#ff0000" stroke-width="1.3" fill="none"/>
<polygon points="873.4,468.4 908.8,468.6 908.9,463.2 873.6,463.0" fill="#f9a88a"/>
<path d="M873.4 468.4L908.8 468.6" stroke="#ff0000" stroke-width="1.3" fill="none"/>
<path d="M873.6 463.0L908.9 463.2" stroke="#ff0000" stroke-width="1.3" fill="none"/>
<polygon points="908.8,468.6 944.2,468.9 944.2,463.4 908.9,463.2" fill="#f9a88a"/>
<path d="M908.8 468.6L944.2 468.9" stroke="#ff0000" stroke-width="1.3" fill="none"/>
<path d="M908.9 463.2L944.2 463.4" stroke="#ff0000" stroke-width="1.3" fill="none"/>
<path d="M661.2 466.9L725.4 174.3" stroke="#ff0000" stroke-width="1.3" fill="none" stroke-dasharray="3 2"/>
<path d="M1115.6 470.0L1069.5 176.1" stroke="#ff0000" stroke-width="1.3" fill="none" stroke-dasharray="3 2"/>
<polygon points="1080,470.5 1123.0,470.5 1123.0,474.6 1080,474.6" fill="#f8a17e"/>
<polygon points="1080,474.6 1123.0,474.6 1121.9368131868132,476.4 1080,476.4" fill="#e6e6e6"/>
<polygon points="1080,476.4 1121.9368131868132,476.4 1120.8145604395604,478.3 1080,478.3" fill="#b0b0b0"/>
<polygon points="1080,478.3 1120.8145604395604,478.3 1118.0384615384617,483 1080,483" fill="#f8a17e"/>
<polygon points="1080,483 1118.0384615384617,483 1116.739010989011,485.2 1080,485.2" fill="#f0f0f0"/>
<polygon points="1080,485.2 1116.739010989011,485.2 1109.9464285714287,496.7 1080,496.7" fill="#f8a17e"/>
<polygon points="1080,496.7 1109.9464285714287,496.7 1108.706043956044,498.8 1080,498.8" fill="#e8e8e8"/>
<polygon points="1080,498.8 1108.706043956044,498.8 1101.9134615384614,510.3 1080,510.3" fill="#f8a17e"/>
<polygon points="1080,510.3 1101.9134615384614,510.3 1101.2046703296703,511.5 1080,511.5" fill="#3a3a44"/>
<polygon points="1080,511.5 1101.2046703296703,511.5 1100.4368131868132,512.8 1080,512.8" fill="#dcdce8"/>
<rect x="1095" y="494" width="6" height="2.500" fill="#c98a68"/>
<path d="M869.800 298L868 236" stroke="#0000ff" stroke-width="3" fill="none"/><path d="M860.500 237L866.800 219L874.300 237Q867.500 240 860.500 237z" fill="#0000ff"/>
</svg><!-- TOP BAR -->
<div id="topbar">
  <div id="logo"><svg width="48" height="15" viewBox="0 0 48 15"><text x="4" y="12.600" textLength="41" lengthAdjust="spacingAndGlyphs" font-family="Liberation Sans, sans-serif" font-size="12" font-weight="bold" fill="#222">BiMiT</text><rect x="32.600" y="3.600" width="1.900" height="1.900" fill="#e00000"/></svg></div>
  <svg class="abs" style="left:338px;top:2px" width="24" height="22" viewBox="0 0 24 22" fill="none" stroke="#e0e0e0" stroke-width="1.7"><rect x="2.5" y="6" width="19" height="12.5" rx="1"/><path d="M8.5 6V3.2h7V6M2.5 11.5h19M12 10v3"/></svg>
  <svg class="abs" style="left:371px;top:2px" width="26" height="22" viewBox="0 0 26 22" fill="#e0e0e0" stroke="none"><circle cx="13" cy="6.2" r="2.6" fill="none" stroke="#e0e0e0" stroke-width="1.6"/><path d="M7 18.5c0-4.5 2.6-6.6 6-6.6s6 2.100 6 6.600h-1.700c0-3.400-1.700-5-4.300-5s-4.300 1.600-4.300 5z"/><circle cx="5" cy="9.300" r="1.900"/><circle cx="21" cy="9.300" r="1.900"/><path d="M1.500 18.500c0-3.800 1.400-5.600 3.600-5.600 1 0 1.600.300 2 .700-1 1.300-1.500 3-1.500 4.900zM24.500 18.500c0-3.800-1.400-5.600-3.600-5.600-1 0-1.600.300-2 .700 1 1.300 1.500 3 1.500 4.900z"/></svg>
  <svg class="abs" style="left:407px;top:1px" width="26" height="26" viewBox="0 0 26 26" fill="none" stroke="#e0e0e0" stroke-width="1.700"><path d="M10.500 21.800C5.500 19.800 3 16 3 11.500V7L11 4l8 3v4.300"/><circle cx="17" cy="17.500" r="5"/><circle cx="17" cy="15.900" r="1.100" fill="#e0e0e0" stroke="none"/><path d="M14.500 19.900c.5-1.500 1.400-2 2.500-2s2 .500 2.500 2z" fill="#e0e0e0" stroke="none"/></svg>
  <div class="sep" style="left:434px"></div>
  <div id="space">Базовое пространство</div>
  <svg class="abs" style="left:618px;top:10px" width="12" height="7" viewBox="0 0 12 7"><path d="M0.300 0h11.400L6 6.300z" fill="#fff"/></svg>
  <div id="title">Школа</div>
  <svg class="abs" style="left:1064px;top:1.500px" width="22" height="22" viewBox="0 0 24 24" fill="none" stroke="#e0e0e0" stroke-width="2.300"><circle cx="12" cy="12" r="3.100"/><path d="M10.300 2.800h3.400l.5 2.700 1.900.8 2.300-1.600 2.400 2.400-1.600 2.300.8 1.900 2.700.5v3.400l-2.700.5-.8 1.900 1.600 2.300-2.400 2.400-2.300-1.600-1.900.8-.5 2.700h-3.400l-.5-2.700-1.900-.8-2.300 1.600-2.400-2.400 1.600-2.300-.8-1.900-2.700-.5v-3.400l2.700-.5.800-1.900-1.600-2.300 2.400-2.400 2.300 1.600 1.900-.8z" transform="translate(1.200 1.200) scale(0.900)"/></svg>
  <svg class="abs" style="left:1100px;top:4px" width="22" height="18" viewBox="0 0 22 18"><path d="M13 1.500l8 6.300-8 6.300v-3.800C7.500 10.300 4 12 1.500 16 2.300 10 6 5.800 13 5.200z" fill="#e0e0e0"/></svg>
  <div class="sep" style="left:1603px"></div>
  <svg class="abs" style="left:1626px;top:3px" width="22" height="22" viewBox="0 0 22 22" fill="none" stroke="#e6e6e6" stroke-width="2.200"><circle cx="8.500" cy="8.500" r="5.700"/><path d="M12.800 12.800l6.700 6.700"/></svg>
  <svg class="abs" style="left:1694px;top:0px" width="24" height="26" viewBox="0 0 24 26" fill="#e6e6e6" stroke="#e6e6e6" stroke-width="2.200" stroke-linecap="round"><circle cx="3.300" cy="6.300" r="1.500" stroke="none"/><path d="M8 6.300h12.500M8 12.500h12.500M8 18.600h12.500"/><circle cx="3.300" cy="12.500" r="1.500" stroke="none"/><circle cx="3.300" cy="18.600" r="1.500" stroke="none"/></svg>
  <svg class="abs" style="left:1729px;top:1.500px" width="20" height="23" viewBox="0 0 20 22" fill="#e6e6e6"><path d="M10 1.500c.9 0 1.500.6 1.500 1.500v.6c3 .7 4.800 3.200 4.800 6.400v5l2 2v1H1.700v-1l2-2v-5c0-3.200 1.800-5.700 4.800-6.400V3c0-.9.600-1.500 1.500-1.500zM8 19h4c0 1.100-.9 2-2 2s-2-.9-2-2z"/></svg>
  <svg class="abs" style="left:1762px;top:2px" width="26" height="24" viewBox="0 0 26 24"><path d="M10.500 4.500a8 8 0 1 0 8 8" fill="none" stroke="#e6e6e6" stroke-width="2"/><path d="M9.500 0.800l5 3.800-5 3.800z" fill="#e6e6e6"/><text x="6.200" y="15.300" font-family="Liberation Sans, sans-serif" font-size="6.500" font-weight="bold" fill="#e6e6e6">10</text><circle cx="18" cy="18.300" r="4" fill="#ee0a0a"/></svg>
  <svg class="abs" style="left:1798px;top:4px" width="18" height="18" viewBox="0 0 20 20"><rect x="0" y="0" width="20" height="20" rx="2.200" fill="#e6e6e6"/><circle cx="10" cy="7.300" r="3.300" fill="#555"/><path d="M3.300 16.800c0-3.400 3.300-5 6.700-5s6.700 1.600 6.700 5z" fill="#555"/></svg>
</div>
<!-- LEFT SIDEBAR -->
<div class="lb" style="top:37px"><svg viewBox="0 0 48 48" fill="none" stroke="#e2e2e2" stroke-width="2"><rect x="8" y="9" width="12.500" height="6.200" rx="3.100" fill="#e2e2e2" stroke="none"/><path d="M19 12.200h4.800V36h6M23.800 16h6M23.800 26h6"/><rect x="31" y="13.800" width="9.500" height="4.400" rx="2.200" fill="#e2e2e2" stroke="none"/><rect x="31" y="23.800" width="9.500" height="4.400" rx="2.200" fill="#e2e2e2" stroke="none"/><rect x="31" y="33.800" width="9.500" height="4.400" rx="2.200" fill="#e2e2e2" stroke="none"/></svg></div>
<div class="lb" style="top:87px"><svg viewBox="0 0 48 48" fill="none" stroke="#e2e2e2" stroke-width="2.200"><circle cx="19" cy="15.800" r="3.200" fill="#e2e2e2" stroke="none"/><circle cx="19" cy="31.200" r="3.200" fill="#e2e2e2" stroke="none"/><circle cx="28.700" cy="27" r="3.200" fill="#e2e2e2" stroke="none"/><path d="M19 16v15M19 17c.5 4.500 4 8.500 9.500 10"/></svg></div>
<div class="lb" style="top:137px"><svg viewBox="0 0 48 48" fill="none" stroke="#e2e2e2" stroke-width="2" stroke-linecap="round" stroke-linejoin="round"><path d="M10.500 14c8 0 12 4 14.500 9.500s6 8.500 14 8.500M10.500 32.500c8 0 11.500-3.500 14.500-9s7-9.500 14-9.500"/><path d="M33 8.500l7 5.200-7 5M33 27l7 5-7 5.500"/></svg></div>
<div class="lb" style="top:187px"><svg viewBox="0 0 48 48" fill="none" stroke="#e2e2e2" stroke-width="2.800" stroke-linecap="round" stroke-linejoin="round"><path d="M30 14.500H16.500l10 8.800-10.500 9h14.500"/></svg></div>
<div class="lb" style="top:237px"><svg viewBox="0 0 48 48" fill="none" stroke="#e2e2e2" stroke-width="2.600" stroke-linecap="round" stroke-linejoin="round"><path d="M25.500 14H12.500l9.800 9-10.300 9.500h14"/><path d="M34.500 18.500v10M29.500 23.500h10" stroke-width="1.800"/></svg></div>
<div class="lb" style="top:287px"><svg viewBox="0 0 48 48" fill="none" stroke="#e2e2e2" stroke-width="1.900" stroke-linejoin="round"><path d="M12.300 11.500c8 0 16-1.500 23.800.500-1 8-1.500 16-.800 24.500-8 .500-15.500.500-23 .200z"/><path d="M26 33.800h8v2" stroke-width="1.600"/><text x="15.800" y="28" font-family="Liberation Sans, sans-serif" font-size="10.500" fill="#e2e2e2" stroke="none">2D</text></svg></div>
<div class="lb" style="top:337px"><svg viewBox="0 0 48 48" fill="none" stroke="#e2e2e2" stroke-width="1.800"><rect x="20" y="8.500" width="8" height="10" rx="1"/><rect x="8.500" y="28.500" width="8" height="10" rx="1"/><rect x="20" y="28.500" width="8" height="10" rx="1"/><rect x="31.500" y="28.500" width="8" height="10" rx="1"/><path d="M24 18.500v10M12.500 28.500v-5h23v5"/></svg></div>
<div class="lb" style="top:387px"><svg viewBox="0 0 48 48" fill="none" stroke="#e2e2e2" stroke-width="2" stroke-linecap="round" stroke-linejoin="round"><path d="M12.500 16.500c3-3.500 5-4 7-2.500l6 5.500c2-2 6-7.500 10.500-10M12 25c2-1.500 4-2 6-.5s4 4.500 6 4.500c3-.5 6-3 11-3.500M12.500 37h23"/></svg></div>
<div class="lb" style="top:437px"><svg viewBox="0 0 48 48" fill="none" stroke="#e2e2e2" stroke-width="2" stroke-linejoin="round"><path d="M19.500 15v-2.500a3.200 3.200 0 0 1 6.400 0V15h6.600v6.500h2.300a3.200 3.200 0 0 1 0 6.400h-2.300V36h-6.300v-2.300a3 3 0 0 0-6 0V36H13v-6.500h2.200a3 3 0 0 0 0-6H13V15z"/></svg></div>
<div class="lb" style="top:487px"><svg viewBox="0 0 48 48" fill="none" stroke="#e2e2e2" stroke-width="2" stroke-linecap="round" stroke-linejoin="round"><circle cx="22.500" cy="16.500" r="5.300"/><path d="M11.500 32c.5-6 5-8.500 11-8.500 3 0 5.500.700 7.500 2M11.500 32h13"/><path d="M27.500 32l4 4.200 6.500-8.700" stroke-width="2.600"/></svg></div>
<div class="lb" style="top:537px"><svg viewBox="0 0 48 48" fill="none" stroke="#e2e2e2" stroke-width="1.900" stroke-linecap="round" stroke-linejoin="round"><path d="M9.500 13.500h8.500l3.500 3.500h10v4.500M9.500 13.500c0 8 1.500 15 4 21.500M13.500 35h22c1.500-4 2.500-8.500 5.500-13.500H21c-2 4.500-4.500 9-7.500 13.500"/><path d="M34.500 28.500h-10M28 24.500l-4 4 4 4"/></svg></div>
<div class="lb" style="top:587px"><svg viewBox="0 0 48 48" fill="none" stroke="#e2e2e2" stroke-width="2" stroke-linecap="round" stroke-linejoin="round"><circle cx="20" cy="15.500" r="5.300"/><path d="M9.500 30.500c.5-6 4.500-8.500 10.500-8.500 3.500 0 6 .800 8 2.500M9.500 30.500h13.500"/><path d="M34 38c-3-3.500-5-6-5-8.800a5 5 0 0 1 10 0c0 2.800-2 5.300-5 8.800z"/><circle cx="34" cy="29.300" r="1.500" fill="#e2e2e2"/></svg></div>
<div class="lb" style="top:637px"><svg viewBox="0 0 48 48" fill="none" stroke="#e2e2e2" stroke-width="2" stroke-linecap="round"><circle cx="24" cy="23" r="13"/><path d="M15.200 20.500a9.500 9.500 0 0 1 17.600 0" stroke-width="1" stroke-dasharray="1.500 2.300"/><path d="M20.500 29.500l5.800-14 -1.600 15z" fill="#e2e2e2" stroke-width="1.200" stroke-linejoin="round"/><path d="M24 36v3.500M11 40h26"/></svg></div>
<div id="fit"><svg width="32" height="32" viewBox="0 0 32 32" fill="none" stroke="#e2e2e2" stroke-width="1.600"><path d="M4.500 11V4.500H11M21 4.500h6.500V11M27.500 21v6.500H21M11 27.500H4.500V21"/><path d="M16 9.500l5.700 3.300v6.500L16 22.600l-5.700-3.300v-6.500z" fill="#e2e2e2" stroke="none"/></svg></div>
<!-- help -->
<div class="abs" style="left:15px;top:779px;width:24px;height:24px;border-radius:12px;background:#4a4a4a;color:#e8e8e8;font-weight:bold;font-size:15px;line-height:24px;text-align:center">?</div>
<!-- axes gizmo -->
<svg class="abs" style="left:100px;top:645px" width="56" height="46" viewBox="0 0 56 46"><path d="M10 36.500h24" stroke="#e00000" stroke-width="1.400"/><path d="M32.500 34l5.500 2.500-5.500 2.500z" fill="#e00000"/><path d="M10 36V24" stroke="#0000ee" stroke-width="1.600"/><path d="M7.300 25.500L10 17.500l2.700 8z" fill="#0000ee"/><path d="M10 17V14" stroke="#00c000" stroke-width="1"/><circle cx="9.800" cy="36.500" r="4" fill="#b8b8b8"/><circle cx="8.800" cy="35.500" r="1.800" fill="#e0e0e0"/><text x="10.500" y="11" font-family="Liberation Sans, sans-serif" font-size="9" fill="#2222ff" font-weight="bold">z</text><text x="43" y="37.500" font-family="Liberation Sans, sans-serif" font-size="9" fill="#e00000">x</text></svg>
<!-- RIGHT PANEL -->
<div id="panel">
  <div class="ttl">Совмещенные чертежи</div>
  <svg class="abs" style="left:273px;top:10px" width="16" height="16" viewBox="0 0 16 16"><path d="M1.500 1.500l13 13M14.500 1.500l-13 13" stroke="#f0f0f0" stroke-width="2.100" fill="none"/></svg>
  <div class="body">
    <div class="set">Настройки среза</div>
    <svg class="abs" style="left:271.500px;top:6.500px" width="20.500" height="20.500" viewBox="0 0 24 24"><path fill="#555" d="M19.140 12.940c.04-.3.060-.61.060-.94 0-.32-.02-.64-.07-.94l2.030-1.580a.49.49 0 0 0 .12-.61l-1.920-3.320a.488.488 0 0 0-.59-.22l-2.390.96c-.5-.38-1.030-.7-1.620-.94l-.36-2.540a.484.484 0 0 0-.48-.41h-3.840c-.24 0-.43.170-.47.410l-.36 2.540c-.59.240-1.130.57-1.620.94l-2.390-.96c-.22-.08-.47 0-.59.220L2.740 8.870c-.12.210-.08.470.12.610l2.030 1.580c-.05.300-.09.630-.09.940s.02.640.07.940l-2.030 1.580a.49.49 0 0 0-.12.610l1.920 3.320c.12.220.37.290.59.220l2.390-.96c.5.380 1.030.7 1.620.94l.36 2.540c.05.240.24.410.48.410h3.840c.24 0 .44-.17.470-.41l.36-2.540c.59-.24 1.130-.56 1.620-.94l2.390.96c.22.080.47 0 .59-.22l1.920-3.320c.12-.22.070-.47-.12-.61l-2.010-1.580zM12 15.600c-1.980 0-3.600-1.620-3.600-3.600s1.620-3.600 3.600-3.600 3.600 1.620 3.600 3.600-1.620 3.600-3.600 3.600z"/></svg>
    <div class="line"></div>
    <div class="row sel" style="top:42px">Чертеж-2.0</div>
    <div class="row" style="top:72px">Чертеж-1.0</div>
    <div class="abs" style="left:240px;top:47px;width:20px;height:20px;background:#d9d9d9;border-radius:2px"></div>
    <!-- drop -->
    <svg class="abs" style="left:219px;top:50px" width="14" height="15" viewBox="0 0 14 15"><path d="M7 1.300C4.800 4 2.200 6.600 2.200 9.300a4.800 4.800 0 0 0 9.600 0C11.800 6.600 9.200 4 7 1.300z" fill="none" stroke="#222" stroke-width="1.500"/><path d="M2.300 9.300h9.400a4.700 4.700 0 0 1-9.400 0z" fill="#222"/></svg>
    <!-- pencil -->
    <svg class="abs" style="left:243px;top:50px" width="14" height="14" viewBox="0 0 14 14"><path d="M1 13v-2.900l7.600-7.600 2.900 2.900L3.900 13zM9.500 1.600l1.200-1.200c.3-.3.800-.3 1.100 0l1.800 1.800c.3.300.3.800 0 1.100l-1.200 1.200z" fill="#222"/></svg>
    <svg class="abs" style="left:243px;top:80px" width="14" height="14" viewBox="0 0 14 14"><path d="M1 13v-2.900l7.600-7.600 2.900 2.900L3.900 13zM9.500 1.600l1.200-1.200c.3-.3.800-.3 1.100 0l1.800 1.800c.3.300.3.800 0 1.100l-1.200 1.200z" fill="#222"/></svg>
    <!-- trash -->
    <svg class="abs" style="left:268px;top:50px" width="12" height="14" viewBox="0 0 12 14"><path d="M1.500 4h9v8.500c0 .8-.6 1.400-1.400 1.400H2.900c-.8 0-1.400-.6-1.400-1.400zM0.700 1.400h3l.8-.9h3l.8.900h3v1.500H.7z" fill="#222"/></svg>
    <svg class="abs" style="left:268px;top:80px" width="12" height="14" viewBox="0 0 12 14"><path d="M1.500 4h9v8.500c0 .8-.6 1.400-1.400 1.400H2.900c-.8 0-1.400-.6-1.400-1.400zM0.700 1.400h3l.8-.9h3l.8.900h3v1.500H.7z" fill="#222"/></svg>
    <!-- resize grip -->
    <svg class="abs" style="left:281px;top:248px" width="15" height="15" viewBox="0 0 15 15" stroke="#777" stroke-width="1"><path d="M14.500 1L1 14.500M14.500 5L5 14.500M14.500 9L9 14.500M14.500 12.500l-2 2"/></svg>
  </div>
  <!-- red arrow -->
  <svg class="abs" style="left:185px;top:90px;overflow:visible" width="80" height="80" viewBox="0 0 80 80"><defs><filter id="bl" x="-30%" y="-30%" width="160%" height="160%"><feGaussianBlur stdDeviation="1.500"/></filter></defs><g transform="translate(3.500 3.500)" opacity="0.450" filter="url(#bl)"><path d="M10.600 70.300L50 20" stroke="#000" stroke-width="3" fill="none"/><path d="M58.900 8.700L44 15.400l11.700 9.300z" fill="#000"/></g><path d="M10.600 70.300L50.500 19.500" stroke="#c00000" stroke-width="2.700" fill="none"/><path d="M58.900 8.700L44 15.400l11.700 9.300z" fill="#c00000"/></svg>
</div>
<!-- RIGHT SIDEBAR -->
<div id="rbar">
  <div class="hs" style="top:92px"></div><div class="hs" style="top:316px"></div><div class="hs" style="top:363px"></div><div class="hs" style="top:547px"></div><div class="hs" style="top:640px"></div>
  <div class="hl" style="top:233px"></div><div class="hl" style="top:556px"></div><div class="hl" style="top:600px"></div>
  <svg class="abs" style="left:0;top:0" width="35" height="765" viewBox="0 0 35 765" fill="none" stroke="#e6e6e6" stroke-width="1.600" stroke-linejoin="round">
    <!-- cloud tree  centre (18,23.500) -->
    <path d="M11.500 29.500h-1a4.500 4.500 0 0 1-1-8.800 6 6 0 0 1 6-6.200 6.500 6.500 0 0 1 6.200 4.300 5.400 5.400 0 0 1 3.800 10.700h-1.500M18 34.500V20.500M18 26l-3.500-3.500M18 28.500l4-4"/>
    <!-- screen with hexagon  centre y 68 -->
    <path d="M13 75.500H6.500V56h19v6M9.500 78.500h4"/><path d="M16.500 68v-3.500h3.500M27 64.500h3.500V68M30.500 76v3.500H27M20 79.500h-3.500V76" stroke-width="1.400"/><path d="M23.500 67l4 2.300v4.600l-4 2.300-4-2.300v-4.600z" fill="#e6e6e6" stroke="none"/>
    <!-- ruler  y 112-124 -->
    <rect x="6" y="112.500" width="24.500" height="8" stroke-width="1.500"/><path d="M9 120v-3M12 120v-5M15 120v-3M18 120v-5M21 120v-3M24 120v-5M27 120v-3" stroke-width="1.200"/><path d="M5.500 123.700h25.500" stroke-width="1.500"/>
    <!-- section  centre y 160 -->
    <path d="M18 146.500l9-0 -1 13.500z" fill="#e6e6e6" stroke="none" opacity="0"/><path d="M27 146.500v14.500l-8 0z" fill="#e6e6e6" stroke="none"/><path d="M17.500 159.500v14.500l-7.500 0z" fill="#e6e6e6" stroke="none" opacity="0"/><path d="M27 146.800L18 157v17.500l9-10.500z" fill="#e6e6e6" stroke="none" opacity="0"/>
    <path d="M27 146.500L17.500 157v17.500L27 164z" fill="#e0e0e0" stroke="none"/><path d="M5.500 163.500l9.500-6.500h16l-9.500 6.500z" stroke-width="1.300" fill="#555"/><path d="M27 146.500L17.500 157v6.500h4l5.500-4z" fill="#e0e0e0" stroke="none"/>
    <!-- 3D box with plane  centre y 205 -->
    <path d="M6 200l5.500-6.500h19v17l-5.500 6.500H6zM6 200h19v17M25 200l5.500-6.500M11.500 193.500v17H30.500M11.500 210.500L6 217" stroke-width="1.300"/><path d="M14.500 200l5.500-6.500v17l-5.500 6.500z" fill="#e0e0e0" stroke-width="1"/>
    <!-- plan  (highlight) centre y 249 -->
    <path d="M6 240l3.500-3.500h21v18.500h-3v3h-21.500z" stroke-width="1.500"/><path d="M6.500 247.500h24M17.500 237v20.500" stroke-width="1" stroke-dasharray="3 1.500 1 1.500"/><path d="M22.500 253.500h5.500" stroke-width="1"/>
    <!-- target  centre y 293 -->
    <circle cx="18" cy="293" r="8" stroke-width="2"/><circle cx="18" cy="293" r="3.700" fill="#e6e6e6" stroke="none"/><path d="M18 281.500v4M18 300.500v4M6.500 293h4M25.500 293h4" stroke-width="2"/>
    <!-- grid lines centre y 341 -->
    <path d="M5.500 344l24-15M5 354l25-14M7 337l20 14M16 331l14 10" stroke-width="1.200"/>
    <text x="4" y="337" font-family="Liberation Sans, sans-serif" font-size="6.500" fill="#e6e6e6" stroke="none">1</text><text x="13.500" y="330.500" font-family="Liberation Sans, sans-serif" font-size="6.500" fill="#e6e6e6" stroke="none">2</text>
    <!-- dashed box cube  centre y 391 -->
    <rect x="6" y="379.500" width="24" height="23.500" stroke-dasharray="2.200 1.800" stroke-width="1.100"/><path d="M18 384.500l5.500 3v6.500l-5.500 3-5.500-3v-6.500zM12.500 387.500l5.500 3 5.500-3M18 390.500v6.500" stroke-width="1.100"/>
    <!-- dashed eye  centre y 435 -->
    <rect x="6" y="423" width="24" height="23.500" stroke-dasharray="2.200 1.800" stroke-width="1.100"/><path d="M9.500 434.800c2-3.300 5-5 8.500-5s6.500 1.700 8.500 5c-2 3.300-5 5-8.500 5s-6.500-1.700-8.500-5z" fill="#e6e6e6" stroke="none"/><circle cx="18" cy="434.800" r="3.300" fill="#555" stroke="none"/><circle cx="18" cy="434.800" r="1.700" fill="#e6e6e6" stroke="none"/>
    <!-- dashed eye-off centre y 479 -->
    <rect x="6" y="467" width="24" height="23.500" stroke-dasharray="2.200 1.800" stroke-width="1.100"/><path d="M9.500 478.800c2-3.300 5-5 8.500-5s6.500 1.700 8.500 5c-2 3.300-5 5-8.500 5s-6.500-1.700-8.500-5z" fill="#e6e6e6" stroke="none"/><circle cx="18" cy="478.800" r="3.300" fill="#555" stroke="none"/><circle cx="18" cy="478.800" r="1.700" fill="#e6e6e6" stroke="none"/><path d="M11.500 471.500l13 14.500" stroke="#555" stroke-width="3"/><path d="M12 471.500l12.500 14" stroke-width="1.400"/>
    <!-- dashed box x centre y 524 -->
    <path d="M16 535.500H6V511.500h24v10" stroke-dasharray="2.200 1.800" stroke-width="1.100"/><rect x="16" y="521.500" width="16" height="15.500" fill="#e6e6e6" stroke="none"/><path d="M20 525.500l8 8M28 525.500l-8 8" stroke="#444" stroke-width="1.300"/>
    <!-- cube  centre y 572 -->
    <path d="M7.500 563.500l10.500-3 10.500 2.500-10 3.500z" fill="#fafafa" stroke="none"/><path d="M7.500 563.500l11 3v17l-7.500-5z" fill="#e0e0e0" stroke="none"/><path d="M18.500 566.500l10-3.500-2 14.500-8 6z" fill="#c8c8c8" stroke="none"/><path d="M7.500 563.500l11 3 10-3.500M18.500 566.500v17" stroke="#f4f4f4" stroke-width="1"/>
    <!-- orbit  centre y 616 -->
    <ellipse cx="18" cy="616" rx="11" ry="6.500" stroke-width="2"/><ellipse cx="18" cy="616" rx="6" ry="11" stroke-width="2"/><path d="M18 611.500v4.500l-3 3.500M18 616l3 3.500" stroke-width="1.100"/>
    <!-- corner grip -->
    <path d="M2 755v7h7z" fill="#e6e6e6" stroke="none"/>
  </svg>
</div>
<!-- DIALOG -->
<div id="dlg"><div class="in"></div></div>
<div class="dl" style="top:484px;letter-spacing:0.16px">Укажите настройки, которые необходимо применить</div>
<div class="dl" style="top:530px">Наименование</div>
<div class="dl" style="top:578px;letter-spacing:0.07px">Масштабирование (м)</div>
<div class="dl" style="top:626px;letter-spacing:0.15px">Поворот (градусы)</div>
<div class="dl" style="top:674px;letter-spacing:-0.1px">Смещение (м)</div>
<div class="dl" style="top:726px;letter-spacing:0.2px">Прозрачность</div>
<div class="fld" style="left:872px;top:520.500px;width:200px"><span class="lab">Наименование</span><span class="val">Чертеж-2.0</span></div>
<div class="fld" style="left:872px;top:568.500px;width:200px"><span class="lab">Масштаб</span><span class="val">74.498</span></div>
<div class="fld" style="left:846px;top:616.500px;width:70px"><span class="lab">X</span><span class="val">0.000</span></div>
<div class="fld" style="left:924px;top:616.500px;width:70px"><span class="lab">Y</span><span class="val">0.000</span></div>
<div class="fld" style="left:1002px;top:616.500px;width:70px"><span class="lab">Z</span><span class="val">-0.703</span></div>
<div class="fld" style="left:846px;top:664.500px;width:70px"><span class="lab">X</span><span class="val">24.203</span></div>
<div class="fld" style="left:924px;top:664.500px;width:70px"><span class="lab">Y</span><span class="val">27.26</span></div>
<div class="fld" style="left:1002px;top:664.500px;width:70px"><span class="lab">Z</span><span class="val">10.406</span></div>
<div class="abs" style="left:767px;top:735px;width:297px;height:2px;background:#8c8c8c"></div>
<div class="abs" style="left:767px;top:735px;width:30px;height:2px;background:#3a8eb2"></div>
<div class="abs" style="left:790px;top:729px;width:13px;height:13px;border-radius:7px;background:#3a8eb2"></div>
<div class="btn" style="left:894px;width:74px;background:#c2c2c2;color:#333">Отмена</div>
<div class="btn" style="left:977px;width:95px;background:#3a8eb2;color:#fff">Сохранить</div>
</body>
</html>
